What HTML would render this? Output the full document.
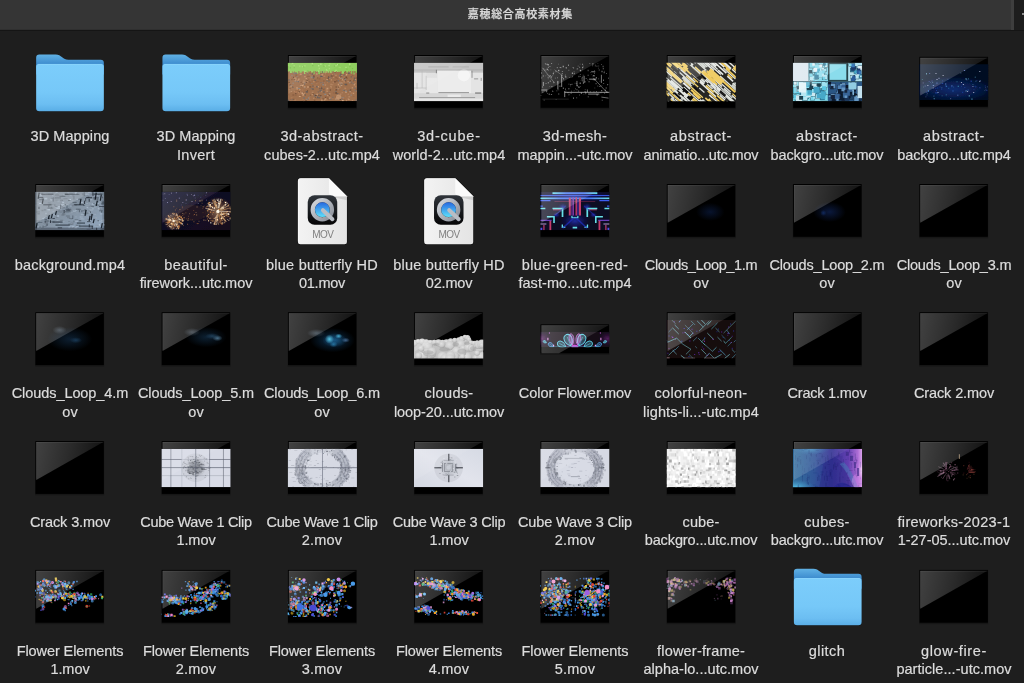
<!DOCTYPE html>
<html lang="ja"><head><meta charset="utf-8"><title>嘉穂総合高校素材集</title>
<style>
html,body{margin:0;padding:0;}
body{width:1024px;height:683px;overflow:hidden;background:#1e1e1e;position:relative;
 font-family:"Liberation Sans","Noto Sans CJK JP",sans-serif;color:#dfdfdf;}
#tb{position:absolute;left:0;top:0;width:1024px;height:31px;background:linear-gradient(to bottom,#353535 0,#353535 29px,#2f2f2f 29px,#2f2f2f 30px,#151515 30px,#151515 31px);}
#tbr{position:absolute;left:1011px;top:0;width:13px;height:30px;background:linear-gradient(to right,#3e3e3e 0,#3e3e3e 3px,#1d1d1d 3px);}
#title{will-change:transform;position:absolute;left:0;top:0;width:1040.7px;text-align:center;line-height:29.6px;font-size:11px;letter-spacing:0.68px;font-weight:500;color:#dadada;white-space:nowrap;-webkit-text-stroke:0.25px #dadada;}
#plus{position:absolute;left:1022px;top:13px;width:2px;height:2px;background:#8c8c8c;}
.ic{position:absolute;width:69px;height:58px;}
.lay{will-change:transform;}
.ic svg{position:absolute;left:0;top:0;overflow:visible;display:block;}
.lb{will-change:transform;position:absolute;width:140px;top:0;height:1px;text-align:center;font-size:14.5px;line-height:18px;white-space:nowrap;color:#dcdcdc;-webkit-text-stroke:0.2px #dcdcdc;}
.lb span{position:absolute;left:0;width:140px;display:block;}
</style></head>
<body>
<div id="tb"></div><div id="tbr"></div><div id="title">嘉穂総合高校素材集</div><div id="plus"></div>
<div class="ic" style="left:36px;top:54px"><svg width="69" height="58" viewBox="0 0 69 58" ><g transform="translate(0.15,0.57)"><defs><linearGradient id="fb0" x1="0" y1="0" x2="0" y2="1"><stop offset="0" stop-color="#60b1e4"/><stop offset="0.45" stop-color="#3f8ed0"/><stop offset="1" stop-color="#3f8ed0"/></linearGradient><linearGradient id="ff0" x1="0" y1="0" x2="0" y2="1"><stop offset="0" stop-color="#7ccdfb"/><stop offset="0.6" stop-color="#76c8f8"/><stop offset="0.85" stop-color="#6cbef2"/><stop offset="1" stop-color="#5aaee6"/></linearGradient></defs><g><path d="M0.3 54 Q0.3 57.3 3.4 57.3 L64.3 57.3 Q67.4 57.3 67.4 54 Z" fill="#000" fill-opacity="0.35"/><path d="M0 3.2 Q0 0 3.2 0 L19.5 0 C22.6 0 24 1.2 26 2.8 C28 4.4 29.2 5.1 32.2 5.1 L64.5 5.1 Q67.7 5.1 67.7 8.3 L67.7 20 L0 20 Z" fill="url(#fb0)"/><path d="M0 12.2 Q0 9.35 2.9 9.35 L64.8 9.35 Q67.7 9.35 67.7 12.2 L67.7 53.4 Q67.7 56.6 64.5 56.6 L3.2 56.6 Q0 56.6 0 53.4 Z" fill="url(#ff0)"/><rect x="1.5" y="9.35" width="64.7" height="0.7" fill="#92d8fd" fill-opacity="0.8"/></g></g></svg></div><div class="lb" style="left:-0.3px"><span style="top:127.1px;letter-spacing:0.06px">3D Mapping</span></div>
<div class="ic" style="left:162px;top:54px"><svg width="69" height="58" viewBox="0 0 69 58" ><g transform="translate(0.44,0.57)"><defs><linearGradient id="fb1" x1="0" y1="0" x2="0" y2="1"><stop offset="0" stop-color="#60b1e4"/><stop offset="0.45" stop-color="#3f8ed0"/><stop offset="1" stop-color="#3f8ed0"/></linearGradient><linearGradient id="ff1" x1="0" y1="0" x2="0" y2="1"><stop offset="0" stop-color="#7ccdfb"/><stop offset="0.6" stop-color="#76c8f8"/><stop offset="0.85" stop-color="#6cbef2"/><stop offset="1" stop-color="#5aaee6"/></linearGradient></defs><g><path d="M0.3 54 Q0.3 57.3 3.4 57.3 L64.3 57.3 Q67.4 57.3 67.4 54 Z" fill="#000" fill-opacity="0.35"/><path d="M0 3.2 Q0 0 3.2 0 L19.5 0 C22.6 0 24 1.2 26 2.8 C28 4.4 29.2 5.1 32.2 5.1 L64.5 5.1 Q67.7 5.1 67.7 8.3 L67.7 20 L0 20 Z" fill="url(#fb1)"/><path d="M0 12.2 Q0 9.35 2.9 9.35 L64.8 9.35 Q67.7 9.35 67.7 12.2 L67.7 53.4 Q67.7 56.6 64.5 56.6 L3.2 56.6 Q0 56.6 0 53.4 Z" fill="url(#ff1)"/><rect x="1.5" y="9.35" width="64.7" height="0.7" fill="#92d8fd" fill-opacity="0.8"/></g></g></svg></div><div class="lb" style="left:125.9px"><span style="top:127.1px;letter-spacing:0.06px">3D Mapping</span><span style="top:146.1px;letter-spacing:0.29px">Invert</span></div>
<div class="ic" style="left:288px;top:55px"><svg width="68.4" height="53" viewBox="0 0 68.4 53" ><g transform="translate(0.03,0.0)"><defs><linearGradient id="gl2" gradientUnits="userSpaceOnUse" x1="0" y1="0" x2="68" y2="14"><stop offset="0" stop-color="#fff" stop-opacity="0.26"/><stop offset="0.5" stop-color="#fff" stop-opacity="0.17"/><stop offset="1" stop-color="#fff" stop-opacity="0.07"/></linearGradient><clipPath id="cp2"><rect x="-0.35" y="7.65" width="69.3" height="38.51"/></clipPath><filter id="bl2" x="-5%" y="-5%" width="110%" height="110%"><feGaussianBlur stdDeviation="0.35"/></filter></defs><g transform="translate(0,0)"><rect x="-0.4" y="0.3" width="69.2" height="54.0" fill="#000" fill-opacity="0.25"/><rect x="0" y="0" width="68.4" height="52.8" fill="#000"/><g clip-path="url(#cp2)"><g filter="url(#bl2)" transform="translate(-0.35,0.555) scale(1.019,1.0135)"><rect x="0" y="7" width="68" height="38" fill="#9f7150"/><path fill="#8a8684" fill-opacity="0.7" d="M15.9 30.8h1.4v1.4h-1.4zM34 26.2h1.4v1.4h-1.4zM54.1 33.6h1.8v1.4h-1.8zM15.8 26.3h1.8v1h-1.8zM50.2 42.1h1v1.4h-1zM32.3 40.1h1.4v1.4h-1.4zM45.4 17.8h1v1h-1zM3.3 19.4h1.8v1h-1.8zM31.3 33h1v1h-1zM2 16.1h1.8v1h-1.8zM21.2 39.4h1v1h-1zM43 15.8h1.8v1h-1.8zM50.3 26.4h1.8v1.4h-1.8zM48.2 32.4h1.8v1h-1.8zM51.3 28.9h1.4v1.4h-1.4zM52 41.1h1v1h-1zM8.2 20h1.4v1.4h-1.4zM6.8 24.4h1.4v1.4h-1.4zM42.1 19.5h1.4v1h-1.4z"/><path fill="#d0a27c" fill-opacity="0.7" d="M40.6 41.4h1.4v1.4h-1.4zM62.9 31.1h1v1.4h-1zM11.6 33.1h1v1h-1zM41.8 16.5h1.4v1h-1.4zM28.1 37.7h1.8v1.4h-1.8zM25 25.4h1.4v1h-1.4zM63.9 36.6h1.4v1.4h-1.4zM42.4 23.5h1v1h-1zM33.2 42.7h1.8v1h-1.8zM43.5 18.8h1v1h-1zM64.8 28.1h1.4v1.4h-1.4zM42 29.9h1v1.4h-1zM19.5 25h1v1h-1zM53.3 22.6h1v1.4h-1zM15.3 43.9h1v1.4h-1z"/><path fill="#b07c58" fill-opacity="1" d="M12.8 35.8h1.8v1.4h-1.8zM37.5 33h1.8v1.4h-1.8zM3 41.2h1.8v1h-1.8zM32.8 19.6h1v1.4h-1zM65.2 27h1.8v1h-1.8zM7.5 35.2h1.8v1.4h-1.8zM12.9 36.9h1.8v1.4h-1.8zM10.3 37.1h1.8v1.4h-1.8zM18.7 35.6h1.4v1h-1.4zM10 35.5h1.8v1.4h-1.8zM32.2 27.2h1v1.4h-1zM26.1 29.5h1.4v1.4h-1.4zM20.3 40.9h1.4v1.4h-1.4zM11.2 17.9h1.8v1h-1.8zM14.6 42.7h1v1.4h-1zM53.7 24h1.8v1h-1.8zM12 29.5h1.4v1.4h-1.4zM62.2 36.2h1.8v1.4h-1.8zM5.8 35h1.4v1.4h-1.4zM20.5 18.6h1v1h-1zM2.8 22.7h1.4v1h-1.4zM50.8 23.1h1v1h-1zM46 33h1.4v1h-1.4z"/><path fill="#85593c" fill-opacity="1" d="M57.7 21.7h1v1.4h-1zM16 15.6h1.8v1.4h-1.8zM12 25.8h1.8v1.4h-1.8zM25.7 43.5h1.4v1h-1.4zM14 27.6h1v1h-1zM40 23.4h1v1.4h-1zM28.9 21.3h1v1.4h-1zM38.9 21.9h1.8v1h-1.8zM64.1 15.6h1.8v1.4h-1.8zM54.9 15.3h1.8v1.4h-1.8z"/><path fill="#93664a" fill-opacity="0.7" d="M52.1 19.6h1.8v1h-1.8zM25.1 37.4h1.4v1.4h-1.4zM11.4 20.2h1.4v1.4h-1.4zM50.4 33.3h1.4v1h-1.4zM29 25h1.8v1h-1.8zM0.6 26.4h1v1h-1zM50.7 23.6h1.8v1h-1.8zM63.9 39.6h1.8v1.4h-1.8zM19.3 18.4h1.4v1h-1.4zM44.4 36.3h1.8v1.4h-1.8zM33.2 28.1h1.4v1h-1.4zM54.8 42.7h1.4v1.4h-1.4zM32.8 29.8h1v1.4h-1zM39.1 35.8h1v1.4h-1zM50.4 20.9h1.8v1h-1.8z"/><path fill="#b07c58" fill-opacity="0.85" d="M55.2 22.8h1.8v1.4h-1.8zM45.3 15.2h1.4v1.4h-1.4zM53.8 41.6h1.8v1h-1.8zM2.4 20.4h1v1.4h-1zM13.6 33.4h1.8v1.4h-1.8zM43.6 41.8h1.4v1.4h-1.4zM49.9 29.6h1.8v1.4h-1.8zM38.7 25.9h1v1.4h-1zM15 16.4h1.4v1h-1.4zM35.2 22.5h1v1.4h-1z"/><path fill="#b98a66" fill-opacity="0.7" d="M48.8 31.7h1v1.4h-1zM60.1 15.6h1.4v1.4h-1.4zM33.9 44h1.4v1h-1.4zM59.6 40h1.8v1.4h-1.8zM44.2 25.9h1v1.4h-1zM43.4 28.3h1.4v1h-1.4zM6.3 34.8h1v1h-1zM6.9 23.7h1.4v1.4h-1.4zM9.3 23.9h1.8v1h-1.8zM15.1 24.4h1.8v1.4h-1.8zM42.1 31.3h1.4v1h-1.4zM5.8 17.3h1.8v1h-1.8zM2.9 43h1v1h-1zM66.9 34.6h1.8v1h-1.8zM41.5 41.5h1.4v1.4h-1.4zM51.3 37.5h1.4v1.4h-1.4zM50.9 26.4h1v1.4h-1zM35.1 19.7h1.8v1.4h-1.8zM54.9 21h1.4v1h-1.4zM7.6 21.8h1.4v1h-1.4zM52.9 23.8h1.8v1.4h-1.8zM49.4 31.9h1.4v1.4h-1.4zM50.6 25.9h1.4v1.4h-1.4z"/><path fill="#93664a" fill-opacity="0.85" d="M9.1 21.3h1.8v1.4h-1.8zM20.9 25.7h1.8v1.4h-1.8zM2.3 42.8h1.4v1h-1.4zM4.1 28.7h1v1h-1zM56 32.5h1v1.4h-1zM27.3 25.2h1.4v1.4h-1.4zM4.6 22.8h1.4v1.4h-1.4zM14.8 43.9h1.8v1h-1.8zM12.1 38.8h1.8v1.4h-1.8zM9.7 24.3h1.4v1h-1.4zM23.1 23.6h1.4v1.4h-1.4zM0.1 37.7h1.4v1.4h-1.4zM62.4 35.3h1.8v1h-1.8zM55.1 27.8h1v1.4h-1zM58.5 34.2h1.4v1.4h-1.4zM44.2 19.1h1v1.4h-1z"/><path fill="#8a8684" fill-opacity="1" d="M60.6 34.8h1v1.4h-1zM60.1 26h1.4v1.4h-1.4zM36 37.6h1.8v1.4h-1.8zM55.9 23.5h1.4v1.4h-1.4zM10.2 32.1h1.8v1h-1.8zM2.5 29.1h1v1.4h-1zM65.4 23.6h1v1h-1zM20 41.1h1v1.4h-1zM52.2 21.9h1.8v1h-1.8z"/><path fill="#74706e" fill-opacity="1" d="M46.6 35.3h1.4v1h-1.4zM63.7 27.1h1v1h-1zM50.4 19.3h1.8v1.4h-1.8zM7.4 17.3h1.8v1h-1.8zM65.8 34.2h1.8v1h-1.8zM15.4 41.1h1.4v1.4h-1.4zM65.6 23.8h1.4v1h-1.4zM41.2 21.6h1.8v1h-1.8zM66.5 43.2h1v1h-1zM65 31.7h1.8v1h-1.8z"/><path fill="#b98a66" fill-opacity="0.85" d="M55.7 31.6h1.4v1h-1.4zM57.2 43.7h1v1.4h-1zM58.9 42.2h1.4v1.4h-1.4zM12.3 17.6h1v1h-1zM2.6 29.3h1v1h-1zM57.5 17.9h1.4v1h-1.4zM58.4 25h1.8v1.4h-1.8zM62.9 43.9h1.4v1h-1.4zM66.1 30.3h1.4v1h-1.4zM6.5 43.4h1.8v1h-1.8zM21.1 42.3h1v1h-1zM11.3 25.6h1.4v1h-1.4zM2.9 35h1.4v1h-1.4zM54.6 25.3h1.8v1.4h-1.8zM65.1 17.1h1.4v1.4h-1.4zM6 22.2h1.4v1h-1.4z"/><path fill="#d0a27c" fill-opacity="0.85" d="M40.5 37.1h1.4v1.4h-1.4zM14.9 36.6h1.8v1.4h-1.8zM3.3 29h1v1h-1zM9.5 24.6h1.8v1.4h-1.8zM52.1 26.7h1.8v1.4h-1.8zM50.2 21h1v1.4h-1zM33.1 18.4h1.8v1.4h-1.8zM12.3 18h1.4v1h-1.4zM42.1 27.8h1v1h-1zM56.3 35.3h1.8v1.4h-1.8zM60.1 16.5h1.4v1h-1.4zM49.8 29.9h1.4v1.4h-1.4z"/><path fill="#93664a" fill-opacity="1" d="M40.2 15.9h1v1.4h-1zM48.3 21.9h1.4v1.4h-1.4zM39.5 42.7h1v1.4h-1zM7 38.6h1.8v1h-1.8zM49.8 39.3h1.8v1h-1.8zM34.5 26.5h1v1.4h-1zM24.9 19.3h1.4v1h-1.4zM11.9 28.1h1.8v1h-1.8zM62.9 19.3h1.8v1h-1.8zM30.4 22.3h1.8v1.4h-1.8zM36.5 39.9h1.8v1.4h-1.8zM14.8 36h1.4v1.4h-1.4z"/><path fill="#5f5c5c" fill-opacity="0.7" d="M17.6 35h1.4v1.4h-1.4zM30.6 32.2h1.4v1h-1.4zM48 36.9h1.8v1.4h-1.8zM31.8 19.8h1.8v1h-1.8zM30.1 41h1.8v1.4h-1.8zM15.8 27.7h1.4v1h-1.4zM16.6 38.3h1.4v1.4h-1.4zM61.7 20.3h1.4v1.4h-1.4zM51.3 17.7h1.8v1.4h-1.8zM50.5 38.8h1v1.4h-1zM37.8 24h1.8v1.4h-1.8zM4.3 31h1.4v1h-1.4zM59.4 16.8h1v1.4h-1z"/><path fill="#85593c" fill-opacity="0.85" d="M20.3 24.8h1.4v1.4h-1.4zM7.6 18.6h1.8v1.4h-1.8zM3.3 22.9h1.4v1.4h-1.4zM39.2 22.7h1v1.4h-1zM47.2 39.9h1.4v1h-1.4zM46.8 21.4h1.4v1h-1.4zM4.5 30h1v1.4h-1zM66.9 21.5h1.4v1.4h-1.4zM18.7 19.9h1v1.4h-1zM58.8 36.6h1.4v1h-1.4zM18.9 35.3h1v1h-1zM64 24.2h1v1.4h-1zM55.8 18.2h1.4v1h-1.4zM21.2 17h1.4v1h-1.4zM38.2 41.3h1.8v1.4h-1.8z"/><path fill="#6b4a34" fill-opacity="0.85" d="M41.3 33.3h1v1.4h-1zM5.2 20.8h1v1.4h-1zM46.9 30.6h1.4v1h-1.4zM39.8 38.4h1.4v1.4h-1.4zM12.7 29.8h1.4v1h-1.4zM24.6 20.5h1.8v1.4h-1.8zM0.8 25.8h1.4v1.4h-1.4zM10.6 35h1.8v1.4h-1.8zM56.8 20.7h1.4v1.4h-1.4zM61.4 26.2h1.4v1.4h-1.4zM39.7 20.4h1v1h-1zM24.3 16.4h1.8v1.4h-1.8z"/><path fill="#6b4a34" fill-opacity="0.7" d="M45.5 25.2h1.8v1.4h-1.8zM21.3 30.4h1.8v1h-1.8zM4.8 42.5h1.8v1h-1.8zM30 38.5h1v1.4h-1zM60.7 24h1.4v1.4h-1.4zM19 34.1h1v1h-1zM1.6 28.3h1.8v1.4h-1.8zM45.6 15.6h1.8v1h-1.8zM50.4 41.5h1.8v1.4h-1.8zM18.3 24.2h1.8v1h-1.8zM36.6 41h1v1.4h-1zM23.8 37.3h1.8v1h-1.8zM48.3 39.9h1.8v1h-1.8zM56.4 24.1h1v1.4h-1zM32.8 31.8h1.4v1.4h-1.4zM42.2 19.4h1.4v1.4h-1.4zM47.8 24.4h1v1.4h-1zM64.4 23.7h1.8v1h-1.8zM6.5 22.6h1.4v1.4h-1.4zM7.2 36.9h1.4v1.4h-1.4zM56.7 27.9h1.8v1.4h-1.8zM42.9 19.6h1.8v1h-1.8z"/><path fill="#c69872" fill-opacity="1" d="M14.9 38.3h1v1.4h-1zM38.1 31.8h1.8v1.4h-1.8zM16.2 20.5h1.4v1h-1.4zM19 30.4h1.8v1.4h-1.8zM14 38.5h1.4v1h-1.4zM15.7 30.4h1.8v1h-1.8zM35.9 43.1h1v1.4h-1zM36.6 42.2h1.4v1.4h-1.4zM15.1 38h1v1.4h-1zM51.6 21.9h1v1h-1z"/><path fill="#5f5c5c" fill-opacity="1" d="M29.2 35.2h1v1.4h-1zM55.8 27.7h1v1h-1zM28.2 30h1.4v1.4h-1.4zM56.4 27.9h1.4v1.4h-1.4zM0.1 43.5h1.4v1.4h-1.4zM31.3 34.3h1.8v1.4h-1.8zM39.6 21.3h1.4v1.4h-1.4zM32.4 20.2h1.8v1.4h-1.8zM24.3 29.5h1v1.4h-1zM23.4 17.6h1.4v1.4h-1.4zM10.3 25h1v1.4h-1zM54.9 33.9h1v1h-1zM62.2 15.9h1v1h-1z"/><path fill="#74706e" fill-opacity="0.7" d="M43.6 40.7h1.4v1.4h-1.4zM8.5 25.2h1.8v1h-1.8zM3.5 43h1.8v1h-1.8zM30.3 38.2h1.4v1h-1.4zM39.6 24.9h1.8v1.4h-1.8zM13.9 36.2h1v1.4h-1zM5.9 17h1.8v1.4h-1.8zM41.2 42.4h1.8v1.4h-1.8zM54.4 19.2h1.8v1h-1.8z"/><path fill="#b07c58" fill-opacity="0.7" d="M27.9 27.2h1.4v1h-1.4zM18.1 32.1h1.4v1h-1.4zM32.6 21.1h1.8v1.4h-1.8zM36.5 18.5h1.4v1h-1.4zM37.2 16h1.4v1.4h-1.4zM35.8 26.1h1v1.4h-1zM36.1 27.8h1.8v1.4h-1.8zM40.1 17.5h1v1.4h-1zM63.4 23.5h1v1.4h-1zM56.2 39.5h1v1h-1zM50.8 30.8h1.4v1.4h-1.4zM28.7 35.4h1v1.4h-1zM55.3 31.8h1.8v1.4h-1.8z"/><path fill="#d0a27c" fill-opacity="1" d="M13.4 28.8h1.8v1.4h-1.8zM3.3 29h1v1h-1zM29.4 30.3h1.4v1h-1.4zM8.6 32.6h1.4v1h-1.4zM56.9 18.3h1.4v1.4h-1.4zM52.2 28.9h1.4v1h-1.4zM7.5 23.3h1v1h-1zM59.8 15.8h1v1.4h-1zM53.2 43.8h1.8v1.4h-1.8zM39 38.9h1v1h-1zM3.7 29h1v1h-1zM11.4 33.6h1v1h-1zM27.9 17.8h1.4v1h-1.4zM49.2 27.8h1v1.4h-1zM11 39.8h1.8v1h-1.8zM37.9 23.4h1.8v1h-1.8zM10.5 22.6h1v1.4h-1zM17.7 22.2h1v1h-1zM13.7 36.5h1.4v1.4h-1.4z"/><path fill="#74706e" fill-opacity="0.85" d="M14.8 18.5h1v1h-1zM32.1 26.1h1v1.4h-1zM59.7 33.8h1.8v1h-1.8zM40.3 36.1h1v1h-1zM66.6 43.9h1v1h-1zM35.5 32.3h1v1h-1zM27 24.2h1v1h-1zM61.9 25.5h1.4v1.4h-1.4zM5.1 16h1.4v1.4h-1.4zM28.5 39.6h1.4v1h-1.4zM49.1 24.1h1.4v1.4h-1.4zM22.7 31.9h1.8v1.4h-1.8zM25.7 39.7h1.8v1h-1.8zM52.3 42.5h1.8v1h-1.8zM26 38.4h1.4v1.4h-1.4zM32.2 33.4h1.4v1.4h-1.4zM18.9 17.5h1.4v1h-1.4zM19.3 42.4h1v1.4h-1zM55.3 22.3h1.4v1.4h-1.4z"/><path fill="#8a8684" fill-opacity="0.85" d="M61.8 38.4h1v1.4h-1zM56.5 34.5h1.8v1.4h-1.8zM46.9 42.3h1.4v1.4h-1.4zM4.8 26.6h1v1.4h-1zM18.1 42.5h1.4v1.4h-1.4zM24.8 20.3h1.4v1h-1.4zM22.7 20.7h1.8v1.4h-1.8zM23.3 27h1v1h-1zM53.6 40.8h1.4v1h-1.4zM33.9 28.1h1.8v1.4h-1.8z"/><path fill="#85593c" fill-opacity="0.7" d="M21.6 38.8h1v1h-1zM1.5 32h1.8v1h-1.8zM7.4 19.9h1.4v1h-1.4zM31.4 32h1v1.4h-1zM19.8 22.9h1.4v1h-1.4zM66.6 32.7h1.4v1h-1.4zM34.7 24.5h1.4v1h-1.4zM4.6 38.3h1.8v1.4h-1.8zM1.5 33h1v1.4h-1zM31.8 16.7h1.8v1h-1.8zM22.3 38.2h1v1.4h-1zM51.3 19.9h1.8v1.4h-1.8zM34.8 32.8h1.4v1.4h-1.4z"/><path fill="#5f5c5c" fill-opacity="0.85" d="M26.1 23.8h1.4v1h-1.4zM59.4 16.5h1.8v1.4h-1.8zM18.2 35.2h1.8v1.4h-1.8zM33.4 15.5h1.4v1.4h-1.4zM30.5 16.1h1.4v1.4h-1.4zM32.7 31.3h1v1.4h-1zM0.5 23.7h1.8v1h-1.8zM24 32.4h1.8v1.4h-1.8zM24.6 21.5h1.4v1.4h-1.4zM2.9 29.2h1.8v1h-1.8zM52.4 27.6h1.4v1h-1.4zM34.9 35.3h1.4v1.4h-1.4zM64.9 21.7h1.4v1.4h-1.4zM28.3 40.7h1.8v1.4h-1.8z"/><path fill="#b98a66" fill-opacity="1" d="M8.3 31.1h1.8v1.4h-1.8zM46.3 42.2h1.8v1.4h-1.8zM53.5 16.1h1.8v1h-1.8zM24.8 41.7h1.4v1h-1.4zM2.5 29.5h1.8v1.4h-1.8zM46.5 18.9h1.8v1h-1.8zM10.3 35.6h1v1.4h-1zM56 32.2h1.4v1h-1.4zM36.3 28.5h1.4v1.4h-1.4zM40.9 22h1v1.4h-1zM58.9 37.2h1v1.4h-1zM44.6 20.8h1v1.4h-1zM11.9 35.3h1v1.4h-1z"/><path fill="#6b4a34" fill-opacity="1" d="M55.5 22h1v1h-1zM26.9 40.7h1v1h-1zM31.4 39.2h1.8v1h-1.8zM50.5 42.9h1.8v1h-1.8zM17.8 26.1h1v1h-1zM26.7 38.9h1.8v1h-1.8zM25 19.7h1.4v1.4h-1.4zM49.5 30.4h1.4v1.4h-1.4zM20.4 20h1v1h-1zM46.8 33.2h1.8v1.4h-1.8zM46.7 36.2h1.8v1.4h-1.8zM34.2 42.2h1v1.4h-1zM17.5 43.8h1v1h-1zM61.1 33.5h1.4v1h-1.4zM29.8 17.5h1.4v1h-1.4z"/><path fill="#c69872" fill-opacity="0.85" d="M32.4 35.3h1.4v1h-1.4zM66.2 23.1h1v1h-1zM60.8 34.9h1v1.4h-1zM32.8 43.6h1.4v1.4h-1.4zM37.9 34.8h1.8v1h-1.8zM37.3 15.6h1.4v1.4h-1.4zM12 28.7h1.4v1h-1.4zM23.4 37.8h1.4v1.4h-1.4zM59.4 42.8h1.4v1h-1.4z"/><path fill="#c69872" fill-opacity="0.7" d="M23.6 35.8h1.8v1h-1.8zM52.5 19.2h1.4v1h-1.4zM1 33.2h1v1h-1zM36.6 16.4h1v1.4h-1zM27.4 40.3h1v1h-1zM14.7 25.8h1.8v1h-1.8zM53 36.3h1v1h-1zM15.1 28.3h1v1.4h-1zM49.9 30.4h1.8v1h-1.8zM60.6 26.4h1.8v1h-1.8zM6.5 21.7h1.8v1.4h-1.8z"/><rect x="0" y="7" width="68" height="8.3" fill="#8fce5f"/><path fill="#96d466" d="M0 15h1.8v0.8h-1.8zM2.3 15h1.8v2.1h-1.8zM16.1 15h1.2v3.3h-1.2zM18.4 15h1.8v1.6h-1.8zM23 15h1.8v1.6h-1.8zM39.1 15h1.8v2h-1.8zM41.4 15h1.8v2h-1.8zM46 15h1.2v0.8h-1.2zM48.3 15h1.8v1.3h-1.8zM50.6 15h1.2v1.2h-1.2zM52.9 15h2.3v2.9h-2.3z"/><path fill="#8ccb5c" d="M4.6 15h1.8v1.8h-1.8zM6.9 15h2.3v1.5h-2.3zM9.2 15h1.2v2.7h-1.2zM11.5 15h2.3v1.9h-2.3zM13.8 15h1.2v0.7h-1.2zM20.7 15h1.2v0.7h-1.2zM27.6 15h1.8v1.1h-1.8zM32.2 15h1.2v2.3h-1.2zM34.5 15h1.8v2h-1.8zM36.8 15h1.2v1.7h-1.2zM43.7 15h1.2v0.8h-1.2zM55.2 15h1.2v0.9h-1.2zM57.5 15h1.8v1.6h-1.8z"/><path fill="#84c456" d="M25.3 15h1.2v3.3h-1.2zM29.9 15h1.8v3.4h-1.8zM59.8 15h1.2v0.8h-1.2zM62.1 15h1.2v2.9h-1.2zM64.4 15h1.2v3.6h-1.2zM66.7 15h1.8v2h-1.8z"/><path fill="#b0e480" d="M36 9.7h1.3v1.3h-1.3zM46.8 9.1h1.3v1.3h-1.3zM31.9 7.9h1.3v1.3h-1.3zM60.1 8.4h1.3v1.3h-1.3zM46.8 14h1.3v1.3h-1.3zM60.2 7.6h1.3v1.3h-1.3zM56.6 11.1h1.3v1.3h-1.3zM60.3 7.9h1.3v1.3h-1.3zM48.4 8.3h1.3v1.3h-1.3zM16.1 9.6h1.3v1.3h-1.3zM29.7 14.7h1.3v1.3h-1.3zM37.5 13.5h1.3v1.3h-1.3zM23.5 7.2h1.3v1.3h-1.3zM29.8 9.4h1.3v1.3h-1.3zM4.2 7.1h1.3v1.3h-1.3zM40 9.3h1.3v1.3h-1.3z"/><path fill="#a4dd72" d="M38 14.2h1.3v1.3h-1.3zM46.4 14.7h1.3v1.3h-1.3zM15.6 14.8h1.3v1.3h-1.3zM17.1 15h1.3v1.3h-1.3zM14 10.2h1.3v1.3h-1.3zM40.7 7.6h1.3v1.3h-1.3zM40.3 12.2h1.3v1.3h-1.3zM11.2 9.7h1.3v1.3h-1.3zM35.7 9.5h1.3v1.3h-1.3zM5.7 9.2h1.3v1.3h-1.3zM30.4 12.1h1.3v1.3h-1.3z"/><path fill="#7fc04f" d="M57.5 12.7h1.3v1.3h-1.3zM15.1 10.6h1.3v1.3h-1.3zM45.3 9.7h1.3v1.3h-1.3zM35 9.9h1.3v1.3h-1.3zM5.9 11.2h1.3v1.3h-1.3zM46.9 7.5h1.3v1.3h-1.3zM19 14.6h1.3v1.3h-1.3zM60.6 9.8h1.3v1.3h-1.3zM49.5 8.4h1.3v1.3h-1.3zM34.5 7.2h1.3v1.3h-1.3zM2 11.4h1.3v1.3h-1.3zM24 9.2h1.3v1.3h-1.3zM63 12.2h1.3v1.3h-1.3z"/><path fill="#9ad868" d="M3.4 7.5h1.3v1.3h-1.3zM0.2 8.9h1.3v1.3h-1.3zM45.4 14.9h1.3v1.3h-1.3zM29.4 13.9h1.3v1.3h-1.3zM0.7 13.7h1.3v1.3h-1.3zM16.1 9.6h1.3v1.3h-1.3zM49.9 11h1.3v1.3h-1.3zM51 11.2h1.3v1.3h-1.3zM58.8 10.8h1.3v1.3h-1.3zM46.8 10h1.3v1.3h-1.3z"/><path fill="#c99b76" fill-opacity="0.8" d="M47.4 41a2.6 2.6 0 1 0 5.2 0a2.6 2.6 0 1 0 -5.2 0z"/></g></g><clipPath id="cq2"><rect x="0" y="0" width="68.4" height="7.65"/></clipPath><polygon points="0.8,0.95 67.9,0.95 0.8,38.8" fill="url(#gl2)" clip-path="url(#cq2)"/><polygon points="0.8,0.95 67.9,0.95 0.8,38.8" fill="url(#gl2)" clip-path="url(#cp2)" opacity="0.3"/><rect x="0.8" y="0.95" width="67.1" height="0.8" fill="#fff" fill-opacity="0.07"/><rect x="0.8" y="0.95" width="0.7" height="36.8" fill="#fff" fill-opacity="0.05"/></g></g></svg></div><div class="lb" style="left:252.2px"><span style="top:127.1px;letter-spacing:0.48px">3d-abstract-</span><span style="top:146.1px;letter-spacing:0.03px">cubes-2...utc.mp4</span></div>
<div class="ic" style="left:414px;top:55px"><svg width="68.4" height="53" viewBox="0 0 68.4 53" ><g transform="translate(0.32,0.0)"><defs><linearGradient id="gl3" gradientUnits="userSpaceOnUse" x1="0" y1="0" x2="68" y2="14"><stop offset="0" stop-color="#fff" stop-opacity="0.26"/><stop offset="0.5" stop-color="#fff" stop-opacity="0.17"/><stop offset="1" stop-color="#fff" stop-opacity="0.07"/></linearGradient><clipPath id="cp3"><rect x="-0.35" y="7.65" width="69.3" height="38.51"/></clipPath><filter id="bl3" x="-5%" y="-5%" width="110%" height="110%"><feGaussianBlur stdDeviation="0.35"/></filter></defs><g transform="translate(0,0)"><rect x="-0.4" y="0.3" width="69.2" height="54.0" fill="#000" fill-opacity="0.25"/><rect x="0" y="0" width="68.4" height="52.8" fill="#000"/><g clip-path="url(#cp3)"><g filter="url(#bl3)" transform="translate(-0.35,0.555) scale(1.019,1.0135)"><rect x="0" y="7" width="68" height="38" fill="#dedede"/><rect x="0" y="7" width="68" height="7.5" fill="#c4c4c4"/><path fill="#bdbdbd" d="M0 14h22v3h-22z"/><path fill="#c2c2c2" d="M56 14h12v3h-12z"/><rect x="23" y="15.2" width="33" height="22" fill="#ececec"/><path fill="#f6f6f6" fill-opacity="0.9" d="M43 19.5a6 6 0 1 0 12 0a6 6 0 1 0 -12 0z"/><rect x="0" y="17" width="12" height="20" fill="#e2e2e2"/><rect x="12" y="22" width="11" height="15" fill="#e8e8e8"/><rect x="56" y="17" width="12" height="20" fill="#e4e4e4"/><path fill="none" stroke="#aaa" stroke-width="0.7" d="M0 14.2L68 14.2"/><path fill="none" stroke="#9a9a9a" stroke-width="0.6" d="M14 11.2L34 11.2"/><path fill="none" stroke="#a5a5a5" stroke-width="0.6" d="M38 11.2L54 11.2"/><path fill="none" stroke="#777" stroke-width="1" d="M22 14L22 17.5"/><path fill="none" stroke="#888" stroke-width="0.8" d="M57 15L57 22M59 23L63 23M66 22L66 25"/><path fill="none" stroke="#b5b5b5" stroke-width="0.6" d="M8 14L8 32"/><path fill="none" stroke="#bbb" stroke-width="0.6" d="M12 20L12 34"/><path fill="none" stroke="#aaa" stroke-width="0.6" d="M3 27L3 33"/><path fill="none" stroke="#b0b0b0" stroke-width="0.6" d="M0 32L12 32"/><rect x="0" y="37.2" width="68" height="7.8" fill="#d6d6d6"/><path fill="#eaeaea" d="M33 38.5h13v2.5h-13z"/><path fill="none" stroke="#888" stroke-width="1" d="M12 37L15 37"/><path fill="none" stroke="#8a8a8a" stroke-width="0.9" d="M24 36.6L54 36.6"/><path fill="none" stroke="#777" stroke-width="1.2" d="M60 37L66 37"/><path fill="none" stroke="#8c8c8c" stroke-width="0.8" d="M5 41.5L60 41.5"/><rect x="0" y="42.5" width="68" height="2.5" fill="#e6e6e6"/></g></g><clipPath id="cq3"><rect x="0" y="0" width="68.4" height="7.65"/></clipPath><polygon points="0.8,0.95 67.9,0.95 0.8,38.8" fill="url(#gl3)" clip-path="url(#cq3)"/><polygon points="0.8,0.95 67.9,0.95 0.8,38.8" fill="url(#gl3)" clip-path="url(#cp3)" opacity="0.4"/><rect x="0.8" y="0.95" width="67.1" height="0.8" fill="#fff" fill-opacity="0.07"/><rect x="0.8" y="0.95" width="0.7" height="36.8" fill="#fff" fill-opacity="0.05"/></g></g></svg></div><div class="lb" style="left:378.5px"><span style="top:127.1px;letter-spacing:0.78px">3d-cube-</span><span style="top:146.1px;letter-spacing:0.09px">world-2...utc.mp4</span></div>
<div class="ic" style="left:540px;top:55px"><svg width="68.4" height="53" viewBox="0 0 68.4 53" ><g transform="translate(0.61,0.0)"><defs><linearGradient id="gl4" gradientUnits="userSpaceOnUse" x1="0" y1="0" x2="68" y2="14"><stop offset="0" stop-color="#fff" stop-opacity="0.26"/><stop offset="0.5" stop-color="#fff" stop-opacity="0.17"/><stop offset="1" stop-color="#fff" stop-opacity="0.07"/></linearGradient><clipPath id="cp4"><rect x="-0.35" y="7.65" width="69.3" height="38.51"/></clipPath><filter id="bl4" x="-5%" y="-5%" width="110%" height="110%"><feGaussianBlur stdDeviation="0.3"/></filter></defs><g transform="translate(0,0)"><rect x="-0.4" y="0.3" width="69.2" height="54.0" fill="#000" fill-opacity="0.25"/><rect x="0" y="0" width="68.4" height="52.8" fill="#000"/><g clip-path="url(#cp4)"><g filter="url(#bl4)" transform="translate(-0.35,0.555) scale(1.019,1.0135)"><path fill="#fff" fill-opacity="0.3" d="M30.8 27.7h1v1h-1zM12.6 25.9h1.2v1.4h-1.2zM40.5 21.7h1v1.4h-1zM4.5 7.6h1.2v0.8h-1.2zM66.7 21.7h0.8v1.4h-0.8zM1 22.2h0.8v0.8h-0.8zM48.1 7.4h1v1h-1zM46.4 14h1.2v0.8h-1.2zM28.5 21.2h1v1h-1zM56.6 12h1v0.8h-1zM21.1 15.5h1.2v0.8h-1.2zM38 38.5h1v0.8h-1zM50.9 9.6h1v1h-1zM4.1 13.5h1v1.4h-1zM6.3 12.1h1v1h-1zM5.1 27.2h1.2v0.8h-1.2zM25 12.3h1.2v0.8h-1.2zM51.3 19.7h1v1h-1zM38.8 18.4h1.2v0.8h-1.2zM27.6 14h1v0.8h-1zM46.5 14.4h1v1h-1zM12.2 17.1h1v1.4h-1zM58.9 36.5h1.2v0.8h-1.2zM11.8 19.4h0.8v1h-0.8zM51.5 23.3h1.2v1h-1.2zM62.6 36.6h1v1h-1zM7.4 22.5h0.8v1h-0.8zM1.6 30.4h1.2v1.4h-1.2zM14.8 15h1.2v1.4h-1.2zM52.9 14.2h0.8v0.8h-0.8zM56.6 22.6h1.2v0.8h-1.2zM27.4 32.4h0.8v0.8h-0.8zM10 13.8h0.8v0.8h-0.8zM52.2 35.3h1v0.8h-1zM1.8 35.6h1.2v0.8h-1.2zM63.7 33.7h1v0.8h-1zM24.8 34.5h0.8v1h-0.8zM18.7 29.6h1.2v1.4h-1.2zM43.1 34.9h0.8v0.8h-0.8zM17.6 8h0.8v0.8h-0.8zM36.8 9.7h0.8v1.4h-0.8zM24.1 19.5h1v1.4h-1zM57 9.8h0.8v1h-0.8zM54.2 27h1.2v1.4h-1.2zM12 35.1h1v0.8h-1zM61.1 10.1h1.2v1.4h-1.2zM6.6 37.2h1v0.8h-1zM31.2 20h1v1.4h-1zM7.4 13.8h0.8v1.4h-0.8zM32.8 15.2h0.8v0.8h-0.8zM41.2 12.8h0.8v1h-0.8zM36.4 12.6h0.8v0.8h-0.8zM0.8 21h1.2v1h-1.2zM20 11.2h0.8v1.4h-0.8zM8.9 30.3h0.8v0.8h-0.8zM52.4 19.6h1v1.4h-1zM37.3 20h1.2v1.4h-1.2zM39 14.3h1.2v1.4h-1.2zM31.5 11.6h1.2v0.8h-1.2zM11.5 34.6h1v1.4h-1z"/><path fill="#fff" fill-opacity="0.2" d="M6.4 18.2h0.8v1.4h-0.8zM42.4 37.8h0.8v0.8h-0.8zM21.4 15.5h1v0.8h-1zM0 39h1.2v1h-1.2zM14.3 21.6h1.2v1.4h-1.2zM2.9 12.4h1v1h-1zM52.5 19.2h1v1h-1zM5.1 14.7h1.2v0.8h-1.2zM60 29.3h1v0.8h-1zM24.3 18.5h0.8v0.8h-0.8zM32.8 34h1v0.8h-1zM39 30.1h1v1h-1zM53 31.4h1v1h-1zM9.1 20h0.8v1.4h-0.8zM7.4 26.8h1.2v1h-1.2zM48.6 34.9h1.2v1.4h-1.2zM17.8 33.6h0.8v1h-0.8zM62.5 15.1h0.8v1h-0.8zM46.1 23.3h1v1.4h-1zM39 14.4h1.2v0.8h-1.2zM16.6 25.5h1v1.4h-1zM29.2 29.2h0.8v1.4h-0.8zM27.6 14.2h0.8v0.8h-0.8zM4.8 19.6h1v0.8h-1zM43.7 32.9h1v1.4h-1zM55 9.8h1.2v1.4h-1.2zM48.9 16.3h0.8v0.8h-0.8zM39.5 24.1h1v0.8h-1zM56 7.3h1v0.8h-1zM15 42.8h1.2v0.8h-1.2zM35.1 27.1h1.2v1h-1.2zM53.6 10.1h0.8v1h-0.8zM33.6 26.9h1.2v0.8h-1.2zM27.9 37.6h1.2v1h-1.2zM54.8 37.9h1v1.4h-1zM49.7 18.2h0.8v0.8h-0.8zM58 24.9h1v1h-1zM1.3 13.9h0.8v1.4h-0.8zM27.6 27.6h1v1.4h-1zM64.9 34.9h1.2v1.4h-1.2zM30.4 21.2h0.8v0.8h-0.8zM27.4 38h1.2v1.4h-1.2zM41.7 18.8h0.8v1.4h-0.8zM38.6 8h1.2v0.8h-1.2z"/><path fill="#fff" fill-opacity="0.4" d="M12.9 16h0.8v1h-0.8zM44.5 22.1h1.2v0.8h-1.2zM52.9 17h0.8v1h-0.8zM17.5 37.5h1.2v1h-1.2zM41.4 10h1.2v0.8h-1.2zM45.7 33.5h1.2v1h-1.2zM5.1 8.2h1.2v0.8h-1.2zM16.5 21.4h0.8v1h-0.8zM21.2 21.1h1.2v0.8h-1.2zM32.2 11.7h1v1h-1zM10.6 7.4h1v1h-1zM15.8 34.4h1v0.8h-1zM38.8 20.2h1v0.8h-1zM52 19.1h1v1h-1zM57.4 13.7h1v1h-1zM38.7 14.1h1.2v1h-1.2zM9.1 19.2h1.2v1.4h-1.2zM60.4 43.7h0.8v0.8h-0.8zM40.6 22.9h1v1h-1zM35.8 29.1h1v1.4h-1zM32.9 17h1v1.4h-1zM16.2 11.2h1v1.4h-1zM59.8 8.5h0.8v0.8h-0.8zM30.2 34.7h1v0.8h-1zM10.4 37.9h1.2v1h-1.2zM37.3 34.6h0.8v1h-0.8zM29.4 28h1.2v1h-1.2zM47.3 25.3h1.2v1h-1.2zM60 15.1h1.2v1.4h-1.2zM24.9 11.3h1.2v1h-1.2zM29.8 36.7h1v1h-1zM39.8 36.5h1.2v1.4h-1.2zM44.3 36.8h0.8v1.4h-0.8zM46.5 18.9h1v1h-1zM51.2 7.6h1v0.8h-1zM54.5 21.2h1.2v1.4h-1.2zM55.9 38.3h0.8v1h-0.8zM5.6 34.7h1.2v1.4h-1.2zM35.7 12.8h1v1h-1zM61.3 12.6h1.2v1h-1.2zM17.4 14.4h1.2v0.8h-1.2zM21.1 17.1h1v1.4h-1zM7.2 21h1.2v1h-1.2zM56.1 29.6h0.8v1h-0.8zM9.3 24.7h1v1.4h-1zM61.5 27.1h1.2v0.8h-1.2zM8.3 37.5h1v1.4h-1z"/><path fill="#fff" fill-opacity="0.5" d="M43.5 25.5h1.2v0.8h-1.2zM38.3 11h0.8v1h-0.8zM40.9 20.8h1v0.8h-1zM10.8 30.3h1.2v0.8h-1.2zM7.4 26h1v0.8h-1zM35.4 41.4h0.8v0.8h-0.8zM46.6 40.3h1v0.8h-1zM59.8 33.9h1v1.4h-1zM51 8.1h1.2v0.8h-1.2zM22.2 31.6h0.8v1.4h-0.8zM54.7 34.9h0.8v0.8h-0.8zM64.6 17.2h0.8v0.8h-0.8zM32.1 41.3h1v1.4h-1zM26.8 36.3h0.8v0.8h-0.8zM63.4 33.7h0.8v1h-0.8zM37.4 31.1h1.2v1h-1.2zM2.5 19.7h1v1h-1zM41.2 8h0.8v1.4h-0.8zM6.3 13.2h1.2v1h-1.2zM57.9 30.1h1.2v0.8h-1.2zM9 10.3h1v0.8h-1zM34.2 32.4h0.8v0.8h-0.8zM7.2 8.4h1.2v1.4h-1.2zM22 10.1h1.2v1.4h-1.2zM19 11.3h1.2v0.8h-1.2zM64.2 31.6h1v0.8h-1zM38.7 26.7h1v1.4h-1zM7.8 11h0.8v1h-0.8zM27.3 8.9h0.8v1.4h-0.8zM0.7 16.6h1v1h-1zM65.8 28h0.8v1.4h-0.8zM27.8 32.3h0.8v1h-0.8zM3.4 43.6h0.8v0.8h-0.8zM41 11.3h1.2v1h-1.2zM10.5 20.4h0.8v1.4h-0.8zM31 16.7h1.2v1.4h-1.2zM37.4 30.4h1v1h-1zM24.6 20.5h1v1.4h-1zM35.6 33.3h0.8v1h-0.8zM62.3 16.1h0.8v1.4h-0.8zM40.8 24.5h1.2v0.8h-1.2zM12.6 17.4h0.8v1h-0.8zM53.6 9.1h0.8v0.8h-0.8zM61.6 23.7h0.8v1.4h-0.8zM41.8 26.5h1v1.4h-1zM53.1 23.3h0.8v1.4h-0.8zM24.5 32.4h0.8v1.4h-0.8zM46 34.6h0.8v1.4h-0.8zM6.8 8.2h0.8v1h-0.8zM44 35.4h1.2v1h-1.2zM22.5 22.2h0.8v1.4h-0.8zM17.7 14h1v1.4h-1z"/><path fill="none" stroke="#fff" stroke-width="0.9" stroke-opacity="0.62" d="M24 36.3L68 36.3"/><path fill="none" stroke="#fff" stroke-width="0.9" stroke-opacity="0.6" d="M47 38L58 38M17.3 25L17.3 33.5M43 20L43 27M48 23.3L55 23.3"/><path fill="none" stroke="#fff" stroke-width="0.9" stroke-opacity="0.55" d="M21 19L21 31M50 16L54 16M1 34L7 34M24 35L24 41"/><path fill="none" stroke="#fff" stroke-width="0.9" stroke-opacity="0.5" d="M36 25L36 30M60 19L60 27"/><path fill="none" stroke="#fff" stroke-width="1" stroke-opacity="0.5" d="M3 26L3 30"/><path fill="none" stroke="#fff" stroke-width="0.8" stroke-opacity="0.45" d="M52 22L66 37"/><path fill="none" stroke="#fff" stroke-width="0.7" stroke-opacity="0.4" d="M2 12L14 27"/><path fill="none" stroke="#fff" stroke-width="0.7" stroke-opacity="0.35" d="M14 14L22 20"/><path fill="none" stroke="#fff" stroke-width="0.5" stroke-opacity="0.25" d="M28 43L2 43"/><path fill="none" stroke="#fff" stroke-width="0.8" stroke-opacity="0.5" d="M60 41L67 42"/></g></g><polygon points="0.8,0.95 67.9,0.95 0.8,38.8" fill="url(#gl4)"/><rect x="0.8" y="0.95" width="67.1" height="0.8" fill="#fff" fill-opacity="0.07"/><rect x="0.8" y="0.95" width="0.7" height="36.8" fill="#fff" fill-opacity="0.05"/></g></g></svg></div><div class="lb" style="left:504.8px"><span style="top:127.1px;letter-spacing:0.42px">3d-mesh-</span><span style="top:146.1px;letter-spacing:-0.0px">mappin...-utc.mov</span></div>
<div class="ic" style="left:666px;top:55px"><svg width="68.4" height="53" viewBox="0 0 68.4 53" ><g transform="translate(0.9,0.0)"><defs><linearGradient id="gl5" gradientUnits="userSpaceOnUse" x1="0" y1="0" x2="68" y2="14"><stop offset="0" stop-color="#fff" stop-opacity="0.26"/><stop offset="0.5" stop-color="#fff" stop-opacity="0.17"/><stop offset="1" stop-color="#fff" stop-opacity="0.07"/></linearGradient><clipPath id="cp5"><rect x="-0.35" y="7.65" width="69.3" height="38.51"/></clipPath><filter id="bl5" x="-5%" y="-5%" width="110%" height="110%"><feGaussianBlur stdDeviation="0.4"/></filter></defs><g transform="translate(0,0)"><rect x="-0.4" y="0.3" width="69.2" height="54.0" fill="#000" fill-opacity="0.25"/><rect x="0" y="0" width="68.4" height="52.8" fill="#000"/><g clip-path="url(#cp5)"><g filter="url(#bl5)" transform="translate(-0.35,0.555) scale(1.019,1.0135)"><rect x="0" y="7" width="68" height="38" fill="#262624"/><g transform="translate(0,7) rotate(42)"><path fill="#f0cd66" d="M8.8 -42h24.8v1.9h-24.8zM19.6 -38.8h15.5v1.6h-15.5zM2.9 -37.2h21.6v1.6h-21.6zM-12 -35.6h7.6v1.6h-7.6zM15.6 -35.6h14.4v1.9h-14.4zM89.3 -30.8h21.5v1.9h-21.5zM68.5 -21.2h11.3v1.3h-11.3zM21.7 -13.2h15.1v1.3h-15.1zM76.5 -13.2h21.5v1.3h-21.5zM-12 -8.4h25.4v1.6h-25.4zM-12 -2h17.7v1.6h-17.7zM51.6 -0.4h25.5v1.6h-25.5zM73.4 7.6h21.3v1.3h-21.3zM41.6 9.2h24.8v1.9h-24.8zM48.7 10.8h14.2v1.9h-14.2zM82.4 10.8h7.5v1.9h-7.5zM86.6 12.4h20.3v1.6h-20.3zM-12 14h10.8v1.6h-10.8zM84.4 14h17.3v1.3h-17.3zM11.7 15.6h8.9v1.6h-8.9zM77.6 17.2h12.1v1.6h-12.1zM8.6 22h15.2v1.6h-15.2zM49 23.6h20.2v1.6h-20.2zM-12 26.8h16.9v1.3h-16.9zM32.9 30h13.5v1.6h-13.5zM49 30h16.6v1.6h-16.6zM63 31.6h7.8v1.3h-7.8zM40.1 34.8h23.7v1.6h-23.7zM64.4 41.2h13.9v1.6h-13.9zM-12 44.4h16v1.9h-16zM41.1 46h9.5v1.6h-9.5zM68.9 46h19.3v1.6h-19.3z"/><path fill="#e9eae6" d="M36.2 -42h21.5v1.3h-21.5zM75.2 -42h6.3v1.6h-6.3zM84.2 -42h21.3v1.3h-21.3zM52.1 -38.8h17.6v1.3h-17.6zM82.7 -37.2h20.4v1.6h-20.4zM32.4 -35.6h12.7v1.9h-12.7zM69.2 -35.6h22.9v1.6h-22.9zM30.8 -32.4h19.8v1.6h-19.8zM13.5 -30.8h25.1v1.9h-25.1zM53.3 -30.8h7.6v1.6h-7.6zM16 -27.6h17.3v1.6h-17.3zM33.7 -27.6h13.7v1.3h-13.7zM74.4 -26h25.2v1.3h-25.2zM-2.9 -24.4h21.6v1.6h-21.6zM13 -19.6h8.7v1.6h-8.7zM69 -19.6h24.8v1.3h-24.8zM-12 -14.8h13.9v1.3h-13.9zM60.3 -11.6h7v1.3h-7zM24.1 -10h17.4v1.9h-17.4zM37 -8.4h21.4v1.6h-21.4zM72.8 1.2h25v1.6h-25zM12.7 2.8h11.6v1.6h-11.6zM25.6 2.8h9v1.9h-9zM81.5 9.2h22.3v1.6h-22.3zM65.1 10.8h15.9v1.6h-15.9zM31.1 12.4h15.6v1.3h-15.6zM49.7 20.4h8.1v1.9h-8.1zM59.3 25.2h11.1v1.9h-11.1zM26.5 26.8h11.6v1.6h-11.6zM-12 33.2h10.3v1.6h-10.3zM84.9 47.6h18.9v1.9h-18.9zM58.9 50.8h16.9v1.9h-16.9z"/><path fill="#dfe3de" d="M58.1 -42h15.4v1.9h-15.4zM71.6 -38.8h25.1v1.3h-25.1zM-12 -37.2h13.1v1.6h-13.1zM68.5 -37.2h12.2v1.3h-12.2zM4.5 -34h11.8v1.3h-11.8zM45.1 -34h16v1.3h-16zM-12 -30.8h22.6v1.3h-22.6zM18.1 -29.2h23.8v1.3h-23.8zM42.5 -29.2h6.7v1.6h-6.7zM61.8 -29.2h14.1v1.6h-14.1zM-12 -26h14.6v1.6h-14.6zM21.9 -26h17.9v1.6h-17.9zM47.9 -26h24.6v1.3h-24.6zM-12 -21.2h19.6v1.6h-19.6zM51.8 -21.2h14.5v1.3h-14.5zM80.9 -21.2h14.6v1.6h-14.6zM-12 -19.6h22.8v1.9h-22.8zM58.9 -19.6h8.7v1.6h-8.7zM-0.2 -18h17.1v1.6h-17.1zM31.1 -18h8.7v1.6h-8.7zM10.5 -16.4h10.5v1.9h-10.5zM34.6 -14.8h18.4v1.6h-18.4zM82.9 -14.8h21v1.3h-21zM1.8 -13.2h7.2v1.6h-7.2zM46.6 -13.2h20.1v1.3h-20.1zM20.8 -11.6h20.3v1.6h-20.3zM43.9 -11.6h7.1v1.3h-7.1zM52.2 -11.6h7.2v1.6h-7.2zM69.4 -11.6h18.8v1.3h-18.8zM-12 -10h21.8v1.3h-21.8zM79.4 -10h8.6v1.3h-8.6zM66.3 -6.8h9.3v1.3h-9.3zM76.4 -6.8h18.1v1.3h-18.1zM4 -5.2h10.6v1.3h-10.6zM14.7 -5.2h19.4v1.6h-19.4zM82.5 -3.6h22v1.3h-22zM50.6 2.8h7.2v1.9h-7.2zM58.7 2.8h23v1.3h-23zM84.3 2.8h6v1.3h-6zM48.8 4.4h15.2v1.9h-15.2zM64.7 4.4h24.8v1.3h-24.8zM-12 6h25.2v1.3h-25.2zM28.7 6h24.8v1.3h-24.8zM82.5 6h12.9v1.6h-12.9zM-12 9.2h15.2v1.9h-15.2zM15 9.2h15.4v1.6h-15.4zM11.9 10.8h13.3v1.9h-13.3zM31.4 14h12v1.9h-12zM70.2 14h14.2v1.3h-14.2zM83.6 15.6h6.2v1.9h-6.2zM-12 17.2h19v1.6h-19zM26.5 17.2h19.9v1.9h-19.9zM69 17.2h7.4v1.6h-7.4zM-12 18.8h12.5v1.6h-12.5zM30.1 20.4h18.6v1.3h-18.6zM85.5 20.4h11.2v1.6h-11.2zM-12 22h11.9v1.6h-11.9zM44.5 22h13.2v1.6h-13.2zM58.3 22h10.9v1.3h-10.9zM-12 25.2h9.3v1.6h-9.3zM46.4 25.2h10.7v1.9h-10.7zM53.5 26.8h21.1v1.3h-21.1zM38.1 28.4h15.9v1.6h-15.9zM56.5 28.4h6.9v1.6h-6.9zM-12 30h24.4v1.3h-24.4zM67 30h9.8v1.3h-9.8zM-12 31.6h21.4v1.9h-21.4zM85.9 33.2h25.4v1.9h-25.4zM6.1 36.4h22.5v1.6h-22.5zM31 36.4h7.4v1.3h-7.4zM-3 38h9v1.6h-9zM46.8 38h9.2v1.6h-9.2zM59 38h23.4v1.3h-23.4zM83.4 38h22.6v1.3h-22.6zM62.3 39.6h18.3v1.6h-18.3zM-12 41.2h13.3v1.9h-13.3zM1.8 41.2h14.9v1.3h-14.9zM78.8 41.2h15.5v1.9h-15.5zM-12 42.8h23.7v1.6h-23.7zM68.5 44.4h10.4v1.3h-10.4zM-12 47.6h6.1v1.9h-6.1zM-3.2 47.6h12.4v1.9h-12.4zM-12 49.2h24.4v1.9h-24.4zM13.1 49.2h14.8v1.6h-14.8zM49.4 49.2h19.5v1.9h-19.5zM37.5 50.8h20.8v1.3h-20.8z"/><path fill="#f2d470" d="M-12 -40.4h14.9v1.3h-14.9zM-12 -29.2h17.7v1.3h-17.7zM8 -29.2h9.6v1.6h-9.6zM-12 -24.4h6.3v1.6h-6.3zM23.5 -16.4h8.8v1.6h-8.8zM83.7 -16.4h13.2v1.9h-13.2zM43.7 -10h24.3v1.6h-24.3zM23.2 -3.6h15.9v1.3h-15.9zM54.6 -2h17.9v1.9h-17.9zM81.8 -2h24.6v1.9h-24.6zM24 1.2h25.7v1.3h-25.7zM-2.6 2.8h14.3v1.9h-14.3zM34.3 7.6h25.7v1.6h-25.7zM47.5 12.4h16.9v1.3h-16.9zM8.2 17.2h16.6v1.9h-16.6zM-12 20.4h11.4v1.9h-11.4zM-1.5 25.2h20.2v1.9h-20.2zM65.6 28.4h9.4v1.9h-9.4zM77 28.4h14v1.6h-14zM14.6 30h16.1v1.6h-16.1zM11.9 31.6h18.3v1.9h-18.3zM51.1 33.2h20.3v1.3h-20.3zM72.4 33.2h11v1.3h-11zM-12 38h7.7v1.6h-7.7zM39.5 44.4h16v1.9h-16zM81.2 44.4h8.2v1.3h-8.2zM44.1 47.6h19.7v1.3h-19.7zM66.5 47.6h17.3v1.3h-17.3z"/><path fill="#d8dcd6" d="M5.2 -40.4h25.2v1.3h-25.2zM80 -40.4h24.7v1.6h-24.7zM8.4 -32.4h20.1v1.6h-20.1zM62.7 -30.8h24.7v1.6h-24.7zM-12 -22.8h22.3v1.3h-22.3zM19.5 -21.2h14.7v1.6h-14.7zM-12 -18h9v1.9h-9zM10.7 -14.8h21.2v1.6h-21.2zM65 -14.8h15.4v1.3h-15.4zM40.6 -3.6h6.8v1.3h-6.8zM-2 10.8h13.4v1.3h-13.4zM21.8 12.4h8.2v1.6h-8.2zM22.5 15.6h13.8v1.3h-13.8zM71.1 22h19.3v1.3h-19.3zM39.7 26.8h11.9v1.3h-11.9zM-0.4 33.2h6.5v1.3h-6.5zM66.7 34.8h20.5v1.6h-20.5zM27.8 38h17.8v1.6h-17.8zM-12 39.6h24.6v1.6h-24.6zM18.5 41.2h20v1.3h-20zM28.1 46h12.7v1.6h-12.7zM30.4 47.6h12.3v1.9h-12.3z"/><path fill="#efc95a" d="M53.4 -40.4h25.3v1.3h-25.3zM-12 -38.8h17.7v1.9h-17.7zM5.9 -38.8h13.1v1.9h-13.1zM25.8 -37.2h25.6v1.9h-25.6zM47 -35.6h21.8v1.6h-21.8zM-12 -34h15.1v1.9h-15.1zM52.3 -32.4h6.2v1.6h-6.2zM77.8 -32.4h22v1.9h-22zM-12 -27.6h12v1.9h-12zM53 -24.4h21.2v1.9h-21.2zM76 -24.4h20.6v1.6h-20.6zM34.6 -21.2h15.6v1.6h-15.6zM42 -18h9.6v1.9h-9.6zM11.1 -11.6h6.9v1.9h-6.9zM12.4 -10h10.3v1.9h-10.3zM14.8 -8.4h11v1.6h-11zM-12 -6.8h22.2v1.3h-22.2zM10.4 -6.8h9.4v1.9h-9.4zM29.6 -6.8h6.5v1.3h-6.5zM48.7 -6.8h16.5v1.3h-16.5zM-12 -5.2h14.7v1.6h-14.7zM-12 -0.4h21.1v1.6h-21.1zM35.8 2.8h12.5v1.9h-12.5zM39.6 4.4h8.1v1.3h-8.1zM-12 12.4h22.2v1.3h-22.2zM0.4 14h14.8v1.3h-14.8zM64 15.6h17.9v1.9h-17.9zM21.7 18.8h18.2v1.3h-18.2zM1 20.4h19.2v1.6h-19.2zM57.9 20.4h25.4v1.9h-25.4zM27.2 23.6h19.1v1.3h-19.1zM72.8 25.2h15.6v1.6h-15.6zM4.4 28.4h12.8v1.9h-12.8zM17 34.8h20.9v1.6h-20.9zM40.4 36.4h17.9v1.9h-17.9zM36.4 42.8h20.9v1.6h-20.9zM6.7 44.4h21.6v1.6h-21.6zM76.7 50.8h22.5v1.9h-22.5z"/><path fill="#e4e7e2" d="M37.9 -38.8h13.2v1.9h-13.2zM2.9 -27.6h11.9v1.3h-11.9zM32.1 -19.6h10.3v1.9h-10.3zM44.6 -19.6h11.6v1.3h-11.6zM-12 -16.4h20.5v1.3h-20.5zM33.1 -16.4h24.6v1.6h-24.6zM58.2 -16.4h22.6v1.9h-22.6zM53.3 -14.8h9.1v1.6h-9.1zM37.3 -13.2h6.5v1.3h-6.5zM69.7 -10h8.8v1.6h-8.8zM77 -8.4h25.1v1.9h-25.1zM52.4 -5.2h17.5v1.6h-17.5zM73.3 -2h7.6v1.6h-7.6zM-12 1.2h10.1v1.6h-10.1zM32 9.2h7.1v1.9h-7.1zM67.1 9.2h14.4v1.6h-14.4zM27.4 10.8h21.2v1.9h-21.2zM65.8 12.4h20.1v1.3h-20.1zM16.9 14h11.5v1.9h-11.5zM45.4 14h7.1v1.9h-7.1zM42.9 18.8h18.8v1.9h-18.8zM72 31.6h12v1.6h-12zM4.5 34.8h9.6v1.9h-9.6zM37.4 39.6h22.9v1.6h-22.9zM40.4 41.2h11.7v1.3h-11.7zM58.2 42.8h9.5v1.9h-9.5zM79.9 42.8h11.7v1.3h-11.7z"/><path fill="#cfd4ce" d="M62.2 -27.6h8.2v1.9h-8.2zM20.9 -24.4h11.7v1.6h-11.7zM11.9 -22.8h19.7v1.9h-19.7zM51.9 -18h19.4v1.3h-19.4zM6.7 -2h6.5v1.6h-6.5zM14.7 -2h20.1v1.9h-20.1zM11.1 -0.4h22.8v1.9h-22.8zM-12 2.8h7.3v1.9h-7.3zM3.1 4.4h14.8v1.3h-14.8zM-12 7.6h11.9v1.3h-11.9zM12.4 7.6h20.4v1.3h-20.4zM11.3 12.4h10.3v1.9h-10.3zM46.5 17.2h20.3v1.9h-20.3zM62.2 18.8h8.8v1.9h-8.8zM21.2 20.4h8.2v1.6h-8.2zM0.1 22h7.4v1.3h-7.4zM26.7 22h16.8v1.9h-16.8zM71.8 23.6h18.8v1.9h-18.8zM5.9 26.8h17.8v1.6h-17.8zM79.5 30h24v1.6h-24zM54.5 31.6h7.3v1.3h-7.3zM34.2 33.2h14.3v1.9h-14.3zM-12 36.4h16.7v1.6h-16.7zM74.2 36.4h12.2v1.3h-12.2zM13.4 39.6h22.4v1.6h-22.4zM53.5 41.2h9.2v1.9h-9.2zM68.6 42.8h9.9v1.9h-9.9zM52.9 46h15.4v1.3h-15.4zM9.3 47.6h19.9v1.6h-19.9zM71.8 49.2h25.8v1.3h-25.8zM22.9 50.8h12.7v1.9h-12.7z"/><path fill="#1c1c1a" d="M12.3 -15.4h6.6v2h-6.6zM32.1 -1.2h8.1v1.2h-8.1zM67.3 18.2h8v1.2h-8zM33.7 -19h3.7v1.2h-3.7zM54.1 -9.6h4.3v1.2h-4.3zM57.8 -15.5h7v2.6h-7z"/><path fill="#111110" d="M33.7 -14.5h5.9v2h-5.9zM31.4 23.5h8.9v2.6h-8.9zM55.1 27.4h6.7v1.2h-6.7zM37.8 9.7h5v2.6h-5zM28.9 7h6.7v2.6h-6.7zM65.2 12.5h7.3v2.6h-7.3zM41.8 17.1h7v2h-7zM36.3 -0.6h6.8v1.2h-6.8zM26 12.8h8.7v1.2h-8.7zM14.5 -0.8h6.7v2.6h-6.7zM38.3 20.9h8.4v2h-8.4zM55 5.2h3.1v1.2h-3.1zM17.4 25.7h4.7v2h-4.7zM63.3 -1.4h5v2h-5zM28.6 -30h3.7v1.2h-3.7zM25.4 16.1h8.7v2h-8.7zM69.5 -23.7h6.4v2h-6.4zM39.5 7.8h3.3v2.6h-3.3z"/><path fill="#2a2a28" d="M55.5 9.1h6.2v1.2h-6.2zM56.3 -3.9h8.9v2.6h-8.9z"/><rect x="36" y="-25" width="18" height="6" fill="#f0cd66"/><path fill="#efc95a" d="M32 -19h16v3.5h-16z"/><path fill="#f0cd66" d="M6 3h18v3h-18zM52 -44h10v5h-10zM10 14h14v2.5h-14z"/><path fill="#f2d470" d="M2 -6h10v3h-10z"/><path fill="#242422" d="M20 -13h16v4.5h-16z"/><path fill="#1a1a18" d="M6 -2h10v3h-10z"/></g></g></g><polygon points="0.8,0.95 67.9,0.95 0.8,38.8" fill="url(#gl5)"/><rect x="0.8" y="0.95" width="67.1" height="0.8" fill="#fff" fill-opacity="0.07"/><rect x="0.8" y="0.95" width="0.7" height="36.8" fill="#fff" fill-opacity="0.05"/></g></g></svg></div><div class="lb" style="left:631.1px"><span style="top:127.1px;letter-spacing:0.6px">abstract-</span><span style="top:146.1px;letter-spacing:-0.15px">animatio...utc.mov</span></div>
<div class="ic" style="left:793px;top:55px"><svg width="68.4" height="53" viewBox="0 0 68.4 53" ><g transform="translate(0.19,0.0)"><defs><linearGradient id="gl6" gradientUnits="userSpaceOnUse" x1="0" y1="0" x2="68" y2="14"><stop offset="0" stop-color="#fff" stop-opacity="0.26"/><stop offset="0.5" stop-color="#fff" stop-opacity="0.17"/><stop offset="1" stop-color="#fff" stop-opacity="0.07"/></linearGradient><clipPath id="cp6"><rect x="-0.35" y="7.65" width="69.3" height="38.51"/></clipPath><filter id="bl6" x="-5%" y="-5%" width="110%" height="110%"><feGaussianBlur stdDeviation="0.4"/></filter></defs><g transform="translate(0,0)"><rect x="-0.4" y="0.3" width="69.2" height="54.0" fill="#000" fill-opacity="0.25"/><rect x="0" y="0" width="68.4" height="52.8" fill="#000"/><g clip-path="url(#cp6)"><g filter="url(#bl6)" transform="translate(-0.35,0.555) scale(1.019,1.0135)"><rect x="0" y="7" width="68" height="38" fill="#7ed4e6"/><rect x="0" y="7" width="15.5" height="18.5" fill="#d9e5ee"/><rect x="15.5" y="7" width="19" height="18.5" fill="#84d8ea"/><path fill="#1c3c4a" fill-opacity="0.8" d="M31.2 8.7h3v3h-3zM15.6 14.3h3.6v3.6h-3.6zM18.2 19.3h3.9v3.9h-3.9zM27.1 17.4h3.9v3.9h-3.9zM29.6 12.6h3.6v3.6h-3.6zM16.6 18.6h4.5v4.5h-4.5zM20.9 16.4h4.4v4.4h-4.4zM16.6 21.3h3v3h-3zM23.5 8.6h5.4v5.4h-5.4zM15.7 17.3h4.1v4.1h-4.1zM23.4 16.6h5.5v5.5h-5.5zM21 20.7h3.2v3.2h-3.2zM29.4 18.9h4.7v4.7h-4.7zM19.9 11.9h4.4v4.4h-4.4zM16.3 20.4h4v4h-4zM22.9 11.4h5.4v5.4h-5.4zM18.8 7.2h3.2v3.2h-3.2zM28.6 20.6h3.5v3.5h-3.5zM16.9 20.4h4.5v4.5h-4.5zM28 11.5h2.9v2.9h-2.9zM20.7 18.5h5v5h-5zM18.9 13h3.7v3.7h-3.7zM16.4 7.7h3.6v3.6h-3.6zM28.3 14.6h3.5v3.5h-3.5zM16 6.9h5.6v5.6h-5.6zM25.9 8.6h3.4v3.4h-3.4zM30.8 6.7h3.4v3.4h-3.4zM29.8 7.2h2.9v2.9h-2.9zM20.8 8.2h5v5h-5zM26.1 14.2h4.5v4.5h-4.5zM22.2 12.4h4.7v4.7h-4.7z"/><path fill="#cdeaf2" d="M31.6 9h2.3v2.3h-2.3zM23.3 11.8h4.7v4.7h-4.7zM17.3 20.7h3.8v3.8h-3.8zM28.4 11.9h2.2v2.2h-2.2z"/><path fill="#5cc8e2" d="M19.8 23.7h1.8v1.8h-1.8z"/><path fill="#1f4050" d="M16 14.6h2.9v2.9h-2.9zM17 19h3.8v3.8h-3.8z"/><path fill="#9fe2f0" d="M18.5 19.7h3.2v3.2h-3.2zM30 12.9h2.9v2.9h-2.9zM23.8 9h4.7v4.7h-4.7zM16.8 8.1h2.9v2.9h-2.9zM21.2 14.1h2.1v2.1h-2.1zM26.5 14.6h3.8v3.8h-3.8z"/><path fill="#b8e6f2" d="M27.5 17.7h3.2v3.2h-3.2zM16.9 21.6h2.3v2.3h-2.3zM29.8 19.3h4v4h-4zM16.6 20.7h3.3v3.3h-3.3zM27 19.9h1.6v1.6h-1.6z"/><path fill="#46a8c8" d="M21.3 16.8h3.7v3.7h-3.7zM25.7 15.7h2.1v2.1h-2.1zM22.6 12.7h4v4h-4z"/><path fill="#7ad6ea" d="M16.1 17.6h3.4v3.4h-3.4zM21.4 21h2.5v2.5h-2.5zM29 21h2.8v2.8h-2.8zM28.6 14.9h2.8v2.8h-2.8zM16.4 7.2h4.9v4.9h-4.9z"/><path fill="#8adcee" d="M23.7 17h4.8v4.8h-4.8zM19.2 13.3h3v3h-3zM31.2 7h2.7v2.7h-2.7zM25.9 15.3h1.8v1.8h-1.8zM21.1 8.5h4.3v4.3h-4.3z"/><path fill="#e4f2f8" d="M20.2 12.3h3.7v3.7h-3.7zM19.1 7.5h2.5v2.5h-2.5zM26.2 8.9h2.7v2.7h-2.7z"/><path fill="#2e7898" d="M21.1 18.9h4.3v4.3h-4.3zM30.2 7.5h2.2v2.2h-2.2z"/><rect x="34.5" y="7" width="20" height="18.5" fill="#28424a"/><rect x="36" y="8.5" width="16.5" height="15.5" fill="#8adcec"/><rect x="54.5" y="7" width="13.5" height="18.5" fill="#b4e2f0"/><path fill="#1c3c4a" fill-opacity="0.8" d="M54.7 7.4h3.3v3.3h-3.3zM60.5 18.9h4.5v4.5h-4.5zM59.8 14.1h4.2v4.2h-4.2zM62.1 16.8h3.5v3.5h-3.5zM57.5 8h2.9v2.9h-2.9zM63.7 9.9h4.5v4.5h-4.5zM62.4 14.2h4.6v4.6h-4.6zM57.7 20h4.3v4.3h-4.3zM56.1 12.2h4.3v4.3h-4.3zM57.2 11h4.3v4.3h-4.3zM64.3 15.1h3.2v3.2h-3.2zM62.5 15.8h4v4h-4zM56.2 19.3h3.9v3.9h-3.9zM56.8 7.7h4.3v4.3h-4.3zM63.9 18.2h4.4v4.4h-4.4zM56.9 11h4.3v4.3h-4.3zM56.8 21.5h4.3v4.3h-4.3zM58.1 22.1h3.2v3.2h-3.2zM59.1 10.3h3.5v3.5h-3.5zM62.9 12.4h3.7v3.7h-3.7z"/><path fill="#9fe2f0" d="M55.1 7.8h2.6v2.6h-2.6z"/><path fill="#2e7898" d="M63 18.8h1.8v1.8h-1.8zM56.4 12.5h3.6v3.6h-3.6zM57.6 11.3h3.6v3.6h-3.6zM64.2 18.6h3.7v3.7h-3.7z"/><path fill="#b8e6f2" d="M60.9 19.2h3.8v3.8h-3.8zM65.9 19.7h1.7v1.7h-1.7zM56.5 19.6h3.2v3.2h-3.2z"/><path fill="#46a8c8" d="M60.2 14.5h3.5v3.5h-3.5zM57.8 8.3h2.2v2.2h-2.2zM62.9 16.2h3.3v3.3h-3.3z"/><path fill="#cdeaf2" d="M62.4 17.2h2.8v2.8h-2.8z"/><path fill="#e4f2f8" d="M64 10.3h3.8v3.8h-3.8z"/><path fill="#1a3a6a" d="M59.5 19.5h1.7v1.7h-1.7zM57.2 11.4h3.6v3.6h-3.6zM58.5 22.4h2.5v2.5h-2.5zM59.4 10.7h2.8v2.8h-2.8zM63.2 12.7h3v3h-3z"/><path fill="#2a5a9a" d="M62.7 14.6h3.9v3.9h-3.9zM58 20.4h3.6v3.6h-3.6zM57.2 21.9h3.6v3.6h-3.6z"/><path fill="#3a78b8" d="M64.6 15.4h2.5v2.5h-2.5zM57.2 8h3.6v3.6h-3.6z"/><path fill="#7ad6ea" d="M55.8 8.4h1.8v1.8h-1.8z"/><rect x="0" y="25.8" width="34.5" height="19.2" fill="#86daea"/><path fill="#1c3c4a" fill-opacity="0.8" d="M28.9 38.5h5.7v5.7h-5.7zM26.5 39.6h4.3v4.3h-4.3zM0.9 40.4h3.6v3.6h-3.6zM10.7 37.7h5.1v5.1h-5.1zM17.5 30.1h5.5v5.5h-5.5zM28.3 26.4h5.5v5.5h-5.5zM17.3 31.3h6.3v6.3h-6.3zM12.1 32.6h3.3v3.3h-3.3zM5.9 40.8h3.7v3.7h-3.7zM22.1 38h4.7v4.7h-4.7zM8.5 29h5.1v5.1h-5.1zM17 40h4.4v4.4h-4.4zM3.5 29.9h6.4v6.4h-6.4zM4 32.9h3v3h-3zM18.3 31.7h4.8v4.8h-4.8zM26.9 39.4h4.8v4.8h-4.8zM13.6 30.3h6.6v6.6h-6.6zM8.2 41.4h3v3h-3zM7.7 34.3h6v6h-6zM28.3 29.9h4.6v4.6h-4.6zM11.5 27.5h4.8v4.8h-4.8zM3.4 31.3h5.1v5.1h-5.1zM14.4 29.5h6.1v6.1h-6.1zM18.2 27.5h5.3v5.3h-5.3zM24.5 33.5h5.7v5.7h-5.7zM2.7 38.8h6.5v6.5h-6.5zM20.1 30.3h6.6v6.6h-6.6zM14 34h5.1v5.1h-5.1zM12.4 36.1h5.6v5.6h-5.6zM27.2 35h5.5v5.5h-5.5zM17.3 30.3h3.8v3.8h-3.8zM22.7 36h5.7v5.7h-5.7zM13.2 29.8h5.3v5.3h-5.3zM12.7 34.2h6.1v6.1h-6.1zM12.4 27.3h6.2v6.2h-6.2zM18.5 32.8h3.8v3.8h-3.8zM5.8 33.4h4.8v4.8h-4.8zM4.4 39.4h3v3h-3zM20 30.2h4.7v4.7h-4.7zM7.3 38.5h5.1v5.1h-5.1zM0.1 31.4h6.5v6.5h-6.5zM0.5 25.5h3.6v3.6h-3.6zM16.7 34.7h5.5v5.5h-5.5zM28 25.5h4.1v4.1h-4.1zM5.9 39.5h4.5v4.5h-4.5zM11.9 27.5h6.3v6.3h-6.3zM23 37h5.2v5.2h-5.2zM12.2 26.1h6.4v6.4h-6.4zM5.6 25.9h5.3v5.3h-5.3zM9 27.7h5.7v5.7h-5.7zM21.3 29.6h4v4h-4zM0.3 38.5h3.4v3.4h-3.4zM25.6 36.5h3.1v3.1h-3.1zM26.3 29.5h2.9v2.9h-2.9zM27.4 38.4h4.2v4.2h-4.2zM26.9 38.2h5.3v5.3h-5.3zM18.3 32.4h5v5h-5zM10 40h4.5v4.5h-4.5zM6.7 37.5h3.3v3.3h-3.3zM9.4 27.2h6.3v6.3h-6.3zM11.5 25.8h5.4v5.4h-5.4zM23.6 27.3h4v4h-4z"/><path fill="#7ad6ea" d="M29.3 38.9h5v5h-5zM1.2 40.8h2.9v2.9h-2.9zM17.6 31.7h5.6v5.6h-5.6zM7.2 30.9h1.9v1.9h-1.9zM17.4 40.4h3.7v3.7h-3.7zM8.6 41.7h2.3v2.3h-2.3zM6 35.9h1.9v1.9h-1.9zM10.4 27.6h2v2h-2zM20.3 30.5h4v4h-4zM12.3 27.8h5.6v5.6h-5.6z"/><path fill="#9fe2f0" d="M6.3 30.5h1.6v1.6h-1.6zM19.8 40.7h1.9v1.9h-1.9zM28.7 26.7h4.8v4.8h-4.8zM12.4 32.9h2.6v2.6h-2.6zM12.7 27.7h5.5v5.5h-5.5zM4.7 39.7h2.3v2.3h-2.3zM7 31.3h1.7v1.7h-1.7zM28.4 25.8h3.4v3.4h-3.4zM5.9 26.2h4.6v4.6h-4.6zM26.6 29.9h2.2v2.2h-2.2z"/><path fill="#2e7898" d="M26.9 39.9h3.6v3.6h-3.6zM27.3 39.7h4.1v4.1h-4.1zM24.9 33.8h5v5h-5zM23.1 36.3h5v5h-5zM6.2 33.7h4.1v4.1h-4.1zM7 37.8h2.6v2.6h-2.6z"/><path fill="#5cc8e2" d="M11 38h4.4v4.4h-4.4zM28.7 30.2h3.9v3.9h-3.9zM7.6 38.9h4.4v4.4h-4.4zM0.4 31.7h5.8v5.8h-5.8zM0.7 38.9h2.7v2.7h-2.7zM18.6 32.8h4.3v4.3h-4.3zM10.6 35.7h1.8v1.8h-1.8z"/><path fill="#e4f2f8" d="M17.8 30.4h4.8v4.8h-4.8zM17.6 30.6h3.1v3.1h-3.1zM9.7 27.5h5.6v5.6h-5.6z"/><path fill="#cdeaf2" d="M6.3 41.1h3v3h-3zM3.7 31.6h4.4v4.4h-4.4zM18.6 27.9h4.6v4.6h-4.6zM3.1 39.1h5.8v5.8h-5.8zM12.7 36.4h4.9v4.9h-4.9zM0.9 25.9h2.9v2.9h-2.9zM17.1 35h4.8v4.8h-4.8zM9.3 28.1h5v5h-5z"/><path fill="#b8e6f2" d="M22.5 38.3h4v4h-4zM8.9 29.4h4.4v4.4h-4.4zM14 30.7h5.9v5.9h-5.9zM8.1 34.6h5.3v5.3h-5.3zM21.6 30h3.3v3.3h-3.3zM27.7 38.8h3.5v3.5h-3.5zM10.3 40.3h3.8v3.8h-3.8z"/><path fill="#1f4050" d="M3.8 30.2h5.7v5.7h-5.7zM18.6 32h4.1v4.1h-4.1zM14.7 29.9h5.4v5.4h-5.4zM13.6 30.1h4.6v4.6h-4.6zM6.2 39.9h3.8v3.8h-3.8zM12.6 26.5h5.7v5.7h-5.7zM24 27.7h3.3v3.3h-3.3z"/><path fill="#8adcee" d="M4.4 33.3h2.3v2.3h-2.3zM11.9 27.8h4.1v4.1h-4.1zM31.4 34.7h1.8v1.8h-1.8zM13 34.5h5.4v5.4h-5.4zM18.8 33.1h3.1v3.1h-3.1zM26 36.8h2.4v2.4h-2.4z"/><path fill="#46a8c8" d="M20.4 30.7h5.9v5.9h-5.9zM14.3 34.3h4.4v4.4h-4.4zM27.6 35.3h4.8v4.8h-4.8zM23.4 37.4h4.5v4.5h-4.5zM27.2 38.5h4.6v4.6h-4.6zM11.8 26.1h4.7v4.7h-4.7z"/><path fill="#dff2f8" d="M6 26.5h7v10h-7z"/><rect x="34.5" y="25.8" width="33.5" height="19.2" fill="#2c5684"/><path fill="#0a1220" fill-opacity="0.8" d="M61.2 38.3h4.9v4.9h-4.9zM48.6 33.8h4.6v4.6h-4.6zM55.8 39.8h3.5v3.5h-3.5zM37.5 40.7h4.6v4.6h-4.6zM62.7 36.7h4.6v4.6h-4.6zM62.8 39.9h4.7v4.7h-4.7zM50.9 29h5.5v5.5h-5.5zM56.1 26.2h6.1v6.1h-6.1zM61.8 33.3h4.8v4.8h-4.8zM50.3 33.9h6.1v6.1h-6.1zM55 33.4h5.9v5.9h-5.9zM47.3 28.2h4.7v4.7h-4.7zM59.8 39.9h5.2v5.2h-5.2zM54.4 34.9h4.3v4.3h-4.3zM55.4 28.5h4v4h-4zM37.3 27.6h2.9v2.9h-2.9zM43.5 29h5.1v5.1h-5.1zM57.4 25.9h4v4h-4zM50.4 33.5h3.4v3.4h-3.4zM47.3 31.1h4.5v4.5h-4.5zM37.1 37.7h5.8v5.8h-5.8zM37.1 38.5h4.5v4.5h-4.5zM46.1 40.1h3.6v3.6h-3.6zM46.2 27h5.8v5.8h-5.8zM54.5 32.1h4.1v4.1h-4.1zM54.9 28.9h5.3v5.3h-5.3zM51.5 36.5h3.3v3.3h-3.3zM50.4 39.2h3v3h-3zM44.4 36.4h6.1v6.1h-6.1zM59.6 32.3h3.5v3.5h-3.5zM40.4 37.4h5.8v5.8h-5.8zM48.7 38.7h4.8v4.8h-4.8zM47.6 30.1h3.7v3.7h-3.7zM62.2 32.5h3.7v3.7h-3.7zM43.2 39.9h5.1v5.1h-5.1zM62.9 33.4h4.1v4.1h-4.1zM37.1 27.5h5.1v5.1h-5.1zM44.3 32.7h5.6v5.6h-5.6zM36.7 41.3h3.6v3.6h-3.6zM42.6 35.3h4.2v4.2h-4.2zM48.7 36.2h5.7v5.7h-5.7zM43.3 38.6h5.6v5.6h-5.6zM52.8 38h4.3v4.3h-4.3zM43.1 33.9h4.4v4.4h-4.4zM47.7 41.1h3.6v3.6h-3.6zM63.8 30.4h3.6v3.6h-3.6zM47.7 35.4h3.7v3.7h-3.7zM59.7 34.7h5.2v5.2h-5.2zM36.8 29.7h3.5v3.5h-3.5zM43.9 32.6h5.7v5.7h-5.7zM34.6 25.5h3v3h-3zM50.2 39.1h5.3v5.3h-5.3zM43.1 36.9h4v4h-4zM59.9 33h4.5v4.5h-4.5zM49.3 31.5h5.6v5.6h-5.6z"/><path fill="#7eb0d4" d="M61.6 38.7h4.2v4.2h-4.2zM55.4 33.8h5.2v5.2h-5.2zM37.5 38.1h5.1v5.1h-5.1zM46.5 27.4h5.1v5.1h-5.1zM63.6 32.2h1.6v1.6h-1.6zM42.9 35.6h3.5v3.5h-3.5z"/><path fill="#4f82b4" d="M48.9 34.2h3.9v3.9h-3.9zM43.9 29.3h4.4v4.4h-4.4zM55.3 29.2h4.6v4.6h-4.6zM37 41.7h2.9v2.9h-2.9zM43.5 34.2h3.7v3.7h-3.7zM48.1 35.8h3v3h-3zM45.2 31.6h1.7v1.7h-1.7z"/><path fill="#0c1626" d="M35 38.2h1.6v1.6h-1.6zM51.2 29.3h4.8v4.8h-4.8zM56.5 26.6h5.4v5.4h-5.4zM55.7 28.8h3.3v3.3h-3.3zM46.4 40.4h2.9v2.9h-2.9zM44.7 36.8h5.4v5.4h-5.4zM49 39h4.1v4.1h-4.1zM54.5 36.7h1.7v1.7h-1.7zM44.7 33h4.9v4.9h-4.9zM60.1 35h4.5v4.5h-4.5zM53.1 38h1.6v1.6h-1.6zM34.9 25.8h2.3v2.3h-2.3zM43.5 37.3h3.3v3.3h-3.3z"/><path fill="#244468" d="M56.2 40.2h2.8v2.8h-2.8zM35.4 30.1h1.8v1.8h-1.8zM36.5 40.6h1.8v1.8h-1.8zM46.3 26h2v2h-2zM47.9 30.5h3v3h-3zM43.5 40.3h4.4v4.4h-4.4zM60.2 33.3h3.8v3.8h-3.8z"/><path fill="#101c30" d="M37.9 41h3.9v3.9h-3.9zM63 37.1h3.9v3.9h-3.9zM54.8 35.3h3.6v3.6h-3.6zM60 32.6h2.8v2.8h-2.8zM43.7 38.9h4.9v4.9h-4.9zM53.1 38.3h3.6v3.6h-3.6zM48.1 41.5h2.9v2.9h-2.9zM44.3 33h5v5h-5z"/><path fill="#1c3458" d="M45.4 38.2h1.7v1.7h-1.7zM63.1 40.2h4v4h-4zM42.3 40.3h1.8v1.8h-1.8zM62.6 32.8h3v3h-3zM50.6 39.5h4.6v4.6h-4.6zM49.7 31.9h4.9v4.9h-4.9z"/><path fill="#386496" d="M62.1 33.7h4.1v4.1h-4.1zM50.6 34.3h5.4v5.4h-5.4zM47.7 28.6h4v4h-4zM37.7 27.9h2.2v2.2h-2.2zM54.9 32.4h3.4v3.4h-3.4zM51.8 36.9h2.6v2.6h-2.6zM40.8 37.8h5.1v5.1h-5.1zM49.1 36.6h5v5h-5zM56.7 38.5h1.6v1.6h-1.6zM64.2 30.7h2.9v2.9h-2.9z"/><path fill="#6698c4" d="M60.2 40.3h4.5v4.5h-4.5zM57.7 26.3h3.3v3.3h-3.3zM47.7 31.5h3.8v3.8h-3.8zM50.8 39.5h2.3v2.3h-2.3zM42.7 42.5h1.6v1.6h-1.6zM37.4 27.8h4.4v4.4h-4.4zM35.2 39.2h1.6v1.6h-1.6zM42.9 42.5h2.1v2.1h-2.1z"/><path fill="#14243a" d="M50.7 33.9h2.7v2.7h-2.7zM37.5 38.8h3.8v3.8h-3.8zM63.2 33.7h3.4v3.4h-3.4zM56.3 38.3h2.1v2.1h-2.1zM37.1 30h2.8v2.8h-2.8z"/><path fill="#92cce2" d="M54.5 26.5h8v7h-8z"/><path fill="#c4e2f0" d="M63.5 30h4.5v12h-4.5z"/><path fill="none" stroke="#2a4a58" stroke-width="0.7" d="M0 25.6L68 25.6"/><path fill="none" stroke="#5a7a88" stroke-width="0.5" d="M15.5 7L15.5 25.6"/></g></g><polygon points="0.8,0.95 67.9,0.95 0.8,38.8" fill="url(#gl6)"/><rect x="0.8" y="0.95" width="67.1" height="0.8" fill="#fff" fill-opacity="0.07"/><rect x="0.8" y="0.95" width="0.7" height="36.8" fill="#fff" fill-opacity="0.05"/></g></g></svg></div><div class="lb" style="left:757.4px"><span style="top:127.1px;letter-spacing:0.6px">abstract-</span><span style="top:146.1px;letter-spacing:-0.08px">backgro...utc.mov</span></div>
<div class="ic" style="left:919px;top:55px"><svg width="68.4" height="53" viewBox="0 0 68.4 53" ><g transform="translate(0.48,0.0)"><defs><linearGradient id="gl7" gradientUnits="userSpaceOnUse" x1="0" y1="0" x2="68" y2="14"><stop offset="0" stop-color="#fff" stop-opacity="0.26"/><stop offset="0.5" stop-color="#fff" stop-opacity="0.17"/><stop offset="1" stop-color="#fff" stop-opacity="0.07"/></linearGradient><clipPath id="cp7"><rect x="-0.35" y="7.40" width="69.3" height="35.90"/></clipPath><filter id="bl7" x="-5%" y="-5%" width="110%" height="110%"><feGaussianBlur stdDeviation="0.4"/></filter><radialGradient id="bd7" cx="0.5" cy="0.72" r="0.6" gradientTransform="translate(0 0.25) scale(1 0.62)"><stop offset="0" stop-color="#0c2c70"/><stop offset="0.6" stop-color="#061a46"/><stop offset="1" stop-color="#020a20"/></radialGradient></defs><g transform="translate(0,1.8)"><rect x="-0.4" y="0.3" width="69.2" height="51.2" fill="#000" fill-opacity="0.25"/><rect x="0" y="0" width="68.4" height="50.0" fill="#000"/><g clip-path="url(#cp7)"><g filter="url(#bl7)" transform="translate(-0.35,-0.9) scale(1.019,1)"><rect x="0" y="8" width="68" height="36.5" fill="#020a20"/><rect x="0" y="8" width="68" height="36.5" fill="url(#bd7)"/><path fill="#6ab0c8" fill-opacity="0.55" d="M12.7 26.3h1v0.8h-1zM52.3 28h1v0.8h-1z"/><path fill="#4aa0c0" fill-opacity="0.75" d="M54.5 20.8h1.3v0.8h-1.3zM37.8 29.9h1.3v1h-1.3zM51.2 42.6h1.3v1.3h-1.3z"/><path fill="#3a6ad8" fill-opacity="0.4" d="M17.3 36.7h1.3v1h-1.3zM44.2 31.4h1.3v0.8h-1.3zM56.2 24.1h1v0.8h-1zM10.7 26.1h0.8v1h-0.8zM58.9 31.4h1.3v1h-1.3zM53.3 33.3h1v0.8h-1z"/><path fill="#2a50c0" fill-opacity="0.4" d="M53.6 30.1h0.8v0.8h-0.8zM64.2 29.7h1.3v1h-1.3zM15.6 31.8h1.3v1.3h-1.3zM12 27.6h0.8v0.8h-0.8z"/><path fill="#9aa8d0" fill-opacity="0.4" d="M30.4 42h1v1.3h-1zM66.5 30.5h1v0.8h-1zM21.8 31.3h1v1h-1z"/><path fill="#7a9ae0" fill-opacity="0.55" d="M31.5 29.4h1.3v1.3h-1.3zM37.5 38.7h1v1.3h-1z"/><path fill="#6ab0c8" fill-opacity="0.4" d="M33.5 30.7h0.8v0.8h-0.8zM3.8 30.7h0.8v1h-0.8zM26.1 38.2h1v1.3h-1zM14.1 39.7h0.8v1.3h-0.8z"/><path fill="#5a8ae8" fill-opacity="0.75" d="M10 17h0.8v1h-0.8zM46.4 23.3h0.8v1h-0.8zM17.1 26.6h0.8v1.3h-0.8z"/><path fill="#4aa0c0" fill-opacity="0.55" d="M28.6 31.9h1v1h-1zM40.4 16.6h1v1h-1zM2.7 23.1h0.8v1h-0.8zM47.9 22.4h1v1.3h-1zM45.5 34.4h1.3v1h-1.3zM14.2 42h1.3v1.3h-1.3z"/><path fill="#2a50c0" fill-opacity="0.75" d="M22.7 24.5h0.8v0.8h-0.8zM42.4 35.8h0.8v1.3h-0.8zM54.9 30.5h1.3v0.8h-1.3zM31.6 30.6h1v0.8h-1zM16.6 34.4h1v0.8h-1zM15.9 36.3h1.3v1.3h-1.3z"/><path fill="#2a50c0" fill-opacity="0.55" d="M9.3 25h1.3v0.8h-1.3zM50.5 24.7h1.3v1.3h-1.3zM41.3 29.9h0.8v1h-0.8zM42.1 27.8h0.8v1h-0.8zM19.9 30.7h1.3v1h-1.3zM21.7 32.5h1v1.3h-1zM65.9 34.2h1v0.8h-1zM17.5 31.5h1.3v1h-1.3zM12.2 24.5h1v1.3h-1z"/><path fill="#7a9ae0" fill-opacity="0.4" d="M6.3 40.3h0.8v1h-0.8zM59.3 24.1h1.3v1h-1.3zM3.6 26.4h0.8v1.3h-0.8zM64.6 31h0.8v0.8h-0.8zM65.2 32.8h0.8v1h-0.8zM64 34.1h1v0.8h-1z"/><path fill="#9aa8d0" fill-opacity="0.55" d="M45.4 34.8h1.3v0.8h-1.3zM7.6 36.9h1v0.8h-1zM13.3 31.6h1.3v1h-1.3z"/><path fill="#5a8ae8" fill-opacity="0.55" d="M5.4 29.7h1v0.8h-1zM26.2 29.8h1.3v1.3h-1.3zM32.6 34.7h1.3v1h-1.3z"/><path fill="#5a8ae8" fill-opacity="0.4" d="M6.5 35.8h1v1.3h-1zM47.5 33.5h1.3v1.3h-1.3zM27.9 22.9h0.8v1.3h-0.8z"/><path fill="#6ab0c8" fill-opacity="0.75" d="M36.7 25.6h1v0.8h-1zM48.6 39.4h1.3v1.3h-1.3zM45.4 22.3h1.3v1.3h-1.3zM8.4 34.8h1v1.3h-1zM6.7 17.2h1v1.3h-1z"/><path fill="#7a9ae0" fill-opacity="0.75" d="M43.9 14h1.3v1h-1.3zM13.4 29.2h1.3v0.8h-1.3zM25.4 27.5h1.3v1h-1.3z"/><path fill="#9aa8d0" fill-opacity="0.75" d="M52.3 30.2h1v0.8h-1zM19 21.8h1v1.3h-1z"/><path fill="#4aa0c0" fill-opacity="0.4" d="M55.1 24.8h1.3v1h-1.3zM7.3 38.3h0.8v1.3h-0.8zM25.9 29.2h0.8v1.3h-0.8zM22.1 39.3h1v1h-1z"/><path fill="#3a6ad8" fill-opacity="0.75" d="M9 34.2h0.8v1.3h-0.8zM22.3 27h1.3v0.8h-1.3z"/><path fill="#c0c8e0" fill-opacity="0.75" d="M16 17h1.1v1.1h-1.1zM23 19h1.1v1.1h-1.1zM17 23h1.1v1.1h-1.1zM8 29h1.1v1.1h-1.1zM18 36h1.1v1.1h-1.1zM43 28h1.1v1.1h-1.1zM41 26h1.1v1.1h-1.1zM59 15h1.1v1.1h-1.1zM59 25h1.1v1.1h-1.1zM47 35h1.1v1.1h-1.1zM53 36h1.1v1.1h-1.1z"/></g></g><polygon points="0.8,0.95 67.9,0.95 0.8,38.8" fill="url(#gl7)"/><rect x="0.8" y="0.95" width="67.1" height="0.8" fill="#fff" fill-opacity="0.07"/><rect x="0.8" y="0.95" width="0.7" height="36.8" fill="#fff" fill-opacity="0.05"/></g></g></svg></div><div class="lb" style="left:883.7px"><span style="top:127.1px;letter-spacing:0.6px">abstract-</span><span style="top:146.1px;letter-spacing:-0.1px">backgro...utc.mp4</span></div>
<div class="ic" style="left:35px;top:184px"><svg width="68.4" height="53" viewBox="0 0 68.4 53" ><g transform="translate(0.45,0.0)"><defs><linearGradient id="gl8" gradientUnits="userSpaceOnUse" x1="0" y1="0" x2="68" y2="14"><stop offset="0" stop-color="#fff" stop-opacity="0.26"/><stop offset="0.5" stop-color="#fff" stop-opacity="0.17"/><stop offset="1" stop-color="#fff" stop-opacity="0.07"/></linearGradient><clipPath id="cp8"><rect x="-0.35" y="7.65" width="69.3" height="38.51"/></clipPath><filter id="bl8" x="-5%" y="-5%" width="110%" height="110%"><feGaussianBlur stdDeviation="0.4"/></filter><linearGradient id="gc8" x1="0" y1="0" x2="1" y2="1"><stop offset="0" stop-color="#77838f"/><stop offset="0.5" stop-color="#8593a2"/><stop offset="1" stop-color="#92a8c0"/></linearGradient></defs><g transform="translate(0,0)"><rect x="-0.4" y="0.3" width="69.2" height="54.0" fill="#000" fill-opacity="0.25"/><rect x="0" y="0" width="68.4" height="52.8" fill="#000"/><g clip-path="url(#cp8)"><g filter="url(#bl8)" transform="translate(-0.35,0.555) scale(1.019,1.0135)"><rect x="0" y="7" width="68" height="38" fill="url(#gc8)"/><path fill="#b4c4d6" fill-opacity="0.6" d="M7.2 33h2v1.2h-2zM32.8 16.9h4v0.8h-4zM16.7 29.3h3v1.2h-3zM32.7 42.2h1.5v0.8h-1.5zM55.5 41.5h1.5v0.8h-1.5zM55.5 18.5h2v1.6h-2zM61 18.3h1.5v1.2h-1.5zM38.3 35.4h4v1.2h-4zM22.1 21.2h4v1.6h-4zM26 20.5h1.5v0.8h-1.5zM20.2 7.7h2v1.2h-2zM37.1 7.6h4v1.2h-4zM38.3 41.9h3v1.6h-3zM61.5 23h2v1.6h-2zM26.5 16.9h2v1.6h-2zM43.7 31.4h1.5v1.2h-1.5zM23.1 38.2h1.5v0.8h-1.5zM9 13.1h3v1.6h-3zM51.5 34.7h3v1.6h-3zM36.2 41.1h2v1.6h-2z"/><path fill="#5c6772" fill-opacity="0.75" d="M19.5 9.7h4v1.2h-4zM42.5 13.7h1.5v1.6h-1.5zM52.4 20.9h4v0.8h-4zM24.4 15.1h3v1.2h-3zM33.2 33.3h4v0.8h-4zM59 19.4h4v1.6h-4zM40 39.8h2v0.8h-2zM61.2 34.9h1.5v1.2h-1.5zM41.5 39.7h3v0.8h-3zM39.3 19.5h1.5v1.2h-1.5z"/><path fill="#97a6b6" fill-opacity="0.6" d="M58.5 21.6h1.5v1.2h-1.5zM34 9.5h2v1.6h-2zM8.2 37h4v1.2h-4zM55.4 21.6h3v1.6h-3zM61.9 12.2h1.5v1.6h-1.5zM17 26.2h1.5v0.8h-1.5zM9.6 9.1h3v1.2h-3zM8.3 31.9h1.5v1.2h-1.5zM27.6 9.6h2v1.6h-2zM26 35.6h3v1.6h-3zM33 27h4v1.2h-4zM36 15.5h1.5v0.8h-1.5zM51.7 26.6h4v1.6h-4z"/><path fill="#8896a6" fill-opacity="0.75" d="M24 16.6h2v0.8h-2zM60.1 10.5h1.5v1.6h-1.5zM1.9 34.4h1.5v1.6h-1.5zM18.9 28h3v0.8h-3zM47.2 27.2h2v0.8h-2zM25.2 16h1.5v1.2h-1.5zM58.9 39.6h4v0.8h-4zM46.7 31.2h3v0.8h-3zM59.3 23.8h3v0.8h-3zM15.9 33h3v0.8h-3zM45.1 19.4h2v0.8h-2zM37 42h2v1.2h-2zM49.2 33.7h3v1.2h-3zM36.4 9.3h2v1.2h-2zM46.1 42.9h1.5v0.8h-1.5zM60.4 40.3h3v0.8h-3zM36.1 31.1h1.5v1.2h-1.5z"/><path fill="#8896a6" fill-opacity="0.6" d="M44.5 13.1h1.5v0.8h-1.5zM1.9 17.1h4v1.2h-4zM63.2 22.7h3v1.6h-3zM2.3 18.6h1.5v1.6h-1.5zM24.6 21.2h4v1.6h-4zM57.2 27.6h3v1.2h-3zM44.6 43h3v0.8h-3zM54.7 7.1h4v1.6h-4zM28.9 31h3v1.2h-3zM61.4 19.2h2v1.2h-2zM20.7 25.6h3v1.6h-3zM47.2 41.1h1.5v1.2h-1.5zM54.6 9.8h4v1.2h-4zM54.3 37.2h1.5v1.6h-1.5zM23.1 19.1h2v1.6h-2zM47.4 38.9h2v1.2h-2zM8 11.2h3v0.8h-3zM52.2 8.2h4v0.8h-4zM17.4 36.8h1.5v0.8h-1.5zM4.7 11.2h1.5v1.2h-1.5z"/><path fill="#a9b9ca" fill-opacity="0.75" d="M45 17h2v1.2h-2zM8.4 40.2h1.5v0.8h-1.5zM56 23.4h1.5v1.2h-1.5zM8.9 38.7h3v1.2h-3zM54.1 14.4h2v1.2h-2zM15.3 14.3h3v0.8h-3zM25.4 19.3h3v0.8h-3zM60.2 41.6h1.5v0.8h-1.5zM14.9 14.5h2v1.2h-2zM65.5 11.1h2v0.8h-2zM10.6 24.1h4v1.6h-4zM65.1 35h3v1.6h-3zM37 25.7h3v1.2h-3zM4.6 9.5h2v1.6h-2z"/><path fill="#a9b9ca" fill-opacity="0.45" d="M17.1 11.5h1.5v1.2h-1.5zM51.9 7.1h3v1.6h-3zM29.8 19.8h3v0.8h-3zM65.3 35.1h2v0.8h-2zM56.9 28.9h3v0.8h-3zM7.4 8.5h3v0.8h-3zM19.9 41.4h1.5v1.2h-1.5zM32.9 40.9h2v1.2h-2zM53.8 25h3v0.8h-3zM35.5 37.6h2v1.2h-2zM28.1 26.2h1.5v1.6h-1.5zM44.7 41.2h4v1.2h-4zM12.8 36.7h3v0.8h-3zM34.1 20.7h2v1.2h-2zM54.5 21.5h2v1.6h-2z"/><path fill="#5c6772" fill-opacity="0.6" d="M6.2 24.8h2v1.6h-2zM3.7 41.4h2v1.2h-2zM47.1 28.4h4v1.2h-4zM3 43.4h2v0.8h-2zM66.3 41.3h1.5v0.8h-1.5zM20.6 31.9h1.5v0.8h-1.5zM64.4 17.1h3v1.6h-3zM58.1 14.4h4v1.2h-4zM46.8 28.3h2v0.8h-2zM37.3 7.4h1.5v0.8h-1.5zM12.9 32.9h1.5v1.2h-1.5zM49.4 27.5h3v1.2h-3zM32.7 38.4h4v1.6h-4z"/><path fill="#6a7683" fill-opacity="0.6" d="M20.7 24h4v1.6h-4zM52.5 25.3h1.5v1.2h-1.5zM16.1 19.3h2v0.8h-2zM63.4 23.7h2v1.6h-2zM36.3 38h1.5v1.6h-1.5zM57.6 33.5h2v0.8h-2zM9.9 37h3v1.6h-3zM40.5 9.6h1.5v0.8h-1.5zM29.5 11.1h4v0.8h-4z"/><path fill="#8896a6" fill-opacity="0.45" d="M31.8 15.7h4v0.8h-4zM29.6 21.3h1.5v1.2h-1.5zM13.8 26.9h4v0.8h-4zM0 20.2h2v0.8h-2zM8.4 8h4v1.2h-4zM11.4 25.3h2v1.6h-2zM2.1 14.6h1.5v0.8h-1.5zM56.1 20.2h3v1.6h-3zM66.5 39.3h3v1.6h-3zM31.6 27.8h1.5v1.6h-1.5zM26.6 11.3h3v1.6h-3zM22.5 36.7h4v0.8h-4zM14.2 17.1h1.5v1.2h-1.5zM12.7 7.7h4v0.8h-4zM44.8 13.1h2v1.6h-2z"/><path fill="#97a6b6" fill-opacity="0.45" d="M62.9 16.8h3v1.6h-3zM31.4 19.6h3v0.8h-3zM24.7 22.7h2v1.2h-2zM50.6 22.6h2v1.2h-2zM47.8 14.1h1.5v1.6h-1.5zM27.4 21h4v1.2h-4zM58.9 17.6h1.5v1.6h-1.5zM39.1 31h2v1.6h-2zM52.7 18.2h2v1.6h-2zM40.4 27.4h1.5v1.2h-1.5zM49.8 20h4v1.6h-4zM20.8 23.2h3v1.2h-3zM21.8 15.8h4v1.6h-4zM19.4 22.1h4v1.2h-4z"/><path fill="#5c6772" fill-opacity="0.45" d="M42.1 24.4h3v0.8h-3zM25.8 29.3h3v1.6h-3zM54.4 29.3h3v1.2h-3zM37.3 35.5h2v1.6h-2zM12.4 17.5h3v1.2h-3zM25.5 21.1h2v1.2h-2zM64.4 16.1h4v0.8h-4zM26 21.8h3v1.6h-3zM13.5 18.9h3v1.6h-3zM50.6 43.5h4v1.6h-4zM20.5 8.7h2v0.8h-2zM26 10.6h3v1.6h-3zM19.8 15h3v0.8h-3zM30.1 30.2h4v1.6h-4zM35.9 20.5h2v0.8h-2zM24.6 34.7h3v1.2h-3zM50.8 10.4h1.5v0.8h-1.5zM31.4 31.7h3v1.6h-3zM32.4 36.2h2v0.8h-2z"/><path fill="#6a7683" fill-opacity="0.45" d="M34.9 36.8h3v0.8h-3zM36.3 10.6h1.5v1.2h-1.5zM24.5 17.9h2v0.8h-2zM63.8 39.3h2v0.8h-2zM52.4 41.3h3v1.2h-3zM4 12.3h4v1.2h-4zM8.2 37.2h4v1.6h-4zM39.8 39.1h2v1.2h-2zM1.1 27h1.5v0.8h-1.5zM33.4 17.1h4v0.8h-4zM21 10.7h4v1.2h-4zM26.9 28.9h3v1.2h-3zM24.2 15.9h2v1.6h-2zM54.9 9.6h3v0.8h-3zM20.1 25.6h4v1.6h-4zM24.8 25h3v1.6h-3zM51.5 33.7h3v1.6h-3zM45.9 8.5h1.5v1.2h-1.5zM34.7 33h2v1.6h-2zM51.9 11.3h1.5v1.6h-1.5z"/><path fill="#b4c4d6" fill-opacity="0.45" d="M2.1 41.1h2v1.6h-2zM9.8 33.8h2v0.8h-2zM60.3 9.5h1.5v1.6h-1.5zM31.6 7.8h2v1.2h-2zM34 14.6h1.5v0.8h-1.5zM65.1 37h3v0.8h-3zM4.3 42.7h1.5v0.8h-1.5zM39.5 24.9h1.5v1.2h-1.5zM40.3 40.9h2v1.2h-2zM58 9.5h3v1.2h-3zM66.2 34.1h2v1.2h-2zM63.4 9h2v1.6h-2zM49.6 9.1h3v1.2h-3zM63.6 28.4h4v1.2h-4z"/><path fill="#b4c4d6" fill-opacity="0.75" d="M65.8 38.8h3v1.6h-3zM62.5 39h1.5v1.6h-1.5zM21.6 30.2h2v1.6h-2zM50.5 22.4h1.5v0.8h-1.5zM3.9 18.1h3v1.2h-3zM33.7 14.2h1.5v1.6h-1.5z"/><path fill="#97a6b6" fill-opacity="0.75" d="M16.6 32.2h1.5v1.6h-1.5zM16.5 10.3h1.5v0.8h-1.5zM50.4 9.5h3v1.2h-3zM58.9 32.1h2v1.6h-2zM53.1 24h4v1.6h-4zM9.7 27.7h2v1.6h-2zM44.2 30.7h3v1.6h-3z"/><path fill="#6a7683" fill-opacity="0.75" d="M48.1 24.1h2v1.2h-2zM8.8 38.9h4v0.8h-4zM31.7 24.4h4v1.6h-4zM56.8 13.1h4v1.6h-4zM23.8 26.8h3v0.8h-3zM8.3 40.4h3v1.6h-3zM27.8 13.3h4v1.2h-4zM63.3 7.8h2v1.6h-2zM26.6 27.9h1.5v1.6h-1.5zM3.9 8.2h4v0.8h-4zM0.8 26.2h4v1.6h-4zM11.2 29.8h1.5v1.2h-1.5zM63.4 14.7h2v0.8h-2zM0.1 18.3h1.5v1.2h-1.5zM56.9 18.3h1.5v0.8h-1.5zM46.6 25.2h4v1.2h-4zM15.8 12.7h4v1.2h-4zM46.1 8.9h1.5v1.6h-1.5zM0.2 43h2v1.2h-2z"/><path fill="#a9b9ca" fill-opacity="0.6" d="M3.2 9.1h1.5v1.6h-1.5zM1.9 43h3v1.2h-3zM4.3 13h2v1.2h-2zM50.1 18.5h2v0.8h-2zM20.9 22.9h4v1.2h-4zM21 34.9h2v0.8h-2zM56.6 33.7h2v0.8h-2zM62.9 35.7h1.5v1.6h-1.5zM16.4 31.3h2v1.2h-2zM40.6 14h1.5v1.2h-1.5zM44.3 33.4h4v1.2h-4zM34.7 40.6h4v0.8h-4zM24.3 24.5h2v0.8h-2zM44.8 32.5h2v0.8h-2zM44.7 28.8h4v1.2h-4z"/><path fill="#39424c" fill-opacity="0.45" d="M0 7h2v38h-2z"/><path fill="#39424c" fill-opacity="0.3" d="M66 7h2v38h-2z"/><path fill="none" stroke="#3c4652" stroke-width="0.9" stroke-opacity="0.8" d="M40.3 9.5L42.4 9.5M24 11.6L29.7 11.6M50.8 12.6L53.2 12.6M57.2 13.1L62.8 13.1M12.2 23.2L17.9 23.2M42.9 35.7L45.3 35.7M4 14.9L7.8 14.9M29.4 9.6L32.6 9.6M64.8 19.2L67.3 19.2M9.5 36L13.5 36"/><path fill="none" stroke="#4a5560" stroke-width="0.9" stroke-opacity="0.8" d="M36.8 17.6L40.8 17.6M32.3 15.8L34.8 15.8M2.2 28.9L4.6 28.9M40 24.3L44.6 24.3M39.1 9.8L43.5 9.8"/><path fill="none" stroke="#4f5a66" stroke-width="1" stroke-opacity="0.8" d="M43.5 25.2L43.5 27.4M61.5 13.5L61.5 17.1M48.2 7.5L48.2 11.3M29.8 19.2L29.8 20.7M54.4 26.4L54.4 28.1M65.3 25.8L65.3 27.8M66.1 11.8L66.1 13.6M31.3 20.3L31.3 23.3"/><path fill="none" stroke="#3c4652" stroke-width="0.7" stroke-opacity="0.8" d="M17.8 13.9L17.8 16.9M15.9 21.9L15.9 23.6M37 30.5L37 34M7.8 40.5L7.8 42.6M66.9 16.3L66.9 19.6M45.9 25.3L45.9 27.3"/><path fill="none" stroke="#2a323c" stroke-width="0.9" stroke-opacity="0.8" d="M51 36.6L54.3 36.6M30.2 25.2L34.4 25.2M22.3 42.7L26.5 42.7M64.2 43.9L67.9 43.9M17.2 33.5L19.4 33.5M62.7 21.7L68.6 21.7"/><path fill="none" stroke="#2a323c" stroke-width="0.6" stroke-opacity="0.8" d="M19.5 13.2L25.4 13.2M29.2 26.9L34.9 26.9M55.1 21.8L57.8 21.8M62.9 25.9L66.3 25.9M9.3 34.4L11.7 34.4"/><path fill="none" stroke="#1f2630" stroke-width="0.7" stroke-opacity="0.8" d="M13.5 20.5L13.5 22.4M9.9 35.9L9.9 37.8M49.6 13.2L49.6 16.6"/><path fill="none" stroke="#4f5a66" stroke-width="0.7" stroke-opacity="0.8" d="M16.7 13.5L16.7 15M17.9 11.9L17.9 15.6M19.4 19.3L19.4 21.3M32.5 23.3L32.5 25.2M38.1 11L38.1 14.7"/><path fill="none" stroke="#4a5560" stroke-width="0.6" stroke-opacity="0.8" d="M0.6 35.8L4.7 35.8M19.7 21.6L22 21.6M38.8 34.7L42.4 34.7"/><path fill="none" stroke="#3c4652" stroke-width="0.6" stroke-opacity="0.8" d="M46.9 20.6L49 20.6M13.3 33.4L18.9 33.4M65.3 18.1L70.1 18.1M8.5 25L12 25M14.3 36.8L19.1 36.8M29.8 24.3L35.4 24.3M2.3 37.4L7.1 37.4"/><path fill="none" stroke="#1f2630" stroke-width="1" stroke-opacity="0.8" d="M3.8 21.8L3.8 24.2M28.5 25.2L28.5 28.4M56.1 40.8L56.1 43.9M53.1 14.1L53.1 17M15.1 35.3L15.1 38M56.7 7.5L56.7 11.1M60.4 42.6L60.4 45.6M53.2 39.1L53.2 42.2M48.5 16.1L48.5 19.1"/><path fill="none" stroke="#3c4652" stroke-width="1" stroke-opacity="0.8" d="M57.6 8.5L57.6 10.7M11.7 38.7L11.7 41M25.1 20L25.1 24"/><path fill="none" stroke="#10161e" stroke-width="1.2" stroke-opacity="0.9" d="M4 8L3 14M8 14L7 19M45 14L44 20M60 8L59 15M61 16L60 21M65 10L64 16M21 26L20 30M14 30L13 34M50 25L49 31M56 29L55 35M58 34L57 38M2 38L1 43M66 38L65 43M17 29L16 33M54 31L53 36"/><path fill="none" stroke="#161d26" stroke-width="0.9" stroke-opacity="0.85" d="M6 9.5L18 9.5M29 9.5L39 9.5M58 9.5L66 9.5M38 20L48 20M17 37L27 37M20 40L34 40M41 38L49 38M43 41L57 41M8 20L16 20M3 13L8 13M50 13L56 13"/><rect x="0" y="42.5" width="68" height="2.5" fill="#2c343e" fill-opacity="0.45"/></g></g><polygon points="0.8,0.95 67.9,0.95 0.8,38.8" fill="url(#gl8)"/><rect x="0.8" y="0.95" width="67.1" height="0.8" fill="#fff" fill-opacity="0.07"/><rect x="0.8" y="0.95" width="0.7" height="36.8" fill="#fff" fill-opacity="0.05"/></g></g></svg></div><div class="lb" style="left:-0.3px"><span style="top:256.1px;letter-spacing:0.17px">background.mp4</span></div>
<div class="ic" style="left:161px;top:184px"><svg width="68.4" height="53" viewBox="0 0 68.4 53" ><g transform="translate(0.74,0.0)"><defs><linearGradient id="gl9" gradientUnits="userSpaceOnUse" x1="0" y1="0" x2="68" y2="14"><stop offset="0" stop-color="#fff" stop-opacity="0.26"/><stop offset="0.5" stop-color="#fff" stop-opacity="0.17"/><stop offset="1" stop-color="#fff" stop-opacity="0.07"/></linearGradient><clipPath id="cp9"><rect x="-0.35" y="7.65" width="69.3" height="38.51"/></clipPath><filter id="bl9" x="-5%" y="-5%" width="110%" height="110%"><feGaussianBlur stdDeviation="0.4"/></filter><linearGradient id="fw9" x1="0" y1="0" x2="1" y2="1"><stop offset="0" stop-color="#191a34"/><stop offset="0.5" stop-color="#100e22"/><stop offset="1" stop-color="#150c1e"/></linearGradient><radialGradient id="fg9"><stop offset="0" stop-color="#e8b880" stop-opacity="0.6"/><stop offset="0.6" stop-color="#b87848" stop-opacity="0.3"/><stop offset="1" stop-color="#704020" stop-opacity="0"/></radialGradient></defs><g transform="translate(0,0)"><rect x="-0.4" y="0.3" width="69.2" height="54.0" fill="#000" fill-opacity="0.25"/><rect x="0" y="0" width="68.4" height="52.8" fill="#000"/><g clip-path="url(#cp9)"><g filter="url(#bl9)" transform="translate(-0.35,0.555) scale(1.019,1.0135)"><rect x="0" y="7" width="68" height="38" fill="url(#fw9)"/><circle cx="55.5" cy="26.5" r="14.5" fill="url(#fg9)"/><circle cx="12" cy="36" r="10" fill="url(#fg9)"/><ellipse cx="30" cy="28" rx="14" ry="8" fill="#5a3020" fill-opacity="0.22"/><path fill="#e0a868" fill-opacity="0.6" d="M55.9 30.6h1v1h-1zM55.6 38.6h0.8v1h-0.8zM67.4 32.2h1.4v1.4h-1.4zM67.2 22.8h1v0.8h-1zM67 21.2h0.8v0.8h-0.8zM59.4 28.7h1.4v0.8h-1.4zM64.9 29h1.4v1.4h-1.4zM54.5 15.3h1v0.8h-1zM57.2 23.4h1.4v1.4h-1.4zM15.4 38.2h1v1.4h-1zM14.8 36.6h1.4v1.4h-1.4zM5.9 37h1.4v1.4h-1.4zM14.6 43h1.4v0.8h-1.4zM5.1 39.2h1.4v0.8h-1.4zM11.9 28.6h1v0.8h-1z"/><path fill="#e0a868" fill-opacity="1" d="M63.3 29.8h1v0.8h-1zM44.7 25.3h1.4v1h-1.4zM53.7 34.5h0.8v1h-0.8zM59.2 14.8h1v1h-1zM52.1 16h1.4v1h-1.4zM47.7 20.8h1v0.8h-1zM7.1 35.3h0.8v1.4h-0.8zM16.4 42.7h1v1.4h-1z"/><path fill="#ffe8c8" fill-opacity="0.6" d="M48.6 25h0.8v0.8h-0.8zM57.5 25.8h1.4v1h-1.4zM53.7 36.1h0.8v0.8h-0.8zM55.8 37.6h0.8v0.8h-0.8zM53.5 27.5h1.4v0.8h-1.4zM45.4 20.4h1v1.4h-1zM6.7 34.5h1v1.4h-1zM15.3 31.5h1.4v1.4h-1.4zM8.9 30.2h0.8v1h-0.8z"/><path fill="#f0d0a0" fill-opacity="1" d="M59.2 32.4h1.4v1h-1.4zM45.6 23.7h1v0.8h-1zM47 17.1h1v1h-1zM52.1 32.7h0.8v1.4h-0.8zM47.2 19.1h1.4v1h-1.4zM67 33.1h0.8v1.4h-0.8zM62.5 19.3h0.8v1.4h-0.8zM58.5 27.4h0.8v1.4h-0.8zM20.4 35h1.4v1.4h-1.4zM9.3 38h1.4v1.4h-1.4zM14.5 38.5h0.8v1.4h-0.8z"/><path fill="#e0a868" fill-opacity="0.8" d="M51.1 33.3h0.8v0.8h-0.8zM53.9 31.9h1v1h-1zM62.1 28h1.4v0.8h-1.4zM61.8 36.9h0.8v1.4h-0.8zM57.9 16.7h1v1h-1zM56.6 18.8h1.4v1h-1.4zM51.3 38.2h1v1.4h-1zM46.7 23.6h1.4v1.4h-1.4zM55.6 24h0.8v1h-0.8zM48.1 32.8h0.8v0.8h-0.8zM67 23h1v0.8h-1zM11.3 34.1h0.8v0.8h-0.8zM10.7 28.2h1v1h-1zM7.4 36.4h1v1.4h-1zM17.1 36h1v1.4h-1zM6 37.3h0.8v1.4h-0.8z"/><path fill="#f0d0a0" fill-opacity="0.8" d="M53 38.7h1.4v1h-1.4zM54.9 28.5h1v1.4h-1zM45.8 35h1v1.4h-1zM55.9 23.9h0.8v1.4h-0.8zM62.6 16.9h1.4v0.8h-1.4zM61 31.1h1.4v0.8h-1.4zM47 20.7h1.4v1.4h-1.4zM7.3 31.6h0.8v0.8h-0.8zM8.2 40.9h1.4v1.4h-1.4zM17 33.5h1.4v1.4h-1.4z"/><path fill="#d09050" fill-opacity="0.8" d="M44.1 21.2h1.4v0.8h-1.4zM55.9 34.7h0.8v0.8h-0.8zM58.1 37.7h1v1h-1zM52 18.4h1v1.4h-1zM61.9 16.6h0.8v1.4h-0.8zM59.2 38.7h1v0.8h-1zM47.6 21h1.4v0.8h-1.4zM46.1 17.3h1v1.4h-1zM66.8 26.3h1.4v1.4h-1.4zM57.3 33.1h0.8v0.8h-0.8zM60.7 27.5h1.4v0.8h-1.4zM9.3 38.8h1.4v0.8h-1.4zM14.2 28.3h1v1.4h-1zM18.6 37.4h1.4v1.4h-1.4zM12.4 32.5h1v1.4h-1zM20.4 35.5h0.8v1h-0.8z"/><path fill="#ffe8c8" fill-opacity="0.8" d="M48.3 21.6h0.8v0.8h-0.8zM54.2 14h0.8v1h-0.8zM59.9 28.9h1.4v0.8h-1.4zM52.8 31.8h1v1h-1zM58.8 32h0.8v0.8h-0.8zM16.1 32.7h1.4v0.8h-1.4zM12.6 35.3h1.4v1h-1.4zM17.4 31.3h0.8v0.8h-0.8zM19.4 38h1v0.8h-1zM7.7 40.5h0.8v1.4h-0.8zM7.1 33.5h1.4v1h-1.4z"/><path fill="#c07840" fill-opacity="0.8" d="M56.6 24h0.8v1h-0.8zM58.4 34.3h0.8v1.4h-0.8zM44.8 33.6h0.8v1h-0.8zM56.6 29.8h1.4v0.8h-1.4zM48.8 24h0.8v1.4h-0.8zM58.6 38.5h1.4v0.8h-1.4zM52.4 20.6h1.4v1h-1.4zM56.3 36.2h0.8v1.4h-0.8zM11.3 38.8h1v1h-1zM12.4 28.4h1v1h-1zM6.5 30.9h0.8v1.4h-0.8zM11.8 38.7h1.4v1h-1.4z"/><path fill="#ffe8c8" fill-opacity="1" d="M54.2 34h1.4v1.4h-1.4zM59.9 22.5h1.4v1.4h-1.4zM65.7 28.6h1v1.4h-1zM49.7 21.9h1v1.4h-1zM53.3 19.7h0.8v1.4h-0.8zM65 28.1h1v1.4h-1zM55.8 18.3h1.4v1h-1.4zM58.4 32.8h1v1.4h-1zM68.1 23.3h1v1.4h-1zM15.1 38.7h0.8v0.8h-0.8zM8 34.2h1.4v1.4h-1.4zM7.6 35.3h0.8v1h-0.8zM14.6 29.5h1.4v1.4h-1.4z"/><path fill="#c07840" fill-opacity="0.6" d="M43.5 22.1h0.8v0.8h-0.8zM67.1 24.1h1v1.4h-1zM45.7 32h1v0.8h-1zM47.6 26.8h1.4v0.8h-1.4zM48.2 35.3h1.4v0.8h-1.4zM65.4 18.9h0.8v1.4h-0.8zM49.6 21.4h0.8v1h-0.8zM12.9 40.9h1.4v1h-1.4zM15.4 30.8h1v0.8h-1zM19 38.5h0.8v0.8h-0.8z"/><path fill="#fff4e0" fill-opacity="0.6" d="M60.8 28h1v1h-1zM60.7 28.3h1.4v0.8h-1.4zM59 23h0.8v1h-0.8zM63.6 28.5h1v0.8h-1zM64.6 34.2h1v0.8h-1zM56.5 16.2h0.8v1h-0.8zM61.4 35.4h0.8v0.8h-0.8zM4.2 38.9h1v0.8h-1zM19.9 38.3h1.4v1.4h-1.4zM6.4 30.2h1v1h-1zM11.8 42.4h0.8v1.4h-0.8zM10.1 43.6h0.8v0.8h-0.8z"/><path fill="#f0d0a0" fill-opacity="0.6" d="M49.8 28.7h0.8v0.8h-0.8zM47.1 32.7h1v1.4h-1zM56.9 17.8h1.4v1h-1.4zM59.4 37.3h1.4v1.4h-1.4zM47.3 21.9h1.4v0.8h-1.4zM65.4 35h1.4v0.8h-1.4zM47.9 19.4h0.8v1.4h-0.8zM58.8 22h1.4v1.4h-1.4zM59.4 35.1h0.8v0.8h-0.8zM44.4 30.9h0.8v1.4h-0.8zM14.4 43.4h0.8v0.8h-0.8zM17.9 34.4h1.4v1h-1.4zM15.1 40.5h1.4v0.8h-1.4z"/><path fill="#d09050" fill-opacity="0.6" d="M51.9 38.8h1.4v0.8h-1.4zM50.3 15.7h1v0.8h-1zM64.8 20.4h1.4v1.4h-1.4zM47.8 26.7h1v1.4h-1zM52.2 36.7h1v1.4h-1zM44.5 30.1h1.4v1.4h-1.4zM5.8 35.1h0.8v1.4h-0.8zM12.7 39.9h1.4v1h-1.4zM11 37.4h0.8v0.8h-0.8z"/><path fill="#c07840" fill-opacity="1" d="M64.1 26h1.4v1.4h-1.4zM53.6 17.1h1.4v0.8h-1.4zM50.4 27.2h1v0.8h-1zM4.2 33.2h1v1.4h-1zM16.4 40.1h1.4v1.4h-1.4zM17 41.2h1v1.4h-1zM18.9 38.2h1v0.8h-1zM17.4 30.7h1.4v1h-1.4zM19.7 32.9h1.4v1h-1.4zM11.2 37.2h0.8v0.8h-0.8z"/><path fill="#d09050" fill-opacity="1" d="M49.8 35.4h1.4v1h-1.4zM63 26.8h1.4v0.8h-1.4zM45.7 29h1v1h-1zM60.3 33.3h0.8v1h-0.8zM60.5 28.7h1v1.4h-1zM46.1 18.2h1v1.4h-1zM19.7 35.1h1.4v1h-1.4zM15.6 40.9h1.4v1.4h-1.4zM7.1 36h1v1.4h-1zM18.7 31.5h1.4v1.4h-1.4z"/><path fill="#fff4e0" fill-opacity="0.8" d="M55.7 27.2h0.8v0.8h-0.8zM59.3 28.9h1.4v1h-1.4zM48 37h1v1.4h-1zM64 28.2h0.8v1.4h-0.8zM46.9 19.8h1.4v0.8h-1.4zM19.8 34.3h1.4v1h-1.4zM12.3 39.5h1v0.8h-1zM11.7 28.7h0.8v0.8h-0.8z"/><path fill="#fff4e0" fill-opacity="1" d="M49.1 17.9h1.4v0.8h-1.4zM51.5 38.4h0.8v1h-0.8zM57.9 28.7h1.4v1h-1.4zM54.6 14.9h0.8v1h-0.8zM62.4 17.1h1v1h-1zM51.8 22.5h1v1.4h-1zM10.4 33.5h1.4v0.8h-1.4z"/><path fill="#805030" fill-opacity="0.5" d="M25.4 24.1h1v1h-1zM22.2 32.3h1v1h-1zM38.4 20.5h1v1h-1zM14.5 14.6h1v1h-1zM40.3 27.4h1v1h-1zM34.3 37.6h1v1h-1zM31.2 29.6h1v1h-1zM11 27.3h1v1h-1zM15.1 33.4h1v1h-1zM41.1 22.2h1v1h-1zM37.9 15.7h1v1h-1z"/><path fill="#c89868" fill-opacity="0.7" d="M15.9 30.8h1v1h-1zM13.6 30.2h1v1h-1zM37.3 15.6h1v1h-1zM39.4 15h1v1h-1zM34.1 29.6h1v1h-1zM34.5 21.7h1v1h-1zM25.6 34.7h1v1h-1zM14.5 15.8h1v1h-1zM21.7 32.3h1v1h-1z"/><path fill="#c89868" fill-opacity="0.35" d="M29.8 34.2h1v1h-1zM23.1 14.7h1v1h-1zM40.7 21.2h1v1h-1zM41.9 34.6h1v1h-1zM26.2 30.8h1v1h-1zM20.1 22.5h1v1h-1z"/><path fill="#c89868" fill-opacity="0.5" d="M36.4 35.8h1v1h-1zM20.3 28.1h1v1h-1zM21.6 28.5h1v1h-1zM33.5 27h1v1h-1zM40.9 34.6h1v1h-1zM43.1 34.7h1v1h-1zM10.3 28h1v1h-1zM27.2 28.4h1v1h-1z"/><path fill="#a87040" fill-opacity="0.35" d="M20.7 33.8h1v1h-1zM21.8 34.6h1v1h-1zM23.5 27h1v1h-1zM40.2 23h1v1h-1zM41.7 20.6h1v1h-1zM10.4 39h1v1h-1zM39.5 18.3h1v1h-1zM24.3 33.2h1v1h-1zM39.3 16.4h1v1h-1z"/><path fill="#805030" fill-opacity="0.35" d="M13.2 24.6h1v1h-1zM28.2 33.7h1v1h-1zM14.2 23h1v1h-1zM23.5 28.2h1v1h-1z"/><path fill="#805030" fill-opacity="0.7" d="M35.3 38.1h1v1h-1zM13.2 24.6h1v1h-1zM31.2 25.1h1v1h-1zM45 25.4h1v1h-1zM20.4 30.1h1v1h-1zM40.3 21.5h1v1h-1zM13.9 31.2h1v1h-1zM20 21.5h1v1h-1z"/><path fill="#a87040" fill-opacity="0.5" d="M18.6 33.4h1v1h-1zM11.9 28.9h1v1h-1zM41.3 31.6h1v1h-1zM14.5 32.5h1v1h-1zM21.1 39.9h1v1h-1z"/><path fill="#a87040" fill-opacity="0.7" d="M25.2 38.7h1v1h-1zM17.7 24.1h1v1h-1zM32 29h1v1h-1zM35.4 37.9h1v1h-1zM11.7 21.5h1v1h-1zM31.4 36.3h1v1h-1zM18 37h1v1h-1zM26 33.3h1v1h-1zM32.9 15.5h1v1h-1zM45.7 31.3h1v1h-1z"/><path fill="#a0a0d0" fill-opacity="0.7" d="M14.2 7.6h0.9v0.9h-0.9zM32.2 10.4h0.9v0.9h-0.9zM25.1 10h0.9v0.9h-0.9zM24.2 14.8h0.9v0.9h-0.9zM5.5 17.3h0.9v0.9h-0.9z"/><path fill="#c8b8d8" fill-opacity="0.5" d="M29 9.2h0.9v0.9h-0.9zM2.9 8.6h0.9v0.9h-0.9zM17 12.9h0.9v0.9h-0.9zM30.9 10.6h0.9v0.9h-0.9zM43.9 7.7h0.9v0.9h-0.9zM9.2 16.3h0.9v0.9h-0.9z"/><path fill="#7878b8" fill-opacity="0.7" d="M43.8 14.9h0.9v0.9h-0.9zM17.3 12.9h0.9v0.9h-0.9z"/><path fill="#7878b8" fill-opacity="0.35" d="M1.4 8.9h0.9v0.9h-0.9zM43.1 10.5h0.9v0.9h-0.9zM19.1 19.8h0.9v0.9h-0.9zM35.6 10h0.9v0.9h-0.9zM43.5 7.8h0.9v0.9h-0.9z"/><path fill="#a0a0d0" fill-opacity="0.35" d="M23.7 18.1h0.9v0.9h-0.9zM32.7 12.8h0.9v0.9h-0.9zM24.7 9.1h0.9v0.9h-0.9zM38.2 12.1h0.9v0.9h-0.9zM1.2 15.1h0.9v0.9h-0.9z"/><path fill="#c8b8d8" fill-opacity="0.7" d="M29.6 16.3h0.9v0.9h-0.9zM9.4 8h0.9v0.9h-0.9zM20.6 17.1h0.9v0.9h-0.9z"/><path fill="#a0a0d0" fill-opacity="0.5" d="M3.4 13.2h0.9v0.9h-0.9zM35.7 18.3h0.9v0.9h-0.9z"/><path fill="#7878b8" fill-opacity="0.5" d="M32.2 9.5h0.9v0.9h-0.9zM7.2 9.2h0.9v0.9h-0.9z"/><path fill="#fff8e8" d="M53.9 26.5a1.6 1.6 0 1 0 3.2 0a1.6 1.6 0 1 0 -3.2 0z"/><path fill="#fff0d8" d="M10.9 34.9h2.1v2.1h-2.1z"/><path fill="none" stroke="#c07840" stroke-width="0.7" stroke-opacity="0.7" d="M57.6 29.1L63.5 36.5M54.8 29.8L52.8 39M11.8 38.1L11.1 44M13.6 34.6L18.1 30.7M9.9 36.4L4.1 37.6"/><path fill="none" stroke="#f0d0a0" stroke-width="0.7" stroke-opacity="0.7" d="M57.7 29.1L63.7 36.4M57.9 24.1L64.5 17.4M54.6 23.2L52.2 14.1M55.2 29.9L54.4 39.3M54.3 23.4L50.9 14.5M58.4 24.9L66.7 20.2M56.3 23.2L58.6 14.1M14.1 35.5L19.9 34.2M11.3 38L9.4 43.6"/><path fill="none" stroke="#ffe8c8" stroke-width="0.7" stroke-opacity="0.7" d="M52.2 25.7L43.1 23.4M54.6 29.7L51.9 38.8M58.1 24.3L65.3 18.2M52.8 24.5L45.3 18.7"/><path fill="none" stroke="#fff4e0" stroke-width="0.7" stroke-opacity="0.7" d="M56.2 23.2L58.3 14M55.7 23.1L56.3 13.7M58.9 26.6L68.3 26.7M10 35.4L4.3 33.7M13.2 37.8L16.4 42.8"/><path fill="none" stroke="#e0a868" stroke-width="0.7" stroke-opacity="0.7" d="M57.5 29.2L63.1 36.8M58.7 25.6L67.8 22.9M10.4 37.4L6 41.4M14.1 36.4L19.9 37.7M9.9 35.6L4.1 34.4"/><path fill="none" stroke="#d09050" stroke-width="0.7" stroke-opacity="0.7" d="M56.4 29.8L58.8 38.9M58.5 28L67 32.1M54 23.5L49.8 15M10.5 34.5L6.4 30.2"/></g></g><clipPath id="cq9"><rect x="0" y="0" width="68.4" height="7.65"/></clipPath><polygon points="0.8,0.95 67.9,0.95 0.8,38.8" fill="url(#gl9)" clip-path="url(#cq9)"/><polygon points="0.8,0.95 67.9,0.95 0.8,38.8" fill="url(#gl9)" clip-path="url(#cp9)" opacity="0.55"/><rect x="0.8" y="0.95" width="67.1" height="0.8" fill="#fff" fill-opacity="0.07"/><rect x="0.8" y="0.95" width="0.7" height="36.8" fill="#fff" fill-opacity="0.05"/></g></g></svg></div><div class="lb" style="left:125.9px"><span style="top:256.1px;letter-spacing:0.39px">beautiful-</span><span style="top:274.1px;letter-spacing:-0.05px">firework...utc.mov</span></div>
<div class="ic lay" style="left:288px;top:184px"><svg width="68" height="52" viewBox="0 0 68 52" ><g transform="translate(0.03,0.0)"><defs><linearGradient id="dg10" x1="0" y1="0" x2="1" y2="0"><stop offset="0" stop-color="#f3f3f3"/><stop offset="1" stop-color="#e4e4e4"/></linearGradient><linearGradient id="qb10" x1="0" y1="0" x2="0" y2="1"><stop offset="0" stop-color="#30353b"/><stop offset="1" stop-color="#050506"/></linearGradient><linearGradient id="qd10" x1="0" y1="0" x2="0" y2="1"><stop offset="0" stop-color="#2568e0"/><stop offset="1" stop-color="#5fe0fa"/></linearGradient><linearGradient id="qr10" x1="0" y1="0" x2="1" y2="1"><stop offset="0" stop-color="#d4d8de"/><stop offset="1" stop-color="#8a8f98"/></linearGradient></defs><g transform="translate(9.9,-5.8)"><path d="M3 -0.7 L31.3 -0.7 L49.7 17.7 L49.7 63 Q49.7 66.9 46 66.9 L3 66.9 Q-0.7 66.9 -0.7 63 L-0.7 3 Q-0.7 -0.7 3 -0.7 Z" fill="#000" fill-opacity="0.3"/><path d="M2.5 0 L31 0 L49 18 L49 63.5 Q49 66 46.5 66 L2.5 66 Q0 66 0 63.5 L0 2.5 Q0 0 2.5 0 Z" fill="url(#dg10)"/><path d="M0.4 63 L0.4 2.8 Q0.4 0.4 2.8 0.4 L31 0.4" fill="none" stroke="#fff" stroke-opacity="0.6" stroke-width="0.8"/><path d="M31 0 L49 18 L35 18 Q31 18 31 14 Z" fill="#fafafa"/><path d="M32 18.2 L49 18.2 L49 22 Z" fill="#000" fill-opacity="0.10"/><rect x="9.8" y="17" width="29.5" height="29.5" rx="6.8" fill="url(#qb10)"/><circle cx="24.4" cy="31.5" r="9.6" fill="none" stroke="url(#qr10)" stroke-width="4.3"/><circle cx="24.4" cy="31.5" r="7.4" fill="url(#qd10)"/><path d="M25 32 L34.5 41" stroke="#b9bdc4" stroke-width="4" stroke-linecap="round"/><text x="24.8" y="60" text-anchor="middle" font-family="Liberation Sans, sans-serif" font-size="10" letter-spacing="-0.55" fill="#808080">MOV</text></g></g></svg></div><div class="lb" style="left:252.2px"><span style="top:256.1px;letter-spacing:0.23px">blue butterfly HD</span><span style="top:274.1px;letter-spacing:-0.27px">01.mov</span></div>
<div class="ic lay" style="left:414px;top:184px"><svg width="68" height="52" viewBox="0 0 68 52" ><g transform="translate(0.32,0.0)"><defs><linearGradient id="dg11" x1="0" y1="0" x2="1" y2="0"><stop offset="0" stop-color="#f3f3f3"/><stop offset="1" stop-color="#e4e4e4"/></linearGradient><linearGradient id="qb11" x1="0" y1="0" x2="0" y2="1"><stop offset="0" stop-color="#30353b"/><stop offset="1" stop-color="#050506"/></linearGradient><linearGradient id="qd11" x1="0" y1="0" x2="0" y2="1"><stop offset="0" stop-color="#2568e0"/><stop offset="1" stop-color="#5fe0fa"/></linearGradient><linearGradient id="qr11" x1="0" y1="0" x2="1" y2="1"><stop offset="0" stop-color="#d4d8de"/><stop offset="1" stop-color="#8a8f98"/></linearGradient></defs><g transform="translate(9.9,-5.8)"><path d="M3 -0.7 L31.3 -0.7 L49.7 17.7 L49.7 63 Q49.7 66.9 46 66.9 L3 66.9 Q-0.7 66.9 -0.7 63 L-0.7 3 Q-0.7 -0.7 3 -0.7 Z" fill="#000" fill-opacity="0.3"/><path d="M2.5 0 L31 0 L49 18 L49 63.5 Q49 66 46.5 66 L2.5 66 Q0 66 0 63.5 L0 2.5 Q0 0 2.5 0 Z" fill="url(#dg11)"/><path d="M0.4 63 L0.4 2.8 Q0.4 0.4 2.8 0.4 L31 0.4" fill="none" stroke="#fff" stroke-opacity="0.6" stroke-width="0.8"/><path d="M31 0 L49 18 L35 18 Q31 18 31 14 Z" fill="#fafafa"/><path d="M32 18.2 L49 18.2 L49 22 Z" fill="#000" fill-opacity="0.10"/><rect x="9.8" y="17" width="29.5" height="29.5" rx="6.8" fill="url(#qb11)"/><circle cx="24.4" cy="31.5" r="9.6" fill="none" stroke="url(#qr11)" stroke-width="4.3"/><circle cx="24.4" cy="31.5" r="7.4" fill="url(#qd11)"/><path d="M25 32 L34.5 41" stroke="#b9bdc4" stroke-width="4" stroke-linecap="round"/><text x="24.8" y="60" text-anchor="middle" font-family="Liberation Sans, sans-serif" font-size="10" letter-spacing="-0.55" fill="#808080">MOV</text></g></g></svg></div><div class="lb" style="left:378.5px"><span style="top:256.1px;letter-spacing:0.2px">blue butterfly HD</span><span style="top:274.1px;letter-spacing:-0.17px">02.mov</span></div>
<div class="ic" style="left:540px;top:184px"><svg width="68.4" height="53" viewBox="0 0 68.4 53" ><g transform="translate(0.61,0.0)"><defs><linearGradient id="gl12" gradientUnits="userSpaceOnUse" x1="0" y1="0" x2="68" y2="14"><stop offset="0" stop-color="#fff" stop-opacity="0.26"/><stop offset="0.5" stop-color="#fff" stop-opacity="0.17"/><stop offset="1" stop-color="#fff" stop-opacity="0.07"/></linearGradient><clipPath id="cp12"><rect x="-0.35" y="7.65" width="69.3" height="38.51"/></clipPath><filter id="bl12" x="-5%" y="-5%" width="110%" height="110%"><feGaussianBlur stdDeviation="0.45"/></filter><linearGradient id="nh12" x1="0" y1="0" x2="1" y2="0"><stop offset="0" stop-color="#66e0e6"/><stop offset="0.3" stop-color="#4a7af0"/><stop offset="0.7" stop-color="#4a7af0"/><stop offset="1" stop-color="#66e0e6"/></linearGradient><radialGradient id="ng12"><stop offset="0" stop-color="#2a3cd0" stop-opacity="0.7"/><stop offset="1" stop-color="#1a1a80" stop-opacity="0"/></radialGradient></defs><g transform="translate(0,0)"><rect x="-0.4" y="0.3" width="69.2" height="54.0" fill="#000" fill-opacity="0.25"/><rect x="0" y="0" width="68.4" height="52.8" fill="#000"/><g clip-path="url(#cp12)"><g filter="url(#bl12)" transform="translate(-0.35,0.555) scale(1.019,1.0135)"><rect x="0" y="7" width="68" height="38" fill="#0a0a24"/><ellipse cx="34" cy="12" rx="40" ry="6" fill="url(#ng12)"/><ellipse cx="34" cy="36" rx="14" ry="9" fill="url(#ng12)"/><ellipse cx="22" cy="22" rx="5" ry="4" fill="url(#ng12)"/><ellipse cx="46" cy="22" rx="5" ry="4" fill="url(#ng12)"/><ellipse cx="16" cy="30" rx="4" ry="3" fill="url(#ng12)"/><ellipse cx="52" cy="30" rx="4" ry="3" fill="url(#ng12)"/><rect x="12" y="7.6" width="44" height="1.8" fill="url(#nh12)"/><path fill="#3c5cf0" fill-opacity="0.9" d="M0 10.2h68v1.1h-68z"/><rect x="0" y="12.8" width="68" height="1.6" fill="url(#nh12)"/><path fill="#3c5cf0" d="M0 15.2h10v1.2h-10zM58 15.2h10v1.2h-10zM0 20.6h2.5v1.4h-2.5zM65.5 20.6h2.5v1.4h-2.5z"/><path fill="#8a2848" fill-opacity="0.7" d="M14 16.2h40v0.8h-40z"/><path fill="#c23c6c" d="M28 13h2v17.5h-2zM34.6 12.5h1.4v18h-1.4zM38 13h2v17.5h-2zM12.5 24.4h8v0.9h-8zM47.5 24.4h8v0.9h-8zM9 35h1.8v10h-1.8zM3 40h1.2v5h-1.2zM57.2 35h1.8v10h-1.8zM63.8 40h1.2v5h-1.2z"/><path fill="#8a3cae" d="M31.6 12.5h1.4v18h-1.4z"/><path fill="#5a2a8a" fill-opacity="0.7" d="M30 15h1.6v15h-1.6z"/><path fill="#4a2a9a" fill-opacity="0.7" d="M36 15h2v15h-2z"/><path fill="#66e0e6" d="M12 22.8h10.5v1.6h-10.5zM21 22.8h1.7v9.2h-1.7zM45.5 22.8h10.5v1.6h-10.5zM45.3 22.8h1.7v9.2h-1.7zM0 22.8h5v1.6h-5zM63 22.8h5v1.6h-5zM6.5 31h7.8v1.6h-7.8zM12.7 31h1.6v7h-1.6zM53.7 31h7.8v1.6h-7.8zM53.7 31h1.6v7h-1.6zM21 39.5h1.3v3h-1.3zM21 41.5h3.6v1.3h-3.6zM31.8 41.7h4.4v1.6h-4.4zM45.7 39.5h1.3v3h-1.3zM43.4 41.5h3.6v1.3h-3.6zM30.5 30.8h1.2v2.2h-1.2zM36.3 30.8h1.2v2.2h-1.2zM30.5 32.2h7v1.1h-7z"/><path fill="#6a3cb8" d="M0 34.8h11v1.2h-11zM57 34.8h11v1.2h-11z"/><path fill="#b8a0c8" d="M0 38.5h6v1h-6zM62 38.5h6v1h-6z"/><path fill="#5050e0" d="M0 42.5h2v2.5h-2zM66 42.5h2v2.5h-2z"/><path fill="none" stroke="#2030c0" stroke-width="1.4" stroke-opacity="0.7" d="M33 33L22 43M35 33L46 43"/><path fill="none" stroke="#2838d0" stroke-width="1.2" stroke-opacity="0.5" d="M25 21L14 31M43 21L54 31"/></g></g><polygon points="0.8,0.95 67.9,0.95 0.8,38.8" fill="url(#gl12)"/><rect x="0.8" y="0.95" width="67.1" height="0.8" fill="#fff" fill-opacity="0.07"/><rect x="0.8" y="0.95" width="0.7" height="36.8" fill="#fff" fill-opacity="0.05"/></g></g></svg></div><div class="lb" style="left:504.8px"><span style="top:256.1px;letter-spacing:0.45px">blue-green-red-</span><span style="top:274.1px;letter-spacing:0.07px">fast-mo...utc.mp4</span></div>
<div class="ic" style="left:666px;top:184px"><svg width="68.4" height="53" viewBox="0 0 68.4 53" ><g transform="translate(0.9,0.0)"><defs><linearGradient id="gl13" gradientUnits="userSpaceOnUse" x1="0" y1="0" x2="68" y2="14"><stop offset="0" stop-color="#fff" stop-opacity="0.26"/><stop offset="0.5" stop-color="#fff" stop-opacity="0.17"/><stop offset="1" stop-color="#fff" stop-opacity="0.07"/></linearGradient><clipPath id="cp13"><rect x="-0.35" y="0.00" width="69.3" height="52.80"/></clipPath><radialGradient id="cg13_0"><stop offset="0" stop-color="#0a1838" stop-opacity="0.8"/><stop offset="1" stop-color="#0a1838" stop-opacity="0"/></radialGradient></defs><g transform="translate(0,0)"><rect x="-0.4" y="0.3" width="69.2" height="54.0" fill="#000" fill-opacity="0.25"/><rect x="0" y="0" width="68.4" height="52.8" fill="#000"/><g clip-path="url(#cp13)"><g transform="translate(-0.35,0.555) scale(1.019,1.0135)"><ellipse cx="43" cy="27" rx="14" ry="9" fill="url(#cg13_0)"/></g></g><polygon points="0.8,0.95 67.9,0.95 0.8,38.8" fill="url(#gl13)"/><rect x="0.8" y="0.95" width="67.1" height="0.8" fill="#fff" fill-opacity="0.07"/><rect x="0.8" y="0.95" width="0.7" height="36.8" fill="#fff" fill-opacity="0.05"/></g></g></svg></div><div class="lb" style="left:631.1px"><span style="top:256.1px;letter-spacing:-0.36px">Clouds_Loop_1.m</span><span style="top:274.1px">ov</span></div>
<div class="ic" style="left:793px;top:184px"><svg width="68.4" height="53" viewBox="0 0 68.4 53" ><g transform="translate(0.19,0.0)"><defs><linearGradient id="gl14" gradientUnits="userSpaceOnUse" x1="0" y1="0" x2="68" y2="14"><stop offset="0" stop-color="#fff" stop-opacity="0.26"/><stop offset="0.5" stop-color="#fff" stop-opacity="0.17"/><stop offset="1" stop-color="#fff" stop-opacity="0.07"/></linearGradient><clipPath id="cp14"><rect x="-0.35" y="0.00" width="69.3" height="52.80"/></clipPath><radialGradient id="cg14_0"><stop offset="0" stop-color="#0c1c44" stop-opacity="0.9"/><stop offset="1" stop-color="#0c1c44" stop-opacity="0"/></radialGradient><radialGradient id="cg14_1"><stop offset="0" stop-color="#14306c" stop-opacity="0.8"/><stop offset="1" stop-color="#14306c" stop-opacity="0"/></radialGradient></defs><g transform="translate(0,0)"><rect x="-0.4" y="0.3" width="69.2" height="54.0" fill="#000" fill-opacity="0.25"/><rect x="0" y="0" width="68.4" height="52.8" fill="#000"/><g clip-path="url(#cp14)"><g transform="translate(-0.35,0.555) scale(1.019,1.0135)"><ellipse cx="36" cy="27" rx="16" ry="10" fill="url(#cg14_0)"/><ellipse cx="30" cy="28" rx="3" ry="3" fill="url(#cg14_1)"/></g></g><polygon points="0.8,0.95 67.9,0.95 0.8,38.8" fill="url(#gl14)"/><rect x="0.8" y="0.95" width="67.1" height="0.8" fill="#fff" fill-opacity="0.07"/><rect x="0.8" y="0.95" width="0.7" height="36.8" fill="#fff" fill-opacity="0.05"/></g></g></svg></div><div class="lb" style="left:757.4px"><span style="top:256.1px;letter-spacing:-0.18px">Clouds_Loop_2.m</span><span style="top:274.1px">ov</span></div>
<div class="ic" style="left:919px;top:184px"><svg width="68.4" height="53" viewBox="0 0 68.4 53" ><g transform="translate(0.48,0.0)"><defs><linearGradient id="gl15" gradientUnits="userSpaceOnUse" x1="0" y1="0" x2="68" y2="14"><stop offset="0" stop-color="#fff" stop-opacity="0.26"/><stop offset="0.5" stop-color="#fff" stop-opacity="0.17"/><stop offset="1" stop-color="#fff" stop-opacity="0.07"/></linearGradient><clipPath id="cp15"><rect x="-0.35" y="0.00" width="69.3" height="52.80"/></clipPath></defs><g transform="translate(0,0)"><rect x="-0.4" y="0.3" width="69.2" height="54.0" fill="#000" fill-opacity="0.25"/><rect x="0" y="0" width="68.4" height="52.8" fill="#000"/><g clip-path="url(#cp15)"><g transform="translate(-0.35,0.555) scale(1.019,1.0135)"></g></g><polygon points="0.8,0.95 67.9,0.95 0.8,38.8" fill="url(#gl15)"/><rect x="0.8" y="0.95" width="67.1" height="0.8" fill="#fff" fill-opacity="0.07"/><rect x="0.8" y="0.95" width="0.7" height="36.8" fill="#fff" fill-opacity="0.05"/></g></g></svg></div><div class="lb" style="left:883.7px"><span style="top:256.1px;letter-spacing:-0.21px">Clouds_Loop_3.m</span><span style="top:274.1px">ov</span></div>
<div class="ic" style="left:35px;top:312px"><svg width="68.4" height="53" viewBox="0 0 68.4 53" ><g transform="translate(0.45,0.25)"><defs><linearGradient id="gl16" gradientUnits="userSpaceOnUse" x1="0" y1="0" x2="68" y2="14"><stop offset="0" stop-color="#fff" stop-opacity="0.26"/><stop offset="0.5" stop-color="#fff" stop-opacity="0.17"/><stop offset="1" stop-color="#fff" stop-opacity="0.07"/></linearGradient><clipPath id="cp16"><rect x="-0.35" y="0.00" width="69.3" height="52.80"/></clipPath><radialGradient id="cg16_0"><stop offset="0" stop-color="#0e2236" stop-opacity="0.9"/><stop offset="1" stop-color="#0e2236" stop-opacity="0"/></radialGradient><radialGradient id="cg16_1"><stop offset="0" stop-color="#6a7e90" stop-opacity="0.45"/><stop offset="1" stop-color="#6a7e90" stop-opacity="0"/></radialGradient><radialGradient id="cg16_2"><stop offset="0" stop-color="#1e4668" stop-opacity="0.7"/><stop offset="1" stop-color="#1e4668" stop-opacity="0"/></radialGradient></defs><g transform="translate(0,0)"><rect x="-0.4" y="0.3" width="69.2" height="54.0" fill="#000" fill-opacity="0.25"/><rect x="0" y="0" width="68.4" height="52.8" fill="#000"/><g clip-path="url(#cp16)"><g transform="translate(-0.35,0.555) scale(1.019,1.0135)"><ellipse cx="34" cy="26" rx="22" ry="12" fill="url(#cg16_0)"/><ellipse cx="24" cy="17" rx="7" ry="4" fill="url(#cg16_1)"/><ellipse cx="40" cy="27" rx="6" ry="3" fill="url(#cg16_2)"/></g></g><polygon points="0.8,0.95 67.9,0.95 0.8,38.8" fill="url(#gl16)"/><rect x="0.8" y="0.95" width="67.1" height="0.8" fill="#fff" fill-opacity="0.07"/><rect x="0.8" y="0.95" width="0.7" height="36.8" fill="#fff" fill-opacity="0.05"/></g></g></svg></div><div class="lb" style="left:-0.3px"><span style="top:384.1px;letter-spacing:-0.07px">Clouds_Loop_4.m</span><span style="top:403.1px">ov</span></div>
<div class="ic" style="left:161px;top:312px"><svg width="68.4" height="53" viewBox="0 0 68.4 53" ><g transform="translate(0.74,0.25)"><defs><linearGradient id="gl17" gradientUnits="userSpaceOnUse" x1="0" y1="0" x2="68" y2="14"><stop offset="0" stop-color="#fff" stop-opacity="0.26"/><stop offset="0.5" stop-color="#fff" stop-opacity="0.17"/><stop offset="1" stop-color="#fff" stop-opacity="0.07"/></linearGradient><clipPath id="cp17"><rect x="-0.35" y="0.00" width="69.3" height="52.80"/></clipPath><radialGradient id="cg17_0"><stop offset="0" stop-color="#0e2438" stop-opacity="0.9"/><stop offset="1" stop-color="#0e2438" stop-opacity="0"/></radialGradient><radialGradient id="cg17_1"><stop offset="0" stop-color="#6a7a8a" stop-opacity="0.45"/><stop offset="1" stop-color="#6a7a8a" stop-opacity="0"/></radialGradient><radialGradient id="cg17_2"><stop offset="0" stop-color="#5a86a4" stop-opacity="0.8"/><stop offset="1" stop-color="#5a86a4" stop-opacity="0"/></radialGradient><radialGradient id="cg17_3"><stop offset="0" stop-color="#284e6c" stop-opacity="0.7"/><stop offset="1" stop-color="#284e6c" stop-opacity="0"/></radialGradient></defs><g transform="translate(0,0)"><rect x="-0.4" y="0.3" width="69.2" height="54.0" fill="#000" fill-opacity="0.25"/><rect x="0" y="0" width="68.4" height="52.8" fill="#000"/><g clip-path="url(#cp17)"><g transform="translate(-0.35,0.555) scale(1.019,1.0135)"><ellipse cx="44" cy="24" rx="20" ry="10" fill="url(#cg17_0)"/><ellipse cx="30" cy="19" rx="8" ry="4" fill="url(#cg17_1)"/><ellipse cx="55" cy="25" rx="5" ry="3" fill="url(#cg17_2)"/><ellipse cx="50" cy="23" rx="7" ry="3" fill="url(#cg17_3)"/></g></g><polygon points="0.8,0.95 67.9,0.95 0.8,38.8" fill="url(#gl17)"/><rect x="0.8" y="0.95" width="67.1" height="0.8" fill="#fff" fill-opacity="0.07"/><rect x="0.8" y="0.95" width="0.7" height="36.8" fill="#fff" fill-opacity="0.05"/></g></g></svg></div><div class="lb" style="left:125.9px"><span style="top:384.1px;letter-spacing:-0.11px">Clouds_Loop_5.m</span><span style="top:403.1px">ov</span></div>
<div class="ic" style="left:288px;top:312px"><svg width="68.4" height="53" viewBox="0 0 68.4 53" ><g transform="translate(0.03,0.25)"><defs><linearGradient id="gl18" gradientUnits="userSpaceOnUse" x1="0" y1="0" x2="68" y2="14"><stop offset="0" stop-color="#fff" stop-opacity="0.26"/><stop offset="0.5" stop-color="#fff" stop-opacity="0.17"/><stop offset="1" stop-color="#fff" stop-opacity="0.07"/></linearGradient><clipPath id="cp18"><rect x="-0.35" y="0.00" width="69.3" height="52.80"/></clipPath><radialGradient id="cg18_0"><stop offset="0" stop-color="#0c3050" stop-opacity="0.95"/><stop offset="1" stop-color="#0c3050" stop-opacity="0"/></radialGradient><radialGradient id="cg18_1"><stop offset="0" stop-color="#62788c" stop-opacity="0.5"/><stop offset="1" stop-color="#62788c" stop-opacity="0"/></radialGradient><radialGradient id="cg18_2"><stop offset="0" stop-color="#1a5a88" stop-opacity="0.9"/><stop offset="1" stop-color="#1a5a88" stop-opacity="0"/></radialGradient><radialGradient id="cg18_3"><stop offset="0" stop-color="#58c8e8" stop-opacity="0.95"/><stop offset="1" stop-color="#58c8e8" stop-opacity="0"/></radialGradient><radialGradient id="cg18_4"><stop offset="0" stop-color="#4ab8e0" stop-opacity="0.9"/><stop offset="1" stop-color="#4ab8e0" stop-opacity="0"/></radialGradient><radialGradient id="cg18_5"><stop offset="0" stop-color="#5a86b8" stop-opacity="0.7"/><stop offset="1" stop-color="#5a86b8" stop-opacity="0"/></radialGradient><radialGradient id="cg18_6"><stop offset="0" stop-color="#2a80b0" stop-opacity="0.8"/><stop offset="1" stop-color="#2a80b0" stop-opacity="0"/></radialGradient></defs><g transform="translate(0,0)"><rect x="-0.4" y="0.3" width="69.2" height="54.0" fill="#000" fill-opacity="0.25"/><rect x="0" y="0" width="68.4" height="52.8" fill="#000"/><g clip-path="url(#cp18)"><g transform="translate(-0.35,0.555) scale(1.019,1.0135)"><ellipse cx="44" cy="27" rx="22" ry="12" fill="url(#cg18_0)"/><ellipse cx="28" cy="20" rx="9" ry="4" fill="url(#cg18_1)"/><ellipse cx="46" cy="27" rx="12" ry="7" fill="url(#cg18_2)"/><ellipse cx="41" cy="26" rx="4.5" ry="4.5" fill="url(#cg18_3)"/><ellipse cx="50" cy="23" rx="3.5" ry="2.5" fill="url(#cg18_4)"/><ellipse cx="57" cy="27" rx="4" ry="2.5" fill="url(#cg18_5)"/><ellipse cx="45" cy="31" rx="4" ry="3" fill="url(#cg18_6)"/></g></g><polygon points="0.8,0.95 67.9,0.95 0.8,38.8" fill="url(#gl18)"/><rect x="0.8" y="0.95" width="67.1" height="0.8" fill="#fff" fill-opacity="0.07"/><rect x="0.8" y="0.95" width="0.7" height="36.8" fill="#fff" fill-opacity="0.05"/></g></g></svg></div><div class="lb" style="left:252.2px"><span style="top:384.1px;letter-spacing:-0.11px">Clouds_Loop_6.m</span><span style="top:403.1px">ov</span></div>
<div class="ic" style="left:414px;top:312px"><svg width="68.4" height="53" viewBox="0 0 68.4 53" ><g transform="translate(0.32,0.25)"><defs><linearGradient id="gl19" gradientUnits="userSpaceOnUse" x1="0" y1="0" x2="68" y2="14"><stop offset="0" stop-color="#fff" stop-opacity="0.26"/><stop offset="0.5" stop-color="#fff" stop-opacity="0.17"/><stop offset="1" stop-color="#fff" stop-opacity="0.07"/></linearGradient><clipPath id="cp19"><rect x="-0.35" y="7.65" width="69.3" height="38.51"/></clipPath><radialGradient id="wc19" cx="0.42" cy="0.35" r="0.7"><stop offset="0" stop-color="#e2e2e2"/><stop offset="0.6" stop-color="#cbcbcb"/><stop offset="1" stop-color="#a2a2a2"/></radialGradient><filter id="wb19" x="-10%" y="-10%" width="120%" height="120%"><feGaussianBlur stdDeviation="0.7"/></filter></defs><g transform="translate(0,0)"><rect x="-0.4" y="0.3" width="69.2" height="54.0" fill="#000" fill-opacity="0.25"/><rect x="0" y="0" width="68.4" height="52.8" fill="#000"/><g clip-path="url(#cp19)"><g transform="translate(-0.35,0.555) scale(1.019,1.0135)"><g filter="url(#wb19)"><rect x="0" y="28.5" width="68" height="17" fill="#c2c2c2"/><path d="M0 29 L0 27.5 L30 27.5 L44 25.5 L50 23 L53.5 23.5 L56 28 L68 29 Z" fill="#cdcdcd"/><circle cx="0" cy="29.9" r="3.4" fill="url(#wc19)"/><circle cx="4" cy="28.1" r="2.3" fill="url(#wc19)"/><circle cx="8" cy="28.4" r="3.1" fill="url(#wc19)"/><circle cx="12" cy="29" r="2.8" fill="url(#wc19)"/><circle cx="16" cy="30.1" r="3.3" fill="url(#wc19)"/><circle cx="20" cy="29.2" r="2.7" fill="url(#wc19)"/><circle cx="24" cy="29.5" r="3.3" fill="url(#wc19)"/><circle cx="28" cy="29" r="2.4" fill="url(#wc19)"/><circle cx="32" cy="29.4" r="3.4" fill="url(#wc19)"/><circle cx="36" cy="27.9" r="2.7" fill="url(#wc19)"/><circle cx="40" cy="27" r="2.4" fill="url(#wc19)"/><circle cx="44" cy="26.6" r="2.6" fill="url(#wc19)"/><circle cx="47" cy="25.8" r="3" fill="url(#wc19)"/><circle cx="50" cy="23.8" r="2.2" fill="url(#wc19)"/><circle cx="52.5" cy="24.5" r="2.7" fill="url(#wc19)"/><circle cx="54" cy="26.2" r="2.2" fill="url(#wc19)"/><circle cx="56" cy="29.3" r="2.3" fill="url(#wc19)"/><circle cx="59" cy="29.9" r="2.4" fill="url(#wc19)"/><circle cx="62" cy="29.5" r="2.5" fill="url(#wc19)"/><circle cx="65" cy="30.1" r="2.5" fill="url(#wc19)"/><circle cx="68" cy="31.1" r="3.1" fill="url(#wc19)"/><circle cx="28.1" cy="43.7" r="5.2" fill="url(#wc19)"/><circle cx="61.7" cy="45.2" r="4.2" fill="url(#wc19)"/><circle cx="46" cy="44.1" r="4.1" fill="url(#wc19)"/><circle cx="9" cy="38.3" r="4.1" fill="url(#wc19)"/><circle cx="11.6" cy="31.5" r="3.1" fill="url(#wc19)"/><circle cx="47.8" cy="43" r="4.5" fill="url(#wc19)"/><circle cx="28.9" cy="30.5" r="2.5" fill="url(#wc19)"/><circle cx="44.8" cy="38.5" r="3.9" fill="url(#wc19)"/><circle cx="11" cy="32" r="3" fill="url(#wc19)"/><circle cx="8" cy="39.6" r="3.4" fill="url(#wc19)"/><circle cx="37.8" cy="36.9" r="4.1" fill="url(#wc19)"/><circle cx="51.1" cy="42.5" r="2.9" fill="url(#wc19)"/><circle cx="66.2" cy="43.6" r="5" fill="url(#wc19)"/><circle cx="30.7" cy="45.2" r="4.9" fill="url(#wc19)"/><circle cx="15.7" cy="41" r="5" fill="url(#wc19)"/><circle cx="51.7" cy="44.4" r="4.1" fill="url(#wc19)"/><circle cx="46" cy="31.2" r="4.5" fill="url(#wc19)"/><circle cx="9.2" cy="41.6" r="5.2" fill="url(#wc19)"/><circle cx="25" cy="31.1" r="2.6" fill="url(#wc19)"/><circle cx="35.2" cy="32.5" r="4.7" fill="url(#wc19)"/><circle cx="41.7" cy="38" r="4.5" fill="url(#wc19)"/><circle cx="9.6" cy="37.3" r="2.6" fill="url(#wc19)"/><circle cx="37.3" cy="42.7" r="3" fill="url(#wc19)"/><circle cx="47.2" cy="45.9" r="3.5" fill="url(#wc19)"/><circle cx="13.6" cy="34" r="5" fill="url(#wc19)"/><circle cx="4.6" cy="42.4" r="3.3" fill="url(#wc19)"/><circle cx="51.9" cy="44.2" r="5" fill="url(#wc19)"/><circle cx="12.4" cy="38.8" r="3.5" fill="url(#wc19)"/><circle cx="60.3" cy="34.7" r="3" fill="url(#wc19)"/><circle cx="27.4" cy="31.4" r="3.2" fill="url(#wc19)"/><circle cx="48.2" cy="35.2" r="3.1" fill="url(#wc19)"/><circle cx="64.5" cy="34.2" r="4.9" fill="url(#wc19)"/><circle cx="46.9" cy="38.9" r="4.4" fill="url(#wc19)"/><circle cx="39.7" cy="43.5" r="4.6" fill="url(#wc19)"/><circle cx="17.8" cy="40.5" r="4" fill="url(#wc19)"/><circle cx="63.6" cy="31.9" r="3.9" fill="url(#wc19)"/><circle cx="66.7" cy="31.1" r="4.7" fill="url(#wc19)"/><circle cx="62" cy="39.7" r="2.7" fill="url(#wc19)"/><circle cx="53.3" cy="34.2" r="4.1" fill="url(#wc19)"/><circle cx="56.2" cy="35" r="3.2" fill="url(#wc19)"/><circle cx="7.2" cy="35.5" r="2.8" fill="url(#wc19)"/><circle cx="47.6" cy="43.3" r="2.7" fill="url(#wc19)"/><circle cx="35.9" cy="42.7" r="4.8" fill="url(#wc19)"/><circle cx="17.6" cy="38.5" r="4.5" fill="url(#wc19)"/><circle cx="35.4" cy="46" r="5.2" fill="url(#wc19)"/><circle cx="66.6" cy="32" r="2.6" fill="url(#wc19)"/><ellipse cx="30" cy="36" rx="5" ry="2" fill="#8c8c8c" fill-opacity="0.35"/><ellipse cx="41" cy="31" rx="3" ry="2" fill="#8c8c8c" fill-opacity="0.35"/><ellipse cx="47" cy="38" rx="4" ry="2.5" fill="#8c8c8c" fill-opacity="0.35"/><ellipse cx="14" cy="39" rx="5" ry="2" fill="#8c8c8c" fill-opacity="0.35"/><ellipse cx="58" cy="35" rx="3" ry="2" fill="#8c8c8c" fill-opacity="0.35"/><ellipse cx="22" cy="31" rx="3" ry="1.5" fill="#8c8c8c" fill-opacity="0.35"/><ellipse cx="52" cy="30" rx="2.5" ry="2" fill="#8c8c8c" fill-opacity="0.35"/></g></g></g><polygon points="0.8,0.95 67.9,0.95 0.8,38.8" fill="url(#gl19)"/><rect x="0.8" y="0.95" width="67.1" height="0.8" fill="#fff" fill-opacity="0.07"/><rect x="0.8" y="0.95" width="0.7" height="36.8" fill="#fff" fill-opacity="0.05"/></g></g></svg></div><div class="lb" style="left:378.5px"><span style="top:384.1px;letter-spacing:0.33px">clouds-</span><span style="top:403.1px;letter-spacing:-0.06px">loop-20...utc.mov</span></div>
<div class="ic" style="left:540px;top:312px"><svg width="68.4" height="53" viewBox="0 0 68.4 53" ><g transform="translate(0.61,0.25)"><defs><linearGradient id="gl20" gradientUnits="userSpaceOnUse" x1="0" y1="0" x2="68" y2="14"><stop offset="0" stop-color="#fff" stop-opacity="0.26"/><stop offset="0.5" stop-color="#fff" stop-opacity="0.17"/><stop offset="1" stop-color="#fff" stop-opacity="0.07"/></linearGradient><clipPath id="cp20"><rect x="-0.35" y="7.30" width="69.3" height="15.50"/></clipPath><filter id="bl20" x="-5%" y="-5%" width="110%" height="110%"><feGaussianBlur stdDeviation="0.35"/></filter><radialGradient id="cf20"><stop offset="0" stop-color="#b040c0" stop-opacity="0.8"/><stop offset="1" stop-color="#401050" stop-opacity="0"/></radialGradient></defs><g transform="translate(0,12.15)"><rect x="-0.4" y="0.3" width="69.2" height="30.099999999999998" fill="#000" fill-opacity="0.25"/><rect x="0" y="0" width="68.4" height="28.9" fill="#000"/><g clip-path="url(#cp20)"><g filter="url(#bl20)" transform="translate(-0.35,0.3) scale(1.019,1)"><rect x="0" y="7" width="68" height="15.3" fill="#120818"/><ellipse cx="34" cy="21" rx="16" ry="9" fill="url(#cf20)" fill-opacity="0.6"/><ellipse cx="2" cy="14" rx="9" ry="8" fill="url(#cf20)" fill-opacity="0.5"/><ellipse cx="66" cy="14" rx="9" ry="8" fill="url(#cf20)" fill-opacity="0.5"/><ellipse cx="34" cy="22" rx="3.5" ry="2" fill="#e060e8" fill-opacity="0.9"/><g transform="translate(30,21) rotate(-22)"><path d="M0 0 C -5.5 -4.199999999999999, -4.95 -11.399999999999999, 0 -12 C 4.95 -11.399999999999999, 5.5 -4.199999999999999, 0 0 Z" fill="#5ccfe0" fill-opacity="0.3" stroke="#5ccfe0" stroke-width="1.0"/><path d="M0 0 L0 -9.600000000000001" stroke="#5ccfe0" stroke-width="0.5"/></g><g transform="translate(38,21) rotate(22)"><path d="M0 0 C -5.5 -4.199999999999999, -4.95 -11.399999999999999, 0 -12 C 4.95 -11.399999999999999, 5.5 -4.199999999999999, 0 0 Z" fill="#5ccfe0" fill-opacity="0.3" stroke="#5ccfe0" stroke-width="1.0"/><path d="M0 0 L0 -9.600000000000001" stroke="#5ccfe0" stroke-width="0.5"/></g><g transform="translate(31.5,20) rotate(-8)"><path d="M0 0 C -3.2 -3.8499999999999996, -2.8800000000000003 -10.45, 0 -11 C 2.8800000000000003 -10.45, 3.2 -3.8499999999999996, 0 0 Z" fill="#d07ce0" fill-opacity="0.3" stroke="#d07ce0" stroke-width="0.7"/><path d="M0 0 L0 -8.8" stroke="#d07ce0" stroke-width="0.5"/></g><g transform="translate(36.5,20) rotate(8)"><path d="M0 0 C -3.2 -3.8499999999999996, -2.8800000000000003 -10.45, 0 -11 C 2.8800000000000003 -10.45, 3.2 -3.8499999999999996, 0 0 Z" fill="#d07ce0" fill-opacity="0.3" stroke="#d07ce0" stroke-width="0.7"/><path d="M0 0 L0 -8.8" stroke="#d07ce0" stroke-width="0.5"/></g><g transform="translate(25,22) rotate(-62)"><path d="M0 0 C -4 -3.15, -3.6 -8.549999999999999, 0 -9 C 3.6 -8.549999999999999, 4 -3.15, 0 0 Z" fill="#5ccfe0" fill-opacity="0.3" stroke="#5ccfe0" stroke-width="0.9"/><path d="M0 0 L0 -7.2" stroke="#5ccfe0" stroke-width="0.5"/></g><g transform="translate(43,22) rotate(62)"><path d="M0 0 C -4 -3.15, -3.6 -8.549999999999999, 0 -9 C 3.6 -8.549999999999999, 4 -3.15, 0 0 Z" fill="#5ccfe0" fill-opacity="0.3" stroke="#5ccfe0" stroke-width="0.9"/><path d="M0 0 L0 -7.2" stroke="#5ccfe0" stroke-width="0.5"/></g><g transform="translate(13,22) rotate(-55)"><path d="M0 0 C -2.6 -2.0999999999999996, -2.3400000000000003 -5.699999999999999, 0 -6 C 2.3400000000000003 -5.699999999999999, 2.6 -2.0999999999999996, 0 0 Z" fill="#4aa0e0" fill-opacity="0.3" stroke="#4aa0e0" stroke-width="0.8"/><path d="M0 0 L0 -4.800000000000001" stroke="#4aa0e0" stroke-width="0.5"/></g><g transform="translate(55,22) rotate(55)"><path d="M0 0 C -2.6 -2.0999999999999996, -2.3400000000000003 -5.699999999999999, 0 -6 C 2.3400000000000003 -5.699999999999999, 2.6 -2.0999999999999996, 0 0 Z" fill="#4aa0e0" fill-opacity="0.3" stroke="#4aa0e0" stroke-width="0.8"/><path d="M0 0 L0 -4.800000000000001" stroke="#4aa0e0" stroke-width="0.5"/></g><g transform="translate(6,18) rotate(-60)"><path d="M0 0 C -1.6 -1.2249999999999999, -1.4400000000000002 -3.3249999999999997, 0 -3.5 C 1.4400000000000002 -3.3249999999999997, 1.6 -1.2249999999999999, 0 0 Z" fill="#5ccfe0" fill-opacity="0.3" stroke="#5ccfe0" stroke-width="0.7"/><path d="M0 0 L0 -2.8000000000000003" stroke="#5ccfe0" stroke-width="0.5"/></g><g transform="translate(62,18) rotate(60)"><path d="M0 0 C -1.6 -1.2249999999999999, -1.4400000000000002 -3.3249999999999997, 0 -3.5 C 1.4400000000000002 -3.3249999999999997, 1.6 -1.2249999999999999, 0 0 Z" fill="#5ccfe0" fill-opacity="0.3" stroke="#5ccfe0" stroke-width="0.7"/><path d="M0 0 L0 -2.8000000000000003" stroke="#5ccfe0" stroke-width="0.5"/></g><path fill="#f0a0f0" d="M7 13h1v2.5h-1zM59 13h1v2.5h-1zM12.5 20h1.2v1.8h-1.2zM53.5 20h1.2v1.8h-1.2z"/><path fill="#c060d0" d="M8.5 7.5h0.8v1.5h-0.8zM58.5 7.5h0.8v1.5h-0.8z"/><path fill="none" stroke="#4ab0d0" stroke-width="0.6" stroke-opacity="0.7" d="M10 22L58 22"/></g></g><polygon points="0.8,0.95 67.9,0.95 18.4,28.9 0.8,28.9" fill="url(#gl20)"/><rect x="0.8" y="0.95" width="67.1" height="0.8" fill="#fff" fill-opacity="0.07"/><rect x="0.8" y="0.95" width="0.7" height="26.9" fill="#fff" fill-opacity="0.05"/></g></g></svg></div><div class="lb" style="left:504.8px"><span style="top:384.1px;letter-spacing:-0.01px">Color Flower.mov</span></div>
<div class="ic" style="left:666px;top:312px"><svg width="68.4" height="53" viewBox="0 0 68.4 53" ><g transform="translate(0.9,0.25)"><defs><linearGradient id="gl21" gradientUnits="userSpaceOnUse" x1="0" y1="0" x2="68" y2="14"><stop offset="0" stop-color="#fff" stop-opacity="0.26"/><stop offset="0.5" stop-color="#fff" stop-opacity="0.17"/><stop offset="1" stop-color="#fff" stop-opacity="0.07"/></linearGradient><clipPath id="cp21"><rect x="-0.35" y="7.65" width="69.3" height="38.51"/></clipPath><filter id="bl21" x="-5%" y="-5%" width="110%" height="110%"><feGaussianBlur stdDeviation="0.4"/></filter></defs><g transform="translate(0,0)"><rect x="-0.4" y="0.3" width="69.2" height="54.0" fill="#000" fill-opacity="0.25"/><rect x="0" y="0" width="68.4" height="52.8" fill="#000"/><g clip-path="url(#cp21)"><g filter="url(#bl21)" transform="translate(-0.35,0.555) scale(1.019,1.0135)"><rect x="0" y="7" width="68" height="38" fill="#170d10"/><path fill="#2848c8" fill-opacity="0.9" d="M21.3 14.8h1v1h-1zM14.5 27.6h1v1h-1z"/><path fill="#a040e0" fill-opacity="0.5" d="M1.9 34.8h1v1h-1zM8.2 25.7h1v1h-1z"/><path fill="#7030d0" fill-opacity="0.9" d="M59.9 19.8h1v1h-1zM31.1 38.8h1v1h-1zM36 35.3h1v1h-1z"/><path fill="#7030d0" fill-opacity="0.5" d="M15.5 19.3h1v1h-1zM31.6 40.6h1v1h-1zM40.5 40.4h1v1h-1zM64.1 22.7h1v1h-1zM59.6 21.6h1v1h-1z"/><path fill="#3a30c0" fill-opacity="0.9" d="M20.3 20.8h1v1h-1zM50.8 37.9h1v1h-1zM16.8 14.9h1v1h-1z"/><path fill="#7030d0" fill-opacity="0.7" d="M7.1 8.4h1v1h-1zM22.4 27.4h1v1h-1zM4.9 23.1h1v1h-1zM24.5 15.7h1v1h-1zM60.4 13.4h1v1h-1zM53.6 18.4h1v1h-1zM25.7 19.7h1v1h-1zM27.1 40.7h1v1h-1zM17.4 18.9h1v1h-1z"/><path fill="#2848c8" fill-opacity="0.7" d="M36.8 24.3h1v1h-1zM65.3 17.4h1v1h-1zM62.4 10.6h1v1h-1zM21.5 42.7h1v1h-1z"/><path fill="#a040e0" fill-opacity="0.7" d="M12.3 8.3h1v1h-1zM63 28.9h1v1h-1zM39.3 41.7h1v1h-1z"/><path fill="#2848c8" fill-opacity="0.5" d="M50.4 15.6h1v1h-1zM61.2 26.9h1v1h-1zM49 18.3h1v1h-1zM55.1 23.9h1v1h-1zM7 37.4h1v1h-1z"/><path fill="#3a30c0" fill-opacity="0.5" d="M34.7 33.2h1v1h-1zM64.1 34.6h1v1h-1z"/><path fill="#3a30c0" fill-opacity="0.7" d="M52.1 37.5h1v1h-1zM2 22.4h1v1h-1zM29.2 17.7h1v1h-1zM0.8 39.3h1v1h-1z"/><path fill="#a040e0" fill-opacity="0.9" d="M5.6 23.8h1v1h-1zM36.7 27.5h1v1h-1zM45.2 25.7h1v1h-1z"/><path fill="#c8a0a8" d="M0 44.2h3v0.8h-3z"/><path fill="#c8a0a8" fill-opacity="0.7" d="M16 44.4h12v0.6h-12zM37 44.4h12v0.6h-12z"/><path fill="none" stroke="#4690a8" stroke-width="0.8" stroke-opacity="0.7" d="M2 19L6 15"/><path fill="none" stroke="#7ad0d4" stroke-width="0.7" stroke-opacity="0.85" d="M6 15L12 21M14 42L18 45M40 20L46 26"/><path fill="none" stroke="#7ad0d4" stroke-width="0.7" stroke-opacity="0.55" d="M9 11L5 7"/><path fill="none" stroke="#58b0bc" stroke-width="0.8" stroke-opacity="0.85" d="M8 12L12 16M30 8L36 14M45 38L49 34"/><path fill="none" stroke="#4690a8" stroke-width="0.8" stroke-opacity="0.85" d="M12 9L14 7.5"/><path fill="none" stroke="#7ad0d4" stroke-width="0.9" stroke-opacity="0.85" d="M18 19L24 25"/><path fill="none" stroke="#4690a8" stroke-width="0.7" stroke-opacity="0.85" d="M20 17L26 11M66 29L68 27M64 45L68 41M28 12L24 8"/><path fill="none" stroke="#6cc4cc" stroke-width="0.7" stroke-opacity="0.55" d="M18 12L26 20M22 41L26 45"/><path fill="none" stroke="#58b0bc" stroke-width="0.9" stroke-opacity="0.85" d="M26 20L22 24"/><path fill="none" stroke="#6cc4cc" stroke-width="0.9" stroke-opacity="0.85" d="M34 7L38 11M58 30L56 28M40 12L44 8"/><path fill="none" stroke="#6cc4cc" stroke-width="0.8" stroke-opacity="0.7" d="M32 18L42 8"/><path fill="none" stroke="#6cc4cc" stroke-width="0.9" stroke-opacity="0.7" d="M1 29L10 25M47 45L54 41"/><path fill="none" stroke="#58b0bc" stroke-width="0.9" stroke-opacity="0.7" d="M10 25L16 31"/><path fill="none" stroke="#7ad0d4" stroke-width="0.7" stroke-opacity="0.7" d="M16 31L24 36M2 42L8 36M38 25L34 29"/><path fill="none" stroke="#7ad0d4" stroke-width="0.9" stroke-opacity="0.55" d="M24 36L19 41M6 37L10 41M50 24L54 28"/><path fill="none" stroke="#4690a8" stroke-width="0.7" stroke-opacity="0.55" d="M0 27L2 29M67 39L68 38"/><path fill="none" stroke="#58b0bc" stroke-width="0.7" stroke-opacity="0.85" d="M31 25L38 32M44 16L50 10"/><path fill="none" stroke="#6cc4cc" stroke-width="0.8" stroke-opacity="0.55" d="M36 30L45 38M56 20L68 8"/><path fill="none" stroke="#7ad0d4" stroke-width="0.8" stroke-opacity="0.7" d="M34 36L39 41M37 45L42 40"/><path fill="none" stroke="#58b0bc" stroke-width="0.8" stroke-opacity="0.55" d="M28 33L30 35"/><path fill="none" stroke="#7ad0d4" stroke-width="0.8" stroke-opacity="0.55" d="M48 15L52 19"/><path fill="none" stroke="#4690a8" stroke-width="0.9" stroke-opacity="0.7" d="M59 17L62 21M12 33L8 37"/><path fill="none" stroke="#4690a8" stroke-width="0.9" stroke-opacity="0.55" d="M54 22L58 26"/><path fill="none" stroke="#58b0bc" stroke-width="0.8" stroke-opacity="0.7" d="M64 24L58 30M64 36L67 39"/><path fill="none" stroke="#6cc4cc" stroke-width="0.7" stroke-opacity="0.7" d="M42 40L47 45"/><path fill="none" stroke="#7ad0d4" stroke-width="0.9" stroke-opacity="0.7" d="M57 45L62 41"/><path fill="none" stroke="#4690a8" stroke-width="0.9" stroke-opacity="0.85" d="M52 36L58 42"/><path fill="none" stroke="#4690a8" stroke-width="0.7" stroke-opacity="0.7" d="M60 33L64 29"/><path fill="none" stroke="#58b0bc" stroke-width="0.7" stroke-opacity="0.7" d="M26 28L30 24"/></g></g><polygon points="0.8,0.95 67.9,0.95 0.8,38.8" fill="url(#gl21)"/><rect x="0.8" y="0.95" width="67.1" height="0.8" fill="#fff" fill-opacity="0.07"/><rect x="0.8" y="0.95" width="0.7" height="36.8" fill="#fff" fill-opacity="0.05"/></g></g></svg></div><div class="lb" style="left:631.1px"><span style="top:384.1px;letter-spacing:0.31px">colorful-neon-</span><span style="top:403.1px;letter-spacing:0.11px">lights-li...-utc.mp4</span></div>
<div class="ic" style="left:793px;top:312px"><svg width="68.4" height="53" viewBox="0 0 68.4 53" ><g transform="translate(0.19,0.25)"><defs><linearGradient id="gl22" gradientUnits="userSpaceOnUse" x1="0" y1="0" x2="68" y2="14"><stop offset="0" stop-color="#fff" stop-opacity="0.26"/><stop offset="0.5" stop-color="#fff" stop-opacity="0.17"/><stop offset="1" stop-color="#fff" stop-opacity="0.07"/></linearGradient><clipPath id="cp22"><rect x="-0.35" y="0.00" width="69.3" height="52.80"/></clipPath></defs><g transform="translate(0,0)"><rect x="-0.4" y="0.3" width="69.2" height="54.0" fill="#000" fill-opacity="0.25"/><rect x="0" y="0" width="68.4" height="52.8" fill="#000"/><g clip-path="url(#cp22)"><g transform="translate(-0.35,0.555) scale(1.019,1.0135)"></g></g><polygon points="0.8,0.95 67.9,0.95 0.8,38.8" fill="url(#gl22)"/><rect x="0.8" y="0.95" width="67.1" height="0.8" fill="#fff" fill-opacity="0.07"/><rect x="0.8" y="0.95" width="0.7" height="36.8" fill="#fff" fill-opacity="0.05"/></g></g></svg></div><div class="lb" style="left:757.4px"><span style="top:384.1px;letter-spacing:-0.22px">Crack 1.mov</span></div>
<div class="ic" style="left:919px;top:312px"><svg width="68.4" height="53" viewBox="0 0 68.4 53" ><g transform="translate(0.48,0.25)"><defs><linearGradient id="gl23" gradientUnits="userSpaceOnUse" x1="0" y1="0" x2="68" y2="14"><stop offset="0" stop-color="#fff" stop-opacity="0.26"/><stop offset="0.5" stop-color="#fff" stop-opacity="0.17"/><stop offset="1" stop-color="#fff" stop-opacity="0.07"/></linearGradient><clipPath id="cp23"><rect x="-0.35" y="0.00" width="69.3" height="52.80"/></clipPath></defs><g transform="translate(0,0)"><rect x="-0.4" y="0.3" width="69.2" height="54.0" fill="#000" fill-opacity="0.25"/><rect x="0" y="0" width="68.4" height="52.8" fill="#000"/><g clip-path="url(#cp23)"><g transform="translate(-0.35,0.555) scale(1.019,1.0135)"></g></g><polygon points="0.8,0.95 67.9,0.95 0.8,38.8" fill="url(#gl23)"/><rect x="0.8" y="0.95" width="67.1" height="0.8" fill="#fff" fill-opacity="0.07"/><rect x="0.8" y="0.95" width="0.7" height="36.8" fill="#fff" fill-opacity="0.05"/></g></g></svg></div><div class="lb" style="left:883.7px"><span style="top:384.1px;letter-spacing:-0.12px">Crack 2.mov</span></div>
<div class="ic" style="left:35px;top:441px"><svg width="68.4" height="53" viewBox="0 0 68.4 53" ><g transform="translate(0.45,0.1)"><defs><linearGradient id="gl24" gradientUnits="userSpaceOnUse" x1="0" y1="0" x2="68" y2="14"><stop offset="0" stop-color="#fff" stop-opacity="0.26"/><stop offset="0.5" stop-color="#fff" stop-opacity="0.17"/><stop offset="1" stop-color="#fff" stop-opacity="0.07"/></linearGradient><clipPath id="cp24"><rect x="-0.35" y="0.00" width="69.3" height="52.80"/></clipPath></defs><g transform="translate(0,0)"><rect x="-0.4" y="0.3" width="69.2" height="54.0" fill="#000" fill-opacity="0.25"/><rect x="0" y="0" width="68.4" height="52.8" fill="#000"/><g clip-path="url(#cp24)"><g transform="translate(-0.35,0.555) scale(1.019,1.0135)"></g></g><polygon points="0.8,0.95 67.9,0.95 0.8,38.8" fill="url(#gl24)"/><rect x="0.8" y="0.95" width="67.1" height="0.8" fill="#fff" fill-opacity="0.07"/><rect x="0.8" y="0.95" width="0.7" height="36.8" fill="#fff" fill-opacity="0.05"/></g></g></svg></div><div class="lb" style="left:-0.3px"><span style="top:513.1px;letter-spacing:-0.12px">Crack 3.mov</span></div>
<div class="ic" style="left:161px;top:441px"><svg width="68.4" height="53" viewBox="0 0 68.4 53" ><g transform="translate(0.74,0.1)"><defs><linearGradient id="gl25" gradientUnits="userSpaceOnUse" x1="0" y1="0" x2="68" y2="14"><stop offset="0" stop-color="#fff" stop-opacity="0.26"/><stop offset="0.5" stop-color="#fff" stop-opacity="0.17"/><stop offset="1" stop-color="#fff" stop-opacity="0.07"/></linearGradient><clipPath id="cp25"><rect x="-0.35" y="7.65" width="69.3" height="38.51"/></clipPath><filter id="bl25" x="-5%" y="-5%" width="110%" height="110%"><feGaussianBlur stdDeviation="0.35"/></filter><radialGradient id="cw25"><stop offset="0" stop-color="#6a6e76" stop-opacity="0.8"/><stop offset="0.6" stop-color="#888c94" stop-opacity="0.6"/><stop offset="1" stop-color="#b0b4bc" stop-opacity="0"/></radialGradient></defs><g transform="translate(0,0)"><rect x="-0.4" y="0.3" width="69.2" height="54.0" fill="#000" fill-opacity="0.25"/><rect x="0" y="0" width="68.4" height="52.8" fill="#000"/><g clip-path="url(#cp25)"><g filter="url(#bl25)" transform="translate(-0.35,0.555) scale(1.019,1.0135)"><rect x="0" y="7" width="68" height="38" fill="#d8dbe6"/><path fill="#c2c5ce" fill-opacity="0.5" d="M19.7 25.8a14 14 0 1 0 28 0a14 14 0 1 0 -28 0z"/><circle cx="33.7" cy="25.5" r="10.5" fill="url(#cw25)"/><path fill="#4a4e56" fill-opacity="0.8" d="M36 25.3h1.5v0.6h-1.5zM32.1 19.4h2v0.6h-2zM27.2 29.5h1.5v0.6h-1.5zM34.2 20.3h1v1h-1zM33.7 26.5h2v1h-2zM30.7 20.9h1.5v0.6h-1.5zM25.3 27.4h1.5v1h-1.5zM34.1 28.6h1v1h-1zM40 22.5h2v0.6h-2zM28.7 24h1.5v0.6h-1.5zM34.2 30.3h2v1h-2zM39.1 26.4h1.5v1h-1.5zM33.2 28.5h2v1h-2zM39.5 27.1h2v0.6h-2zM36.3 20.4h1.5v1h-1.5zM34.3 33.4h2v0.6h-2zM25.4 29.4h2v1h-2zM38 21.9h2v1h-2zM28.1 18.2h1v0.6h-1zM28.5 31.1h1.5v0.6h-1.5zM30.1 31.5h2v1h-2zM32.1 28.7h1v0.6h-1zM36.1 20.8h1v0.6h-1zM29.4 24.8h1v1h-1zM34.8 30.6h2v0.6h-2zM41.5 27h2v0.6h-2zM39.4 27h1v1h-1zM31 17.5h1.5v0.6h-1.5zM27.1 30.8h1.5v1h-1.5z"/><path fill="#60646c" fill-opacity="0.8" d="M34.9 27.4h1v0.6h-1zM34.6 24.9h1v0.6h-1zM34.1 25.8h1.5v1h-1.5zM34.5 30.5h2v0.6h-2zM40.6 26.6h1.5v0.6h-1.5zM35.2 17.7h1v1h-1zM30.1 23.9h1v0.6h-1zM26.1 25.5h1v1h-1zM25.1 25.6h1.5v1h-1.5zM38.5 25.5h1.5v1h-1.5zM25.8 27.2h2v1h-2zM30.5 30h2v1h-2zM34.9 22.6h1.5v0.6h-1.5zM38.9 26.3h2v0.6h-2zM36.4 22.2h1.5v1h-1.5zM33.4 17.8h1v1h-1zM26.5 30.4h2v1h-2zM29.8 26.1h2v1h-2zM26.1 27.8h1.5v0.6h-1.5zM26.1 24.7h1v1h-1zM30.7 26.8h1v1h-1zM29.6 19.8h1.5v1h-1.5zM25.5 22.7h1v0.6h-1zM33.1 29h1.5v0.6h-1.5zM36.4 23.6h1.5v1h-1.5zM28.7 21.7h1v0.6h-1zM35.4 20.2h2v0.6h-2z"/><path fill="#d0d3da" fill-opacity="0.8" d="M27.1 23.8h1.5v0.6h-1.5zM28.4 25.6h1.5v1h-1.5zM25 25.2h1.5v1h-1.5zM36.3 25h2v0.6h-2zM39.1 19.9h1.5v0.6h-1.5zM24.9 26.5h1.5v1h-1.5zM29.4 18.5h1v1h-1zM34.3 27.5h1.5v0.6h-1.5zM37.3 21.2h1.5v0.6h-1.5zM28.3 32.4h1.5v1h-1.5zM38.5 30.3h2v0.6h-2zM25.3 22.9h2v1h-2zM29.3 26.2h1.5v0.6h-1.5zM28.6 22.2h1v0.6h-1zM31.3 18.2h1v0.6h-1zM31.9 31.1h1v1h-1z"/><path fill="#9a9ea6" fill-opacity="0.8" d="M35.8 20.5h1v0.6h-1zM25.5 24h1.5v1h-1.5zM35.4 32.9h1.5v0.6h-1.5zM33.3 22.8h1v1h-1zM26.1 27.3h2v0.6h-2zM34.5 19.6h1v0.6h-1zM33.6 23h1v1h-1zM34.2 26.6h1.5v0.6h-1.5zM41 26.3h1.5v1h-1.5zM31.7 20.3h2v1h-2zM35.1 31.2h1.5v1h-1.5zM30.8 22.2h2v0.6h-2zM40.4 23.2h2v0.6h-2zM38.5 25.6h1v0.6h-1zM35.3 22.3h2v0.6h-2zM28.4 17.6h1.5v1h-1.5zM27.9 26.3h2v1h-2zM39.1 28.4h2v1h-2zM31 25.1h1.5v1h-1.5zM37.6 21.8h1.5v0.6h-1.5zM33 27.5h2v0.6h-2zM36.9 25.9h1.5v0.6h-1.5z"/><path fill="#787c84" fill-opacity="0.8" d="M35.1 18.4h1.5v0.6h-1.5zM33.2 33.6h1v1h-1zM37.7 24.5h1.5v1h-1.5zM28 25.3h1.5v1h-1.5zM36.9 29h1v1h-1zM32.8 30.2h1.5v0.6h-1.5zM29.5 29.5h1v1h-1zM29 29.3h2v0.6h-2zM27.5 23.6h1.5v0.6h-1.5zM33.3 33.4h2v1h-2zM27.2 24.3h2v0.6h-2zM40.6 25.9h2v0.6h-2zM31.2 32.4h1v1h-1zM26.7 20.6h2v1h-2zM37.8 29.4h2v1h-2zM30.5 24.1h1v0.6h-1z"/><path fill="#80848c" fill-opacity="0.6" d="M43.3 16.7h0.9v0.9h-0.9zM44.1 16.6h0.9v0.9h-0.9zM21.1 25.8h0.9v0.9h-0.9zM36.8 13h0.9v0.9h-0.9zM22.1 20.8h0.9v0.9h-0.9zM43.8 26.9h0.9v0.9h-0.9zM23.2 21.2h0.9v0.9h-0.9zM44.5 20.3h0.9v0.9h-0.9zM26.2 18.4h0.9v0.9h-0.9zM23.5 28.3h0.9v0.9h-0.9zM21.4 20.2h0.9v0.9h-0.9zM42.9 33h0.9v0.9h-0.9zM25.6 17.8h0.9v0.9h-0.9zM34 14.2h0.9v0.9h-0.9zM22.7 23.6h0.9v0.9h-0.9zM20.6 21.7h0.9v0.9h-0.9zM23.3 25.1h0.9v0.9h-0.9zM23.9 21.8h0.9v0.9h-0.9zM44.3 25.6h0.9v0.9h-0.9zM33.8 15.6h0.9v0.9h-0.9zM42.4 34.8h0.9v0.9h-0.9zM27.9 14.1h0.9v0.9h-0.9zM37.8 14h0.9v0.9h-0.9zM26.4 36.1h0.9v0.9h-0.9zM33 36h0.9v0.9h-0.9zM24.1 34.1h0.9v0.9h-0.9zM22.3 24h0.9v0.9h-0.9zM41.9 18.8h0.9v0.9h-0.9zM29.5 14.1h0.9v0.9h-0.9zM21.8 19.5h0.9v0.9h-0.9zM26.1 16.5h0.9v0.9h-0.9zM45.4 21h0.9v0.9h-0.9zM35.5 15.2h0.9v0.9h-0.9zM23.7 27.7h0.9v0.9h-0.9zM30.4 14.4h0.9v0.9h-0.9zM41.6 15.9h0.9v0.9h-0.9zM21.4 24.4h0.9v0.9h-0.9zM33.6 36.3h0.9v0.9h-0.9zM21.4 25.1h0.9v0.9h-0.9zM46.1 26.1h0.9v0.9h-0.9zM39 13.3h0.9v0.9h-0.9zM47.4 25.2h0.9v0.9h-0.9zM28.8 36h0.9v0.9h-0.9zM25.8 15h0.9v0.9h-0.9zM28.3 35.3h0.9v0.9h-0.9zM47.1 26.2h0.9v0.9h-0.9zM46 27.9h0.9v0.9h-0.9zM46 24.4h0.9v0.9h-0.9zM33.5 15.2h0.9v0.9h-0.9zM21.5 31.4h0.9v0.9h-0.9z"/><path fill="none" stroke="#4c5160" stroke-width="0.7" stroke-opacity="0.8" d="M0 17.6L20 17.6M47 17.6L68 17.6"/><path fill="none" stroke="#7c8190" stroke-width="0.5" stroke-opacity="0.5" d="M20 17.6L47 17.6"/><path fill="none" stroke="#4c5160" stroke-width="0.7" stroke-opacity="0.85" d="M0 25.6L68 25.6"/><path fill="none" stroke="#8a8e9c" stroke-width="0.6" stroke-opacity="0.6" d="M0 33.5L68 33.5"/><path fill="none" stroke="#5a5f6e" stroke-width="0.7" stroke-opacity="0.75" d="M9.3 7L9.3 45M60.9 7L60.9 45M47.3 7L47.3 45"/><path fill="none" stroke="#5a5f6e" stroke-width="0.7" stroke-opacity="0.8" d="M33.7 7L33.7 45"/><path fill="none" stroke="#9a9eac" stroke-width="0.6" stroke-opacity="0.6" d="M20.1 7L20.1 45"/></g></g><clipPath id="cq25"><rect x="0" y="0" width="68.4" height="7.65"/></clipPath><polygon points="0.8,0.95 67.9,0.95 0.8,38.8" fill="url(#gl25)" clip-path="url(#cq25)"/><polygon points="0.8,0.95 67.9,0.95 0.8,38.8" fill="url(#gl25)" clip-path="url(#cp25)" opacity="0.4"/><rect x="0.8" y="0.95" width="67.1" height="0.8" fill="#fff" fill-opacity="0.07"/><rect x="0.8" y="0.95" width="0.7" height="36.8" fill="#fff" fill-opacity="0.05"/></g></g></svg></div><div class="lb" style="left:125.9px"><span style="top:513.1px;letter-spacing:-0.31px">Cube Wave 1 Clip</span><span style="top:531.1px;letter-spacing:-0.07px">1.mov</span></div>
<div class="ic" style="left:288px;top:441px"><svg width="68.4" height="53" viewBox="0 0 68.4 53" ><g transform="translate(0.03,0.1)"><defs><linearGradient id="gl26" gradientUnits="userSpaceOnUse" x1="0" y1="0" x2="68" y2="14"><stop offset="0" stop-color="#fff" stop-opacity="0.26"/><stop offset="0.5" stop-color="#fff" stop-opacity="0.17"/><stop offset="1" stop-color="#fff" stop-opacity="0.07"/></linearGradient><clipPath id="cp26"><rect x="-0.35" y="7.65" width="69.3" height="38.51"/></clipPath><filter id="bl26" x="-5%" y="-5%" width="110%" height="110%"><feGaussianBlur stdDeviation="0.4"/></filter></defs><g transform="translate(0,0)"><rect x="-0.4" y="0.3" width="69.2" height="54.0" fill="#000" fill-opacity="0.25"/><rect x="0" y="0" width="68.4" height="52.8" fill="#000"/><g clip-path="url(#cp26)"><g filter="url(#bl26)" transform="translate(-0.35,0.555) scale(1.019,1.0135)"><rect x="0" y="7" width="68" height="38" fill="#d6d9e3"/><ellipse cx="34" cy="26" rx="22.5" ry="19.5" fill="none" stroke="#9296a4" stroke-width="9" stroke-opacity="0.16"/><path d="M45.9 9A22.5 20 0 0 1 45.9 43" fill="none" stroke="#8e92a0" stroke-width="9" stroke-opacity="0.3"/><path d="M22.1 9A22.5 20 0 0 0 22.1 43" fill="none" stroke="#8e92a0" stroke-width="9" stroke-opacity="0.3"/><path d="M46.5 12.9A19.5 17.16 0 0 1 46.5 39.1" fill="none" stroke="#70748a" stroke-width="0.9" stroke-opacity="0.45"/><path d="M21.5 12.9A19.5 17.16 0 0 0 21.5 39.1" fill="none" stroke="#70748a" stroke-width="0.9" stroke-opacity="0.45"/><path d="M48.5 10.8A22.5 19.8 0 0 1 48.5 41.2" fill="none" stroke="#70748a" stroke-width="0.9" stroke-opacity="0.45"/><path d="M19.5 10.8A22.5 19.8 0 0 0 19.5 41.2" fill="none" stroke="#70748a" stroke-width="0.9" stroke-opacity="0.45"/><path d="M50.4 8.8A25.5 22.44 0 0 1 50.4 43.2" fill="none" stroke="#70748a" stroke-width="0.9" stroke-opacity="0.45"/><path d="M17.6 8.8A25.5 22.44 0 0 0 17.6 43.2" fill="none" stroke="#70748a" stroke-width="0.9" stroke-opacity="0.45"/><path fill="#9a9eaa" fill-opacity="0.7" d="M10.9 34.1h0.8v1.2h-0.8zM9 25.9h0.8v1.2h-0.8zM13 18.2h0.8v0.8h-0.8zM53.5 30h1.2v2h-1.2zM12.4 27.8h1.2v0.8h-1.2zM53.9 28h1.2v1.2h-1.2zM14.4 21.6h1.6v2h-1.6zM13.8 26h1.2v0.8h-1.2zM50 34.2h1.2v0.8h-1.2zM21.6 36.2h1.6v0.8h-1.6zM53.7 34.3h0.8v1.2h-0.8zM59 22h0.8v2h-0.8zM51.1 32.9h0.8v2h-0.8zM11.9 36.5h1.6v0.8h-1.6zM51.3 8.5h0.8v1.2h-0.8zM44 8.7h0.8v2h-0.8zM10.6 31h1.2v2h-1.2zM10.6 29.7h1.6v1.2h-1.6zM58.5 29.5h1.2v2h-1.2zM12.7 31.4h1.2v2h-1.2zM48.8 35.6h1.6v0.8h-1.6zM50.8 35.2h0.8v1.2h-0.8zM8.6 31.7h0.8v0.8h-0.8z"/><path fill="#8e929e" fill-opacity="0.9" d="M45.7 46.8h1.2v2h-1.2zM51.8 21.8h0.8v2h-0.8zM26.1 41.1h1.6v2h-1.6zM15.3 9.6h1.6v0.8h-1.6zM52.9 27.3h1.2v1.2h-1.2zM26.4 7.8h0.8v1.2h-0.8zM10.5 36.2h1.2v1.2h-1.2zM45.8 12.1h1.2v2h-1.2zM43.6 46h1.2v0.8h-1.2zM33.3 48.9h0.8v0.8h-0.8zM52.9 31.4h0.8v2h-0.8zM28.9 8.6h0.8v2h-0.8zM59.3 27.9h1.2v1.2h-1.2zM59.2 21.1h0.8v2h-0.8zM57.1 32h1.2v2h-1.2zM54.2 26.4h0.8v0.8h-0.8zM51.6 22.2h1.2v1.2h-1.2zM54.3 36.2h0.8v0.8h-0.8zM57.5 26.6h1.6v1.2h-1.6zM16.6 42.8h1.6v0.8h-1.6zM37 44.9h1.2v1.2h-1.2zM17.3 10.1h1.2v0.8h-1.2zM11.1 18.5h1.2v0.8h-1.2zM12 40.9h1.6v0.8h-1.6zM52.4 25.7h1.6v2h-1.6zM45.8 4.4h1.6v2h-1.6zM13.5 33.2h0.8v2h-0.8zM13.6 13.9h1.2v1.2h-1.2zM37.6 5.6h0.8v2h-0.8zM43.4 39.6h0.8v0.8h-0.8zM12.9 30.2h1.6v2h-1.6z"/><path fill="#8e929e" fill-opacity="0.7" d="M50.5 43.6h0.8v1.2h-0.8zM47.2 36.9h0.8v1.2h-0.8zM6.7 30.7h1.2v2h-1.2zM57 38.4h1.2v1.2h-1.2zM51.4 23.3h1.6v0.8h-1.6zM59.3 24.1h1.6v0.8h-1.6zM56 24.9h1.2v2h-1.2zM11.9 12.9h1.2v0.8h-1.2zM51.7 22.2h1.2v0.8h-1.2zM57.8 29.1h1.2v0.8h-1.2zM10.4 33.2h1.2v0.8h-1.2zM42.9 8.4h1.2v0.8h-1.2zM16.3 32.7h0.8v1.2h-0.8zM36.3 4.4h1.6v1.2h-1.6zM15.7 19h1.2v2h-1.2zM28.9 8.4h1.6v0.8h-1.6zM43.1 46.8h1.2v2h-1.2zM17.5 33.9h0.8v0.8h-0.8zM19.2 33.6h1.2v0.8h-1.2zM14.2 24.1h1.2v1.2h-1.2zM17.5 14.4h0.8v1.2h-0.8zM27.9 11.4h1.6v1.2h-1.6zM61.7 25.7h1.2v0.8h-1.2zM29 41.4h1.6v2h-1.6zM9.7 27.3h0.8v2h-0.8zM13.3 39.6h1.6v2h-1.6zM51.7 19h0.8v2h-0.8zM59.4 23.7h1.6v1.2h-1.6zM55.3 30.1h1.2v1.2h-1.2zM59.3 26.5h1.6v2h-1.6z"/><path fill="#b8bcc8" fill-opacity="0.5" d="M15.2 25.1h1.2v2h-1.2zM54.8 37.8h0.8v0.8h-0.8zM60.1 18.9h1.6v1.2h-1.6zM33.6 2h1.6v1.2h-1.6zM19.2 37.6h1.6v0.8h-1.6zM7.3 32.8h1.2v0.8h-1.2zM20.9 15h0.8v2h-0.8zM11.6 12.9h1.2v0.8h-1.2zM27.8 45.1h1.2v0.8h-1.2zM12.4 35.2h1.2v0.8h-1.2zM27.9 42.1h1.6v1.2h-1.6zM18.6 19.2h1.6v0.8h-1.6zM55.2 34.2h0.8v2h-0.8zM51 23.8h1.6v1.2h-1.6zM13.8 20.7h1.6v0.8h-1.6zM20.7 39.9h0.8v0.8h-0.8zM38.8 3.7h1.2v0.8h-1.2zM56.8 26.4h1.2v2h-1.2zM22.7 6h0.8v0.8h-0.8zM15.2 14.8h1.2v1.2h-1.2zM52.8 31.3h0.8v1.2h-0.8zM49.9 39.5h0.8v1.2h-0.8zM57.4 21.3h1.6v0.8h-1.6zM53.1 11.9h0.8v2h-0.8zM37.9 45.4h1.2v0.8h-1.2zM8.8 34.6h1.2v2h-1.2z"/><path fill="#8e929e" fill-opacity="0.5" d="M14.2 22.2h1.6v2h-1.6zM58.1 21.5h1.2v0.8h-1.2zM21.3 7.6h1.2v1.2h-1.2zM17 37.2h1.6v2h-1.6zM46.4 14.9h1.6v0.8h-1.6zM12.8 35.2h1.2v2h-1.2zM10.4 23.1h0.8v2h-0.8zM33.3 5h0.8v1.2h-0.8zM21.1 12.9h0.8v1.2h-0.8zM14.4 29h1.2v0.8h-1.2zM11.5 38.1h0.8v0.8h-0.8zM7.3 28.2h0.8v2h-0.8zM56.8 22.2h1.6v2h-1.6z"/><path fill="#6c707c" fill-opacity="0.7" d="M7.9 17.5h0.8v0.8h-0.8zM13.5 24.2h1.2v1.2h-1.2zM23.4 3.6h1.6v0.8h-1.6zM31.9 41h1.6v1.2h-1.6zM9.8 22.7h1.6v2h-1.6zM47.9 45.8h0.8v2h-0.8zM51.1 32.1h0.8v2h-0.8zM9.5 36.3h1.6v0.8h-1.6zM14.6 23.7h1.6v1.2h-1.6zM58.9 34.8h1.6v0.8h-1.6zM59.8 25.3h0.8v2h-0.8zM49.5 45.7h1.6v2h-1.6zM52.5 22.9h0.8v2h-0.8zM13.8 40h1.2v0.8h-1.2zM21.8 13.3h1.6v1.2h-1.6zM53 9.6h1.2v1.2h-1.2zM43.3 11.6h1.2v2h-1.2zM16.7 25.2h1.6v2h-1.6zM52.7 28.9h1.2v2h-1.2zM13 24.7h1.6v0.8h-1.6zM37.8 3.5h0.8v0.8h-0.8zM12.7 22.6h0.8v0.8h-0.8z"/><path fill="#787c88" fill-opacity="0.7" d="M17.5 29.9h1.6v2h-1.6zM51.2 27.1h0.8v0.8h-0.8zM11 29.7h1.6v2h-1.6zM49.3 16.9h0.8v1.2h-0.8zM7.4 31.5h0.8v0.8h-0.8zM16.3 32.1h0.8v0.8h-0.8zM9.8 31.4h1.6v1.2h-1.6zM7.9 28.4h0.8v2h-0.8zM27.5 41.6h1.6v0.8h-1.6zM47.7 14.6h1.6v1.2h-1.6zM17.5 8.5h0.8v2h-0.8zM48.4 17.4h1.6v2h-1.6zM51.2 40.8h1.6v0.8h-1.6zM9.2 26.4h0.8v1.2h-0.8zM11 39.3h1.2v2h-1.2zM54.6 31h0.8v2h-0.8zM13.7 25h1.2v1.2h-1.2zM53.2 42.3h0.8v1.2h-0.8zM40.5 39.9h1.6v0.8h-1.6zM20 10.6h1.2v2h-1.2zM54.3 15.6h1.2v0.8h-1.2zM51.1 12.4h0.8v1.2h-0.8zM44.1 41.6h1.6v2h-1.6z"/><path fill="#9a9eaa" fill-opacity="0.9" d="M7.5 27.2h1.6v1.2h-1.6zM19.3 34.8h0.8v2h-0.8zM54.2 17.9h1.2v2h-1.2zM22.7 40.6h1.6v0.8h-1.6zM15.4 28.5h1.2v2h-1.2zM10.1 38.1h1.6v2h-1.6zM13.7 15.9h1.2v2h-1.2zM51.6 31.9h0.8v1.2h-0.8zM51.7 25.4h1.6v2h-1.6zM12.1 21.6h0.8v2h-0.8zM55.1 38.7h0.8v0.8h-0.8zM8.9 19.8h1.2v2h-1.2zM12.7 34.6h0.8v2h-0.8zM17.1 17.1h1.6v0.8h-1.6zM51.7 35.8h1.2v2h-1.2zM52.8 40.3h0.8v1.2h-0.8zM32.6 44h0.8v0.8h-0.8zM12.5 27.7h1.6v2h-1.6zM14.2 28.9h0.8v2h-0.8zM16.5 30.6h1.6v0.8h-1.6z"/><path fill="#a4a8b4" fill-opacity="0.9" d="M9.8 20.9h0.8v2h-0.8zM25.3 45.7h0.8v0.8h-0.8zM51.4 28.4h0.8v1.2h-0.8zM7.3 24.9h1.6v2h-1.6zM53.3 30.8h0.8v1.2h-0.8zM16.6 10.2h0.8v2h-0.8zM12.6 31.9h0.8v2h-0.8zM16.9 16.6h1.2v2h-1.2zM50.8 29.1h1.2v1.2h-1.2zM19.2 12.3h1.2v2h-1.2zM38.6 9.2h1.2v0.8h-1.2zM53.7 22h0.8v1.2h-0.8zM18.9 45.3h0.8v2h-0.8zM6.6 30.1h1.2v0.8h-1.2zM31.7 47.9h1.6v2h-1.6z"/><path fill="#9a9eaa" fill-opacity="0.5" d="M53.4 16.2h0.8v0.8h-0.8zM10.6 31.6h1.2v2h-1.2zM26.1 3.9h1.6v0.8h-1.6zM17.5 20h1.6v2h-1.6zM58.8 17.3h1.2v0.8h-1.2zM14.5 31.4h1.2v1.2h-1.2zM59.2 36.2h0.8v2h-0.8zM56 13.2h1.6v2h-1.6zM49.5 10.4h1.6v0.8h-1.6zM33.5 42.8h1.6v1.2h-1.6zM18.2 20.5h1.2v0.8h-1.2zM51.6 27.5h1.6v2h-1.6zM56.6 24.1h1.2v2h-1.2zM43.6 11.6h1.2v2h-1.2zM17.9 35.3h1.6v2h-1.6zM12.3 31.3h0.8v1.2h-0.8zM46.2 41.4h1.6v0.8h-1.6zM44.6 8.3h1.6v1.2h-1.6zM48.8 12h0.8v0.8h-0.8zM13 11.4h1.6v1.2h-1.6zM43.1 5.9h1.2v2h-1.2zM28.6 42.4h0.8v0.8h-0.8z"/><path fill="#a4a8b4" fill-opacity="0.5" d="M15.4 33.1h1.6v2h-1.6zM24.4 47h0.8v2h-0.8zM11.4 23.4h1.2v1.2h-1.2zM51.9 27h1.6v0.8h-1.6zM11.2 31.8h0.8v1.2h-0.8zM33.6 45.1h0.8v1.2h-0.8zM17.5 10.1h1.2v0.8h-1.2zM24.8 43h0.8v2h-0.8zM27.3 6.5h0.8v0.8h-0.8zM58.8 19.3h1.2v2h-1.2zM53.7 23.9h0.8v0.8h-0.8zM9 30.3h0.8v1.2h-0.8zM25.8 10.3h1.6v2h-1.6zM51.2 37h1.6v2h-1.6zM61.1 23.2h1.2v2h-1.2zM35.8 9.3h0.8v2h-0.8zM50.3 17.1h0.8v2h-0.8zM13 32.3h1.2v1.2h-1.2zM53 26.1h1.2v0.8h-1.2zM49.2 33.2h1.6v2h-1.6zM50.6 19.7h1.6v0.8h-1.6zM8.9 28.1h1.2v0.8h-1.2z"/><path fill="#787c88" fill-opacity="0.9" d="M37.6 43.7h1.6v0.8h-1.6zM12.9 18h0.8v0.8h-0.8zM49.8 16.9h1.6v0.8h-1.6zM9.6 25h1.6v0.8h-1.6zM13.8 31h1.6v2h-1.6zM47.7 37h1.6v1.2h-1.6zM51.6 29.6h0.8v0.8h-0.8zM34.7 11.3h0.8v0.8h-0.8zM37.7 42h1.6v1.2h-1.6zM53.4 38.6h1.2v0.8h-1.2zM30.3 5.1h1.6v0.8h-1.6zM56.8 36h1.6v0.8h-1.6zM39.5 42.5h1.2v0.8h-1.2zM51.2 16.3h0.8v1.2h-0.8zM17.2 34.4h1.6v1.2h-1.6zM52.3 29.7h0.8v0.8h-0.8zM13.3 28.5h1.6v2h-1.6zM43.9 45.7h0.8v1.2h-0.8zM12.3 21.4h1.6v0.8h-1.6zM15.5 35h1.6v0.8h-1.6zM51.6 26h0.8v2h-0.8z"/><path fill="#787c88" fill-opacity="0.5" d="M7 31.8h1.6v2h-1.6zM14.8 42.9h1.6v0.8h-1.6zM20.1 41h1.2v0.8h-1.2zM9.1 23.2h0.8v1.2h-0.8zM10.1 16.9h1.6v1.2h-1.6zM51.8 21.7h1.6v2h-1.6zM59.9 33.4h1.2v0.8h-1.2zM26 3.6h1.6v0.8h-1.6zM7.9 20.8h1.2v2h-1.2zM11.6 27.1h1.2v2h-1.2zM41.1 41.6h1.2v2h-1.2zM40.7 9.2h1.2v1.2h-1.2zM50.7 29.9h0.8v1.2h-0.8zM57.1 36h1.2v1.2h-1.2zM33.1 5.8h1.2v2h-1.2zM11 32.3h0.8v2h-0.8zM7.8 17.8h1.2v2h-1.2zM54.4 25.9h1.2v1.2h-1.2zM57.8 23.6h1.2v0.8h-1.2z"/><path fill="#6c707c" fill-opacity="0.5" d="M59.3 33.6h1.2v1.2h-1.2zM11.5 12.9h1.2v2h-1.2zM57.6 36h1.2v1.2h-1.2zM15.9 39.6h0.8v2h-0.8zM51.6 34.8h1.6v1.2h-1.6zM13.3 15.5h1.2v0.8h-1.2zM58.3 32.2h1.6v0.8h-1.6zM13.4 26.5h1.6v2h-1.6zM16.1 17.3h1.2v0.8h-1.2zM13.6 28.6h1.2v1.2h-1.2zM49 44.7h0.8v0.8h-0.8zM38.6 11.6h0.8v2h-0.8zM33.4 42.3h1.2v0.8h-1.2zM60.3 29.8h1.6v1.2h-1.6zM59.2 32h1.2v0.8h-1.2zM8.5 16.2h0.8v0.8h-0.8zM52.4 19.9h1.2v2h-1.2zM43.3 5.6h1.6v1.2h-1.6z"/><path fill="#b8bcc8" fill-opacity="0.9" d="M57.8 18.6h0.8v1.2h-0.8zM19 13.1h1.2v1.2h-1.2zM33.6 8h0.8v2h-0.8zM17.4 8.4h1.2v2h-1.2zM51 26.9h1.2v2h-1.2zM20.7 13.7h1.6v0.8h-1.6zM40.7 4.3h0.8v2h-0.8zM14.4 19.6h1.2v1.2h-1.2zM24.7 43.3h1.2v0.8h-1.2zM54.4 22.8h0.8v2h-0.8zM13.9 29.1h0.8v0.8h-0.8zM17.6 33.4h0.8v1.2h-0.8zM20.1 13.6h1.6v0.8h-1.6zM36.5 7.4h0.8v2h-0.8zM14.4 32.7h0.8v1.2h-0.8zM21.6 11.6h1.6v2h-1.6zM16.2 15.2h1.2v2h-1.2zM28.4 11.6h1.6v1.2h-1.6zM22.8 39.1h1.6v1.2h-1.6zM43.1 12.4h1.6v2h-1.6zM13.1 32.1h0.8v2h-0.8z"/><path fill="#6c707c" fill-opacity="0.9" d="M18.9 17.6h0.8v2h-0.8zM56.3 28.2h1.2v1.2h-1.2zM55.9 26.8h1.6v2h-1.6zM15.4 38h1.2v1.2h-1.2zM48.4 36.1h0.8v2h-0.8zM16.6 27.3h0.8v1.2h-0.8zM43.9 13.1h0.8v1.2h-0.8zM12.7 35.9h0.8v1.2h-0.8zM25.7 41.1h1.2v0.8h-1.2zM39.7 49.4h0.8v0.8h-0.8zM16.5 23.4h1.6v2h-1.6zM43.2 43.3h1.2v0.8h-1.2zM37.8 8.9h1.6v1.2h-1.6zM57.5 35.6h1.2v2h-1.2zM45.5 14.4h0.8v2h-0.8zM60.7 28.1h1.6v1.2h-1.6zM42.7 8.3h0.8v1.2h-0.8zM55.5 33.2h1.2v2h-1.2zM49.1 16.9h1.6v0.8h-1.6zM28.9 47.2h1.6v0.8h-1.6zM59.1 26.3h0.8v0.8h-0.8zM47 16.4h0.8v2h-0.8zM37.7 40.6h0.8v1.2h-0.8zM55.1 13.7h1.6v2h-1.6zM19.7 17.8h1.6v1.2h-1.6z"/><path fill="#a4a8b4" fill-opacity="0.7" d="M54 24.4h0.8v1.2h-0.8zM52.4 38.1h1.6v1.2h-1.6zM14.9 9.4h1.6v2h-1.6zM14.6 19.3h0.8v0.8h-0.8zM55.3 35.8h0.8v1.2h-0.8zM52.6 30.3h0.8v0.8h-0.8zM29.5 3.5h1.6v1.2h-1.6zM12.2 31.6h0.8v1.2h-0.8zM55.5 24.4h1.2v0.8h-1.2zM59.8 24.8h0.8v1.2h-0.8zM52.1 30.5h1.6v1.2h-1.6zM13.4 39.1h0.8v1.2h-0.8zM11.4 18.5h1.6v2h-1.6zM51.4 24.3h0.8v1.2h-0.8zM19.9 34.5h0.8v0.8h-0.8z"/><path fill="#b8bcc8" fill-opacity="0.7" d="M9.4 30.7h1.2v0.8h-1.2zM50.2 41.1h0.8v2h-0.8zM13.2 23.3h0.8v1.2h-0.8zM51.2 21.3h0.8v0.8h-0.8zM53.2 33.8h1.2v2h-1.2zM46.4 37.6h1.6v0.8h-1.6zM24.4 39.9h1.2v0.8h-1.2zM40.8 5.4h1.6v0.8h-1.6zM21.9 15.5h0.8v2h-0.8zM61.4 25.4h0.8v2h-0.8zM59.5 18.1h0.8v2h-0.8zM16.1 14.1h1.2v0.8h-1.2zM12.2 34.9h1.6v2h-1.6zM46.4 42.9h1.6v2h-1.6z"/><path fill="#8a8e9a" fill-opacity="0.5" d="M12.8 33.1h2v0.6h-2zM13.1 36.4h3v0.6h-3zM12.3 28.4h1v0.6h-1zM53.7 20.2h3v0.6h-3zM22.4 19.3h1v0.6h-1zM30.9 35h1v0.6h-1zM8.2 36.7h1v0.6h-1zM5.1 38.8h3v0.6h-3zM1.1 18.2h2v0.6h-2zM19.8 24h1v0.6h-1zM6.3 28.4h2v0.6h-2zM49.8 16.6h1v0.6h-1zM49.7 8h1v0.6h-1zM64.4 43.9h1v0.6h-1zM57 7.8h1v0.6h-1zM27.5 18.2h1v0.6h-1zM48.6 37.4h2v0.6h-2zM45.5 32.9h2v0.6h-2zM50 31.6h2v0.6h-2zM22.3 35.7h2v0.6h-2zM58.7 28.5h2v0.6h-2zM63.4 24.7h2v0.6h-2zM34.5 27.2h3v0.6h-3zM42.1 12.8h3v0.6h-3zM9 36h3v0.6h-3zM13.2 8.5h1v0.6h-1zM43.2 41.4h1v0.6h-1zM11.4 27.1h1v0.6h-1zM25.7 23.1h2v0.6h-2zM62.2 7.1h2v0.6h-2zM35.3 36.4h1v0.6h-1zM16.7 29.6h3v0.6h-3zM49.9 19h1v0.6h-1zM27.4 35.3h2v0.6h-2zM62.4 35.5h3v0.6h-3zM3.8 35.1h3v0.6h-3zM20.1 17.5h2v0.6h-2zM1.5 29.9h3v0.6h-3zM22.8 8.9h1v0.6h-1zM37.6 24.3h1v0.6h-1zM20.6 22.8h3v0.6h-3zM4.8 43.8h1v0.6h-1zM1.1 7.4h2v0.6h-2zM33.6 19.3h2v0.6h-2zM9.3 33.2h1v0.6h-1zM51.3 39.4h3v0.6h-3zM66.7 30h1v0.6h-1zM57.2 18.1h3v0.6h-3zM59.9 40.5h1v0.6h-1zM37.2 38.4h3v0.6h-3zM3.4 23.1h3v0.6h-3zM35.2 24h3v0.6h-3zM14.5 27.8h2v0.6h-2zM6.3 31.9h2v0.6h-2zM28.7 21.1h2v0.6h-2zM17.7 21.9h2v0.6h-2zM32.4 7.1h2v0.6h-2zM49 17.9h3v0.6h-3zM6.5 8.4h3v0.6h-3zM57.9 18.2h2v0.6h-2zM12.4 10.9h1v0.6h-1zM31.6 33.3h2v0.6h-2zM48.8 26.5h2v0.6h-2zM15.5 43.3h2v0.6h-2zM51.4 8.1h3v0.6h-3zM44.4 25.2h1v0.6h-1zM18.1 35.1h2v0.6h-2zM32.9 37.3h1v0.6h-1zM30.5 27h2v0.6h-2zM31.3 8.4h1v0.6h-1z"/><path fill="none" stroke="#4c5160" stroke-width="0.7" stroke-opacity="0.85" d="M0 25.7L68 25.7"/><path fill="none" stroke="#5a5f6e" stroke-width="0.7" stroke-opacity="0.8" d="M34.2 7L34.2 45"/></g></g><clipPath id="cq26"><rect x="0" y="0" width="68.4" height="7.65"/></clipPath><polygon points="0.8,0.95 67.9,0.95 0.8,38.8" fill="url(#gl26)" clip-path="url(#cq26)"/><polygon points="0.8,0.95 67.9,0.95 0.8,38.8" fill="url(#gl26)" clip-path="url(#cp26)" opacity="0.4"/><rect x="0.8" y="0.95" width="67.1" height="0.8" fill="#fff" fill-opacity="0.07"/><rect x="0.8" y="0.95" width="0.7" height="36.8" fill="#fff" fill-opacity="0.05"/></g></g></svg></div><div class="lb" style="left:252.2px"><span style="top:513.1px;letter-spacing:-0.34px">Cube Wave 1 Clip</span><span style="top:531.1px;letter-spacing:0.18px">2.mov</span></div>
<div class="ic" style="left:414px;top:441px"><svg width="68.4" height="53" viewBox="0 0 68.4 53" ><g transform="translate(0.32,0.1)"><defs><linearGradient id="gl27" gradientUnits="userSpaceOnUse" x1="0" y1="0" x2="68" y2="14"><stop offset="0" stop-color="#fff" stop-opacity="0.26"/><stop offset="0.5" stop-color="#fff" stop-opacity="0.17"/><stop offset="1" stop-color="#fff" stop-opacity="0.07"/></linearGradient><clipPath id="cp27"><rect x="-0.35" y="7.65" width="69.3" height="38.51"/></clipPath><filter id="bl27" x="-5%" y="-5%" width="110%" height="110%"><feGaussianBlur stdDeviation="0.35"/></filter><radialGradient id="cw27"><stop offset="0" stop-color="#9a9ea6" stop-opacity="0.8"/><stop offset="0.6" stop-color="#b4b8c0" stop-opacity="0.5"/><stop offset="1" stop-color="#c8ccd4" stop-opacity="0"/></radialGradient><linearGradient id="cwl27" x1="0" y1="1" x2="1" y2="0"><stop offset="0" stop-color="#d4d8e2"/><stop offset="0.5" stop-color="#e2e4ec"/><stop offset="1" stop-color="#d6dae4"/></linearGradient></defs><g transform="translate(0,0)"><rect x="-0.4" y="0.3" width="69.2" height="54.0" fill="#000" fill-opacity="0.25"/><rect x="0" y="0" width="68.4" height="52.8" fill="#000"/><g clip-path="url(#cp27)"><g filter="url(#bl27)" transform="translate(-0.35,0.555) scale(1.019,1.0135)"><rect x="0" y="7" width="68" height="38" fill="url(#cwl27)"/><path fill="#c0c3cc" fill-opacity="0.45" d="M20 26a14 14 0 1 0 28 0a14 14 0 1 0 -28 0z"/><circle cx="34" cy="25.5" r="10" fill="url(#cw27)"/><rect x="30" y="21.5" width="8" height="8" fill="none" stroke="#8a8e96" stroke-width="0.8"/><path fill="#c8ccd4" d="M31.7 25.5a2.3 2.3 0 1 0 4.6 0a2.3 2.3 0 1 0 -4.6 0z"/><path fill="#e0e3ea" fill-opacity="0.7" d="M26.1 21.8h1.5v1h-1.5zM39.9 20h1v1h-1zM29.6 34.9h1v0.6h-1zM35.4 28.9h1v1h-1zM31.3 20.8h1.5v1h-1.5zM40.9 17.6h1.5v0.6h-1.5zM27.1 29.2h1.5v1h-1.5zM36.1 19.6h1v0.6h-1zM24.9 29.5h1.5v0.6h-1.5zM37.2 21.8h1v0.6h-1zM35.6 17.2h1v0.6h-1zM39.6 18.9h1.5v0.6h-1.5zM38.2 26.1h1v1h-1zM34.8 23.4h1v0.6h-1zM32.7 15.1h1.5v0.6h-1.5zM28.7 16.2h1.5v1h-1.5z"/><path fill="#a0a4ac" fill-opacity="0.7" d="M26.8 24.2h1v1h-1zM31.2 32.7h1v1h-1zM28.1 32.1h1v1h-1zM42 25.8h1.5v1h-1.5zM42.2 31h1v0.6h-1zM33.2 30.4h1v1h-1zM26 19.9h1.5v1h-1.5zM41.3 30h1.5v1h-1.5zM41.4 23.7h1v1h-1zM29.4 35.2h1v1h-1zM34.3 15.4h1v0.6h-1zM30.8 31.1h1.5v1h-1.5zM34.9 28.5h1v0.6h-1zM39.7 29.7h1v0.6h-1zM33.9 31.6h1v1h-1zM35.9 15.4h1.5v1h-1.5z"/><path fill="#80848c" fill-opacity="0.7" d="M41.4 21.9h1v0.6h-1zM33.9 17.3h1v0.6h-1zM40.9 28.8h1.5v1h-1.5zM27.4 18.9h1v1h-1zM36.9 15.8h1v0.6h-1zM35.1 17.2h1.5v0.6h-1.5zM25 31h1v1h-1zM39.1 29.8h1.5v1h-1.5zM26.8 23.4h1v0.6h-1zM27.2 20.6h1.5v0.6h-1.5zM32.5 32.2h1v1h-1zM42 32.8h1.5v1h-1.5zM39.6 34.4h1v1h-1z"/><path fill="none" stroke="#22252c" stroke-width="0.9" d="M34.2 12L34.2 19M34.2 33L34.2 40M20 25.8L27 25.8M41 25.8L48 25.8"/><path fill="none" stroke="#5a5e68" stroke-width="0.7" stroke-opacity="0.7" d="M28 21L28 30"/><path fill="none" stroke="#4a4e58" stroke-width="0.8" stroke-opacity="0.8" d="M41 22L41 29"/><path fill="none" stroke="#7a7e88" stroke-width="0.6" stroke-opacity="0.7" d="M29 18.5L39 18.5M29 33L39 33"/></g></g><clipPath id="cq27"><rect x="0" y="0" width="68.4" height="7.65"/></clipPath><polygon points="0.8,0.95 67.9,0.95 0.8,38.8" fill="url(#gl27)" clip-path="url(#cq27)"/><polygon points="0.8,0.95 67.9,0.95 0.8,38.8" fill="url(#gl27)" clip-path="url(#cp27)" opacity="0.4"/><rect x="0.8" y="0.95" width="67.1" height="0.8" fill="#fff" fill-opacity="0.07"/><rect x="0.8" y="0.95" width="0.7" height="36.8" fill="#fff" fill-opacity="0.05"/></g></g></svg></div><div class="lb" style="left:378.5px"><span style="top:513.1px;letter-spacing:-0.24px">Cube Wave 3 Clip</span><span style="top:531.1px;letter-spacing:-0.07px">1.mov</span></div>
<div class="ic" style="left:540px;top:441px"><svg width="68.4" height="53" viewBox="0 0 68.4 53" ><g transform="translate(0.61,0.1)"><defs><linearGradient id="gl28" gradientUnits="userSpaceOnUse" x1="0" y1="0" x2="68" y2="14"><stop offset="0" stop-color="#fff" stop-opacity="0.26"/><stop offset="0.5" stop-color="#fff" stop-opacity="0.17"/><stop offset="1" stop-color="#fff" stop-opacity="0.07"/></linearGradient><clipPath id="cp28"><rect x="-0.35" y="7.65" width="69.3" height="38.51"/></clipPath><filter id="bl28" x="-5%" y="-5%" width="110%" height="110%"><feGaussianBlur stdDeviation="0.4"/></filter></defs><g transform="translate(0,0)"><rect x="-0.4" y="0.3" width="69.2" height="54.0" fill="#000" fill-opacity="0.25"/><rect x="0" y="0" width="68.4" height="52.8" fill="#000"/><g clip-path="url(#cp28)"><g filter="url(#bl28)" transform="translate(-0.35,0.555) scale(1.019,1.0135)"><rect x="0" y="7" width="68" height="38" fill="#d6d9e3"/><ellipse cx="34" cy="26" rx="23.5" ry="20.5" fill="none" stroke="#9296a4" stroke-width="9" stroke-opacity="0.2"/><path d="M45.8 7.8A23.5 21 0 0 1 45.8 44.2" fill="none" stroke="#8e92a0" stroke-width="9" stroke-opacity="0.3"/><path d="M22.2 7.8A23.5 21 0 0 0 22.2 44.2" fill="none" stroke="#8e92a0" stroke-width="9" stroke-opacity="0.3"/><path d="M46.6 11.8A20.5 18.04 0 0 1 46.6 40.2" fill="none" stroke="#70748a" stroke-width="0.9" stroke-opacity="0.45"/><path d="M21.4 11.8A20.5 18.04 0 0 0 21.4 40.2" fill="none" stroke="#70748a" stroke-width="0.9" stroke-opacity="0.45"/><path d="M48.5 9.7A23.5 20.68 0 0 1 48.5 42.3" fill="none" stroke="#70748a" stroke-width="0.9" stroke-opacity="0.45"/><path d="M19.5 9.7A23.5 20.68 0 0 0 19.5 42.3" fill="none" stroke="#70748a" stroke-width="0.9" stroke-opacity="0.45"/><path d="M50.3 7.6A26.5 23.32 0 0 1 50.3 44.4" fill="none" stroke="#70748a" stroke-width="0.9" stroke-opacity="0.45"/><path d="M17.7 7.6A26.5 23.32 0 0 0 17.7 44.4" fill="none" stroke="#70748a" stroke-width="0.9" stroke-opacity="0.45"/><path fill="#80848f" fill-opacity="0.5" d="M7.2 21.7h0.8v1.2h-0.8zM60.8 21h1.6v1.2h-1.6zM48.5 16.6h1.2v1.2h-1.2zM7.5 18.6h1.6v1.2h-1.6zM33.7 2.3h1.2v1.2h-1.2zM6.1 20.2h0.8v2h-0.8zM8 36.7h1.6v2h-1.6zM57.7 37.6h1.2v0.8h-1.2zM54.7 21.9h0.8v2h-0.8zM29.5 3.2h0.8v2h-0.8zM56.6 23.4h1.6v1.2h-1.6zM11.7 38.7h1.6v1.2h-1.6zM53.4 33.6h1.6v1.2h-1.6zM16.2 44.4h1.6v0.8h-1.6zM13 13.6h0.8v1.2h-0.8zM13.8 18.9h0.8v2h-0.8zM10 27h1.2v2h-1.2zM54.5 11.5h0.8v2h-0.8zM58.1 28.5h1.2v1.2h-1.2zM57.8 19h0.8v0.8h-0.8zM54.1 29.4h1.6v0.8h-1.6zM15.9 12.6h1.2v0.8h-1.2z"/><path fill="#a4a8b4" fill-opacity="0.9" d="M16 16.5h1.6v0.8h-1.6zM11.5 18.4h0.8v1.2h-0.8zM33.7 51.3h0.8v1.2h-0.8zM52.6 25.3h1.2v0.8h-1.2zM50.3 38.1h1.6v1.2h-1.6zM24.5 44.6h1.6v2h-1.6zM42.3 48.2h1.2v2h-1.2zM19.1 14.8h1.2v2h-1.2zM54.2 43.3h0.8v1.2h-0.8zM15 28.5h0.8v2h-0.8zM61.6 22.2h0.8v1.2h-0.8zM48.3 35.5h1.2v1.2h-1.2zM20.4 4h0.8v2h-0.8zM10.3 28h1.6v0.8h-1.6zM18.8 16h0.8v0.8h-0.8zM54.7 43.4h0.8v2h-0.8zM48.4 16.3h1.6v1.2h-1.6z"/><path fill="#70747f" fill-opacity="0.7" d="M14.8 30.8h0.8v2h-0.8zM53.1 9.9h0.8v1.2h-0.8zM18.7 16.9h1.6v1.2h-1.6zM14.9 16.1h1.2v2h-1.2zM53.1 34.6h1.6v2h-1.6zM9.4 17.1h0.8v0.8h-0.8zM48 15.3h0.8v0.8h-0.8zM56.3 25.9h1.2v2h-1.2zM60.4 21.4h1.6v2h-1.6zM13.8 26.6h1.2v2h-1.2zM35.3 4.3h1.6v0.8h-1.6zM7.8 23.9h0.8v2h-0.8zM23.4 9h1.6v0.8h-1.6zM15.9 30.7h1.6v1.2h-1.6zM14.5 34.2h0.8v2h-0.8zM59.8 15.7h1.6v2h-1.6zM12.8 17.4h1.6v2h-1.6zM55.2 19.7h1.6v0.8h-1.6zM58.1 34.1h0.8v1.2h-0.8zM16.3 30.6h0.8v2h-0.8zM57.2 28.7h1.2v1.2h-1.2zM25 6.1h1.6v2h-1.6zM8.6 14.1h1.6v2h-1.6zM38.2 2.9h1.6v2h-1.6zM45.2 12.9h0.8v2h-0.8zM52.7 28.6h1.6v0.8h-1.6z"/><path fill="#8e929e" fill-opacity="0.7" d="M52.6 30.3h1.6v2h-1.6zM12.3 12.1h1.6v0.8h-1.6zM58.4 19.3h1.6v0.8h-1.6zM53.8 25.5h1.6v2h-1.6zM16 15.2h0.8v1.2h-0.8zM53.5 25.2h1.2v2h-1.2zM50.3 37.7h1.2v1.2h-1.2zM51.7 22.8h1.2v2h-1.2zM11.7 33.8h1.6v0.8h-1.6zM13.3 21.3h1.2v0.8h-1.2zM43.4 3.5h1.2v1.2h-1.2zM7.3 32.2h0.8v1.2h-0.8zM52 37.1h1.2v2h-1.2zM30.5 45.1h0.8v2h-0.8zM52.1 21.8h1.2v2h-1.2zM55.7 27.3h1.2v2h-1.2zM43.2 9h1.6v1.2h-1.6zM47.8 37.7h1.2v1.2h-1.2zM9.6 21.9h1.6v0.8h-1.6zM12.6 36h1.2v0.8h-1.2zM60.7 31.3h1.6v1.2h-1.6zM12.2 23.7h1.6v0.8h-1.6zM61.5 27.1h0.8v0.8h-0.8z"/><path fill="#8e929e" fill-opacity="0.9" d="M55.8 21.2h1.2v1.2h-1.2zM26.7 10.9h1.2v2h-1.2zM55.2 21.3h1.2v0.8h-1.2zM7.7 22.9h0.8v2h-0.8zM33.4 48.7h0.8v0.8h-0.8zM59.7 25.8h1.2v1.2h-1.2zM8.4 18.8h0.8v2h-0.8zM10.6 40h1.2v2h-1.2zM13.7 20.1h1.6v0.8h-1.6zM17.1 41.7h0.8v2h-0.8zM53.7 25.1h1.2v1.2h-1.2zM32.5 42.6h0.8v1.2h-0.8zM51.7 29.7h1.6v2h-1.6zM7.5 24.9h1.2v1.2h-1.2zM6.4 23.6h1.6v0.8h-1.6zM20.4 11.7h0.8v0.8h-0.8zM24.2 10.6h1.6v2h-1.6zM10.2 14h0.8v2h-0.8zM5.8 20.1h1.2v1.2h-1.2zM15.5 8.2h0.8v2h-0.8z"/><path fill="#a4a8b4" fill-opacity="0.7" d="M32.7 6.3h1.2v1.2h-1.2zM24.6 48.2h1.2v1.2h-1.2zM47.2 43.9h1.6v2h-1.6zM13.3 15.1h1.6v1.2h-1.6zM14 7.7h1.2v0.8h-1.2zM52.7 13h1.6v1.2h-1.6zM62.8 27.3h1.6v2h-1.6zM61.6 22.6h1.6v0.8h-1.6zM18.8 34.7h1.2v0.8h-1.2zM54.3 34.7h1.6v1.2h-1.6zM17.6 37.6h1.6v0.8h-1.6zM18.2 35.8h1.6v0.8h-1.6zM40.8 8.9h1.6v1.2h-1.6zM52.6 23.9h1.2v1.2h-1.2zM52.6 34.4h1.6v2h-1.6zM8.9 29.1h0.8v2h-0.8zM56.3 31.3h1.2v0.8h-1.2zM42.4 46.2h1.6v2h-1.6zM49.7 41.4h1.2v1.2h-1.2zM56.2 23.1h0.8v0.8h-0.8zM11.5 38.9h1.6v1.2h-1.6z"/><path fill="#70747f" fill-opacity="0.9" d="M10.6 22.2h1.6v1.2h-1.6zM34.9 2.6h0.8v0.8h-0.8zM21.7 4.3h1.6v2h-1.6zM34.7 49h1.6v0.8h-1.6zM49.7 18h1.2v1.2h-1.2zM59.4 24.6h1.6v2h-1.6zM54.7 17.4h1.2v1.2h-1.2zM52.2 45h0.8v0.8h-0.8zM13.2 26.2h1.2v2h-1.2zM61.4 25.1h1.2v1.2h-1.2zM22.3 41.1h1.2v0.8h-1.2zM45.8 39.4h0.8v2h-0.8zM8.9 31.4h1.2v0.8h-1.2zM56.6 31.4h0.8v0.8h-0.8zM30.9 6.4h1.2v0.8h-1.2zM55.4 25.5h0.8v1.2h-0.8zM53.7 32.5h1.2v0.8h-1.2zM16 23.9h1.2v0.8h-1.2zM29.9 7.4h1.6v1.2h-1.6zM37 41.8h1.6v2h-1.6zM13.9 19.3h1.2v2h-1.2z"/><path fill="#a4a8b4" fill-opacity="0.5" d="M29.1 10.4h1.2v1.2h-1.2zM8.2 36.3h1.6v0.8h-1.6zM11.1 16.3h1.6v1.2h-1.6zM8.8 38.3h0.8v2h-0.8zM42 43.9h1.6v2h-1.6zM59 30.4h1.6v1.2h-1.6zM53.1 32.8h0.8v0.8h-0.8zM32.5 43.7h1.6v0.8h-1.6zM58.8 37.1h1.2v2h-1.2zM51.9 32.1h1.2v0.8h-1.2zM49.9 12.8h1.6v1.2h-1.6zM9.4 25.1h1.6v2h-1.6zM53.5 39.9h0.8v2h-0.8zM14.1 37.5h0.8v2h-0.8zM15 40.4h1.6v1.2h-1.6zM54.9 39.3h1.2v2h-1.2zM14.8 34.9h1.2v0.8h-1.2zM60.8 32.9h1.6v0.8h-1.6zM21.1 41.6h1.2v2h-1.2zM60.5 29.3h1.2v2h-1.2zM38.3 41.4h0.8v2h-0.8zM60.2 34.8h1.2v2h-1.2zM54.6 14.5h1.2v0.8h-1.2zM6.2 32.1h1.2v1.2h-1.2zM44.8 10.3h1.6v0.8h-1.6z"/><path fill="#9a9eaa" fill-opacity="0.5" d="M57.7 19.8h1.2v2h-1.2zM11 22.6h1.2v0.8h-1.2zM27.4 10.5h1.2v1.2h-1.2zM56.9 32.3h0.8v1.2h-0.8zM52 33.1h0.8v1.2h-0.8zM57 29.9h1.2v2h-1.2zM50.9 32.7h1.2v1.2h-1.2zM53.1 26.9h1.6v2h-1.6zM55.7 22.7h1.2v2h-1.2zM48.9 14.4h1.6v0.8h-1.6zM22.2 40.4h0.8v1.2h-0.8zM7.9 23.7h1.2v2h-1.2zM57.1 22.5h0.8v0.8h-0.8zM35.5 4.8h1.6v0.8h-1.6zM60.3 34.4h1.2v1.2h-1.2zM12.3 11.2h1.6v2h-1.6zM13.8 28.2h1.2v1.2h-1.2zM42.1 2.4h1.2v0.8h-1.2zM51.9 38.9h1.6v2h-1.6zM58.1 26.1h1.6v1.2h-1.6zM46.6 42.9h0.8v1.2h-0.8zM16.7 32h1.2v2h-1.2z"/><path fill="#b8bcc8" fill-opacity="0.5" d="M16.1 20.5h1.6v2h-1.6zM45.2 8.6h0.8v2h-0.8zM38.9 41.4h0.8v2h-0.8zM27.1 9.1h1.6v0.8h-1.6zM46.8 38.6h1.6v1.2h-1.6zM39.4 42.7h1.6v1.2h-1.6zM54.6 13.3h0.8v1.2h-0.8zM45.1 39.5h1.6v0.8h-1.6zM57 39.1h1.2v1.2h-1.2zM54.3 12.4h0.8v1.2h-0.8zM54.5 30.9h0.8v1.2h-0.8zM52.1 35.6h1.2v2h-1.2zM10.4 17.4h0.8v0.8h-0.8zM7.9 22.9h1.2v0.8h-1.2zM10 18.7h1.2v1.2h-1.2zM15.2 7.7h0.8v2h-0.8zM12.6 28.6h1.6v1.2h-1.6zM57.8 18.7h1.6v1.2h-1.6zM53.3 19.3h1.6v0.8h-1.6zM51.9 31.4h1.6v1.2h-1.6z"/><path fill="#b8bcc8" fill-opacity="0.7" d="M14.5 44.6h0.8v0.8h-0.8zM45.5 7.4h1.2v0.8h-1.2zM19.3 42.4h1.2v0.8h-1.2zM48.8 15h1.2v0.8h-1.2zM34.9 49h1.6v2h-1.6zM21.7 43.4h1.6v2h-1.6zM16.4 41.7h1.2v0.8h-1.2zM42.7 45.2h1.2v0.8h-1.2zM58.6 25.6h1.2v0.8h-1.2zM20.2 38.8h0.8v0.8h-0.8zM17.8 10.4h1.6v1.2h-1.6zM9.4 31.2h1.6v1.2h-1.6zM20.8 47.7h1.2v1.2h-1.2zM20.9 9.9h0.8v0.8h-0.8zM11.7 24.4h1.2v1.2h-1.2zM19 8h1.6v2h-1.6z"/><path fill="#9a9eaa" fill-opacity="0.9" d="M16.6 15.9h1.2v2h-1.2zM49.5 13.1h1.6v1.2h-1.6zM38.6 41.9h1.2v1.2h-1.2zM56.2 36.8h1.2v2h-1.2zM14.5 27h0.8v0.8h-0.8zM54.4 21.1h1.2v2h-1.2zM53.8 9.5h1.2v0.8h-1.2zM52.4 20.7h1.6v2h-1.6zM43.7 40.4h0.8v0.8h-0.8zM18.6 34.9h1.2v1.2h-1.2zM10.7 26.3h0.8v1.2h-0.8zM11.3 19.4h0.8v0.8h-0.8zM10.6 14.6h0.8v2h-0.8zM52.9 33.2h1.2v2h-1.2zM51.1 35.9h1.2v1.2h-1.2zM23.5 45.2h1.6v2h-1.6zM52.2 21.4h1.6v1.2h-1.6zM53.9 30.2h1.2v2h-1.2zM53.4 21.8h1.2v0.8h-1.2zM7.3 32h1.2v0.8h-1.2zM11.6 23.8h1.2v2h-1.2zM46.1 6.7h1.6v0.8h-1.6zM54.6 22.3h1.6v2h-1.6zM49.1 38.7h1.6v2h-1.6zM61.7 21.9h1.2v2h-1.2zM24.8 49.3h1.2v1.2h-1.2zM21.5 13.8h0.8v1.2h-0.8zM53.8 40.3h0.8v1.2h-0.8zM59.4 34.9h0.8v2h-0.8zM42 42.5h1.6v2h-1.6zM18.4 14.7h0.8v0.8h-0.8zM13 35.7h0.8v1.2h-0.8zM49.7 8.4h1.6v1.2h-1.6z"/><path fill="#b8bcc8" fill-opacity="0.9" d="M19.8 13.9h0.8v1.2h-0.8zM7.1 27.3h0.8v1.2h-0.8zM13.8 10h0.8v0.8h-0.8zM48.6 8.2h0.8v1.2h-0.8zM60.3 25.1h0.8v1.2h-0.8zM32.2 43.6h1.2v2h-1.2zM55.1 33.3h0.8v2h-0.8zM11 21.9h1.2v1.2h-1.2zM51.5 41.9h1.6v2h-1.6zM15.3 34.6h1.2v2h-1.2zM10.6 40.9h1.6v2h-1.6zM59.4 20.4h0.8v1.2h-0.8zM57.7 26.9h1.2v1.2h-1.2zM19.7 47.6h0.8v1.2h-0.8zM46.9 5h1.2v2h-1.2zM9.2 28.6h1.6v1.2h-1.6zM39.3 43.8h1.6v1.2h-1.6zM50.7 43.7h1.6v0.8h-1.6zM55.9 17.8h1.6v0.8h-1.6zM50.3 12h1.2v1.2h-1.2z"/><path fill="#80848f" fill-opacity="0.9" d="M34.2 8.9h1.6v2h-1.6zM55.3 22.2h1.6v1.2h-1.6zM15.6 30.2h1.2v2h-1.2zM53.8 31.9h1.2v0.8h-1.2zM24.5 48.5h0.8v2h-0.8zM19.9 15.4h1.2v2h-1.2zM53.9 27.5h1.6v2h-1.6zM56.5 24.9h1.6v0.8h-1.6zM52.9 15.7h0.8v1.2h-0.8zM23.8 39.8h1.6v2h-1.6zM23.8 41.1h1.6v2h-1.6zM50.8 20.2h1.2v0.8h-1.2zM15.2 16.6h1.2v2h-1.2zM33.6 7.8h1.2v2h-1.2zM55 39.7h1.2v2h-1.2zM58.1 21.9h1.2v0.8h-1.2zM8.9 31h0.8v1.2h-0.8zM52.4 20.6h1.2v1.2h-1.2zM55.7 12.6h1.2v0.8h-1.2zM52.2 10h0.8v1.2h-0.8zM12.5 19.7h1.6v1.2h-1.6zM50.7 35h1.6v1.2h-1.6zM39.1 5.5h1.6v1.2h-1.6zM23.7 49.6h1.2v0.8h-1.2zM42.5 42.8h0.8v1.2h-0.8zM11.4 32.1h0.8v1.2h-0.8zM15.5 17.4h1.6v0.8h-1.6z"/><path fill="#9a9eaa" fill-opacity="0.7" d="M12.3 17.1h0.8v2h-0.8zM31.7 4.6h1.2v0.8h-1.2zM7.4 32.7h1.6v2h-1.6zM42.5 42.2h1.6v1.2h-1.6zM10.5 20.1h1.2v1.2h-1.2zM54.5 27.8h1.6v2h-1.6zM55.5 9.3h1.2v2h-1.2zM9.9 21.1h0.8v2h-0.8zM54.9 42.5h1.2v0.8h-1.2zM12.7 23.4h1.6v0.8h-1.6zM50.6 17.5h1.2v1.2h-1.2zM13.7 29.7h1.6v0.8h-1.6zM58.6 13.5h1.6v2h-1.6zM17.8 8.6h0.8v2h-0.8zM43.3 3.9h1.2v2h-1.2zM14.1 15.3h0.8v2h-0.8z"/><path fill="#8e929e" fill-opacity="0.5" d="M54.4 33.7h1.2v0.8h-1.2zM58.6 28.8h1.2v2h-1.2zM14.9 35.8h1.6v0.8h-1.6zM57.5 21h0.8v0.8h-0.8zM53.9 34.9h0.8v0.8h-0.8zM53.8 17.8h0.8v1.2h-0.8zM52.3 40.3h1.6v2h-1.6zM42.5 43.6h1.6v1.2h-1.6zM15.4 15.8h1.2v2h-1.2zM12.1 23.6h0.8v1.2h-0.8zM55.9 36.9h1.2v0.8h-1.2zM52.3 19.8h0.8v2h-0.8zM10.6 28h1.2v0.8h-1.2zM9.7 23.5h0.8v0.8h-0.8zM34.6 48.4h1.6v2h-1.6zM48.3 15.9h1.2v0.8h-1.2zM58.6 22.6h1.6v1.2h-1.6zM52.1 21.9h1.2v1.2h-1.2zM8.8 22.5h0.8v2h-0.8zM19.6 10.9h1.6v0.8h-1.6zM24.9 11.4h0.8v1.2h-0.8zM57.8 31.3h1.6v1.2h-1.6zM51.6 9.7h1.2v0.8h-1.2zM38.2 45h1.2v0.8h-1.2zM29.2 46h1.2v0.8h-1.2zM60.8 19.5h1.2v1.2h-1.2zM26.5 7.2h0.8v0.8h-0.8zM47.1 10.9h1.6v1.2h-1.6z"/><path fill="#70747f" fill-opacity="0.5" d="M15 31.9h1.6v2h-1.6zM33.7 1.8h0.8v0.8h-0.8zM57.5 23.7h1.2v2h-1.2zM51.6 14.8h1.6v0.8h-1.6zM17.3 14.5h1.6v1.2h-1.6zM9.2 35.8h1.2v0.8h-1.2zM16.1 36.8h0.8v0.8h-0.8zM23.6 6.5h1.6v2h-1.6zM53.2 29.1h0.8v1.2h-0.8zM58.8 21.3h0.8v0.8h-0.8zM16 26.6h0.8v2h-0.8zM26.3 47h1.6v1.2h-1.6zM61 24.5h1.6v0.8h-1.6zM7.3 22.1h1.6v2h-1.6zM52.4 13.7h1.2v2h-1.2zM18.7 14.7h1.6v1.2h-1.6zM56.4 16.9h0.8v2h-0.8zM34 8.5h1.6v0.8h-1.6zM16.8 34.6h0.8v1.2h-0.8z"/><path fill="#80848f" fill-opacity="0.7" d="M6.3 23.8h0.8v1.2h-0.8zM51.7 18.7h1.6v1.2h-1.6zM57.4 37h0.8v1.2h-0.8zM14.1 30.2h1.6v1.2h-1.6zM22.7 38.8h1.6v1.2h-1.6zM40.5 3.7h1.6v1.2h-1.6zM19 36.5h0.8v2h-0.8zM58.4 33h1.2v1.2h-1.2zM22.1 5.7h0.8v1.2h-0.8zM6.5 22.9h0.8v2h-0.8zM55.8 33.5h1.6v1.2h-1.6zM51.9 44h1.2v2h-1.2zM29.3 45.4h1.2v0.8h-1.2zM53.8 16.3h1.6v1.2h-1.6zM21.8 5.2h0.8v0.8h-0.8zM57.4 35.7h1.2v2h-1.2zM14.7 18h1.2v1.2h-1.2zM51.7 30.6h0.8v1.2h-0.8zM13 28.8h1.6v2h-1.6zM15.9 30.3h1.6v2h-1.6zM7.1 28.2h1.6v0.8h-1.6zM28.1 41.8h1.6v1.2h-1.6zM53.7 31.4h1.2v0.8h-1.2zM58 38.4h1.6v2h-1.6z"/><ellipse cx="34" cy="26" rx="15.5" ry="13.5" fill="#d9dce6" fill-opacity="0.7"/><path fill="#a0a4b0" fill-opacity="0.6" d="M45.3 17.6h1v0.6h-1zM27.7 33.5h2v0.6h-2zM48.3 12.8h1v0.6h-1zM32.9 21.4h3v0.6h-3zM30.1 25.3h2v0.6h-2zM30.4 24.9h2v0.6h-2zM23.4 38.8h3v0.6h-3zM18.5 21.2h3v0.6h-3zM23.7 41.5h1v0.6h-1zM46.9 34.6h1v0.6h-1zM38.9 38.4h1v0.6h-1zM25.2 22.9h1v0.6h-1zM46.4 20h3v0.6h-3zM21.6 12.5h3v0.6h-3zM43.9 33.1h2v0.6h-2zM19.1 41.9h3v0.6h-3zM27.6 24.7h2v0.6h-2zM38.4 15.5h3v0.6h-3zM40.9 17.3h3v0.6h-3zM25.9 28.3h3v0.6h-3zM38.2 28.8h3v0.6h-3zM44.4 28.1h1v0.6h-1zM43 16.8h3v0.6h-3zM36.6 33.4h2v0.6h-2zM22.3 37.7h2v0.6h-2zM27.6 33h1v0.6h-1zM26.4 31.6h3v0.6h-3zM30.4 21.7h3v0.6h-3zM47.7 17.5h1v0.6h-1zM33.5 13.2h2v0.6h-2zM20.2 32.9h1v0.6h-1zM20 13.1h2v0.6h-2zM21.1 29.5h1v0.6h-1zM28.1 42h3v0.6h-3zM48.5 40.3h3v0.6h-3zM37.2 36.2h3v0.6h-3zM24.1 16.9h3v0.6h-3zM49.5 22h3v0.6h-3zM33.8 25.2h1v0.6h-1zM36.8 19.3h2v0.6h-2z"/><path fill="none" stroke="#8a8e9a" stroke-width="0.7" stroke-opacity="0.7" d="M24 16.5L43 16.5"/><path fill="none" stroke="#8a8e9a" stroke-width="0.9" stroke-opacity="0.7" d="M30 34.5L39 34.5"/><path fill="none" stroke="#3a3e48" stroke-width="0.9" stroke-opacity="0.9" d="M5 25.8L10 25.8"/><path fill="none" stroke="#5a5e68" stroke-width="0.8" stroke-opacity="0.8" d="M58 25.8L63 25.8"/></g></g><clipPath id="cq28"><rect x="0" y="0" width="68.4" height="7.65"/></clipPath><polygon points="0.8,0.95 67.9,0.95 0.8,38.8" fill="url(#gl28)" clip-path="url(#cq28)"/><polygon points="0.8,0.95 67.9,0.95 0.8,38.8" fill="url(#gl28)" clip-path="url(#cp28)" opacity="0.4"/><rect x="0.8" y="0.95" width="67.1" height="0.8" fill="#fff" fill-opacity="0.07"/><rect x="0.8" y="0.95" width="0.7" height="36.8" fill="#fff" fill-opacity="0.05"/></g></g></svg></div><div class="lb" style="left:504.8px"><span style="top:513.1px;letter-spacing:-0.14px">Cube Wave 3 Clip</span><span style="top:531.1px;letter-spacing:0.18px">2.mov</span></div>
<div class="ic" style="left:666px;top:441px"><svg width="68.4" height="53" viewBox="0 0 68.4 53" ><g transform="translate(0.9,0.1)"><defs><linearGradient id="gl29" gradientUnits="userSpaceOnUse" x1="0" y1="0" x2="68" y2="14"><stop offset="0" stop-color="#fff" stop-opacity="0.26"/><stop offset="0.5" stop-color="#fff" stop-opacity="0.17"/><stop offset="1" stop-color="#fff" stop-opacity="0.07"/></linearGradient><clipPath id="cp29"><rect x="-0.35" y="7.65" width="69.3" height="38.51"/></clipPath><filter id="bl29" x="-5%" y="-5%" width="110%" height="110%"><feGaussianBlur stdDeviation="0.45"/></filter></defs><g transform="translate(0,0)"><rect x="-0.4" y="0.3" width="69.2" height="54.0" fill="#000" fill-opacity="0.25"/><rect x="0" y="0" width="68.4" height="52.8" fill="#000"/><g clip-path="url(#cp29)"><g filter="url(#bl29)" transform="translate(-0.35,0.555) scale(1.019,1.0135)"><rect x="0" y="7" width="68" height="38" fill="#f1f1f1"/><path fill="#c8c8c8" d="M3 7h2.1v2.6h-2.1zM25.5 7h1.6v2.6h-1.6zM33.5 7h1.6v2.6h-1.6zM8 11.5h1.6v3.1h-1.6zM24.5 11.5h2.6v3.1h-2.6zM29 14.5h1.1v3.1h-1.1zM34.5 17.5h3.1v3.1h-3.1zM60.5 17.5h3.1v3.1h-3.1zM63.5 17.5h2.1v3.1h-2.1zM7 20.5h2.6v2.6h-2.6zM11 20.5h1.6v2.6h-1.6zM25 23h2.6v2.6h-2.6zM6 25.5h2.6v2.1h-2.6zM46 25.5h1.6v2.1h-1.6zM38.5 27.5h2.6v1.6h-2.6zM64.5 27.5h3.1v1.6h-3.1zM2.5 31.5h1.1v2.1h-1.1zM46.5 38h3.1v2.6h-3.1zM38.5 40.5h1.6v1.6h-1.6zM40 40.5h1.6v1.6h-1.6zM62 40.5h2.1v1.6h-2.1zM42.5 42h2.6v2.1h-2.6zM41 44h2.6v3.1h-2.6z"/><path fill="#e6e6e6" d="M10 7h3.1v2.6h-3.1zM23 7h1.6v2.6h-1.6zM27 7h2.6v2.6h-2.6zM35 7h2.6v2.6h-2.6zM47.5 7h1.1v2.6h-1.1zM22.5 9.5h2.6v2.1h-2.6zM57.5 9.5h3.1v2.1h-3.1zM60.5 9.5h1.6v2.1h-1.6zM2.5 11.5h1.6v3.1h-1.6zM9.5 11.5h1.1v3.1h-1.1zM20.5 11.5h2.1v3.1h-2.1zM27 11.5h2.6v3.1h-2.6zM29.5 11.5h1.1v3.1h-1.1zM54.5 11.5h2.1v3.1h-2.1zM16 14.5h2.6v3.1h-2.6zM18.5 14.5h2.1v3.1h-2.1zM30 14.5h1.1v3.1h-1.1zM44 14.5h2.6v3.1h-2.6zM48.5 14.5h3.1v3.1h-3.1zM51.5 14.5h1.6v3.1h-1.6zM53 14.5h1.6v3.1h-1.6zM56 14.5h3.1v3.1h-3.1zM65 14.5h3.1v3.1h-3.1zM19.5 17.5h3.1v3.1h-3.1zM1.5 20.5h1.6v2.6h-1.6zM16.5 20.5h2.1v2.6h-2.1zM24 20.5h3.1v2.6h-3.1zM30 20.5h2.6v2.6h-2.6zM52 20.5h1.6v2.6h-1.6zM53.5 20.5h2.1v2.6h-2.1zM67 20.5h2.1v2.6h-2.1zM7 23h3.1v2.6h-3.1zM22 23h3.1v2.6h-3.1zM33 23h1.1v2.6h-1.1zM52 23h3.1v2.6h-3.1zM58 23h2.6v2.6h-2.6zM67.5 23h3.1v2.6h-3.1zM26.5 25.5h1.1v2.1h-1.1zM30.5 25.5h2.1v2.1h-2.1zM63.5 25.5h1.6v2.1h-1.6zM4 27.5h2.1v1.6h-2.1zM23 27.5h1.1v1.6h-1.1zM24 27.5h1.6v1.6h-1.6zM43.5 27.5h1.6v1.6h-1.6zM45 27.5h1.1v1.6h-1.1zM46 27.5h2.1v1.6h-2.1zM48 27.5h2.1v1.6h-2.1zM0 29h1.1v2.6h-1.1zM2 29h2.6v2.6h-2.6zM33 29h2.6v2.6h-2.6zM47 29h2.1v2.6h-2.1zM63.5 29h1.1v2.6h-1.1zM3.5 31.5h2.6v2.1h-2.6zM8.5 31.5h3.1v2.1h-3.1zM29 31.5h3.1v2.1h-3.1zM41.5 31.5h1.6v2.1h-1.6zM45.5 31.5h1.6v2.1h-1.6zM49.5 31.5h3.1v2.1h-3.1zM63.5 31.5h2.6v2.1h-2.6zM8 33.5h3.1v2.1h-3.1zM34 33.5h2.6v2.1h-2.6zM36.5 33.5h2.6v2.1h-2.6zM42.5 33.5h2.6v2.1h-2.6zM61 33.5h1.6v2.1h-1.6zM11 35.5h1.1v2.6h-1.1zM14 35.5h2.1v2.6h-2.1zM31.5 35.5h2.1v2.6h-2.1zM4 38h2.6v2.6h-2.6zM39 38h1.1v2.6h-1.1zM51 38h3.1v2.6h-3.1zM58 38h2.6v2.6h-2.6zM33 40.5h2.1v1.6h-2.1zM41.5 40.5h1.6v1.6h-1.6zM43 40.5h2.6v1.6h-2.6zM57.5 40.5h1.1v1.6h-1.1zM67.5 40.5h1.1v1.6h-1.1zM3 42h2.1v2.1h-2.1zM5 42h1.6v2.1h-1.6zM45 42h3.1v2.1h-3.1zM49 42h1.6v2.1h-1.6zM8.5 44h1.6v3.1h-1.6zM17 44h2.1v3.1h-2.1zM19 44h2.6v3.1h-2.6zM46 44h1.6v3.1h-1.6zM58.5 44h1.6v3.1h-1.6zM65 44h1.6v3.1h-1.6z"/><path fill="#ffffff" d="M14 7h3.1v2.6h-3.1zM20.5 7h2.6v2.6h-2.6zM24.5 7h1.1v2.6h-1.1zM30.5 7h3.1v2.6h-3.1zM60.5 7h1.6v2.6h-1.6zM62 7h1.1v2.6h-1.1zM63 7h1.6v2.6h-1.6zM16.5 9.5h3.1v2.1h-3.1zM25 9.5h2.6v2.1h-2.6zM33.5 9.5h3.1v2.1h-3.1zM36.5 9.5h2.6v2.1h-2.6zM39 9.5h2.1v2.1h-2.1zM51.5 9.5h3.1v2.1h-3.1zM17 11.5h2.1v3.1h-2.1zM19 11.5h1.6v3.1h-1.6zM22.5 11.5h2.1v3.1h-2.1zM38 11.5h2.6v3.1h-2.6zM42.5 11.5h1.1v3.1h-1.1zM43.5 11.5h3.1v3.1h-3.1zM51.5 11.5h3.1v3.1h-3.1zM58.5 11.5h2.6v3.1h-2.6zM11.5 14.5h2.1v3.1h-2.1zM20.5 14.5h3.1v3.1h-3.1zM26 14.5h1.1v3.1h-1.1zM60 14.5h1.6v3.1h-1.6zM5 17.5h3.1v3.1h-3.1zM8 17.5h2.6v3.1h-2.6zM12.5 17.5h1.1v3.1h-1.1zM22.5 17.5h1.1v3.1h-1.1zM27 17.5h3.1v3.1h-3.1zM30 17.5h1.6v3.1h-1.6zM37.5 17.5h1.6v3.1h-1.6zM40 17.5h2.1v3.1h-2.1zM58 17.5h2.6v3.1h-2.6zM6 20.5h1.1v2.6h-1.1zM39 20.5h3.1v2.6h-3.1zM47.5 20.5h1.6v2.6h-1.6zM61 20.5h2.6v2.6h-2.6zM63.5 20.5h1.1v2.6h-1.1zM0 23h1.1v2.6h-1.1zM3.5 23h1.1v2.6h-1.1zM13 23h1.6v2.6h-1.6zM18.5 23h1.1v2.6h-1.1zM28.5 23h1.1v2.6h-1.1zM38 23h3.1v2.6h-3.1zM41 23h2.6v2.6h-2.6zM43.5 23h3.1v2.6h-3.1zM55 23h3.1v2.6h-3.1zM61.5 23h3.1v2.6h-3.1zM5 25.5h1.1v2.1h-1.1zM11 25.5h3.1v2.1h-3.1zM16.5 25.5h1.1v2.1h-1.1zM20 25.5h1.1v2.1h-1.1zM23.5 25.5h3.1v2.1h-3.1zM34.5 25.5h1.1v2.1h-1.1zM47.5 25.5h2.1v2.1h-2.1zM58 25.5h2.6v2.1h-2.6zM0 27.5h2.1v1.6h-2.1zM2 27.5h2.1v1.6h-2.1zM6 27.5h1.6v1.6h-1.6zM15 27.5h2.1v1.6h-2.1zM19 27.5h2.1v1.6h-2.1zM50 27.5h1.6v1.6h-1.6zM55.5 27.5h1.1v1.6h-1.1zM9.5 29h2.6v2.6h-2.6zM18.5 29h1.1v2.6h-1.1zM26 29h2.1v2.6h-2.1zM44.5 29h2.6v2.6h-2.6zM55.5 29h1.6v2.6h-1.6zM62.5 29h1.1v2.6h-1.1zM64.5 29h2.6v2.6h-2.6zM11.5 31.5h1.6v2.1h-1.6zM15 31.5h2.1v2.1h-2.1zM17 31.5h3.1v2.1h-3.1zM32 31.5h2.6v2.1h-2.6zM39.5 31.5h1.1v2.1h-1.1zM47 31.5h2.6v2.1h-2.6zM54 31.5h1.6v2.1h-1.6zM58 31.5h1.1v2.1h-1.1zM66 31.5h2.6v2.1h-2.6zM3 33.5h2.1v2.1h-2.1zM6 33.5h2.1v2.1h-2.1zM14 33.5h1.1v2.1h-1.1zM21.5 33.5h3.1v2.1h-3.1zM39 33.5h2.6v2.1h-2.6zM55.5 33.5h1.6v2.1h-1.6zM60 33.5h1.1v2.1h-1.1zM62.5 33.5h2.6v2.1h-2.6zM65 33.5h2.1v2.1h-2.1zM3.5 35.5h1.1v2.6h-1.1zM5.5 35.5h1.6v2.6h-1.6zM7 35.5h2.6v2.6h-2.6zM12 35.5h1.1v2.6h-1.1zM16 35.5h2.1v2.6h-2.1zM18 35.5h2.1v2.6h-2.1zM29 35.5h2.6v2.6h-2.6zM40 35.5h2.1v2.6h-2.1zM50.5 35.5h2.6v2.6h-2.6zM53 35.5h1.1v2.6h-1.1zM64 35.5h1.1v2.6h-1.1zM0 38h1.1v2.6h-1.1zM1 38h3.1v2.6h-3.1zM11.5 38h2.6v2.6h-2.6zM29 38h2.6v2.6h-2.6zM31.5 38h2.6v2.6h-2.6zM54 38h1.6v2.6h-1.6zM0 40.5h2.1v1.6h-2.1zM9 40.5h2.1v1.6h-2.1zM12.5 40.5h3.1v1.6h-3.1zM15.5 40.5h3.1v1.6h-3.1zM18.5 40.5h2.6v1.6h-2.6zM21 40.5h1.6v1.6h-1.6zM26 40.5h3.1v1.6h-3.1zM52 40.5h2.6v1.6h-2.6zM54.5 40.5h3.1v1.6h-3.1zM66 40.5h1.6v1.6h-1.6zM9 42h1.6v2.1h-1.6zM10.5 42h3.1v2.1h-3.1zM13.5 42h3.1v2.1h-3.1zM25 42h1.6v2.1h-1.6zM28 42h3.1v2.1h-3.1zM48 42h1.1v2.1h-1.1zM67.5 42h2.1v2.1h-2.1zM0 44h1.6v3.1h-1.6zM21.5 44h3.1v3.1h-3.1zM33 44h1.1v3.1h-1.1zM38 44h2.1v3.1h-2.1zM40 44h1.1v3.1h-1.1zM54.5 44h2.6v3.1h-2.6z"/><path fill="#dcdcdc" d="M45 7h2.6v2.6h-2.6zM49.5 7h3.1v2.6h-3.1zM53.5 7h1.6v2.6h-1.6zM9.5 9.5h2.1v2.1h-2.1zM50.5 9.5h1.1v2.1h-1.1zM4 11.5h1.1v3.1h-1.1zM5 11.5h3.1v3.1h-3.1zM40.5 11.5h2.1v3.1h-2.1zM46.5 11.5h2.1v3.1h-2.1zM61 11.5h1.1v3.1h-1.1zM10 14.5h1.6v3.1h-1.6zM27 14.5h2.1v3.1h-2.1zM31 14.5h2.1v3.1h-2.1zM35 14.5h2.1v3.1h-2.1zM61.5 14.5h2.1v3.1h-2.1zM23.5 17.5h1.6v3.1h-1.6zM42 17.5h1.1v3.1h-1.1zM43 17.5h3.1v3.1h-3.1zM56 17.5h2.1v3.1h-2.1zM19.5 20.5h3.1v2.6h-3.1zM2 23h1.6v2.6h-1.6zM4.5 23h2.6v2.6h-2.6zM15.5 23h3.1v2.6h-3.1zM50.5 23h1.6v2.6h-1.6zM22.5 25.5h1.1v2.1h-1.1zM43.5 25.5h1.1v2.1h-1.1zM49.5 25.5h3.1v2.1h-3.1zM54 25.5h2.6v2.1h-2.6zM9.5 27.5h2.6v1.6h-2.6zM17 27.5h2.1v1.6h-2.1zM22 27.5h1.1v1.6h-1.1zM25.5 27.5h2.6v1.6h-2.6zM28 27.5h3.1v1.6h-3.1zM33 27.5h2.6v1.6h-2.6zM42 27.5h1.6v1.6h-1.6zM67.5 27.5h1.1v1.6h-1.1zM15.5 29h3.1v2.6h-3.1zM35.5 29h2.6v2.6h-2.6zM50 29h1.6v2.6h-1.6zM51.5 29h2.1v2.6h-2.1zM20 31.5h1.6v2.1h-1.6zM24.5 31.5h3.1v2.1h-3.1zM40.5 31.5h1.1v2.1h-1.1zM11 33.5h1.6v2.1h-1.6zM16 33.5h1.6v2.1h-1.6zM18.5 33.5h3.1v2.1h-3.1zM30.5 33.5h1.6v2.1h-1.6zM0 35.5h2.1v2.6h-2.1zM2 35.5h1.6v2.6h-1.6zM24.5 35.5h2.1v2.6h-2.1zM54 35.5h1.1v2.6h-1.1zM60.5 35.5h1.6v2.6h-1.6zM14 38h3.1v2.6h-3.1zM19.5 38h1.1v2.6h-1.1zM40 38h3.1v2.6h-3.1zM62.5 38h2.6v2.6h-2.6zM45.5 40.5h2.6v1.6h-2.6zM22.5 42h2.6v2.1h-2.6zM36 42h2.6v2.1h-2.6zM57.5 42h3.1v2.1h-3.1zM63.5 42h2.6v2.1h-2.6zM48.5 44h3.1v3.1h-3.1z"/><path fill="#b4b4b4" d="M64.5 7h2.6v2.6h-2.6zM49 9.5h1.6v2.1h-1.6zM50.5 17.5h1.1v3.1h-1.1zM65.5 17.5h3.1v3.1h-3.1zM0 20.5h1.6v2.6h-1.6zM49 20.5h3.1v2.6h-3.1zM14 25.5h2.6v2.1h-2.6zM41 25.5h2.6v2.1h-2.6zM41 27.5h1.1v1.6h-1.1zM56.5 27.5h1.1v1.6h-1.1zM60 29h2.6v2.6h-2.6zM58.5 35.5h2.1v2.6h-2.1zM8.5 38h3.1v2.6h-3.1zM17 38h2.6v2.6h-2.6zM20.5 38h1.1v2.6h-1.1zM38 38h1.1v2.6h-1.1zM67.5 38h1.6v2.6h-1.6zM11 40.5h1.6v1.6h-1.6zM35 40.5h2.1v1.6h-2.1zM60 40.5h2.1v1.6h-2.1zM21.5 42h1.1v2.1h-1.1zM14.5 44h2.6v3.1h-2.6zM30 44h3.1v3.1h-3.1z"/><path fill="#a0a0a0" d="M41 9.5h2.6v2.1h-2.6zM0 14.5h2.1v3.1h-2.1zM2.5 17.5h2.6v3.1h-2.6zM58.5 20.5h2.6v2.6h-2.6zM21 25.5h1.6v2.1h-1.6zM57.5 27.5h2.1v1.6h-2.1zM13 31.5h2.1v2.1h-2.1zM27.5 31.5h1.6v2.1h-1.6zM49 40.5h3.1v1.6h-3.1zM53.5 44h1.1v3.1h-1.1z"/><path fill="#909090" fill-opacity="0.75" d="M6 24h1.3v2.3h-1.3zM21 34h1.3v2.3h-1.3zM29 29h1.3v2.3h-1.3zM33 30h1.3v2.3h-1.3zM43 34h1.3v2.3h-1.3zM38 39h1.3v2.3h-1.3zM13 39h1.3v2.3h-1.3zM58 16h1.3v2.3h-1.3zM30 17h1.3v2.3h-1.3zM42 21h1.3v2.3h-1.3zM12 20h1.3v2.3h-1.3zM50 12h1.3v2.3h-1.3z"/></g></g><clipPath id="cq29"><rect x="0" y="0" width="68.4" height="7.65"/></clipPath><polygon points="0.8,0.95 67.9,0.95 0.8,38.8" fill="url(#gl29)" clip-path="url(#cq29)"/><polygon points="0.8,0.95 67.9,0.95 0.8,38.8" fill="url(#gl29)" clip-path="url(#cp29)" opacity="0.4"/><rect x="0.8" y="0.95" width="67.1" height="0.8" fill="#fff" fill-opacity="0.07"/><rect x="0.8" y="0.95" width="0.7" height="36.8" fill="#fff" fill-opacity="0.05"/></g></g></svg></div><div class="lb" style="left:631.1px"><span style="top:513.1px;letter-spacing:0.1px">cube-</span><span style="top:531.1px;letter-spacing:-0.11px">backgro...utc.mov</span></div>
<div class="ic" style="left:793px;top:441px"><svg width="68.4" height="53" viewBox="0 0 68.4 53" ><g transform="translate(0.19,0.1)"><defs><linearGradient id="gl30" gradientUnits="userSpaceOnUse" x1="0" y1="0" x2="68" y2="14"><stop offset="0" stop-color="#fff" stop-opacity="0.26"/><stop offset="0.5" stop-color="#fff" stop-opacity="0.17"/><stop offset="1" stop-color="#fff" stop-opacity="0.07"/></linearGradient><clipPath id="cp30"><rect x="-0.35" y="7.65" width="69.3" height="38.51"/></clipPath><filter id="bl30" x="-5%" y="-5%" width="110%" height="110%"><feGaussianBlur stdDeviation="0.5"/></filter><linearGradient id="cb30" x1="0" y1="0" x2="1" y2="0"><stop offset="0" stop-color="#346f9c"/><stop offset="0.3" stop-color="#305698"/><stop offset="0.55" stop-color="#303092"/><stop offset="0.8" stop-color="#6440b2"/><stop offset="0.94" stop-color="#ae6ed6"/><stop offset="1" stop-color="#dca4ec"/></linearGradient><radialGradient id="cbg30"><stop offset="0" stop-color="#fbe8fc" stop-opacity="1"/><stop offset="1" stop-color="#e0a0f0" stop-opacity="0"/></radialGradient><radialGradient id="cbc30"><stop offset="0" stop-color="#58c0e8" stop-opacity="0.95"/><stop offset="1" stop-color="#3c90c0" stop-opacity="0"/></radialGradient></defs><g transform="translate(0,0)"><rect x="-0.4" y="0.3" width="69.2" height="54.0" fill="#000" fill-opacity="0.25"/><rect x="0" y="0" width="68.4" height="52.8" fill="#000"/><g clip-path="url(#cp30)"><g filter="url(#bl30)" transform="translate(-0.35,0.555) scale(1.019,1.0135)"><rect x="0" y="7" width="68" height="38" fill="url(#cb30)"/><ellipse cx="3" cy="45" rx="18" ry="8" fill="url(#cbc30)"/><ellipse cx="18" cy="8" rx="18" ry="5" fill="url(#cbc30)" fill-opacity="0.45"/><path d="M26 45 L30 22 L40 14 L48 20 L54 34 L60 45 Z" fill="#2a2a86" fill-opacity="0.5"/><path d="M40 45 Q48 36 58 45 Z" fill="#28288e" fill-opacity="0.8"/><path d="M46 22 Q54 30 60 45 L64 45 Q58 28 50 20 Z" fill="#4676b4" fill-opacity="0.55"/><ellipse cx="68.5" cy="28" rx="5" ry="11" fill="url(#cbg30)"/><ellipse cx="63" cy="39" rx="5" ry="7" fill="#d088e8" fill-opacity="0.5"/><path fill="#141458" fill-opacity="0.12" d="M22 43.4h1v5.5h-1zM11.2 26h0.7v4.1h-0.7zM53.8 39.1h1v4.4h-1zM5.7 15.7h0.7v4.3h-0.7zM14.1 32.5h1v5.8h-1zM59.5 17.9h1v4.8h-1zM20 25.4h0.7v3.5h-0.7zM20.1 20.9h1v3.3h-1zM9.2 23.7h0.7v4.5h-0.7zM16.4 16h0.7v3.7h-0.7zM64.1 42.7h1v5.9h-1zM60.6 25.9h1v5.4h-1zM57.5 21h0.7v4.9h-0.7zM48.7 34.1h1v2.1h-1zM44.1 20.7h0.7v3.5h-0.7zM24.5 31.2h0.7v3.8h-0.7zM48.2 13.9h0.7v2.5h-0.7zM33.8 43.7h1v4.7h-1zM17.9 10.9h0.7v4.3h-0.7zM0.7 7.8h1v2.8h-1zM9 31.2h1v4h-1zM66.1 35.2h0.7v2h-0.7zM15.4 25.5h0.7v4.1h-0.7zM46.9 24.7h1v5.1h-1zM57 20.8h1v2.8h-1zM5 41.8h1v4.1h-1zM43 43.7h0.7v2.3h-0.7zM62.6 15.4h0.7v5.6h-0.7zM61.3 28.5h1v5.2h-1zM19.7 42.3h2.7v0.7h-2.7zM8.5 8.4h2.6v0.7h-2.6zM46.4 9h3.8v0.7h-3.8zM9.1 31.9h3.9v0.7h-3.9zM1.6 22.2h1.5v0.7h-1.5zM46.3 23.5h3.4v0.7h-3.4zM53.2 35.4h3.3v0.7h-3.3zM47.1 19.9h1.7v0.7h-1.7zM5.9 7.5h4v0.7h-4zM19.9 30.5h4v0.7h-4zM49.7 41.8h2.9v0.7h-2.9zM34.2 33.6h3v0.7h-3zM37 17h2.3v0.7h-2.3zM27.6 14.5h3.7v0.7h-3.7zM26.6 32.3h3v0.7h-3zM12.7 21.7h1.9v0.7h-1.9zM43.1 41.5h1.6v0.7h-1.6zM64.4 41.4h3.9v0.7h-3.9zM37.9 7.2h3.2v0.7h-3.2zM27.1 29.5h3.3v0.7h-3.3z"/><path fill="#141458" fill-opacity="0.2" d="M33.7 13.5h1v4.9h-1zM24.4 16.9h0.7v4.3h-0.7zM65.8 19.8h1v5.6h-1zM32.9 29h0.7v2h-0.7zM60.3 25.3h0.7v3.7h-0.7zM37.8 33.9h0.7v2.4h-0.7zM61 13.7h0.7v3.9h-0.7zM60.8 11.7h1v3.2h-1zM2.1 13.3h0.7v4.6h-0.7zM24.1 18.4h1v4.5h-1zM43.1 12.4h0.7v3.8h-0.7zM36 28.3h0.7v4h-0.7zM15.7 33.7h0.7v3.5h-0.7zM28.4 29.1h0.7v4.7h-0.7zM9 33.7h0.7v5.7h-0.7zM61 15.1h1v3.2h-1zM26.3 16.8h0.7v3.2h-0.7zM45.8 30.4h1v2.7h-1zM44.5 42h1v3.4h-1zM7.2 17.4h1v5.1h-1zM13.6 36.2h1v5.9h-1zM44.4 11.1h1v2.3h-1zM32.3 31.3h1v3.1h-1zM34.8 15.8h0.7v4.8h-0.7zM49 17.2h1v4.7h-1zM53.9 14.7h0.7v3.5h-0.7zM45.9 43.2h0.7v4.8h-0.7zM55.8 10h0.7v2.9h-0.7zM45.6 34.5h1v5.5h-1zM37.1 27h0.7v5.6h-0.7zM25.1 33.1h1v5.3h-1zM17.8 22.7h0.7v3.3h-0.7zM13.1 13.4h0.7v3.9h-0.7zM56.8 10.5h2v0.7h-2zM52.1 12.9h1.7v0.7h-1.7zM24.2 11.6h3.1v0.7h-3.1zM21.7 44h3.2v0.7h-3.2zM37.4 28.6h1.6v0.7h-1.6zM65.7 28.6h2.4v0.7h-2.4zM27.2 22.1h2v0.7h-2zM22.9 8.5h2.5v0.7h-2.5zM25.8 11.1h2.2v0.7h-2.2zM60.4 18h3.4v0.7h-3.4zM22.3 8.6h1.7v0.7h-1.7zM55.2 27.9h3.4v0.7h-3.4zM5.8 14.1h1.8v0.7h-1.8zM14 35.1h2.2v0.7h-2.2zM52.4 37.9h3.8v0.7h-3.8zM56.8 14.7h3v0.7h-3zM23.2 18.4h2.6v0.7h-2.6zM11 7.3h3.3v0.7h-3.3zM51.4 17.2h1.6v0.7h-1.6zM34.1 22.1h2.4v0.7h-2.4z"/><path fill="#141458" fill-opacity="0.28" d="M42 24.1h1v3.8h-1zM4.3 15.9h1v3.7h-1zM36.5 30.1h1v4h-1zM43.1 21.8h0.7v2.6h-0.7zM44.7 9.8h1v5.7h-1zM4.3 22h0.7v3.6h-0.7zM33.2 34h1v4.8h-1zM61.9 17.4h0.7v4.5h-0.7zM28.5 12.6h0.7v3.8h-0.7zM30.7 33.6h0.7v4.8h-0.7zM22.7 12.4h0.7v2.6h-0.7zM39.5 22.3h1v5.1h-1zM17.3 11h1v3h-1zM62.5 32.7h0.7v2.3h-0.7zM31.4 24.5h1v2.5h-1zM55.1 7.8h1v3h-1zM31.9 15.4h0.7v5.2h-0.7zM24.7 20h0.7v2.1h-0.7zM46.9 14.1h0.7v5.7h-0.7zM4.7 43.2h1v5.1h-1zM24 34.8h0.7v4.1h-0.7zM15.4 8.1h1v4.1h-1zM40.8 20.5h1v5.1h-1zM37.8 10.7h0.7v5.8h-0.7zM14.8 40.1h1v2.4h-1zM32 40.5h1v4.8h-1zM52.9 29.9h0.7v2.2h-0.7zM58.8 40.6h0.7v4.3h-0.7z"/><path fill="#34267e" fill-opacity="0.6" d="M56 14h3v5h-3zM60 20h2v6h-2zM63 26h2v8h-2zM52 10h3v4h-3z"/></g></g><clipPath id="cq30"><rect x="0" y="0" width="68.4" height="7.65"/></clipPath><polygon points="0.8,0.95 67.9,0.95 0.8,38.8" fill="url(#gl30)" clip-path="url(#cq30)"/><polygon points="0.8,0.95 67.9,0.95 0.8,38.8" fill="url(#gl30)" clip-path="url(#cp30)" opacity="0.6"/><rect x="0.8" y="0.95" width="67.1" height="0.8" fill="#fff" fill-opacity="0.07"/><rect x="0.8" y="0.95" width="0.7" height="36.8" fill="#fff" fill-opacity="0.05"/></g></g></svg></div><div class="lb" style="left:757.4px"><span style="top:513.1px;letter-spacing:0.33px">cubes-</span><span style="top:531.1px;letter-spacing:-0.11px">backgro...utc.mov</span></div>
<div class="ic" style="left:919px;top:441px"><svg width="68.4" height="53" viewBox="0 0 68.4 53" ><g transform="translate(0.48,0.1)"><defs><linearGradient id="gl31" gradientUnits="userSpaceOnUse" x1="0" y1="0" x2="68" y2="14"><stop offset="0" stop-color="#fff" stop-opacity="0.26"/><stop offset="0.5" stop-color="#fff" stop-opacity="0.17"/><stop offset="1" stop-color="#fff" stop-opacity="0.07"/></linearGradient><clipPath id="cp31"><rect x="-0.35" y="0.00" width="69.3" height="52.80"/></clipPath><filter id="bl31" x="-5%" y="-5%" width="110%" height="110%"><feGaussianBlur stdDeviation="0.4"/></filter></defs><g transform="translate(0,0)"><rect x="-0.4" y="0.3" width="69.2" height="54.0" fill="#000" fill-opacity="0.25"/><rect x="0" y="0" width="68.4" height="52.8" fill="#000"/><g clip-path="url(#cp31)"><g filter="url(#bl31)" transform="translate(-0.35,0.555) scale(1.019,1.0135)"><path fill="#804868" fill-opacity="0.3" d="M34.8 22h1v1.4h-1zM17.3 29.2h1v1h-1zM23.2 21.2h1v1.4h-1z"/><path fill="#c890b0" fill-opacity="0.45" d="M35.4 25.3h1v1h-1zM33.4 24.5h1v1h-1zM26.1 30.6h1v1h-1zM32.1 32h1v1h-1z"/><path fill="#c890b0" fill-opacity="0.6" d="M26.8 27.5h1v1h-1zM34.8 22.4h1v1h-1zM20.7 28.3h1v1h-1z"/><path fill="#804868" fill-opacity="0.6" d="M26.8 20h1v1h-1zM31.4 20.4h1v1h-1zM30.5 23.8h1v1.4h-1zM25.6 26.2h1v1.4h-1zM28.4 28.9h1v1h-1zM24.8 27h1v1.4h-1z"/><path fill="#a06888" fill-opacity="0.3" d="M31.9 27.7h1v1.4h-1zM29.1 24.9h1v1h-1zM20.6 29.2h1v1h-1zM26.5 20.8h1v1h-1z"/><path fill="#a06888" fill-opacity="0.6" d="M33.8 36.6h1v1h-1zM23.6 29.5h1v1h-1zM37.4 30.4h1v1h-1zM35.8 25.8h1v1.4h-1zM23.6 28.3h1v1h-1z"/><path fill="#c890b0" fill-opacity="0.3" d="M29.9 24.4h1v1h-1zM36.8 25.1h1v1.4h-1zM21.4 34.6h1v1h-1z"/><path fill="#a06888" fill-opacity="0.45" d="M34.4 27.7h1v1h-1zM27.7 38h1v1h-1zM21.1 29.3h1v1h-1zM34.3 35.8h1v1h-1z"/><path fill="#804868" fill-opacity="0.45" d="M28.8 33.6h1v1h-1zM26.4 37.4h1v1h-1zM25 29.4h1v1h-1z"/><path fill="#e0b8d0" fill-opacity="0.6" d="M29.8 22h1v1h-1z"/><path fill="#e0b8d0" fill-opacity="0.45" d="M33.3 37h1v1.4h-1zM31.3 33.4h1v1h-1z"/><path fill="#e0b8d0" fill-opacity="0.3" d="M23.9 23.8h1v1h-1zM31.7 23.8h1v1.4h-1z"/><path fill="#602028" fill-opacity="0.45" d="M51.3 29.1h1v1.2h-1zM43.4 30.4h1v1.2h-1z"/><path fill="#b07048" fill-opacity="0.6" d="M48.3 23.2h1v1.2h-1zM51.1 27.1h1v1.2h-1z"/><path fill="#602028" fill-opacity="0.3" d="M48.5 19.9h1v1.2h-1z"/><path fill="#803030" fill-opacity="0.45" d="M51.1 27.2h1v1.2h-1zM49.6 32.9h1v1.2h-1z"/><path fill="#a04838" fill-opacity="0.3" d="M48.3 34.1h1v1.2h-1z"/><path fill="#a04838" fill-opacity="0.45" d="M43.3 23h1v1.2h-1z"/><path fill="#b07048" fill-opacity="0.3" d="M42.7 32.1h1v1.2h-1zM46.1 32h1v1.2h-1zM46.5 35.5h1v1.2h-1zM53.3 31.7h1v1.2h-1z"/><path fill="#b07048" fill-opacity="0.45" d="M49.7 34.9h1v1.2h-1z"/><path fill="#602028" fill-opacity="0.6" d="M47.2 31h1v1.2h-1z"/><path fill="#803030" fill-opacity="0.6" d="M52.1 26.9h1v1.2h-1z"/><path fill="#d8b890" fill-opacity="0.7" d="M39 12.5h0.9v4.5h-0.9z"/><path fill="none" stroke="#d0a0c0" stroke-width="0.7" stroke-opacity="0.6" d="M27.1 27.1L23.8 20.7M24.9 30.7L18 34.4M24.6 30.4L20 32.3M29 32.6L30.2 37"/><path fill="none" stroke="#d0a0c0" stroke-width="0.7" stroke-opacity="0.3" d="M24.1 28.7L19.2 28.2M27.3 26.7L25.7 21.5M29.7 28.1L35.2 25.2M29.9 28.1L37.9 24.2"/><path fill="none" stroke="#8a5878" stroke-width="0.7" stroke-opacity="0.6" d="M31.4 28.7L38.9 27.9M27.2 25.4L26.1 20.6M26.3 27L23.1 23.1M27.1 25L26.1 20"/><path fill="none" stroke="#b07898" stroke-width="0.7" stroke-opacity="0.3" d="M25.8 30L18.3 33.6M30.7 29.7L35.7 30.9M30.1 31L33.1 33.9M28.4 31.2L29.5 37.2"/><path fill="none" stroke="#d0a0c0" stroke-width="0.7" stroke-opacity="0.45" d="M32.3 28.3L37.9 27.3M24.6 27.4L18.9 24.7M24.6 30.2L19.2 32.2"/><path fill="none" stroke="#8a5878" stroke-width="0.7" stroke-opacity="0.3" d="M29.9 29.7L36.8 32.3M24.3 29.5L18.4 30.4M25.9 28.8L18.1 28.1"/><path fill="none" stroke="#b07898" stroke-width="0.7" stroke-opacity="0.6" d="M28.9 27.3L31 23.3M27.6 32.5L27.1 37.2M30.5 30.4L34.8 32.9M25.9 32.3L23 36.9"/><path fill="none" stroke="#702830" stroke-width="0.7" stroke-opacity="0.35" d="M47 27.5L49.2 22.4M49.4 28.6L52.2 27.5"/><path fill="none" stroke="#8a3838" stroke-width="0.7" stroke-opacity="0.35" d="M48.6 30L54.4 30.1M47.4 27.8L49.9 24M48 28.8L53.1 25.6M49.5 29.1L55.2 27.5"/><path fill="none" stroke="#8a3838" stroke-width="0.7" stroke-opacity="0.5" d="M48.1 30.2L53.7 30.7M48 29.3L53.9 27.1M48.8 27.3L51.7 24.5M49.6 29.8L55.7 29.6"/><path fill="none" stroke="#a05040" stroke-width="0.7" stroke-opacity="0.5" d="M49 30.2L55 30.5"/><path fill="none" stroke="#702830" stroke-width="0.7" stroke-opacity="0.5" d="M47.2 27.3L49.6 21.9M48.5 28.1L52 25.4"/><path fill="none" stroke="#a05040" stroke-width="0.7" stroke-opacity="0.35" d="M48.4 26.8L50.8 23.6"/></g></g><polygon points="0.8,0.95 67.9,0.95 0.8,38.8" fill="url(#gl31)"/><rect x="0.8" y="0.95" width="67.1" height="0.8" fill="#fff" fill-opacity="0.07"/><rect x="0.8" y="0.95" width="0.7" height="36.8" fill="#fff" fill-opacity="0.05"/></g></g></svg></div><div class="lb" style="left:883.7px"><span style="top:513.1px;letter-spacing:0.31px">fireworks-2023-1</span><span style="top:531.1px;letter-spacing:-0.01px">1-27-05...utc.mov</span></div>
<div class="ic" style="left:35px;top:569px"><svg width="68.4" height="53" viewBox="0 0 68.4 53" ><g transform="translate(0.45,0.9)"><defs><linearGradient id="gl32" gradientUnits="userSpaceOnUse" x1="0" y1="0" x2="68" y2="14"><stop offset="0" stop-color="#fff" stop-opacity="0.26"/><stop offset="0.5" stop-color="#fff" stop-opacity="0.17"/><stop offset="1" stop-color="#fff" stop-opacity="0.07"/></linearGradient><clipPath id="cp32"><rect x="-0.35" y="7.14" width="69.3" height="39.53"/></clipPath><filter id="bl32" x="-5%" y="-5%" width="110%" height="110%"><feGaussianBlur stdDeviation="0.35"/></filter></defs><g transform="translate(0,0)"><rect x="-0.4" y="0.3" width="69.2" height="54.0" fill="#000" fill-opacity="0.25"/><rect x="0" y="0" width="68.4" height="52.8" fill="#000"/><g clip-path="url(#cp32)"><g filter="url(#bl32)" transform="translate(-0.35,0.555) scale(1.019,1.0135)"><path fill="#2f6fd0" fill-opacity="0.9" d="M13.6 14.9h1.2v1.2h-1.2zM22.7 13.5h2.1v2.1h-2.1zM37 10.4h2.1v2.1h-2.1zM58.3 25.5h1.1v1.1h-1.1z"/><path fill="#5050d8" fill-opacity="0.75" d="M9.4 12.6h0.9v0.9h-0.9zM33.6 16.1h2.1v2.1h-2.1zM4 15.6h1.6v1.6h-1.6zM13.1 27.4h1.8v1.8h-1.8zM14.4 25.8h1.6v1.6h-1.6zM13.2 24.8h1.8v1.8h-1.8zM42.2 23.3h1.8v1.8h-1.8zM41.1 22.4h1.1v1.1h-1.1zM5.1 38.5h1.4v1.4h-1.4z"/><path fill="#3f8fe0" fill-opacity="0.75" d="M7.4 9.1a1.5 1.5 0 1 0 3 0a1.5 1.5 0 1 0 -3 0zM27.5 19.5h1.1v1.1h-1.1zM28.3 12.3h1.4v1.4h-1.4zM20.5 17h0.9v0.9h-0.9zM8.5 13.7h1.1v1.1h-1.1zM36.7 24h1.8v1.8h-1.8zM16.9 23.1h1.1v1.1h-1.1zM16.6 22.8h1.6v1.6h-1.6zM48.2 22.4h1.4v1.4h-1.4zM53.2 24.2h0.9v0.9h-0.9zM50.9 24.4h1.8v1.8h-1.8zM41.5 25.4h1.8v1.8h-1.8zM7.1 29.5h1.8v1.8h-1.8zM8 27.4h2.1v2.1h-2.1zM14.6 29h1.8v1.8h-1.8zM6.3 34.9a1.5 1.5 0 1 0 3 0a1.5 1.5 0 1 0 -3 0z"/><path fill="#e04434" fill-opacity="0.6" d="M28.8 12.9h1.6v1.6h-1.6zM36 12.5h2.1v2.1h-2.1zM13.3 13h2.1v2.1h-2.1zM28.4 25.1h1.4v1.4h-1.4zM37 26.8h0.9v0.9h-0.9zM28.2 24.4h2.1v2.1h-2.1zM40.6 25h0.9v0.9h-0.9zM50.4 26.8h1.8v1.8h-1.8zM46 28.3h1.6v1.6h-1.6zM14.9 26.6a1.5 1.5 0 1 0 3 0a1.5 1.5 0 1 0 -3 0zM27.8 35.9h2.1v2.1h-2.1zM52.6 34.4h1.4v1.4h-1.4z"/><path fill="#4a9ae8" fill-opacity="0.75" d="M29.6 15.6h2.1v2.1h-2.1zM-3.5 12.5a1.5 1.5 0 1 0 3 0a1.5 1.5 0 1 0 -3 0zM40.3 10.1h1.6v1.6h-1.6zM3.3 11.3h1.4v1.4h-1.4zM27.8 12.7h1.6v1.6h-1.6zM29.5 11h0.9v0.9h-0.9zM19.6 8.4h1.4v1.4h-1.4zM1.5 10.6h2.1v2.1h-2.1zM1.3 21.5h1.6v1.6h-1.6zM14.2 23.4h1.4v1.4h-1.4zM28.2 21.2h2.1v2.1h-2.1zM31.6 28.3h0.9v0.9h-0.9zM31.2 23.9h1.6v1.6h-1.6zM44.7 29.2h1.1v1.1h-1.1zM46.3 27.3h1.1v1.1h-1.1zM55 26.3h2.1v2.1h-2.1zM32.6 34.1h0.9v0.9h-0.9zM28.9 38.8h1.4v1.4h-1.4z"/><path fill="#3f8fe0" fill-opacity="0.6" d="M27.8 15.3a1.5 1.5 0 1 0 3 0a1.5 1.5 0 1 0 -3 0zM19.1 16.3h2.1v2.1h-2.1zM22.8 18.9h2.1v2.1h-2.1zM22.5 15.1h1.1v1.1h-1.1zM30.5 13.4h2.1v2.1h-2.1zM29.8 17.7h1.2v1.2h-1.2zM5.8 13.7h2.1v2.1h-2.1zM29 22.7h1.4v1.4h-1.4zM30.9 25.6h1.4v1.4h-1.4zM27.3 23.8h1.6v1.6h-1.6zM31 25.1h1.4v1.4h-1.4zM26.6 25h1.6v1.6h-1.6zM29.8 24a1.5 1.5 0 1 0 3 0a1.5 1.5 0 1 0 -3 0zM48.2 27.3h0.9v0.9h-0.9zM41.3 28.1h2.1v2.1h-2.1zM43.5 28h0.9v0.9h-0.9zM62.8 24a1.5 1.5 0 1 0 3 0a1.5 1.5 0 1 0 -3 0zM35.2 34h1.4v1.4h-1.4z"/><path fill="#3f8fe0" fill-opacity="0.9" d="M36.7 18.1h1.2v1.2h-1.2zM18.7 16.2h1.4v1.4h-1.4zM17.7 15.3a1.5 1.5 0 1 0 3 0a1.5 1.5 0 1 0 -3 0zM30.6 18.3h1.1v1.1h-1.1zM21.4 15.1a1.5 1.5 0 1 0 3 0a1.5 1.5 0 1 0 -3 0zM27.9 10h1.2v1.2h-1.2zM4.4 17.7h1.1v1.1h-1.1zM8.3 14h1.8v1.8h-1.8zM2.7 16.2h0.9v0.9h-0.9zM32.5 28.1h1.2v1.2h-1.2zM30.2 21.7h0.9v0.9h-0.9zM39.7 28.1h1.1v1.1h-1.1zM43.8 25.7h2.1v2.1h-2.1zM32.8 23h1.6v1.6h-1.6zM45.6 26h1.6v1.6h-1.6zM51.6 23h1.2v1.2h-1.2zM46.1 27.6h1.8v1.8h-1.8zM54 27.3h1.4v1.4h-1.4zM44.9 26.3h1.4v1.4h-1.4zM34.5 32.5h1.1v1.1h-1.1z"/><path fill="#2f6fd0" fill-opacity="0.6" d="M13.1 17.2h1.2v1.2h-1.2zM17.5 15.1h1.1v1.1h-1.1zM3.5 13h1.2v1.2h-1.2zM14.8 16h1.2v1.2h-1.2zM12.8 11.1a1.5 1.5 0 1 0 3 0a1.5 1.5 0 1 0 -3 0zM-0.4 25.4h1.2v1.2h-1.2zM8.5 23.8h1.1v1.1h-1.1zM22.1 26.8h2.1v2.1h-2.1z"/><path fill="#52a8f0" fill-opacity="0.6" d="M12.3 9.9h2.1v2.1h-2.1zM14 18.8h1.8v1.8h-1.8zM31.6 12.2a1.5 1.5 0 1 0 3 0a1.5 1.5 0 1 0 -3 0zM33.8 25.8h1.4v1.4h-1.4zM26.8 28.3h0.9v0.9h-0.9zM16.1 25.3h1.6v1.6h-1.6zM52.8 24.4h1.8v1.8h-1.8zM50.4 26.7h1.6v1.6h-1.6zM49.3 26.4h1.8v1.8h-1.8zM54.6 30.1a1.5 1.5 0 1 0 3 0a1.5 1.5 0 1 0 -3 0zM10.8 29.6a1.5 1.5 0 1 0 3 0a1.5 1.5 0 1 0 -3 0zM10.7 25h2.1v2.1h-2.1zM29.6 36.6h1.4v1.4h-1.4zM50.1 35h0.9v0.9h-0.9z"/><path fill="#38b060" fill-opacity="0.6" d="M22.2 14.4h0.9v0.9h-0.9zM20.7 11.6a1.5 1.5 0 1 0 3 0a1.5 1.5 0 1 0 -3 0zM34.7 21.9h1.2v1.2h-1.2zM37.1 22.5a1.5 1.5 0 1 0 3 0a1.5 1.5 0 1 0 -3 0zM58.1 28.6h0.9v0.9h-0.9zM15.9 31.1h1.2v1.2h-1.2z"/><path fill="#52a8f0" fill-opacity="0.75" d="M10.6 11.5h1.1v1.1h-1.1zM21.1 15.4h0.9v0.9h-0.9zM23.3 10.2h1.1v1.1h-1.1zM6.9 12h2.1v2.1h-2.1zM2.5 17.9h1.8v1.8h-1.8zM7 18.4h1.1v1.1h-1.1zM3.3 18.5h1.1v1.1h-1.1zM6.1 21.6h1.4v1.4h-1.4zM40.7 24.3h1.1v1.1h-1.1zM47 24.6h0.9v0.9h-0.9zM59 26.7h1.1v1.1h-1.1zM44.8 24.8h1.8v1.8h-1.8zM55.3 29.6h0.9v0.9h-0.9zM38 31.7a1.5 1.5 0 1 0 3 0a1.5 1.5 0 1 0 -3 0z"/><path fill="#f4a020" fill-opacity="1" d="M2.4 14.8h2.1v2.1h-2.1zM15.1 19.1h1.8v1.8h-1.8zM10.7 10.7h2.1v2.1h-2.1zM19.6 8.7h2.1v2.1h-2.1z"/><path fill="#e04434" fill-opacity="0.75" d="M33.5 15.5h1.4v1.4h-1.4zM26.9 17.6h1.2v1.2h-1.2zM12.3 13.7h1.4v1.4h-1.4zM4.7 13.5h1.8v1.8h-1.8zM34.7 24.2h1.4v1.4h-1.4zM15.3 30.9h1.1v1.1h-1.1zM4.4 28.6h1.4v1.4h-1.4zM12.7 23.8h1.4v1.4h-1.4zM6.5 30.3h2.1v2.1h-2.1zM8.3 35.4h1.6v1.6h-1.6z"/><path fill="#f080c0" fill-opacity="0.75" d="M11.3 13.7h1.4v1.4h-1.4zM16.3 10.4h0.9v0.9h-0.9z"/><path fill="#f080c0" fill-opacity="1" d="M24.6 10.4h1.4v1.4h-1.4zM57.8 25.3h1.6v1.6h-1.6zM32.1 31.8h1.6v1.6h-1.6z"/><path fill="#4a9ae8" fill-opacity="0.6" d="M11.1 15h1.6v1.6h-1.6zM19.2 15.9a1.5 1.5 0 1 0 3 0a1.5 1.5 0 1 0 -3 0zM9.6 19h1.8v1.8h-1.8zM19.1 19.1h1.6v1.6h-1.6zM1.7 18.9h1.2v1.2h-1.2zM36.5 26.7a1.5 1.5 0 1 0 3 0a1.5 1.5 0 1 0 -3 0zM44.5 24.3h1.1v1.1h-1.1zM25 23.1h1.4v1.4h-1.4zM49 27.1h1.2v1.2h-1.2zM56.1 25.5h0.9v0.9h-0.9zM52.6 25.1h1.4v1.4h-1.4z"/><path fill="#52a8f0" fill-opacity="1" d="M34.8 14.3h1.8v1.8h-1.8zM31.1 13.7h1.4v1.4h-1.4zM28.6 12.2h2.1v2.1h-2.1zM21.3 28.1h1.4v1.4h-1.4zM14.6 25.9h2.1v2.1h-2.1zM12.6 25.5h2.1v2.1h-2.1zM42.3 27.3h1.2v1.2h-1.2zM41.8 26.4h0.9v0.9h-0.9zM35.7 25.6h1.4v1.4h-1.4zM15.9 23.8h1.1v1.1h-1.1zM47.1 25.5a1.5 1.5 0 1 0 3 0a1.5 1.5 0 1 0 -3 0zM42.7 26h1.6v1.6h-1.6zM34.4 32.3h1.6v1.6h-1.6z"/><path fill="#a070e0" fill-opacity="1" d="M15.6 11.9a1.5 1.5 0 1 0 3 0a1.5 1.5 0 1 0 -3 0zM1.6 12.3h1.8v1.8h-1.8zM54.5 27.8a1.5 1.5 0 1 0 3 0a1.5 1.5 0 1 0 -3 0zM11.8 24.9h1.4v1.4h-1.4z"/><path fill="#52a8f0" fill-opacity="0.9" d="M12 10.5h0.9v0.9h-0.9zM22.6 9.3h1.1v1.1h-1.1zM18.9 16.1a1.5 1.5 0 1 0 3 0a1.5 1.5 0 1 0 -3 0zM-2.9 7.8h1.8v1.8h-1.8zM-0.9 19h1.8v1.8h-1.8zM28.3 20.7h1.1v1.1h-1.1zM25.6 26.3a1.5 1.5 0 1 0 3 0a1.5 1.5 0 1 0 -3 0zM38.6 23h1.6v1.6h-1.6zM46 28.5h0.9v0.9h-0.9zM7.5 35h0.9v0.9h-0.9z"/><path fill="#2f6fd0" fill-opacity="0.75" d="M9.2 10.6h1.4v1.4h-1.4zM4.9 17.8a1.5 1.5 0 1 0 3 0a1.5 1.5 0 1 0 -3 0zM20.2 25.7h1.2v1.2h-1.2zM25.2 23.5h1.2v1.2h-1.2zM10.5 23.4h2.1v2.1h-2.1zM33.6 32.6h0.9v0.9h-0.9z"/><path fill="#f4d040" fill-opacity="0.6" d="M28.8 14.1h1.2v1.2h-1.2zM-2.4 10.2h0.9v0.9h-0.9zM33.6 25.3h0.9v0.9h-0.9zM19.3 23.4h0.9v0.9h-0.9z"/><path fill="#f080c0" fill-opacity="0.9" d="M28.1 15.3h1.1v1.1h-1.1zM20.7 16.2h1.1v1.1h-1.1zM52.9 27.7h0.9v0.9h-0.9zM57.6 27.5h1.1v1.1h-1.1zM9.2 27.5h1.1v1.1h-1.1z"/><path fill="#f0c228" fill-opacity="0.75" d="M10.2 8.7h1.8v1.8h-1.8zM9.1 14h1.1v1.1h-1.1zM6.2 23.1h1.2v1.2h-1.2zM32 24.9h1.8v1.8h-1.8zM49.4 25.4h2.1v2.1h-2.1zM48.4 23.6h0.9v0.9h-0.9zM3.4 27.9h1.2v1.2h-1.2z"/><path fill="#3f8fe0" fill-opacity="1" d="M28.2 14.6h1.8v1.8h-1.8zM27.1 14.2h1.6v1.6h-1.6zM26 11.3h2.1v2.1h-2.1zM5.2 18h1.6v1.6h-1.6zM3.8 14.7h1.4v1.4h-1.4zM4.3 21.7h1.6v1.6h-1.6zM43.9 24.3h2.1v2.1h-2.1zM30.2 24.1h1.6v1.6h-1.6zM34.6 24.3h1.1v1.1h-1.1zM15 24.8h1.8v1.8h-1.8zM59 24.5h1.8v1.8h-1.8zM43.7 25.2h1.4v1.4h-1.4zM51 23.2h2.1v2.1h-2.1zM54.6 25h2.1v2.1h-2.1zM53 26.8h1.4v1.4h-1.4zM45.1 21.7h1.8v1.8h-1.8zM51.2 29.6h1.1v1.1h-1.1zM14.7 28.8h1.4v1.4h-1.4zM40.1 27.7h1.1v1.1h-1.1zM26.9 38.1a1.5 1.5 0 1 0 3 0a1.5 1.5 0 1 0 -3 0zM6.5 35.3h1.4v1.4h-1.4z"/><path fill="#f4d040" fill-opacity="0.9" d="M19.3 6.9h2.1v2.1h-2.1zM30.2 14.7h2.1v2.1h-2.1zM8.3 14.7h1.2v1.2h-1.2zM24.7 23.8h2.1v2.1h-2.1zM36.7 26.9h1.2v1.2h-1.2zM64.9 25h2.1v2.1h-2.1zM39.2 27.3h1.1v1.1h-1.1z"/><path fill="#e8a0e0" fill-opacity="0.75" d="M11.8 9.6h1.6v1.6h-1.6zM14 15.1h1.1v1.1h-1.1zM5.8 18.7h1.2v1.2h-1.2zM56.5 27.5h0.9v0.9h-0.9zM55.5 27.9h0.9v0.9h-0.9z"/><path fill="#5050d8" fill-opacity="0.9" d="M26.4 12.3h0.9v0.9h-0.9zM48 22h0.9v0.9h-0.9zM51.9 26.4h1.6v1.6h-1.6zM7.3 26.3h1.4v1.4h-1.4z"/><path fill="#4a9ae8" fill-opacity="0.9" d="M12 12.8h1.8v1.8h-1.8zM19.7 24.5h1.2v1.2h-1.2zM52.9 27.8h1.1v1.1h-1.1zM44.7 22.2h2.1v2.1h-2.1zM46.3 27h1.2v1.2h-1.2zM19.4 27.6h1.2v1.2h-1.2zM8.1 25.6h1.2v1.2h-1.2z"/><path fill="#a070e0" fill-opacity="0.9" d="M26.4 13.7h1.6v1.6h-1.6zM-3.1 15.1h2.1v2.1h-2.1z"/><path fill="#f0c228" fill-opacity="1" d="M32.2 14h1.1v1.1h-1.1zM33.4 15.6h1.6v1.6h-1.6zM25.6 26.1h2.1v2.1h-2.1zM49.2 29.4h1.2v1.2h-1.2z"/><path fill="#e04434" fill-opacity="1" d="M29.1 10.2h1.1v1.1h-1.1zM6.8 9.3h2.1v2.1h-2.1zM21.4 22h1.6v1.6h-1.6zM16.1 20.6h1.8v1.8h-1.8zM31.9 21.9h2.1v2.1h-2.1zM36.9 23.4a1.5 1.5 0 1 0 3 0a1.5 1.5 0 1 0 -3 0zM7.7 25.4h1.1v1.1h-1.1z"/><path fill="#5050d8" fill-opacity="0.6" d="M15.1 13.8h1.1v1.1h-1.1zM7 22.7a1.5 1.5 0 1 0 3 0a1.5 1.5 0 1 0 -3 0zM3.3 18.5h1.6v1.6h-1.6zM7.3 12h1.8v1.8h-1.8zM22.5 25.3h1.4v1.4h-1.4zM26.3 24.8h1.6v1.6h-1.6zM13.7 28.6h1.8v1.8h-1.8z"/><path fill="#a070e0" fill-opacity="0.6" d="M1.6 17.5h1.2v1.2h-1.2zM3.6 14.5h0.9v0.9h-0.9zM35.8 23h2.1v2.1h-2.1zM4.1 23.7h1.8v1.8h-1.8zM39.9 22.3a1.5 1.5 0 1 0 3 0a1.5 1.5 0 1 0 -3 0zM6.2 38a1.5 1.5 0 1 0 3 0a1.5 1.5 0 1 0 -3 0z"/><path fill="#e04434" fill-opacity="0.9" d="M15.9 11.1h1.2v1.2h-1.2zM13.4 24.9h1.4v1.4h-1.4zM24.9 25.5h1.2v1.2h-1.2zM58.7 27.1h1.4v1.4h-1.4zM11.4 25.6h2.1v2.1h-2.1zM30.2 36.8h1.2v1.2h-1.2zM49.3 35.4a1.5 1.5 0 1 0 3 0a1.5 1.5 0 1 0 -3 0z"/><path fill="#e8a0e0" fill-opacity="0.6" d="M25.3 12.9h1.8v1.8h-1.8zM38 27.1a1.5 1.5 0 1 0 3 0a1.5 1.5 0 1 0 -3 0zM41.7 22.9h2.1v2.1h-2.1zM11.1 27.5h2.1v2.1h-2.1zM38.2 29.3a1.5 1.5 0 1 0 3 0a1.5 1.5 0 1 0 -3 0z"/><path fill="#f080c0" fill-opacity="0.6" d="M20.4 12.3h1.1v1.1h-1.1zM14.6 12.3h1.2v1.2h-1.2zM41.5 22h0.9v0.9h-0.9zM35.7 30.5h1.4v1.4h-1.4zM28.2 35.7a1.5 1.5 0 1 0 3 0a1.5 1.5 0 1 0 -3 0z"/><path fill="#5ab8f0" fill-opacity="1" d="M36.7 11.8h1.2v1.2h-1.2zM4.9 10.5h1.1v1.1h-1.1zM11.6 21.3h0.9v0.9h-0.9zM35.6 29.1h1.8v1.8h-1.8z"/><path fill="#38b060" fill-opacity="1" d="M-3.5 13.4a1.5 1.5 0 1 0 3 0a1.5 1.5 0 1 0 -3 0zM6.1 26.3h1.4v1.4h-1.4zM50.1 35h1.1v1.1h-1.1z"/><path fill="#f4a020" fill-opacity="0.6" d="M21.2 13.9h1.8v1.8h-1.8zM35.5 25a1.5 1.5 0 1 0 3 0a1.5 1.5 0 1 0 -3 0zM27.6 24.7h1.2v1.2h-1.2zM5.6 28.7h1.4v1.4h-1.4z"/><path fill="#f4a020" fill-opacity="0.9" d="M26.4 15.1h1.6v1.6h-1.6zM20 20.3h1.1v1.1h-1.1zM51.4 21.9h1.1v1.1h-1.1z"/><path fill="#f0c228" fill-opacity="0.6" d="M7 18.1h1.6v1.6h-1.6zM31.4 22.3h1.2v1.2h-1.2zM18.6 20.7a1.5 1.5 0 1 0 3 0a1.5 1.5 0 1 0 -3 0zM19.1 27.4h0.9v0.9h-0.9zM27.4 28.8a1.5 1.5 0 1 0 3 0a1.5 1.5 0 1 0 -3 0zM19.2 25.1h1.6v1.6h-1.6zM9.5 22.9h1.6v1.6h-1.6zM57.2 25.3h1.4v1.4h-1.4zM46.7 27.3h1.2v1.2h-1.2zM13.1 28.6h2.1v2.1h-2.1z"/><path fill="#2f6fd0" fill-opacity="1" d="M5.5 17.7h0.9v0.9h-0.9zM8.8 14.2h1.4v1.4h-1.4zM34.1 23.3h0.9v0.9h-0.9zM3.6 21.9a1.5 1.5 0 1 0 3 0a1.5 1.5 0 1 0 -3 0zM23.9 24.4h1.6v1.6h-1.6zM36.7 24.2h1.8v1.8h-1.8zM53.1 25.3h1.8v1.8h-1.8z"/><path fill="#f4d040" fill-opacity="0.75" d="M6.5 19.4h1.8v1.8h-1.8zM33.2 26.1h1.4v1.4h-1.4zM47.1 25.9h1.6v1.6h-1.6zM29.2 36.5h0.9v0.9h-0.9z"/><path fill="#5ab8f0" fill-opacity="0.6" d="M3.8 16.7h1.2v1.2h-1.2zM20.2 27.3h0.9v0.9h-0.9zM24.4 25h1.2v1.2h-1.2zM37.7 24.7h1.6v1.6h-1.6z"/><path fill="#e8a0e0" fill-opacity="0.9" d="M9.9 9.7h1.4v1.4h-1.4zM61.9 27.5h0.9v0.9h-0.9zM48.3 26.1h0.9v0.9h-0.9zM46.1 22h1.2v1.2h-1.2z"/><path fill="#e8a0e0" fill-opacity="1" d="M6.8 17.6h0.9v0.9h-0.9zM27.5 22.8h1.4v1.4h-1.4zM18.8 29h1.4v1.4h-1.4z"/><path fill="#4a9ae8" fill-opacity="1" d="M22 22.6h1.8v1.8h-1.8zM23.2 22.7a1.5 1.5 0 1 0 3 0a1.5 1.5 0 1 0 -3 0zM26.1 24h0.9v0.9h-0.9zM31.1 22.4h0.9v0.9h-0.9zM35.6 22.2h0.9v0.9h-0.9zM12 25h1.6v1.6h-1.6zM12.5 25.7h1.8v1.8h-1.8zM10.7 29.1h1.6v1.6h-1.6zM17.2 26.3h0.9v0.9h-0.9zM34.3 30.6h1.2v1.2h-1.2z"/><path fill="#38b060" fill-opacity="0.75" d="M39.8 24.5h0.9v0.9h-0.9zM33.1 20.8h2.1v2.1h-2.1zM54 22.4h2.1v2.1h-2.1zM64.6 26.8h1.4v1.4h-1.4z"/><path fill="#a070e0" fill-opacity="0.75" d="M18.5 25.7a1.5 1.5 0 1 0 3 0a1.5 1.5 0 1 0 -3 0zM39 24.8h1.4v1.4h-1.4zM21.8 25.5h2.1v2.1h-2.1zM17.4 24.1h0.9v0.9h-0.9zM25.6 25.9h1.1v1.1h-1.1zM11.5 27.4h2.1v2.1h-2.1z"/><path fill="#f4d040" fill-opacity="1" d="M25.9 26.3h2.1v2.1h-2.1zM17 25.5h1.4v1.4h-1.4zM55.1 26.6h0.9v0.9h-0.9zM14.9 28.7h1.4v1.4h-1.4z"/><path fill="#5ab8f0" fill-opacity="0.9" d="M28.6 26.3h1.8v1.8h-1.8zM42.5 27.2h1.8v1.8h-1.8zM49.2 25.9h1.2v1.2h-1.2z"/><path fill="#5050d8" fill-opacity="1" d="M18.6 23.8h1.2v1.2h-1.2zM22.7 24.5h1.8v1.8h-1.8zM45.5 29h1.4v1.4h-1.4zM28.7 35.2h1.1v1.1h-1.1z"/><path fill="#38b060" fill-opacity="0.9" d="M19.5 25.7h1.4v1.4h-1.4zM65.1 26.8h1.6v1.6h-1.6zM46.3 28.4h1.2v1.2h-1.2z"/><path fill="#f0c228" fill-opacity="0.9" d="M29.2 21.9h2.1v2.1h-2.1zM34.3 25.5a1.5 1.5 0 1 0 3 0a1.5 1.5 0 1 0 -3 0zM37.8 24.1h1.6v1.6h-1.6zM48.1 24.6h2.1v2.1h-2.1z"/><path fill="#f4a020" fill-opacity="0.75" d="M33.5 24.1h1.2v1.2h-1.2z"/><path fill="#5ab8f0" fill-opacity="0.75" d="M9.5 26.3a1.5 1.5 0 1 0 3 0a1.5 1.5 0 1 0 -3 0z"/></g></g><polygon points="0.8,0.95 67.9,0.95 0.8,38.8" fill="url(#gl32)"/><rect x="0.8" y="0.95" width="67.1" height="0.8" fill="#fff" fill-opacity="0.07"/><rect x="0.8" y="0.95" width="0.7" height="36.8" fill="#fff" fill-opacity="0.05"/></g></g></svg></div><div class="lb" style="left:-0.3px"><span style="top:642.1px;letter-spacing:-0.09px">Flower Elements</span><span style="top:660.1px;letter-spacing:-0.07px">1.mov</span></div>
<div class="ic" style="left:161px;top:569px"><svg width="68.4" height="53" viewBox="0 0 68.4 53" ><g transform="translate(0.74,0.9)"><defs><linearGradient id="gl33" gradientUnits="userSpaceOnUse" x1="0" y1="0" x2="68" y2="14"><stop offset="0" stop-color="#fff" stop-opacity="0.26"/><stop offset="0.5" stop-color="#fff" stop-opacity="0.17"/><stop offset="1" stop-color="#fff" stop-opacity="0.07"/></linearGradient><clipPath id="cp33"><rect x="-0.35" y="7.14" width="69.3" height="40.03"/></clipPath><filter id="bl33" x="-5%" y="-5%" width="110%" height="110%"><feGaussianBlur stdDeviation="0.35"/></filter></defs><g transform="translate(0,0)"><rect x="-0.4" y="0.3" width="69.2" height="54.0" fill="#000" fill-opacity="0.25"/><rect x="0" y="0" width="68.4" height="52.8" fill="#000"/><g clip-path="url(#cp33)"><g filter="url(#bl33)" transform="translate(-0.35,0.555) scale(1.019,1.0135)"><path fill="#52a8f0" fill-opacity="0.75" d="M12.2 27.7h1.6v1.6h-1.6zM17.2 27.8h2.1v2.1h-2.1zM12 24.4h1.1v1.1h-1.1zM7.5 26h1.8v1.8h-1.8zM18.5 24.5h1.4v1.4h-1.4zM40.9 29.9h1.2v1.2h-1.2zM42.1 21.8a1.5 1.5 0 1 0 3 0a1.5 1.5 0 1 0 -3 0zM34 22.2h1.4v1.4h-1.4zM43.8 36.1h2.1v2.1h-2.1zM37 35.2h1.8v1.8h-1.8zM44.4 38.6a1.5 1.5 0 1 0 3 0a1.5 1.5 0 1 0 -3 0zM-0.6 42.7h0.9v0.9h-0.9zM4.5 44.2a1.5 1.5 0 1 0 3 0a1.5 1.5 0 1 0 -3 0zM3.8 44.4a1.5 1.5 0 1 0 3 0a1.5 1.5 0 1 0 -3 0zM52 33.1h0.9v0.9h-0.9zM49.9 34.5a1.5 1.5 0 1 0 3 0a1.5 1.5 0 1 0 -3 0zM49.6 38.7h0.9v0.9h-0.9z"/><path fill="#e8a0e0" fill-opacity="1" d="M15.7 29.5h1.1v1.1h-1.1zM44.6 19.9h1.6v1.6h-1.6zM53.6 13.7h1.8v1.8h-1.8z"/><path fill="#f0c228" fill-opacity="0.6" d="M16.5 28.8h1.4v1.4h-1.4zM-1.4 28.3h1.1v1.1h-1.1zM54.8 21.4h1.6v1.6h-1.6zM38.8 17.4h1.6v1.6h-1.6zM58.4 10.4h1.2v1.2h-1.2zM53.8 14.9a1.5 1.5 0 1 0 3 0a1.5 1.5 0 1 0 -3 0zM28 39.7h1.4v1.4h-1.4zM33.4 37h2.1v2.1h-2.1zM49.4 39h0.9v0.9h-0.9zM45.8 29.1h1.1v1.1h-1.1z"/><path fill="#52a8f0" fill-opacity="1" d="M2 25.6h2.1v2.1h-2.1zM10.8 28.4h1.8v1.8h-1.8zM13.1 28h2.1v2.1h-2.1zM43.4 22.3a1.5 1.5 0 1 0 3 0a1.5 1.5 0 1 0 -3 0zM42.1 23.8h1.6v1.6h-1.6zM37.6 25.4h2.1v2.1h-2.1zM47.6 20.9h2.1v2.1h-2.1zM39.3 20.8h1.6v1.6h-1.6zM29.7 26.8h1.2v1.2h-1.2zM47.7 20.3h1.8v1.8h-1.8zM49.9 25.5h1.1v1.1h-1.1zM25.1 39.8h1.2v1.2h-1.2z"/><path fill="#5050d8" fill-opacity="0.75" d="M2.3 25.4h0.9v0.9h-0.9zM14.2 27.6h1.8v1.8h-1.8zM23.1 42a1.5 1.5 0 1 0 3 0a1.5 1.5 0 1 0 -3 0z"/><path fill="#52a8f0" fill-opacity="0.9" d="M11.4 26.3h1.2v1.2h-1.2zM16 29.3h1.2v1.2h-1.2zM44.5 22.4h1.1v1.1h-1.1zM58.8 27.7a1.5 1.5 0 1 0 3 0a1.5 1.5 0 1 0 -3 0zM28.2 17.9a1.5 1.5 0 1 0 3 0a1.5 1.5 0 1 0 -3 0zM33.2 40h1.6v1.6h-1.6zM24.6 38.2h1.4v1.4h-1.4z"/><path fill="#4a9ae8" fill-opacity="0.9" d="M18.8 29.9h1.8v1.8h-1.8zM-0.3 28.4h1.2v1.2h-1.2zM14.5 31.3h2.1v2.1h-2.1zM9 26.9h0.9v0.9h-0.9zM11.9 31a1.5 1.5 0 1 0 3 0a1.5 1.5 0 1 0 -3 0zM45.2 20.7h1.4v1.4h-1.4zM46.3 19.6a1.5 1.5 0 1 0 3 0a1.5 1.5 0 1 0 -3 0zM50.8 21.4a1.5 1.5 0 1 0 3 0a1.5 1.5 0 1 0 -3 0zM48.9 25.1h1.1v1.1h-1.1zM48.5 21.8h1.6v1.6h-1.6zM39.2 27.8h1.2v1.2h-1.2zM51.2 10.4h1.2v1.2h-1.2zM53.4 16.3h1.2v1.2h-1.2zM64 26.6h0.9v0.9h-0.9zM64.4 22.9a1.5 1.5 0 1 0 3 0a1.5 1.5 0 1 0 -3 0zM25.3 14.9h1.1v1.1h-1.1zM28.3 16.7h1.4v1.4h-1.4zM25.3 40.6h1.2v1.2h-1.2zM24.2 41.5h1.4v1.4h-1.4zM26.6 40h1.6v1.6h-1.6zM31 40.3h1.6v1.6h-1.6zM45.7 33.6h1.8v1.8h-1.8zM50.6 31.5h1.4v1.4h-1.4zM47.7 36.3h1.6v1.6h-1.6z"/><path fill="#2f6fd0" fill-opacity="0.6" d="M18 25.5h1.1v1.1h-1.1zM17.4 30.9h1.4v1.4h-1.4zM7.5 26.4h1.8v1.8h-1.8zM23 25.2h0.9v0.9h-0.9zM52.6 16.9h1.4v1.4h-1.4zM50.4 21.8h2.1v2.1h-2.1zM46.2 26.3h1.8v1.8h-1.8zM63 13.4h0.9v0.9h-0.9zM58.8 8.6h1.1v1.1h-1.1zM35.2 37.4h1.1v1.1h-1.1zM17.2 41.9h2.1v2.1h-2.1z"/><path fill="#e8a0e0" fill-opacity="0.75" d="M-0.1 25.6h1.8v1.8h-1.8zM13.9 31.1h1.1v1.1h-1.1zM38.8 26.7h2.1v2.1h-2.1zM34.1 14.7h1.1v1.1h-1.1zM27.7 14.7h1.2v1.2h-1.2z"/><path fill="#5050d8" fill-opacity="0.9" d="M12.7 27.6h1.4v1.4h-1.4zM11.7 27.1h1.6v1.6h-1.6zM54.9 14.9h1.2v1.2h-1.2zM47 33.2h1.8v1.8h-1.8z"/><path fill="#2f6fd0" fill-opacity="0.9" d="M28.2 29.4h1.1v1.1h-1.1zM7.1 28.2a1.5 1.5 0 1 0 3 0a1.5 1.5 0 1 0 -3 0zM37.3 22.2a1.5 1.5 0 1 0 3 0a1.5 1.5 0 1 0 -3 0zM56.4 16h1.1v1.1h-1.1zM57.4 25.3a1.5 1.5 0 1 0 3 0a1.5 1.5 0 1 0 -3 0zM27.2 41.8h1.2v1.2h-1.2zM5.9 44.5h1.4v1.4h-1.4z"/><path fill="#a070e0" fill-opacity="0.75" d="M14.8 30.3h1.1v1.1h-1.1zM18.4 28.5h0.9v0.9h-0.9zM34.4 27.2h1.8v1.8h-1.8zM34 37.3h1.2v1.2h-1.2zM20.1 37.9h1.8v1.8h-1.8z"/><path fill="#e04434" fill-opacity="0.9" d="M24 29h1.4v1.4h-1.4zM26 28.9h1.1v1.1h-1.1zM4.1 25.3h1.4v1.4h-1.4zM41.3 20.5h1.8v1.8h-1.8zM49.8 15.9a1.5 1.5 0 1 0 3 0a1.5 1.5 0 1 0 -3 0zM56.4 12.6h0.9v0.9h-0.9zM32.3 39.2h0.9v0.9h-0.9zM21.5 40.6h1.6v1.6h-1.6zM23.2 39.3h1.6v1.6h-1.6zM3.3 42.6h1.2v1.2h-1.2zM49.1 31.9h2.1v2.1h-2.1zM49.1 34.9h2.1v2.1h-2.1z"/><path fill="#3f8fe0" fill-opacity="0.9" d="M20.7 25.7h1.4v1.4h-1.4zM-0.9 30.9a1.5 1.5 0 1 0 3 0a1.5 1.5 0 1 0 -3 0zM18.5 31.1a1.5 1.5 0 1 0 3 0a1.5 1.5 0 1 0 -3 0zM18.3 26.5h1.4v1.4h-1.4zM15.7 30.4h2.1v2.1h-2.1zM9 25.6h1.1v1.1h-1.1zM53.1 22.4h1.4v1.4h-1.4zM40.1 27.4h1.8v1.8h-1.8zM34.9 21.9h1.1v1.1h-1.1zM36.7 26.6h1.2v1.2h-1.2zM41 27.2h1.1v1.1h-1.1zM49.6 19h1.2v1.2h-1.2zM34.7 28.8h0.9v0.9h-0.9zM49.8 21.8h1.2v1.2h-1.2zM41.2 27.5h1.4v1.4h-1.4zM41.2 23h0.9v0.9h-0.9zM38.9 25.6h1.8v1.8h-1.8zM36.8 22.2h0.9v0.9h-0.9zM30.5 28.7h1.1v1.1h-1.1zM46.8 16a1.5 1.5 0 1 0 3 0a1.5 1.5 0 1 0 -3 0zM52.2 12.2h1.8v1.8h-1.8zM62.8 15.6h1.2v1.2h-1.2zM61.3 26.7h2.1v2.1h-2.1zM66.2 24.3a1.5 1.5 0 1 0 3 0a1.5 1.5 0 1 0 -3 0zM31.8 13.8a1.5 1.5 0 1 0 3 0a1.5 1.5 0 1 0 -3 0zM30.6 10.9h1.1v1.1h-1.1zM31.4 13.6h1.6v1.6h-1.6zM29.1 36.2h2.1v2.1h-2.1zM31.1 40.7h1.1v1.1h-1.1zM32.9 39.4a1.5 1.5 0 1 0 3 0a1.5 1.5 0 1 0 -3 0zM6.3 42.7h1.8v1.8h-1.8zM51.7 37.2h1.4v1.4h-1.4zM50.9 29.5h2.1v2.1h-2.1z"/><path fill="#38b060" fill-opacity="1" d="M20.8 31.7h1.6v1.6h-1.6zM11.6 30.8h1.2v1.2h-1.2zM39 24.6h1.4v1.4h-1.4zM48.6 21.8h1.2v1.2h-1.2zM54.3 15.1a1.5 1.5 0 1 0 3 0a1.5 1.5 0 1 0 -3 0zM64.1 25.8h1.2v1.2h-1.2zM50.3 31.2h1.2v1.2h-1.2z"/><path fill="#3f8fe0" fill-opacity="1" d="M19.5 27.5h1.4v1.4h-1.4zM13.7 30.2h1.1v1.1h-1.1zM22.1 24.6h1.2v1.2h-1.2zM15.2 28.1h1.1v1.1h-1.1zM7.9 28h0.9v0.9h-0.9zM5.7 29.5h1.6v1.6h-1.6zM14.4 31.8h1.4v1.4h-1.4zM6.5 28.6a1.5 1.5 0 1 0 3 0a1.5 1.5 0 1 0 -3 0zM49.4 21.8a1.5 1.5 0 1 0 3 0a1.5 1.5 0 1 0 -3 0zM33.5 24.2h1.8v1.8h-1.8zM49.5 21.4a1.5 1.5 0 1 0 3 0a1.5 1.5 0 1 0 -3 0zM37.9 25.9h1.8v1.8h-1.8zM41.3 23.8h1.8v1.8h-1.8zM36.2 28.9h1.2v1.2h-1.2zM28.3 23.3h1.6v1.6h-1.6zM54.3 17.7h1.8v1.8h-1.8zM29 25.4h1.8v1.8h-1.8zM61.6 22.1h1.6v1.6h-1.6zM26.5 18.1h2.1v2.1h-2.1zM27.5 20.6h0.9v0.9h-0.9zM20.7 40.6h0.9v0.9h-0.9zM39.1 38.7a1.5 1.5 0 1 0 3 0a1.5 1.5 0 1 0 -3 0zM29.7 42h1.8v1.8h-1.8zM33.3 37.1h1.4v1.4h-1.4zM34.1 40.2a1.5 1.5 0 1 0 3 0a1.5 1.5 0 1 0 -3 0zM8.2 44.6h1.1v1.1h-1.1zM2.8 44.9a1.5 1.5 0 1 0 3 0a1.5 1.5 0 1 0 -3 0zM43.1 35.5a1.5 1.5 0 1 0 3 0a1.5 1.5 0 1 0 -3 0zM52.1 35h1.8v1.8h-1.8zM47.3 31.7h1.6v1.6h-1.6z"/><path fill="#3f8fe0" fill-opacity="0.75" d="M15.4 29h1.1v1.1h-1.1zM16.9 29.5h1.8v1.8h-1.8zM28.3 32.6h0.9v0.9h-0.9zM9.7 32.2a1.5 1.5 0 1 0 3 0a1.5 1.5 0 1 0 -3 0zM23.9 29.6h1.1v1.1h-1.1zM9.1 27.7h1.8v1.8h-1.8zM25.6 28.8h1.4v1.4h-1.4zM9.9 26.3h1.8v1.8h-1.8zM13.6 27.5a1.5 1.5 0 1 0 3 0a1.5 1.5 0 1 0 -3 0zM14 30.6h1.1v1.1h-1.1zM5 28.8h2.1v2.1h-2.1zM41.9 20.7h1.6v1.6h-1.6zM42.5 26.8h1.6v1.6h-1.6zM52.6 22.7h0.9v0.9h-0.9zM45.6 28.7a1.5 1.5 0 1 0 3 0a1.5 1.5 0 1 0 -3 0zM42.7 23.6h2.1v2.1h-2.1zM55.5 18.9a1.5 1.5 0 1 0 3 0a1.5 1.5 0 1 0 -3 0zM44.9 26.7h1.2v1.2h-1.2zM31.4 23.8h1.8v1.8h-1.8zM42.1 31.6a1.5 1.5 0 1 0 3 0a1.5 1.5 0 1 0 -3 0zM44.1 25h1.4v1.4h-1.4zM43.8 18.1h1.6v1.6h-1.6zM51.5 19h1.8v1.8h-1.8zM56.1 18.4h2.1v2.1h-2.1zM39.4 18.6h1.1v1.1h-1.1zM50.3 22.2h0.9v0.9h-0.9zM55.8 14.3h1.4v1.4h-1.4zM57 12.9h1.2v1.2h-1.2zM58.2 10h2.1v2.1h-2.1zM61.2 20.5h2.1v2.1h-2.1zM23.5 18.8h1.2v1.2h-1.2zM32.9 12.9a1.5 1.5 0 1 0 3 0a1.5 1.5 0 1 0 -3 0zM23 10.3h1.4v1.4h-1.4zM25.7 13h1.8v1.8h-1.8zM29.9 14.3h0.9v0.9h-0.9zM27.2 39h2.1v2.1h-2.1zM41 37.1h1.2v1.2h-1.2zM37.3 39.5a1.5 1.5 0 1 0 3 0a1.5 1.5 0 1 0 -3 0zM25 40.2h1.1v1.1h-1.1zM45.9 34.2h0.9v0.9h-0.9zM43.8 33h1.4v1.4h-1.4zM54 30.3h1.1v1.1h-1.1z"/><path fill="#2f6fd0" fill-opacity="1" d="M15.7 26.4h1.1v1.1h-1.1zM19.3 29.8h2.1v2.1h-2.1zM50 19.6h1.1v1.1h-1.1zM32.8 27.1h1.6v1.6h-1.6zM52.7 23.3h1.4v1.4h-1.4zM46.9 19.9a1.5 1.5 0 1 0 3 0a1.5 1.5 0 1 0 -3 0zM61.6 24.3h1.4v1.4h-1.4zM58.3 23.9h0.9v0.9h-0.9zM32.7 39.9a1.5 1.5 0 1 0 3 0a1.5 1.5 0 1 0 -3 0zM40.2 38.2h1.2v1.2h-1.2zM34.7 38.5h0.9v0.9h-0.9z"/><path fill="#f080c0" fill-opacity="0.6" d="M6.4 26.2h1.6v1.6h-1.6zM10.1 27.7h1.2v1.2h-1.2zM38 31.6h1.6v1.6h-1.6zM32.1 15.2h2.1v2.1h-2.1zM37.7 39h1.1v1.1h-1.1zM53.6 33.7h1.6v1.6h-1.6z"/><path fill="#a070e0" fill-opacity="0.9" d="M14.6 25.9h0.9v0.9h-0.9zM23 30.4h1.8v1.8h-1.8zM48.1 14.6h1.4v1.4h-1.4zM41 23.1h1.6v1.6h-1.6zM51.2 13.4h0.9v0.9h-0.9z"/><path fill="#f4a020" fill-opacity="0.9" d="M9.5 27.9h1.8v1.8h-1.8zM42.6 16h1.8v1.8h-1.8zM63.3 21.8h1.1v1.1h-1.1zM26.7 10.4h1.2v1.2h-1.2zM33.3 39.3h1.8v1.8h-1.8z"/><path fill="#f0c228" fill-opacity="1" d="M11.6 25.7h1.8v1.8h-1.8zM16 32.2h1.8v1.8h-1.8zM28.3 31.7h1.1v1.1h-1.1zM37.8 28.6h1.6v1.6h-1.6zM33.1 17a1.5 1.5 0 1 0 3 0a1.5 1.5 0 1 0 -3 0zM32 37.2h1.1v1.1h-1.1zM27.5 39.2h1.8v1.8h-1.8z"/><path fill="#52a8f0" fill-opacity="0.6" d="M12.8 28.4h0.9v0.9h-0.9zM13.1 30.5h2.1v2.1h-2.1zM13.6 25.8h2.1v2.1h-2.1zM47.1 14.7h1.1v1.1h-1.1zM45.2 28.3a1.5 1.5 0 1 0 3 0a1.5 1.5 0 1 0 -3 0zM62.8 26.9h1.8v1.8h-1.8zM64.5 23h1.8v1.8h-1.8zM53.5 24.6a1.5 1.5 0 1 0 3 0a1.5 1.5 0 1 0 -3 0zM24.2 14.7h1.6v1.6h-1.6zM45.5 38.3h1.1v1.1h-1.1zM32.7 39.6h1.8v1.8h-1.8zM46.7 38.7a1.5 1.5 0 1 0 3 0a1.5 1.5 0 1 0 -3 0z"/><path fill="#f0c228" fill-opacity="0.75" d="M26 27.1h1.1v1.1h-1.1zM60.5 26.7h1.6v1.6h-1.6zM11.9 44.1h2.1v2.1h-2.1zM46 37.9a1.5 1.5 0 1 0 3 0a1.5 1.5 0 1 0 -3 0zM49.7 32.2h2.1v2.1h-2.1z"/><path fill="#38b060" fill-opacity="0.9" d="M7.5 32.6h0.9v0.9h-0.9zM35.3 27.6h2.1v2.1h-2.1zM44.5 21.7h1.1v1.1h-1.1zM24.7 38.6h0.9v0.9h-0.9z"/><path fill="#3f8fe0" fill-opacity="0.6" d="M22.6 30.3h1.2v1.2h-1.2zM7.3 23.7h1.8v1.8h-1.8zM17.5 27.3h1.6v1.6h-1.6zM10.9 26.7h1.4v1.4h-1.4zM19.2 30.8a1.5 1.5 0 1 0 3 0a1.5 1.5 0 1 0 -3 0zM7.5 28h1.8v1.8h-1.8zM43.2 21h1.6v1.6h-1.6zM43.5 24.7h1.4v1.4h-1.4zM33.6 25.2h1.6v1.6h-1.6zM48.3 20.1a1.5 1.5 0 1 0 3 0a1.5 1.5 0 1 0 -3 0zM53.8 18.8h2.1v2.1h-2.1zM40.3 26.3a1.5 1.5 0 1 0 3 0a1.5 1.5 0 1 0 -3 0zM55 12.1h1.2v1.2h-1.2zM60.6 10.7h2.1v2.1h-2.1zM54.2 15.2h1.8v1.8h-1.8zM61.4 21.3h0.9v0.9h-0.9zM64.1 22.4h2.1v2.1h-2.1zM61.3 19.8h1.8v1.8h-1.8zM36 40.8h1.6v1.6h-1.6zM48.8 32.4h2.1v2.1h-2.1zM49.9 36.4a1.5 1.5 0 1 0 3 0a1.5 1.5 0 1 0 -3 0z"/><path fill="#e04434" fill-opacity="0.75" d="M15.2 28h1.1v1.1h-1.1zM16.6 31.3h2.1v2.1h-2.1zM33.7 22.9h1.4v1.4h-1.4zM48.3 18.9h1.6v1.6h-1.6zM44.8 25h1.6v1.6h-1.6zM32.1 41.4h1.4v1.4h-1.4zM21.9 38.2h1.1v1.1h-1.1z"/><path fill="#e8a0e0" fill-opacity="0.6" d="M-1.6 30.1h1.4v1.4h-1.4zM53 19.6h1.6v1.6h-1.6zM50 15.2h1.6v1.6h-1.6zM50.6 13.4a1.5 1.5 0 1 0 3 0a1.5 1.5 0 1 0 -3 0zM32.4 18.2h1.8v1.8h-1.8zM21.4 42.4h1.4v1.4h-1.4z"/><path fill="#2f6fd0" fill-opacity="0.75" d="M10.2 26.2h1.6v1.6h-1.6zM18.6 26.3h1.2v1.2h-1.2zM50 18.2h2.1v2.1h-2.1zM48.2 21.3h1.2v1.2h-1.2zM53.9 20.6h2.1v2.1h-2.1zM43.7 19.9h1.8v1.8h-1.8zM62.7 20.2h1.1v1.1h-1.1zM31.3 39.7h1.1v1.1h-1.1zM5.6 42.4h2.1v2.1h-2.1zM53 34.7h1.2v1.2h-1.2zM64 14h2.1v2.1h-2.1z"/><path fill="#5050d8" fill-opacity="0.6" d="M10.3 26.2h1.8v1.8h-1.8zM13.7 31.9h0.9v0.9h-0.9zM6.2 24.8h0.9v0.9h-0.9zM37.1 27.3h2.1v2.1h-2.1zM60.9 21.8h1.8v1.8h-1.8zM5.3 43.2h0.9v0.9h-0.9zM50.6 33.2h0.9v0.9h-0.9z"/><path fill="#a070e0" fill-opacity="0.6" d="M10.1 28.9h1.6v1.6h-1.6zM40.1 24.3h1.4v1.4h-1.4zM66.8 24.4a1.5 1.5 0 1 0 3 0a1.5 1.5 0 1 0 -3 0zM19.4 16.9h1.2v1.2h-1.2zM23.7 37.8h2.1v2.1h-2.1zM38.7 39h1.6v1.6h-1.6zM8.8 44.3a1.5 1.5 0 1 0 3 0a1.5 1.5 0 1 0 -3 0z"/><path fill="#f080c0" fill-opacity="1" d="M8.8 27.3a1.5 1.5 0 1 0 3 0a1.5 1.5 0 1 0 -3 0zM4.1 24.8h2.1v2.1h-2.1zM8.8 42.8h2.1v2.1h-2.1z"/><path fill="#4a9ae8" fill-opacity="0.75" d="M20.4 29.8h0.9v0.9h-0.9zM17.9 33h1.8v1.8h-1.8zM1.3 28.2h0.9v0.9h-0.9zM31.7 28.9h1.6v1.6h-1.6zM34.2 25.5a1.5 1.5 0 1 0 3 0a1.5 1.5 0 1 0 -3 0zM31.9 23.9h1.4v1.4h-1.4zM52.5 13.5h1.8v1.8h-1.8zM25.3 11.8h1.6v1.6h-1.6zM23 39.2h2.1v2.1h-2.1zM52 35.1h2.1v2.1h-2.1z"/><path fill="#5050d8" fill-opacity="1" d="M8.8 24.7h1.8v1.8h-1.8zM2.5 22.7h1.8v1.8h-1.8zM13.7 23.9h1.6v1.6h-1.6zM17.5 27h0.9v0.9h-0.9zM-1.8 27.7h1.6v1.6h-1.6zM36.5 24.4h1.4v1.4h-1.4zM55 10.5h1.2v1.2h-1.2zM52.7 17.9h1.8v1.8h-1.8zM59.8 25.2h1.2v1.2h-1.2z"/><path fill="#f4a020" fill-opacity="1" d="M14.4 27.9h1.8v1.8h-1.8zM16.8 28.1h1.2v1.2h-1.2zM47.9 23.6h1.4v1.4h-1.4zM48.4 18.3h1.2v1.2h-1.2zM66.1 14h1.6v1.6h-1.6z"/><path fill="#f4d040" fill-opacity="0.75" d="M14.5 27.6h0.9v0.9h-0.9zM56.2 22.2h1.4v1.4h-1.4zM52 31.3h1.4v1.4h-1.4z"/><path fill="#4a9ae8" fill-opacity="1" d="M26.4 24.9h1.6v1.6h-1.6zM28.2 29.7h1.4v1.4h-1.4zM34.3 29.1h1.8v1.8h-1.8zM48.7 14.9h2.1v2.1h-2.1zM31.9 22.1h0.9v0.9h-0.9zM48.9 16.2h1.4v1.4h-1.4zM58 22h1.2v1.2h-1.2zM37 16.9h1.8v1.8h-1.8zM18.5 40.9h2.1v2.1h-2.1zM22.2 41.2a1.5 1.5 0 1 0 3 0a1.5 1.5 0 1 0 -3 0zM31.6 37.5a1.5 1.5 0 1 0 3 0a1.5 1.5 0 1 0 -3 0zM30.2 40.9h1.1v1.1h-1.1zM28.6 41.4h1.8v1.8h-1.8zM21.1 41.7h2.1v2.1h-2.1zM66.5 14.9h1.1v1.1h-1.1z"/><path fill="#f0c228" fill-opacity="0.9" d="M11.3 27h1.6v1.6h-1.6zM22.5 27.6a1.5 1.5 0 1 0 3 0a1.5 1.5 0 1 0 -3 0zM31.4 27a1.5 1.5 0 1 0 3 0a1.5 1.5 0 1 0 -3 0zM42.2 29.6a1.5 1.5 0 1 0 3 0a1.5 1.5 0 1 0 -3 0zM57.5 14.5h1.4v1.4h-1.4zM64.5 23.3h1.4v1.4h-1.4zM58.1 22a1.5 1.5 0 1 0 3 0a1.5 1.5 0 1 0 -3 0zM61.9 22.4h1.4v1.4h-1.4zM64 21.5h2.1v2.1h-2.1zM25.4 40h1.2v1.2h-1.2zM30.6 39.1h1.1v1.1h-1.1zM32.2 40.1h1.2v1.2h-1.2zM5.6 42.4h1.2v1.2h-1.2zM48.3 35.4h1.1v1.1h-1.1zM64.3 15.6h1.1v1.1h-1.1z"/><path fill="#f080c0" fill-opacity="0.75" d="M10 26.2h1.6v1.6h-1.6zM24.5 24.5h2.1v2.1h-2.1zM46.6 22.1h1.4v1.4h-1.4zM60.8 19.8h1.4v1.4h-1.4z"/><path fill="#f4a020" fill-opacity="0.75" d="M7.6 29.1a1.5 1.5 0 1 0 3 0a1.5 1.5 0 1 0 -3 0zM60.6 24h1.8v1.8h-1.8zM65.3 22.4h1.2v1.2h-1.2zM26.8 15.2h1.4v1.4h-1.4z"/><path fill="#f4d040" fill-opacity="1" d="M20.5 26.6h2.1v2.1h-2.1zM29.3 39.2h1.6v1.6h-1.6z"/><path fill="#5ab8f0" fill-opacity="0.9" d="M9.4 26.8h1.1v1.1h-1.1zM35.5 22.3a1.5 1.5 0 1 0 3 0a1.5 1.5 0 1 0 -3 0zM29.3 39.7h1.2v1.2h-1.2zM23.5 40a1.5 1.5 0 1 0 3 0a1.5 1.5 0 1 0 -3 0z"/><path fill="#38b060" fill-opacity="0.75" d="M6.8 30.3h2.1v2.1h-2.1zM43.7 26.2h1.1v1.1h-1.1zM56.8 23.6h0.9v0.9h-0.9zM40.1 17.3h1.1v1.1h-1.1zM51.4 13.5h1.6v1.6h-1.6zM45.6 33.1h1.4v1.4h-1.4z"/><path fill="#f4a020" fill-opacity="0.6" d="M47.4 18h1.1v1.1h-1.1zM48.3 20.6h1.8v1.8h-1.8z"/><path fill="#5ab8f0" fill-opacity="0.75" d="M51.1 19.6a1.5 1.5 0 1 0 3 0a1.5 1.5 0 1 0 -3 0zM42.9 30.8h1.6v1.6h-1.6zM51.9 19.3h1.4v1.4h-1.4zM62.6 24.9a1.5 1.5 0 1 0 3 0a1.5 1.5 0 1 0 -3 0zM24.2 40.4h2.1v2.1h-2.1z"/><path fill="#a070e0" fill-opacity="1" d="M34.1 28.9h1.6v1.6h-1.6zM39.9 25.5h1.8v1.8h-1.8zM43.8 28.3h0.9v0.9h-0.9zM48.6 18.2a1.5 1.5 0 1 0 3 0a1.5 1.5 0 1 0 -3 0zM28.2 15.7h1.8v1.8h-1.8zM40.7 38.1h0.9v0.9h-0.9zM21.1 40h1.6v1.6h-1.6z"/><path fill="#e04434" fill-opacity="1" d="M31.6 28.4a1.5 1.5 0 1 0 3 0a1.5 1.5 0 1 0 -3 0zM50 16h0.9v0.9h-0.9zM57.6 22h1.6v1.6h-1.6zM40.8 24.5h1.4v1.4h-1.4zM30.6 15.2h1.2v1.2h-1.2zM28.6 37.7h1.8v1.8h-1.8zM4.7 44.2h1.2v1.2h-1.2zM4.1 43h1.8v1.8h-1.8z"/><path fill="#f4d040" fill-opacity="0.9" d="M40.1 21.2h1.8v1.8h-1.8zM49.1 35.1h1.4v1.4h-1.4z"/><path fill="#4a9ae8" fill-opacity="0.6" d="M36.5 26.5h2.1v2.1h-2.1zM47.3 25.4a1.5 1.5 0 1 0 3 0a1.5 1.5 0 1 0 -3 0zM49.1 13h2.1v2.1h-2.1zM56.1 10.4h1.1v1.1h-1.1zM38.9 36.1h2.1v2.1h-2.1zM22.2 43.3h1.6v1.6h-1.6z"/><path fill="#e04434" fill-opacity="0.6" d="M41.9 23.3h1.4v1.4h-1.4zM43 20h2.1v2.1h-2.1zM31.6 26.2h1.1v1.1h-1.1zM44.9 18.1h1.8v1.8h-1.8zM62.7 12.9h1.1v1.1h-1.1zM58.2 11.3h1.8v1.8h-1.8zM29.9 39.3h1.8v1.8h-1.8zM51.4 34.5h1.1v1.1h-1.1z"/><path fill="#e8a0e0" fill-opacity="0.9" d="M44.3 21h2.1v2.1h-2.1zM48.3 24.1h1.4v1.4h-1.4zM5.9 44.3h1.8v1.8h-1.8z"/><path fill="#38b060" fill-opacity="0.6" d="M32.9 30.6h2.1v2.1h-2.1zM60.6 24h1.4v1.4h-1.4zM30.6 41.6h1.4v1.4h-1.4zM20.6 42.8a1.5 1.5 0 1 0 3 0a1.5 1.5 0 1 0 -3 0zM21.4 39.8h1.6v1.6h-1.6z"/><path fill="#5ab8f0" fill-opacity="0.6" d="M64.3 21.2h1.1v1.1h-1.1zM37.1 40.3h1.6v1.6h-1.6z"/><path fill="#f080c0" fill-opacity="0.9" d="M29.6 18h1.8v1.8h-1.8z"/></g></g><polygon points="0.8,0.95 67.9,0.95 0.8,38.8" fill="url(#gl33)"/><rect x="0.8" y="0.95" width="67.1" height="0.8" fill="#fff" fill-opacity="0.07"/><rect x="0.8" y="0.95" width="0.7" height="36.8" fill="#fff" fill-opacity="0.05"/></g></g></svg></div><div class="lb" style="left:125.9px"><span style="top:642.1px;letter-spacing:-0.13px">Flower Elements</span><span style="top:660.1px;letter-spacing:0.18px">2.mov</span></div>
<div class="ic" style="left:288px;top:569px"><svg width="68.4" height="53" viewBox="0 0 68.4 53" ><g transform="translate(0.03,0.9)"><defs><linearGradient id="gl34" gradientUnits="userSpaceOnUse" x1="0" y1="0" x2="68" y2="14"><stop offset="0" stop-color="#fff" stop-opacity="0.26"/><stop offset="0.5" stop-color="#fff" stop-opacity="0.17"/><stop offset="1" stop-color="#fff" stop-opacity="0.07"/></linearGradient><clipPath id="cp34"><rect x="-0.35" y="7.14" width="69.3" height="40.03"/></clipPath><filter id="bl34" x="-5%" y="-5%" width="110%" height="110%"><feGaussianBlur stdDeviation="0.35"/></filter></defs><g transform="translate(0,0)"><rect x="-0.4" y="0.3" width="69.2" height="54.0" fill="#000" fill-opacity="0.25"/><rect x="0" y="0" width="68.4" height="52.8" fill="#000"/><g clip-path="url(#cp34)"><g filter="url(#bl34)" transform="translate(-0.35,0.555) scale(1.019,1.0135)"><path fill="#f0c228" fill-opacity="0.9" d="M21.1 37.3h1.2v1.2h-1.2zM19.4 42.2h1.6v1.6h-1.6zM5.4 39.6h1.2v1.2h-1.2zM14.9 42.2h1.4v1.4h-1.4zM7.9 34.7h0.9v0.9h-0.9zM10.9 7.5h1.8v1.8h-1.8zM29 30.1h1.6v1.6h-1.6zM32.7 37.9h1.8v1.8h-1.8zM50.6 9.5h1.4v1.4h-1.4z"/><path fill="#a070e0" fill-opacity="1" d="M5 28.2a1.5 1.5 0 1 0 3 0a1.5 1.5 0 1 0 -3 0zM5.1 31.3h1.8v1.8h-1.8zM42.6 35.6h1.1v1.1h-1.1zM35.8 39.1h1.1v1.1h-1.1z"/><path fill="#3f8fe0" fill-opacity="1" d="M9.7 36.6h1.1v1.1h-1.1zM12.7 38.4a1.5 1.5 0 1 0 3 0a1.5 1.5 0 1 0 -3 0zM24.1 34.4h1.8v1.8h-1.8zM11.7 35.8h1.4v1.4h-1.4zM13.7 40.6h0.9v0.9h-0.9zM13.1 30.7h1.8v1.8h-1.8zM17.9 38.6h2.1v2.1h-2.1zM13.3 39.4h1.8v1.8h-1.8zM20.9 38.3h1.2v1.2h-1.2zM7.6 36.6h2.1v2.1h-2.1zM6.6 27.3h0.9v0.9h-0.9zM8.6 41.2h1.4v1.4h-1.4zM16.5 33.7h1.1v1.1h-1.1zM12.8 9.4h1.8v1.8h-1.8zM3.7 15.5h1.8v1.8h-1.8zM1 16.7h0.9v0.9h-0.9zM7.7 14.1h1.1v1.1h-1.1zM33.5 17.9h1.6v1.6h-1.6zM30 23.9h1.1v1.1h-1.1zM31.9 16.2h1.4v1.4h-1.4zM32.9 38a1.5 1.5 0 1 0 3 0a1.5 1.5 0 1 0 -3 0zM32.3 33.8h0.9v0.9h-0.9zM35 30.4h1.2v1.2h-1.2zM32.8 37.6h1.1v1.1h-1.1zM39 38.7a1.5 1.5 0 1 0 3 0a1.5 1.5 0 1 0 -3 0zM27.8 38.6h1.8v1.8h-1.8zM42.1 13.9a1.5 1.5 0 1 0 3 0a1.5 1.5 0 1 0 -3 0zM55.1 10.2h1.4v1.4h-1.4zM48.1 12.4h1.4v1.4h-1.4zM51.7 14.9h0.9v0.9h-0.9zM51.4 22.2h0.9v0.9h-0.9zM51.4 23.4h1.4v1.4h-1.4zM53.6 25.8h1.4v1.4h-1.4zM58.3 36.2a1.5 1.5 0 1 0 3 0a1.5 1.5 0 1 0 -3 0z"/><path fill="#2f6fd0" fill-opacity="0.6" d="M5.1 32h1.2v1.2h-1.2zM12.4 35.1a1.5 1.5 0 1 0 3 0a1.5 1.5 0 1 0 -3 0zM8.5 34.9h0.9v0.9h-0.9zM13.6 38.7h1.1v1.1h-1.1zM11.1 31.9h1.1v1.1h-1.1zM6 23.3a1.5 1.5 0 1 0 3 0a1.5 1.5 0 1 0 -3 0zM26.9 22.3h1.6v1.6h-1.6zM32.3 32.9h2.1v2.1h-2.1z"/><path fill="#3f8fe0" fill-opacity="0.9" d="M13.8 36.1h0.9v0.9h-0.9zM17.4 43.5h1.8v1.8h-1.8zM10.1 32.5h0.9v0.9h-0.9zM4 35.7h1.6v1.6h-1.6zM12.2 42.3h0.9v0.9h-0.9zM5.1 39.2h1.6v1.6h-1.6zM20.8 36.4a1.5 1.5 0 1 0 3 0a1.5 1.5 0 1 0 -3 0zM21 29.4h1.2v1.2h-1.2zM10.9 45.2h1.6v1.6h-1.6zM12.7 34.6h0.9v0.9h-0.9zM6.6 32.8a1.5 1.5 0 1 0 3 0a1.5 1.5 0 1 0 -3 0zM12.3 33.4h1.4v1.4h-1.4zM9.7 28.8h2.1v2.1h-2.1zM10.7 35.8h1.8v1.8h-1.8zM12.8 38.8h1.8v1.8h-1.8zM16.5 36.7h1.1v1.1h-1.1zM12.6 34.2h1.1v1.1h-1.1zM3 17.1h1.4v1.4h-1.4zM3.6 17.2a1.5 1.5 0 1 0 3 0a1.5 1.5 0 1 0 -3 0zM9.4 16.7h1.1v1.1h-1.1zM24.3 16.7h1.2v1.2h-1.2zM25.5 17.8a1.5 1.5 0 1 0 3 0a1.5 1.5 0 1 0 -3 0zM25.6 20.5h0.9v0.9h-0.9zM39.6 14.3h1.8v1.8h-1.8zM40.5 32.5h1.8v1.8h-1.8zM25.2 44.1h1.6v1.6h-1.6zM26.7 35.7h1.1v1.1h-1.1zM41 37.7h2.1v2.1h-2.1zM50.7 15.6a1.5 1.5 0 1 0 3 0a1.5 1.5 0 1 0 -3 0zM44.1 8.5h2.1v2.1h-2.1zM47.4 13.2h1.6v1.6h-1.6zM50.5 29.6h1.1v1.1h-1.1zM48.9 24.2a1.5 1.5 0 1 0 3 0a1.5 1.5 0 1 0 -3 0zM48.6 30h1.2v1.2h-1.2z"/><path fill="#e8a0e0" fill-opacity="0.6" d="M11.1 37.5h1.1v1.1h-1.1zM16.7 39.9a1.5 1.5 0 1 0 3 0a1.5 1.5 0 1 0 -3 0zM14.6 29.3a1.5 1.5 0 1 0 3 0a1.5 1.5 0 1 0 -3 0zM17.3 11.3h1.4v1.4h-1.4zM44.8 11.8h1.8v1.8h-1.8z"/><path fill="#4a9ae8" fill-opacity="1" d="M18.6 39h1.8v1.8h-1.8zM9.9 44.4a1.5 1.5 0 1 0 3 0a1.5 1.5 0 1 0 -3 0zM11.7 40.7h1.8v1.8h-1.8zM13.8 30.2h1.4v1.4h-1.4zM14 33.8h1.4v1.4h-1.4zM14.9 16.3h2.1v2.1h-2.1zM7.5 20h0.9v0.9h-0.9zM9.4 13.3a1.5 1.5 0 1 0 3 0a1.5 1.5 0 1 0 -3 0zM3.7 14.3h1.8v1.8h-1.8zM24.8 15.3h2.1v2.1h-2.1zM39.4 20.3h1.1v1.1h-1.1zM40.7 20.9h1.6v1.6h-1.6zM31.5 23.6h1.4v1.4h-1.4zM22.5 24.9h2.1v2.1h-2.1zM62.4 13.3h1.2v1.2h-1.2zM36.7 10.2h0.9v0.9h-0.9zM47.9 17h1.1v1.1h-1.1zM44.8 21.5h2.1v2.1h-2.1zM59.2 36.7a1.5 1.5 0 1 0 3 0a1.5 1.5 0 1 0 -3 0z"/><path fill="#f080c0" fill-opacity="0.6" d="M8.7 37.9h1.1v1.1h-1.1zM2.3 32.8a1.5 1.5 0 1 0 3 0a1.5 1.5 0 1 0 -3 0zM23.3 32a1.5 1.5 0 1 0 3 0a1.5 1.5 0 1 0 -3 0zM38.2 42h1.6v1.6h-1.6zM24.7 37.5a1.5 1.5 0 1 0 3 0a1.5 1.5 0 1 0 -3 0zM37.7 44.6a1.5 1.5 0 1 0 3 0a1.5 1.5 0 1 0 -3 0zM43.7 13.2h1.2v1.2h-1.2z"/><path fill="#5ab8f0" fill-opacity="1" d="M7 45.1h1.8v1.8h-1.8zM11.9 38.3h0.9v0.9h-0.9zM10.1 32.6h2.1v2.1h-2.1zM-0.7 41.5h2.1v2.1h-2.1zM29.1 16.2h1.4v1.4h-1.4zM32.3 20.7h1.6v1.6h-1.6zM35.2 42.2a1.5 1.5 0 1 0 3 0a1.5 1.5 0 1 0 -3 0zM41.6 14.5h0.9v0.9h-0.9z"/><path fill="#4a9ae8" fill-opacity="0.75" d="M24.5 38.8h1.1v1.1h-1.1zM3.4 25.3h1.4v1.4h-1.4zM3.1 37.8h2.1v2.1h-2.1zM12.5 36.2h1.6v1.6h-1.6zM15.2 27h1.1v1.1h-1.1zM31.9 24.6a1.5 1.5 0 1 0 3 0a1.5 1.5 0 1 0 -3 0zM31.8 35.1h2.1v2.1h-2.1zM47.1 36.8h1.8v1.8h-1.8zM31.9 39.6a1.5 1.5 0 1 0 3 0a1.5 1.5 0 1 0 -3 0zM30.1 38.4h1.1v1.1h-1.1zM46.3 34.4a1.5 1.5 0 1 0 3 0a1.5 1.5 0 1 0 -3 0zM50.2 12h1.8v1.8h-1.8zM62.9 12.3h2.1v2.1h-2.1zM55.1 11.9h2.1v2.1h-2.1z"/><path fill="#e8a0e0" fill-opacity="0.9" d="M3.3 27.4h1.2v1.2h-1.2zM35.1 35.4h1.6v1.6h-1.6zM39.6 36.1a1.5 1.5 0 1 0 3 0a1.5 1.5 0 1 0 -3 0zM51.1 19.8a1.5 1.5 0 1 0 3 0a1.5 1.5 0 1 0 -3 0zM44.5 23.9h2.1v2.1h-2.1z"/><path fill="#3f8fe0" fill-opacity="0.6" d="M13.4 37.4h1.1v1.1h-1.1zM9.4 36.1h0.9v0.9h-0.9zM0.8 38a1.5 1.5 0 1 0 3 0a1.5 1.5 0 1 0 -3 0zM9.4 36.7h1.8v1.8h-1.8zM7.2 32.4h2.1v2.1h-2.1zM13.8 36.4h1.1v1.1h-1.1zM-1.4 28.4h0.9v0.9h-0.9zM15.3 37.2h1.6v1.6h-1.6zM15.6 31.8h2.1v2.1h-2.1zM-0.6 30.8h0.9v0.9h-0.9zM2.2 34.3h2.1v2.1h-2.1zM3 29.3h1.1v1.1h-1.1zM4.9 16.2a1.5 1.5 0 1 0 3 0a1.5 1.5 0 1 0 -3 0zM8.5 6.5h1.1v1.1h-1.1zM10.9 12.7h2.1v2.1h-2.1zM7.5 11.6h0.9v0.9h-0.9zM22.9 28.4h1.2v1.2h-1.2zM35.1 17.5h1.2v1.2h-1.2zM39.1 21.1h0.9v0.9h-0.9zM33.1 19.6h1.2v1.2h-1.2zM17.5 15.8h1.1v1.1h-1.1zM47.1 32.8h1.8v1.8h-1.8zM43 38.6h1.4v1.4h-1.4zM37.8 39h0.9v0.9h-0.9zM37.4 40.9h1.2v1.2h-1.2zM54.6 12.8h0.9v0.9h-0.9zM42.5 11.7h2.1v2.1h-2.1z"/><path fill="#e04434" fill-opacity="1" d="M12.7 36h1.4v1.4h-1.4zM10.1 36.9h1.2v1.2h-1.2zM17.7 45.1h1.6v1.6h-1.6zM5.6 19.6h1.2v1.2h-1.2zM28 15.2h1.4v1.4h-1.4z"/><path fill="#52a8f0" fill-opacity="1" d="M16.1 44.9h2.1v2.1h-2.1zM7.7 28.7h1.4v1.4h-1.4zM7.5 32.1h2.1v2.1h-2.1zM12.7 41.9h1.6v1.6h-1.6zM16 36.9a1.5 1.5 0 1 0 3 0a1.5 1.5 0 1 0 -3 0zM4.7 18.1h1.8v1.8h-1.8zM19.8 18h1.2v1.2h-1.2zM27.7 20.8h1.8v1.8h-1.8zM29.8 27.4h0.9v0.9h-0.9zM26.4 37.9a1.5 1.5 0 1 0 3 0a1.5 1.5 0 1 0 -3 0zM49.1 17.7h0.9v0.9h-0.9zM42.9 18.1h2.1v2.1h-2.1zM48.7 7.8h1.8v1.8h-1.8zM60.7 14.6h1.6v1.6h-1.6zM41.6 26.9h0.9v0.9h-0.9z"/><path fill="#3f8fe0" fill-opacity="0.75" d="M16 32.8h1.8v1.8h-1.8zM19.9 29.5h1.4v1.4h-1.4zM7.1 30.3a1.5 1.5 0 1 0 3 0a1.5 1.5 0 1 0 -3 0zM21.3 35.9h1.4v1.4h-1.4zM5.2 45.2h1.6v1.6h-1.6zM6.6 22h1.4v1.4h-1.4zM27.5 19.8h2.1v2.1h-2.1zM28.7 23.2h1.1v1.1h-1.1zM31.4 25.5h0.9v0.9h-0.9zM36.5 22a1.5 1.5 0 1 0 3 0a1.5 1.5 0 1 0 -3 0zM30 12.9h1.8v1.8h-1.8zM23.8 27.7h1.2v1.2h-1.2zM24 23.9h0.9v0.9h-0.9zM37.6 29.4h1.4v1.4h-1.4zM46.6 44.1h1.8v1.8h-1.8zM35.7 34.1h2.1v2.1h-2.1zM38.6 32.9h1.8v1.8h-1.8zM31 41.1h1.6v1.6h-1.6zM30.6 44.4h1.2v1.2h-1.2zM49.5 16.7h0.9v0.9h-0.9zM34.9 14.9h2.1v2.1h-2.1zM47.7 15.2h1.1v1.1h-1.1zM50.7 26.5h2.1v2.1h-2.1zM45.9 28.2h1.8v1.8h-1.8z"/><path fill="#5ab8f0" fill-opacity="0.6" d="M0.2 33.3h1.4v1.4h-1.4zM18.6 41a1.5 1.5 0 1 0 3 0a1.5 1.5 0 1 0 -3 0zM17.3 39.4a1.5 1.5 0 1 0 3 0a1.5 1.5 0 1 0 -3 0zM14.2 36.3h1.6v1.6h-1.6zM37.2 38.1h0.9v0.9h-0.9zM38 38.7h1.6v1.6h-1.6z"/><path fill="#52a8f0" fill-opacity="0.6" d="M13.9 24.9h2.1v2.1h-2.1zM12.7 34.5h1.1v1.1h-1.1zM21 33.4h1.4v1.4h-1.4zM7.8 14.8h1.1v1.1h-1.1zM10.9 16.1h1.1v1.1h-1.1zM30.8 24h0.9v0.9h-0.9zM29.5 16.6h1.8v1.8h-1.8zM33.8 31.9h1.8v1.8h-1.8zM27.8 37.1h1.2v1.2h-1.2zM54.8 19.4h0.9v0.9h-0.9zM46.2 30.3h1.2v1.2h-1.2zM46.1 23.8h0.9v0.9h-0.9z"/><path fill="#f0c228" fill-opacity="1" d="M6.9 33.5h1.2v1.2h-1.2zM2.9 37h1.4v1.4h-1.4zM18.2 40.2h0.9v0.9h-0.9zM5.5 37.8h0.9v0.9h-0.9zM14.9 8.4h1.1v1.1h-1.1zM8.4 18.3h1.6v1.6h-1.6zM31.8 18.8h1.1v1.1h-1.1zM21.1 27.3h1.8v1.8h-1.8zM31.8 16.2h1.8v1.8h-1.8zM27.3 31.9a1.5 1.5 0 1 0 3 0a1.5 1.5 0 1 0 -3 0zM49.1 14.6h1.2v1.2h-1.2z"/><path fill="#f080c0" fill-opacity="0.75" d="M15.6 38.3h1.2v1.2h-1.2zM15.4 26.1h1.6v1.6h-1.6zM21.1 21.7h1.1v1.1h-1.1zM33.4 44a1.5 1.5 0 1 0 3 0a1.5 1.5 0 1 0 -3 0zM60.7 15.8h1.1v1.1h-1.1z"/><path fill="#f4d040" fill-opacity="0.9" d="M-1.5 37.1h1.1v1.1h-1.1zM5.2 17.3h1.2v1.2h-1.2z"/><path fill="#f4d040" fill-opacity="0.75" d="M14.2 38.1h1.4v1.4h-1.4zM16.5 31.6h2.1v2.1h-2.1zM30.7 17.2h2.1v2.1h-2.1z"/><path fill="#38b060" fill-opacity="1" d="M9 42.4h1.6v1.6h-1.6zM32.8 41h1.6v1.6h-1.6zM46.2 24.2h1.2v1.2h-1.2z"/><path fill="#f080c0" fill-opacity="1" d="M16 35.4a1.5 1.5 0 1 0 3 0a1.5 1.5 0 1 0 -3 0zM15.4 35.5h0.9v0.9h-0.9zM2.5 17.3h0.9v0.9h-0.9zM30.3 18.7h2.1v2.1h-2.1zM30.6 35.2h1.2v1.2h-1.2zM33 33.3h1.8v1.8h-1.8z"/><path fill="#52a8f0" fill-opacity="0.75" d="M10.2 29.5h1.1v1.1h-1.1zM22.6 29.3h1.4v1.4h-1.4zM3.5 30.4h0.9v0.9h-0.9zM22.7 36.8h1.6v1.6h-1.6zM0.6 43h1.2v1.2h-1.2zM17.7 31.1a1.5 1.5 0 1 0 3 0a1.5 1.5 0 1 0 -3 0zM17.2 36.4h1.8v1.8h-1.8zM9 34.7h1.1v1.1h-1.1zM3.5 6.6h0.9v0.9h-0.9zM31.8 36.9h1.4v1.4h-1.4zM41.1 39.3h1.1v1.1h-1.1zM42 9.7h1.4v1.4h-1.4zM48.7 15.1a1.5 1.5 0 1 0 3 0a1.5 1.5 0 1 0 -3 0zM49.9 32.1h1.4v1.4h-1.4z"/><path fill="#f4a020" fill-opacity="0.6" d="M10.4 34.8h1.1v1.1h-1.1z"/><path fill="#f4a020" fill-opacity="0.75" d="M8.9 30h1.6v1.6h-1.6zM11.7 33.5h0.9v0.9h-0.9zM8.2 31.4h2.1v2.1h-2.1zM8.3 16.7a1.5 1.5 0 1 0 3 0a1.5 1.5 0 1 0 -3 0zM10.6 18.1h1.8v1.8h-1.8zM20.7 29.9h0.9v0.9h-0.9zM50.6 28.6h1.8v1.8h-1.8z"/><path fill="#f0c228" fill-opacity="0.6" d="M14.5 44.3h2.1v2.1h-2.1zM4.8 40.9h0.9v0.9h-0.9zM2.8 42.1a1.5 1.5 0 1 0 3 0a1.5 1.5 0 1 0 -3 0zM13.5 37.1h0.9v0.9h-0.9zM6.7 14.1h1.6v1.6h-1.6zM46.7 39.4h1.1v1.1h-1.1zM54.3 20a1.5 1.5 0 1 0 3 0a1.5 1.5 0 1 0 -3 0zM47.1 30.4h1.8v1.8h-1.8z"/><path fill="#52a8f0" fill-opacity="0.9" d="M12.5 36h1.4v1.4h-1.4zM13.9 34.6h1.6v1.6h-1.6zM33.6 14.6h2.1v2.1h-2.1zM47.2 40.7h1.6v1.6h-1.6zM24.4 42h1.1v1.1h-1.1zM52 14.6h2.1v2.1h-2.1zM50.2 32.7h1.2v1.2h-1.2zM52.6 22.3h2.1v2.1h-2.1zM62.3 36.3h1.1v1.1h-1.1z"/><path fill="#e04434" fill-opacity="0.9" d="M8.1 37.3h1.2v1.2h-1.2zM2.4 35.3h2.1v2.1h-2.1zM10.6 34.1a1.5 1.5 0 1 0 3 0a1.5 1.5 0 1 0 -3 0zM14.3 38.4h1.2v1.2h-1.2zM2.2 28.4h1.8v1.8h-1.8zM16.4 34.2h1.8v1.8h-1.8zM12.8 12.8h1.2v1.2h-1.2zM27.9 19.9h1.8v1.8h-1.8zM21.5 18.7h1.2v1.2h-1.2zM23.2 37.3h1.6v1.6h-1.6zM32.3 39.6h0.9v0.9h-0.9zM51.2 13.9h1.4v1.4h-1.4zM44.7 12.8h1.8v1.8h-1.8zM43 11.2h1.1v1.1h-1.1zM44.6 22.2h1.4v1.4h-1.4z"/><path fill="#f0c228" fill-opacity="0.75" d="M2.2 27.3h0.9v0.9h-0.9zM10.5 37.5h1.8v1.8h-1.8zM6.8 36a1.5 1.5 0 1 0 3 0a1.5 1.5 0 1 0 -3 0zM24.5 36.6h1.1v1.1h-1.1zM21.4 40.5h1.6v1.6h-1.6zM25.1 23.6h0.9v0.9h-0.9zM34.6 42.1h1.2v1.2h-1.2zM53.2 12.7h1.6v1.6h-1.6zM52 14.8h1.8v1.8h-1.8z"/><path fill="#5050d8" fill-opacity="0.6" d="M-1.6 39.4h1.2v1.2h-1.2zM5.9 31.8h1.1v1.1h-1.1zM5.8 14.2h1.8v1.8h-1.8zM27.2 26.5h1.6v1.6h-1.6z"/><path fill="#4a9ae8" fill-opacity="0.6" d="M11.2 34.4h1.8v1.8h-1.8zM2.8 30.8h1.8v1.8h-1.8zM12.8 40.9h1.8v1.8h-1.8zM9.3 37.1h1.6v1.6h-1.6zM11.6 20.5h1.6v1.6h-1.6zM6 19.3h1.4v1.4h-1.4zM33 13.1h2.1v2.1h-2.1zM17.3 25.6h1.4v1.4h-1.4zM47.4 30.4h1.2v1.2h-1.2zM38.3 38.2h1.8v1.8h-1.8zM43 14.3h0.9v0.9h-0.9zM44.3 15.4h2.1v2.1h-2.1zM47.3 29.2h2.1v2.1h-2.1zM54.9 35.5h1.1v1.1h-1.1zM52.1 34.8h0.9v0.9h-0.9z"/><path fill="#e04434" fill-opacity="0.6" d="M8.8 37.2h1.1v1.1h-1.1zM7.8 25.4h1.2v1.2h-1.2zM7.9 16.9h1.1v1.1h-1.1zM1.3 20.8a1.5 1.5 0 1 0 3 0a1.5 1.5 0 1 0 -3 0zM23.1 22.7h1.6v1.6h-1.6zM29.1 33.9h1.8v1.8h-1.8zM31.2 41h2.1v2.1h-2.1zM49 16.2h1.8v1.8h-1.8zM48.7 13.9h0.9v0.9h-0.9z"/><path fill="#4a9ae8" fill-opacity="0.9" d="M-1.4 31.5h0.9v0.9h-0.9zM9.3 35.3h2.1v2.1h-2.1zM9 33.5h1.8v1.8h-1.8zM9.4 18.7h0.9v0.9h-0.9zM11.4 13.3h1.2v1.2h-1.2zM13.9 17.6h0.9v0.9h-0.9zM32.9 21.9h1.2v1.2h-1.2zM26.6 28.4h2.1v2.1h-2.1zM26.4 32a1.5 1.5 0 1 0 3 0a1.5 1.5 0 1 0 -3 0zM24.4 27h1.2v1.2h-1.2zM34.6 43.5a1.5 1.5 0 1 0 3 0a1.5 1.5 0 1 0 -3 0zM39.6 34.9h1.8v1.8h-1.8zM42.3 12.3h1.8v1.8h-1.8zM40.3 16.9h1.8v1.8h-1.8z"/><path fill="#2f6fd0" fill-opacity="0.9" d="M12.5 35.7h0.9v0.9h-0.9zM10.7 33.1a1.5 1.5 0 1 0 3 0a1.5 1.5 0 1 0 -3 0zM13.1 31h1.6v1.6h-1.6zM7.1 17.3h1.1v1.1h-1.1zM1.5 18.3a1.5 1.5 0 1 0 3 0a1.5 1.5 0 1 0 -3 0zM30.1 30a1.5 1.5 0 1 0 3 0a1.5 1.5 0 1 0 -3 0zM26.1 19.5h1.8v1.8h-1.8zM25.1 22.5h1.2v1.2h-1.2zM17.1 20.6h1.8v1.8h-1.8zM33.8 35.2h1.6v1.6h-1.6zM34.4 36.6h1.2v1.2h-1.2zM39.1 15.1h1.6v1.6h-1.6zM45 30h1.6v1.6h-1.6z"/><path fill="#e8a0e0" fill-opacity="1" d="M4.6 33.7h1.8v1.8h-1.8zM17.2 28.7h0.9v0.9h-0.9zM33.2 11.8h2.1v2.1h-2.1zM31 27.8h1.1v1.1h-1.1zM24.2 37.1h1.2v1.2h-1.2zM28.8 39.4h2.1v2.1h-2.1zM29.6 37.5h1.8v1.8h-1.8zM38.8 39.3a1.5 1.5 0 1 0 3 0a1.5 1.5 0 1 0 -3 0zM61.6 35.7h1.1v1.1h-1.1z"/><path fill="#5050d8" fill-opacity="1" d="M22.9 43.7a1.5 1.5 0 1 0 3 0a1.5 1.5 0 1 0 -3 0zM9.7 26.3h2.1v2.1h-2.1zM16.3 34.1h1.4v1.4h-1.4zM10.3 45.1h1.8v1.8h-1.8zM26.4 33.1h1.2v1.2h-1.2zM41.9 34.2h1.6v1.6h-1.6z"/><path fill="#e04434" fill-opacity="0.75" d="M18.7 32h1.6v1.6h-1.6zM17.1 34.3h1.2v1.2h-1.2zM16.4 35.1h1.8v1.8h-1.8zM19.9 35.6h1.1v1.1h-1.1zM5.1 32.1h1.8v1.8h-1.8zM14.7 40.3h1.8v1.8h-1.8zM7.5 34.3h1.6v1.6h-1.6zM5.4 16.5h1.4v1.4h-1.4zM24.5 28.8h0.9v0.9h-0.9zM40.3 22.3h1.4v1.4h-1.4zM31.6 38.3h1.8v1.8h-1.8zM53.8 19.5h1.1v1.1h-1.1z"/><path fill="#e8a0e0" fill-opacity="0.75" d="M6.4 34.1h0.9v0.9h-0.9zM17.7 26.4h2.1v2.1h-2.1zM29.4 44.4h1.2v1.2h-1.2zM45.3 35.4h1.1v1.1h-1.1zM53.9 12.4a1.5 1.5 0 1 0 3 0a1.5 1.5 0 1 0 -3 0z"/><path fill="#5ab8f0" fill-opacity="0.9" d="M9.2 38.2a1.5 1.5 0 1 0 3 0a1.5 1.5 0 1 0 -3 0zM27 10.9h2.1v2.1h-2.1zM56.3 16.6h0.9v0.9h-0.9z"/><path fill="#38b060" fill-opacity="0.9" d="M10.3 40.5h0.9v0.9h-0.9zM4.1 10.8h1.8v1.8h-1.8zM17.2 23.9h1.6v1.6h-1.6zM42.8 39.6h0.9v0.9h-0.9zM30 40h2.1v2.1h-2.1zM50.9 16.8h1.2v1.2h-1.2zM59.7 14.9h1.1v1.1h-1.1z"/><path fill="#2f6fd0" fill-opacity="1" d="M13 40h1.4v1.4h-1.4zM5 34.8h1.4v1.4h-1.4zM15.4 34.9h2.1v2.1h-2.1zM5.2 45.3h1.4v1.4h-1.4zM4.6 30h1.4v1.4h-1.4zM14.4 11.6a1.5 1.5 0 1 0 3 0a1.5 1.5 0 1 0 -3 0zM7.2 7.7h1.6v1.6h-1.6zM25.1 17.5h1.4v1.4h-1.4zM47.2 36.7h1.6v1.6h-1.6zM53.5 9.8h1.1v1.1h-1.1z"/><path fill="#f080c0" fill-opacity="0.9" d="M16.4 36.2h0.9v0.9h-0.9zM28.4 17.8h1.8v1.8h-1.8zM24.5 22.1h1.4v1.4h-1.4zM35 22.6h0.9v0.9h-0.9zM46.5 38.2a1.5 1.5 0 1 0 3 0a1.5 1.5 0 1 0 -3 0z"/><path fill="#f4a020" fill-opacity="0.9" d="M20.2 39h1.4v1.4h-1.4zM44.5 40.2h1.4v1.4h-1.4zM24.2 33.3h1.6v1.6h-1.6zM40.1 36.5a1.5 1.5 0 1 0 3 0a1.5 1.5 0 1 0 -3 0zM33.1 42.6h2.1v2.1h-2.1zM40.9 42.8h1.4v1.4h-1.4zM53.2 15.1h2.1v2.1h-2.1zM50.9 13.9h1.8v1.8h-1.8z"/><path fill="#2f6fd0" fill-opacity="0.75" d="M15.5 29.3h1.8v1.8h-1.8zM8.9 14.8h1.4v1.4h-1.4zM32.4 17.4a1.5 1.5 0 1 0 3 0a1.5 1.5 0 1 0 -3 0zM39.3 33.8h1.8v1.8h-1.8zM45.4 15.8h0.9v0.9h-0.9zM55.9 34.2h1.1v1.1h-1.1z"/><path fill="#f4d040" fill-opacity="1" d="M11.2 34.7h1.2v1.2h-1.2zM7.3 7.1h1.1v1.1h-1.1zM20.6 18.9h1.2v1.2h-1.2zM25.5 22.3a1.5 1.5 0 1 0 3 0a1.5 1.5 0 1 0 -3 0zM32.3 36.6h1.8v1.8h-1.8zM42.7 9.6h1.4v1.4h-1.4zM48.1 29.4h1.2v1.2h-1.2z"/><path fill="#5050d8" fill-opacity="0.9" d="M9.2 37.9h1.2v1.2h-1.2zM1.2 15.6h1.2v1.2h-1.2zM37.7 41.1h1.1v1.1h-1.1zM45.1 42.6h2.1v2.1h-2.1zM52.4 15.6h2.1v2.1h-2.1zM35.1 11.2h1.8v1.8h-1.8zM53.3 25.5h1.6v1.6h-1.6z"/><path fill="#5050d8" fill-opacity="0.75" d="M10.5 10.4h0.9v0.9h-0.9zM4.7 16.8h1.2v1.2h-1.2zM9.2 17.9h1.8v1.8h-1.8zM27.7 21.1a1.5 1.5 0 1 0 3 0a1.5 1.5 0 1 0 -3 0zM30.9 36.3h2.1v2.1h-2.1zM30.2 43.5h1.1v1.1h-1.1zM57.5 33.8h1.6v1.6h-1.6z"/><path fill="#f4a020" fill-opacity="1" d="M5.4 14.7h1.6v1.6h-1.6zM37.4 11.4h1.2v1.2h-1.2zM37.5 33.1h1.6v1.6h-1.6zM55.4 16a1.5 1.5 0 1 0 3 0a1.5 1.5 0 1 0 -3 0z"/><path fill="#38b060" fill-opacity="0.75" d="M7.2 17.6h1.4v1.4h-1.4zM7 15.8h1.8v1.8h-1.8zM27 20.2h1.8v1.8h-1.8zM23.7 21.1h2.1v2.1h-2.1zM32.6 35.1h1.6v1.6h-1.6zM58.2 11.7h0.9v0.9h-0.9zM52.1 8.5h1.2v1.2h-1.2z"/><path fill="#a070e0" fill-opacity="0.75" d="M41.1 30.8h1.8v1.8h-1.8z"/><path fill="#5ab8f0" fill-opacity="0.75" d="M21 13.7h1.1v1.1h-1.1zM44.4 38.2h1.8v1.8h-1.8zM43.4 10.3h1.6v1.6h-1.6z"/><path fill="#a070e0" fill-opacity="0.9" d="M25.7 26.1h1.4v1.4h-1.4z"/><path fill="#a070e0" fill-opacity="0.6" d="M39.5 43.8h1.1v1.1h-1.1z"/><path fill="#38b060" fill-opacity="0.6" d="M47 19.7h1.6v1.6h-1.6z"/><path fill="#f4d040" fill-opacity="0.6" d="M56.5 29.8h1.2v1.2h-1.2zM45.4 23.2h2.1v2.1h-2.1z"/><path fill="#f090c8" d="M6.3 17.5a2.2 2.2 0 1 0 4.4 0a2.2 2.2 0 1 0 -4.4 0zM40.8 17.5a2.2 2.2 0 1 0 4.4 0a2.2 2.2 0 1 0 -4.4 0zM25.2 23.5a1.8 1.8 0 1 0 3.6 0a1.8 1.8 0 1 0 -3.6 0z"/><path fill="#d080e0" d="M14.3 9.5a1.7 1.7 0 1 0 3.4 0a1.7 1.7 0 1 0 -3.4 0z"/><path fill="#4a9ae8" d="M61.8 13a2.2 2.2 0 1 0 4.4 0a2.2 2.2 0 1 0 -4.4 0zM34.8 24a2.2 2.2 0 1 0 4.4 0a2.2 2.2 0 1 0 -4.4 0zM48 22a2 2 0 1 0 4 0a2 2 0 1 0 -4 0z"/><path fill="#c080e8" d="M48 9a2 2 0 1 0 4 0a2 2 0 1 0 -4 0z"/><path fill="#4848d0" d="M21.7 37a3.3 3.3 0 1 0 6.6 0a3.3 3.3 0 1 0 -6.6 0z"/><path fill="#3f6fe0" d="M9 36a3 3 0 1 0 6 0a3 3 0 1 0 -6 0z"/><path fill="#f0c228" d="M38.4 9a1.6 1.6 0 1 0 3.2 0a1.6 1.6 0 1 0 -3.2 0z"/></g></g><polygon points="0.8,0.95 67.9,0.95 0.8,38.8" fill="url(#gl34)"/><rect x="0.8" y="0.95" width="67.1" height="0.8" fill="#fff" fill-opacity="0.07"/><rect x="0.8" y="0.95" width="0.7" height="36.8" fill="#fff" fill-opacity="0.05"/></g></g></svg></div><div class="lb" style="left:252.2px"><span style="top:642.1px;letter-spacing:-0.13px">Flower Elements</span><span style="top:660.1px;letter-spacing:0.18px">3.mov</span></div>
<div class="ic" style="left:414px;top:569px"><svg width="68.4" height="53" viewBox="0 0 68.4 53" ><g transform="translate(0.32,0.9)"><defs><linearGradient id="gl35" gradientUnits="userSpaceOnUse" x1="0" y1="0" x2="68" y2="14"><stop offset="0" stop-color="#fff" stop-opacity="0.26"/><stop offset="0.5" stop-color="#fff" stop-opacity="0.17"/><stop offset="1" stop-color="#fff" stop-opacity="0.07"/></linearGradient><clipPath id="cp35"><rect x="-0.35" y="7.14" width="69.3" height="40.03"/></clipPath><filter id="bl35" x="-5%" y="-5%" width="110%" height="110%"><feGaussianBlur stdDeviation="0.35"/></filter></defs><g transform="translate(0,0)"><rect x="-0.4" y="0.3" width="69.2" height="54.0" fill="#000" fill-opacity="0.25"/><rect x="0" y="0" width="68.4" height="52.8" fill="#000"/><g clip-path="url(#cp35)"><g filter="url(#bl35)" transform="translate(-0.35,0.555) scale(1.019,1.0135)"><path fill="#3f8fe0" fill-opacity="1" d="M10.9 13.4h1.1v1.1h-1.1zM24.7 13.6h1.1v1.1h-1.1zM20.2 18.3h1.2v1.2h-1.2zM26.4 13.7h0.9v0.9h-0.9zM29.9 9.6h1.8v1.8h-1.8zM18.6 10.3h1.2v1.2h-1.2zM18.1 15.7h1.6v1.6h-1.6zM17.8 14.9h2.1v2.1h-2.1zM24.8 12.4h1.8v1.8h-1.8zM14.2 12.2h1.6v1.6h-1.6zM30.1 14.5h1.6v1.6h-1.6zM41.2 23h1.6v1.6h-1.6zM52 22.1h1.8v1.8h-1.8zM47.5 18.6h1.8v1.8h-1.8zM53.3 23.6h2.1v2.1h-2.1zM48.3 23.7h1.8v1.8h-1.8zM47.2 19.4h1.2v1.2h-1.2zM43.6 24.4h1.8v1.8h-1.8zM62.2 20.9h1.4v1.4h-1.4zM38 20.9h1.6v1.6h-1.6zM53.2 20.8h1.2v1.2h-1.2zM48.8 26.6a1.5 1.5 0 1 0 3 0a1.5 1.5 0 1 0 -3 0zM17.1 38.3h1.8v1.8h-1.8zM5.7 38.5h2.1v2.1h-2.1zM0.9 37h1.6v1.6h-1.6zM43.5 40.6h1.8v1.8h-1.8zM37.3 39h1.6v1.6h-1.6zM48.6 42.5h1.2v1.2h-1.2zM56.5 40.6h1.8v1.8h-1.8zM49.8 40.7h1.6v1.6h-1.6zM62.3 27.7h1.8v1.8h-1.8zM59.7 24.9h1.4v1.4h-1.4z"/><path fill="#e8a0e0" fill-opacity="0.6" d="M21.8 14.2h1.1v1.1h-1.1zM37.5 22.7a1.5 1.5 0 1 0 3 0a1.5 1.5 0 1 0 -3 0zM2.9 38.8h1.4v1.4h-1.4z"/><path fill="#5ab8f0" fill-opacity="1" d="M34.5 18.1h1.6v1.6h-1.6zM48.7 21.8h1.8v1.8h-1.8zM43.4 41.4h1.1v1.1h-1.1z"/><path fill="#4a9ae8" fill-opacity="0.6" d="M7.4 8.3h1.8v1.8h-1.8zM21 15.1h1.2v1.2h-1.2zM23.5 12h1.2v1.2h-1.2zM28.2 12.2h1.1v1.1h-1.1zM10.8 8.1h1.2v1.2h-1.2zM31.9 14.5h2.1v2.1h-2.1zM19.7 11.9h0.9v0.9h-0.9zM34.9 21.5h1.8v1.8h-1.8zM39.3 22.6a1.5 1.5 0 1 0 3 0a1.5 1.5 0 1 0 -3 0zM47.3 23.8h0.9v0.9h-0.9zM44.7 25.2h1.8v1.8h-1.8zM49.8 25.6h1.4v1.4h-1.4zM49.5 22.7h1.2v1.2h-1.2zM33.3 28.6h1.6v1.6h-1.6zM38.9 25h1.2v1.2h-1.2zM36.7 26.1h0.9v0.9h-0.9zM37.1 28.1h1.6v1.6h-1.6zM2 38.6h0.9v0.9h-0.9zM1.7 38.3a1.5 1.5 0 1 0 3 0a1.5 1.5 0 1 0 -3 0zM9.5 33.6h1.8v1.8h-1.8zM47 39.8h1.8v1.8h-1.8z"/><path fill="#3f8fe0" fill-opacity="0.6" d="M16.8 14.4h1.2v1.2h-1.2zM27.2 17.3h1.1v1.1h-1.1zM26.2 14.5a1.5 1.5 0 1 0 3 0a1.5 1.5 0 1 0 -3 0zM30.8 12.8h1.8v1.8h-1.8zM19.1 13.4h1.6v1.6h-1.6zM33.4 15h2.1v2.1h-2.1zM18.6 15.6h1.1v1.1h-1.1zM36.6 17.7h1.6v1.6h-1.6zM46.2 23.5h2.1v2.1h-2.1zM65.2 25.1h1.4v1.4h-1.4zM42.8 19.1h1.1v1.1h-1.1zM40.1 21.1h1.6v1.6h-1.6zM60.3 22.2h1.6v1.6h-1.6zM46 25.9h1.4v1.4h-1.4zM47.1 20.5h1.4v1.4h-1.4zM29.1 23.5h1.4v1.4h-1.4zM45.5 28.4a1.5 1.5 0 1 0 3 0a1.5 1.5 0 1 0 -3 0zM55.4 27h1.4v1.4h-1.4zM8.8 27.1h0.9v0.9h-0.9zM6.3 22.3h1.6v1.6h-1.6zM34.8 26.3h2.1v2.1h-2.1zM17.2 37.9h0.9v0.9h-0.9zM8.9 36.5h1.2v1.2h-1.2zM11.9 41.3h1.8v1.8h-1.8zM12.8 43.3a1.5 1.5 0 1 0 3 0a1.5 1.5 0 1 0 -3 0zM3 39.2h1.1v1.1h-1.1zM41.7 40.3h1.4v1.4h-1.4zM40 41.4h1.1v1.1h-1.1zM59.7 25.7a1.5 1.5 0 1 0 3 0a1.5 1.5 0 1 0 -3 0zM25.3 42.2h1.4v1.4h-1.4z"/><path fill="#3f8fe0" fill-opacity="0.9" d="M14.6 10.9h1.8v1.8h-1.8zM18.4 16.6h1.4v1.4h-1.4zM13.5 14a1.5 1.5 0 1 0 3 0a1.5 1.5 0 1 0 -3 0zM13.1 14.1a1.5 1.5 0 1 0 3 0a1.5 1.5 0 1 0 -3 0zM20.5 17.9a1.5 1.5 0 1 0 3 0a1.5 1.5 0 1 0 -3 0zM14.1 14h1.6v1.6h-1.6zM29 15.2h1.1v1.1h-1.1zM17 16h2.1v2.1h-2.1zM20.2 13.7h1.1v1.1h-1.1zM28.1 14h2.1v2.1h-2.1zM26.8 10.9h1.4v1.4h-1.4zM25.6 14.7h1.4v1.4h-1.4zM17.7 15.6h0.9v0.9h-0.9zM7.9 12.7h1.1v1.1h-1.1zM38.8 23.3h1.1v1.1h-1.1zM37 20.3h1.2v1.2h-1.2zM44.9 18.7h2.1v2.1h-2.1zM64.9 26.1h1.8v1.8h-1.8zM4.9 21.9h1.6v1.6h-1.6zM1.8 25.1h2.1v2.1h-2.1zM9.8 22.6h1.8v1.8h-1.8zM36.4 28.6h1.6v1.6h-1.6zM11.7 35.3h0.9v0.9h-0.9zM46.2 41.2h1.1v1.1h-1.1zM46.3 39.8h1.8v1.8h-1.8zM66.7 24.6h1.4v1.4h-1.4zM20.4 40.6h2.1v2.1h-2.1z"/><path fill="#f4d040" fill-opacity="0.75" d="M29.9 16.2a1.5 1.5 0 1 0 3 0a1.5 1.5 0 1 0 -3 0zM2.8 6.6h1.6v1.6h-1.6zM45.6 21.8h1.2v1.2h-1.2zM59.2 27.4h1.8v1.8h-1.8zM28.7 21a1.5 1.5 0 1 0 3 0a1.5 1.5 0 1 0 -3 0zM10.5 36.9h2.1v2.1h-2.1zM8.1 37.4h1.4v1.4h-1.4z"/><path fill="#5050d8" fill-opacity="0.6" d="M23.9 15.6h1.4v1.4h-1.4zM49.8 24.3h1.1v1.1h-1.1zM2.3 37.3h1.4v1.4h-1.4zM13.7 39.5h1.2v1.2h-1.2z"/><path fill="#5ab8f0" fill-opacity="0.6" d="M40.3 18.1h2.1v2.1h-2.1zM22 14.9a1.5 1.5 0 1 0 3 0a1.5 1.5 0 1 0 -3 0zM5.5 22.4h1.1v1.1h-1.1zM8.9 35.3h2.1v2.1h-2.1z"/><path fill="#4a9ae8" fill-opacity="1" d="M20.7 9.1h1.8v1.8h-1.8zM7.9 13.8h1.2v1.2h-1.2zM2.2 12.3h2.1v2.1h-2.1zM23.2 15.2h1.8v1.8h-1.8zM11.3 8.3h1.4v1.4h-1.4zM53.3 23.2h0.9v0.9h-0.9zM30.6 21.7h1.1v1.1h-1.1zM52.9 19.7h1.8v1.8h-1.8zM36.5 19.3h0.9v0.9h-0.9zM64 27.8h1.2v1.2h-1.2zM0.5 36.5h2.1v2.1h-2.1zM51.2 42.8h1.1v1.1h-1.1zM64 23.6h2.1v2.1h-2.1z"/><path fill="#52a8f0" fill-opacity="1" d="M12.9 9.4h1.2v1.2h-1.2zM29.5 17.6a1.5 1.5 0 1 0 3 0a1.5 1.5 0 1 0 -3 0zM20.5 8.7h2.1v2.1h-2.1zM11.2 10.1h0.9v0.9h-0.9zM23.1 11.8h1.1v1.1h-1.1zM44.2 22.3h1.1v1.1h-1.1zM32.2 23h1.6v1.6h-1.6zM40.9 23a1.5 1.5 0 1 0 3 0a1.5 1.5 0 1 0 -3 0zM62 22.9h2.1v2.1h-2.1zM1.5 24.5h2.1v2.1h-2.1zM9.8 37.8h2.1v2.1h-2.1zM14.1 39.9a1.5 1.5 0 1 0 3 0a1.5 1.5 0 1 0 -3 0zM7.3 34.7h1.6v1.6h-1.6zM48.6 40.9h1.6v1.6h-1.6zM44.1 41.4h1.6v1.6h-1.6z"/><path fill="#a070e0" fill-opacity="0.6" d="M4.1 11.3h1.8v1.8h-1.8zM18.1 13.7h1.4v1.4h-1.4zM50.1 39.5h1.4v1.4h-1.4zM58 41h1.8v1.8h-1.8z"/><path fill="#e8a0e0" fill-opacity="0.9" d="M21.3 13.9h0.9v0.9h-0.9zM8.8 11.7h1.6v1.6h-1.6zM22.6 13.5h1.6v1.6h-1.6z"/><path fill="#2f6fd0" fill-opacity="0.6" d="M30.6 14.9h1.4v1.4h-1.4zM20.6 12.6h1.4v1.4h-1.4zM23.7 18.7a1.5 1.5 0 1 0 3 0a1.5 1.5 0 1 0 -3 0zM20.8 13.9h1.4v1.4h-1.4zM54.2 28.1a1.5 1.5 0 1 0 3 0a1.5 1.5 0 1 0 -3 0zM28.7 27.8h1.8v1.8h-1.8zM8 35.3h1.8v1.8h-1.8zM0 36.7h1.6v1.6h-1.6zM63.1 22.5h1.1v1.1h-1.1z"/><path fill="#3f8fe0" fill-opacity="0.75" d="M37.2 16.9a1.5 1.5 0 1 0 3 0a1.5 1.5 0 1 0 -3 0zM6.8 10h1.1v1.1h-1.1zM9.9 13.5h1.6v1.6h-1.6zM23.8 14.7h1.1v1.1h-1.1zM31.8 10.3h1.4v1.4h-1.4zM33.2 13.6h1.2v1.2h-1.2zM37.3 13.6h1.2v1.2h-1.2zM13.3 15.1h0.9v0.9h-0.9zM36.7 15.8h0.9v0.9h-0.9zM18.8 10.1h1.2v1.2h-1.2zM56.9 23.3h1.2v1.2h-1.2zM35.9 23.5h0.9v0.9h-0.9zM40.9 22.8h1.4v1.4h-1.4zM62.8 21.2h0.9v0.9h-0.9zM57.5 23.4h1.1v1.1h-1.1zM39.4 25.2h1.2v1.2h-1.2zM32.1 24.6h2.1v2.1h-2.1zM33.4 26.4a1.5 1.5 0 1 0 3 0a1.5 1.5 0 1 0 -3 0zM12.6 34.4h1.8v1.8h-1.8zM13.7 38.1h1.6v1.6h-1.6zM3.7 39.9h1.8v1.8h-1.8zM5.8 38.3h1.1v1.1h-1.1zM11.6 35.3h0.9v0.9h-0.9zM56.6 40.9h2.1v2.1h-2.1zM51 42.2h1.4v1.4h-1.4zM46.2 39.3h1.2v1.2h-1.2zM61.6 24.3h1.2v1.2h-1.2z"/><path fill="#a070e0" fill-opacity="0.9" d="M27.1 17.9h0.9v0.9h-0.9zM7.4 5.9h1.1v1.1h-1.1zM24.4 14.4h1.2v1.2h-1.2zM20.1 14h1.2v1.2h-1.2zM43.5 26.4h1.6v1.6h-1.6zM50.1 25.5h0.9v0.9h-0.9zM31.3 28.5h0.9v0.9h-0.9z"/><path fill="#f0c228" fill-opacity="0.9" d="M1.7 10.7h1.1v1.1h-1.1zM25.9 14h1.6v1.6h-1.6zM56.9 26.5h1.1v1.1h-1.1zM42.7 20.5h1.8v1.8h-1.8zM45.3 20.6h1.8v1.8h-1.8zM52 21.5h2.1v2.1h-2.1zM47.5 24.8h1.4v1.4h-1.4zM5.1 39h1.8v1.8h-1.8zM56.8 43.1a1.5 1.5 0 1 0 3 0a1.5 1.5 0 1 0 -3 0zM45.4 40.3h1.8v1.8h-1.8z"/><path fill="#f4d040" fill-opacity="0.9" d="M10.4 10.5h1.6v1.6h-1.6zM12.5 12.8a1.5 1.5 0 1 0 3 0a1.5 1.5 0 1 0 -3 0zM8.1 11.9h1.4v1.4h-1.4zM58.8 26h0.9v0.9h-0.9zM51.1 26.5a1.5 1.5 0 1 0 3 0a1.5 1.5 0 1 0 -3 0zM43.3 24h1.4v1.4h-1.4z"/><path fill="#38b060" fill-opacity="0.9" d="M35.4 13.2h1.6v1.6h-1.6zM7.3 13.6a1.5 1.5 0 1 0 3 0a1.5 1.5 0 1 0 -3 0zM41 17.3h1.2v1.2h-1.2zM37 19.1h1.6v1.6h-1.6zM56.7 23.6h1.6v1.6h-1.6zM44.6 20.7h1.1v1.1h-1.1zM5.3 37.6h1.4v1.4h-1.4z"/><path fill="#52a8f0" fill-opacity="0.75" d="M30.9 12.9a1.5 1.5 0 1 0 3 0a1.5 1.5 0 1 0 -3 0zM22.9 15.4h1.6v1.6h-1.6zM55.3 26.4a1.5 1.5 0 1 0 3 0a1.5 1.5 0 1 0 -3 0zM48.3 22.6h1.4v1.4h-1.4zM45.1 27.4h1.8v1.8h-1.8zM58.3 24.7h0.9v0.9h-0.9zM44.7 25.4h1.4v1.4h-1.4zM55.6 23.2h1.8v1.8h-1.8zM44.3 25.3h2.1v2.1h-2.1zM53.2 28.4h1.2v1.2h-1.2zM39.2 21.1a1.5 1.5 0 1 0 3 0a1.5 1.5 0 1 0 -3 0zM4.5 24.5h1.8v1.8h-1.8zM6 39.6a1.5 1.5 0 1 0 3 0a1.5 1.5 0 1 0 -3 0zM10.7 35.7a1.5 1.5 0 1 0 3 0a1.5 1.5 0 1 0 -3 0zM4 35.5h2.1v2.1h-2.1zM52 40h1.4v1.4h-1.4zM51.1 40.9a1.5 1.5 0 1 0 3 0a1.5 1.5 0 1 0 -3 0zM64.7 26.8h1.4v1.4h-1.4z"/><path fill="#4a9ae8" fill-opacity="0.9" d="M22.4 17.1h1.1v1.1h-1.1zM21.1 15.4h1.2v1.2h-1.2zM15.9 8.2a1.5 1.5 0 1 0 3 0a1.5 1.5 0 1 0 -3 0zM24.3 10h1.4v1.4h-1.4zM13.1 10h1.2v1.2h-1.2zM39 21.1h1.1v1.1h-1.1zM51.9 23.9h1.6v1.6h-1.6zM35.8 22.9h0.9v0.9h-0.9zM45.6 22h1.4v1.4h-1.4zM52.3 23.9h0.9v0.9h-0.9zM56.1 24.3h1.1v1.1h-1.1zM4.1 24h1.8v1.8h-1.8zM37.1 40.6h2.1v2.1h-2.1zM48 43.3h1.1v1.1h-1.1zM54.5 42.1h1.1v1.1h-1.1zM63 24.5h1.1v1.1h-1.1zM18.5 39.5h1.8v1.8h-1.8z"/><path fill="#2f6fd0" fill-opacity="1" d="M35 13.9h2.1v2.1h-2.1zM21.1 14h1.1v1.1h-1.1zM38.8 17.1h1.8v1.8h-1.8zM26.6 14.4a1.5 1.5 0 1 0 3 0a1.5 1.5 0 1 0 -3 0zM31.2 14.8h2.1v2.1h-2.1zM21.5 8.5h2.1v2.1h-2.1zM44.4 42.9a1.5 1.5 0 1 0 3 0a1.5 1.5 0 1 0 -3 0zM33.4 41.4h1.6v1.6h-1.6z"/><path fill="#38b060" fill-opacity="0.6" d="M22.2 15h1.2v1.2h-1.2zM23 13.9h0.9v0.9h-0.9zM17.4 14.7h1.6v1.6h-1.6zM20.1 9.5h1.6v1.6h-1.6zM17.6 10.3h1.8v1.8h-1.8zM61.8 25.3a1.5 1.5 0 1 0 3 0a1.5 1.5 0 1 0 -3 0z"/><path fill="#a070e0" fill-opacity="0.75" d="M20.4 13.5h1.4v1.4h-1.4zM5.6 8.9h1.4v1.4h-1.4zM52.4 24a1.5 1.5 0 1 0 3 0a1.5 1.5 0 1 0 -3 0zM42.1 24.9h1.8v1.8h-1.8zM47.5 22.8h1.2v1.2h-1.2zM9.1 35.7h1.4v1.4h-1.4zM45.9 41.1h1.1v1.1h-1.1z"/><path fill="#2f6fd0" fill-opacity="0.75" d="M11.9 13.4h1.6v1.6h-1.6zM35.7 16.9a1.5 1.5 0 1 0 3 0a1.5 1.5 0 1 0 -3 0zM49.8 22.6h2.1v2.1h-2.1zM15.2 38.1h1.4v1.4h-1.4zM12.2 39h0.9v0.9h-0.9zM48.3 41.4h2.1v2.1h-2.1zM45.7 42.2h0.9v0.9h-0.9z"/><path fill="#e04434" fill-opacity="0.6" d="M17.1 17.2h1.2v1.2h-1.2zM12.1 8h1.8v1.8h-1.8zM25.1 13.7a1.5 1.5 0 1 0 3 0a1.5 1.5 0 1 0 -3 0zM19.6 9.1h1.8v1.8h-1.8zM43.9 21.2h1.2v1.2h-1.2zM43 22.9h1.2v1.2h-1.2zM57.1 29.1h1.6v1.6h-1.6zM1.2 23.6h1.1v1.1h-1.1zM9 34.1h1.2v1.2h-1.2zM1.2 39.7h1.4v1.4h-1.4zM8.3 39.4h1.2v1.2h-1.2zM39.6 41.1h0.9v0.9h-0.9zM51.5 42h1.4v1.4h-1.4zM42.5 41.7h1.1v1.1h-1.1zM40 40.5h1.8v1.8h-1.8z"/><path fill="#e04434" fill-opacity="0.9" d="M14.8 15.1h1.8v1.8h-1.8zM4.7 13.8h2.1v2.1h-2.1zM53.6 22.9h1.6v1.6h-1.6zM52.9 21.3h1.4v1.4h-1.4zM47.5 22h0.9v0.9h-0.9zM6 39h1.8v1.8h-1.8zM13.1 38.8h1.2v1.2h-1.2zM7 37.4h1.4v1.4h-1.4zM7.3 37h1.4v1.4h-1.4zM11.1 36.9h1.2v1.2h-1.2zM7.2 38.7h0.9v0.9h-0.9zM39.5 41h1.8v1.8h-1.8zM29.2 40.8h1.6v1.6h-1.6z"/><path fill="#52a8f0" fill-opacity="0.6" d="M38.9 17h1.1v1.1h-1.1zM18.5 14.8a1.5 1.5 0 1 0 3 0a1.5 1.5 0 1 0 -3 0zM22.4 14.7h0.9v0.9h-0.9zM27.9 12.5h1.6v1.6h-1.6zM42.3 25.5h1.8v1.8h-1.8zM51.7 26.7h1.8v1.8h-1.8zM54.2 24h0.9v0.9h-0.9zM42.6 21.1h1.1v1.1h-1.1zM33.9 28.3h0.9v0.9h-0.9zM9.5 37.2a1.5 1.5 0 1 0 3 0a1.5 1.5 0 1 0 -3 0zM45.2 41.2h0.9v0.9h-0.9zM44.8 41.6h1.8v1.8h-1.8zM61.3 21h2.1v2.1h-2.1z"/><path fill="#f4a020" fill-opacity="0.75" d="M24.3 15.4h1.1v1.1h-1.1z"/><path fill="#2f6fd0" fill-opacity="0.9" d="M33.7 13h1.6v1.6h-1.6zM20.9 14.7h1.8v1.8h-1.8zM13.7 13.3h0.9v0.9h-0.9zM26.7 15.9h0.9v0.9h-0.9zM16.5 11h1.6v1.6h-1.6zM16.7 11.6h1.4v1.4h-1.4zM21.9 9.2h1.8v1.8h-1.8zM46.5 26.7a1.5 1.5 0 1 0 3 0a1.5 1.5 0 1 0 -3 0zM41.8 18.8a1.5 1.5 0 1 0 3 0a1.5 1.5 0 1 0 -3 0zM65.2 21.4h1.2v1.2h-1.2z"/><path fill="#e04434" fill-opacity="0.75" d="M24.6 9.7h1.2v1.2h-1.2zM33.6 15.3h1.1v1.1h-1.1zM23.4 15.3a1.5 1.5 0 1 0 3 0a1.5 1.5 0 1 0 -3 0zM59.8 25.6h0.9v0.9h-0.9zM46.2 24.2h1.6v1.6h-1.6zM42.4 20h1.8v1.8h-1.8zM44 39.7h1.2v1.2h-1.2z"/><path fill="#f4d040" fill-opacity="1" d="M24.8 11a1.5 1.5 0 1 0 3 0a1.5 1.5 0 1 0 -3 0zM37.1 24.6h1.2v1.2h-1.2zM3.5 39.1h2.1v2.1h-2.1zM4.7 35.6h1.2v1.2h-1.2zM38 41.7h1.1v1.1h-1.1z"/><path fill="#e8a0e0" fill-opacity="0.75" d="M16.4 12.5h1.6v1.6h-1.6zM17.5 13.2a1.5 1.5 0 1 0 3 0a1.5 1.5 0 1 0 -3 0zM29.5 14.2h1.6v1.6h-1.6zM31.9 15.5h1.8v1.8h-1.8zM47.5 24.5h2.1v2.1h-2.1zM47 24.5h1.4v1.4h-1.4zM41.6 21.5h1.6v1.6h-1.6zM9.7 22.8h1.1v1.1h-1.1zM28.3 30.7h1.6v1.6h-1.6zM14.9 40.5h1.4v1.4h-1.4zM15.6 35.4h2.1v2.1h-2.1zM11.3 38h2.1v2.1h-2.1zM49.8 41h1.1v1.1h-1.1z"/><path fill="#5050d8" fill-opacity="0.75" d="M24.5 11.9h1.2v1.2h-1.2zM12.4 9.8h1.6v1.6h-1.6z"/><path fill="#f0c228" fill-opacity="1" d="M17 10.4h1.8v1.8h-1.8zM23.7 12.6h1.1v1.1h-1.1zM31 15.3h2.1v2.1h-2.1zM13.1 13.2h1.1v1.1h-1.1zM28.3 9.7h0.9v0.9h-0.9zM50.7 21.3h1.6v1.6h-1.6zM40.7 19.1a1.5 1.5 0 1 0 3 0a1.5 1.5 0 1 0 -3 0zM7.1 22.3h1.1v1.1h-1.1zM33.1 26.5h2.1v2.1h-2.1zM35.1 27h1.8v1.8h-1.8zM7.1 37.7h1.6v1.6h-1.6zM10.9 43.1h0.9v0.9h-0.9zM43.2 41.9h1.8v1.8h-1.8zM44.4 42.9h1.2v1.2h-1.2zM60.1 40.8h1.1v1.1h-1.1zM41.2 40.1h1.8v1.8h-1.8zM21.2 39.7h1.6v1.6h-1.6z"/><path fill="#4a9ae8" fill-opacity="0.75" d="M33.9 14.7h0.9v0.9h-0.9zM22.1 18.5h1.4v1.4h-1.4zM21.3 10.9a1.5 1.5 0 1 0 3 0a1.5 1.5 0 1 0 -3 0zM24.1 12.9h1.8v1.8h-1.8zM19.2 15.9h1.6v1.6h-1.6zM54.1 25.8h1.4v1.4h-1.4zM62.7 24.1h1.4v1.4h-1.4zM55.4 22.7h1.6v1.6h-1.6zM50.5 24.3h2.1v2.1h-2.1zM54.6 24.7a1.5 1.5 0 1 0 3 0a1.5 1.5 0 1 0 -3 0zM6.3 23.7h1.4v1.4h-1.4zM37.4 25.1h1.1v1.1h-1.1zM9.5 36.4h1.2v1.2h-1.2zM3 35.5h1.4v1.4h-1.4zM8.2 38.9a1.5 1.5 0 1 0 3 0a1.5 1.5 0 1 0 -3 0zM10.6 40.9a1.5 1.5 0 1 0 3 0a1.5 1.5 0 1 0 -3 0zM47.3 40.5h1.2v1.2h-1.2zM63.3 22.6h1.2v1.2h-1.2z"/><path fill="#e04434" fill-opacity="1" d="M32.7 16.2h1.8v1.8h-1.8zM34.1 18.5h1.4v1.4h-1.4zM33.7 19.8h1.6v1.6h-1.6zM24.2 17.2h0.9v0.9h-0.9zM39.8 17.9h2.1v2.1h-2.1zM48.8 21.7h1.2v1.2h-1.2zM42.4 23.5a1.5 1.5 0 1 0 3 0a1.5 1.5 0 1 0 -3 0zM56 29h1.6v1.6h-1.6zM6.9 25.4h0.9v0.9h-0.9zM6.2 37h1.6v1.6h-1.6zM6.6 38h1.1v1.1h-1.1zM52.3 42.2h2.1v2.1h-2.1zM61.1 41.1h1.8v1.8h-1.8z"/><path fill="#f0c228" fill-opacity="0.6" d="M27 9.1h1.8v1.8h-1.8zM11.8 6.7h1.1v1.1h-1.1zM35 13.7h1.4v1.4h-1.4zM52.8 20.4h1.2v1.2h-1.2zM11.9 35.1h2.1v2.1h-2.1zM50.3 40.7h1.8v1.8h-1.8z"/><path fill="#38b060" fill-opacity="1" d="M26.2 15.1a1.5 1.5 0 1 0 3 0a1.5 1.5 0 1 0 -3 0zM35.3 29.3h1.1v1.1h-1.1z"/><path fill="#52a8f0" fill-opacity="0.9" d="M33.4 17.8h1.6v1.6h-1.6zM28.9 13h1.2v1.2h-1.2zM52.6 24.9h0.9v0.9h-0.9zM60.3 21h1.1v1.1h-1.1zM35.7 23.1h1.2v1.2h-1.2zM29.4 18.2h2.1v2.1h-2.1zM41 24a1.5 1.5 0 1 0 3 0a1.5 1.5 0 1 0 -3 0zM48.5 40.4h1.4v1.4h-1.4zM50 43.1h0.9v0.9h-0.9zM67.1 27.2h1.1v1.1h-1.1z"/><path fill="#a070e0" fill-opacity="1" d="M18.2 15.2h1.4v1.4h-1.4zM56.2 22.4a1.5 1.5 0 1 0 3 0a1.5 1.5 0 1 0 -3 0zM54 25.8a1.5 1.5 0 1 0 3 0a1.5 1.5 0 1 0 -3 0zM46.7 21.5h1.8v1.8h-1.8zM7.6 37.8h1.1v1.1h-1.1zM40.8 40.3h1.6v1.6h-1.6z"/><path fill="#f080c0" fill-opacity="0.75" d="M25.2 17.3a1.5 1.5 0 1 0 3 0a1.5 1.5 0 1 0 -3 0zM24.3 16.7h1.1v1.1h-1.1zM52.9 25.5h1.6v1.6h-1.6zM48.5 20.4h0.9v0.9h-0.9zM9.7 22.6h1.1v1.1h-1.1zM12.5 41.8h1.1v1.1h-1.1zM42 41.5h2.1v2.1h-2.1zM50.5 40h1.6v1.6h-1.6zM60.2 25.3h1.1v1.1h-1.1z"/><path fill="#f4d040" fill-opacity="0.6" d="M18 13.9h1.1v1.1h-1.1zM10.9 11.2h1.1v1.1h-1.1z"/><path fill="#5ab8f0" fill-opacity="0.9" d="M28.1 15h1.6v1.6h-1.6zM33.4 17.4h1.1v1.1h-1.1zM8.7 23.3a1.5 1.5 0 1 0 3 0a1.5 1.5 0 1 0 -3 0zM32.1 42.7h1.1v1.1h-1.1z"/><path fill="#38b060" fill-opacity="0.75" d="M24.1 13.6h1.1v1.1h-1.1zM35.9 21.8a1.5 1.5 0 1 0 3 0a1.5 1.5 0 1 0 -3 0zM6.5 39.6h1.6v1.6h-1.6zM11.9 38.7h2.1v2.1h-2.1z"/><path fill="#f4a020" fill-opacity="1" d="M21.9 17.3h1.2v1.2h-1.2zM47.3 41.6h1.2v1.2h-1.2zM19.5 40.9h2.1v2.1h-2.1z"/><path fill="#e8a0e0" fill-opacity="1" d="M7.9 7.4h1.6v1.6h-1.6zM17.1 12.5h1.6v1.6h-1.6zM40.4 25.7h1.6v1.6h-1.6zM4.8 24.1a1.5 1.5 0 1 0 3 0a1.5 1.5 0 1 0 -3 0zM9 36h1.6v1.6h-1.6z"/><path fill="#f0c228" fill-opacity="0.75" d="M22.5 8.8h1.8v1.8h-1.8zM36.8 11.8a1.5 1.5 0 1 0 3 0a1.5 1.5 0 1 0 -3 0zM24.3 13.7h1.8v1.8h-1.8zM61.6 27.9h2.1v2.1h-2.1zM6.7 37.1h1.2v1.2h-1.2z"/><path fill="#f080c0" fill-opacity="0.6" d="M19.1 14h2.1v2.1h-2.1zM45.5 26.6h1.4v1.4h-1.4zM43.8 26.9h0.9v0.9h-0.9zM43.6 19.2h2.1v2.1h-2.1zM52.8 24.8h0.9v0.9h-0.9zM4.9 40.4h0.9v0.9h-0.9z"/><path fill="#5050d8" fill-opacity="0.9" d="M27 13.2h1.1v1.1h-1.1zM45.5 24.7a1.5 1.5 0 1 0 3 0a1.5 1.5 0 1 0 -3 0zM9.3 39.8h1.1v1.1h-1.1z"/><path fill="#f080c0" fill-opacity="0.9" d="M14.9 13.2a1.5 1.5 0 1 0 3 0a1.5 1.5 0 1 0 -3 0zM47.7 21.7h0.9v0.9h-0.9zM39.2 21.3h1.4v1.4h-1.4zM34.4 25.4h2.1v2.1h-2.1zM41.3 18.2h0.9v0.9h-0.9zM58.8 27.4h1.4v1.4h-1.4zM46.8 23.1h1.6v1.6h-1.6zM9.6 39.1h2.1v2.1h-2.1zM9.5 39.8a1.5 1.5 0 1 0 3 0a1.5 1.5 0 1 0 -3 0zM46.8 39.3h1.8v1.8h-1.8zM58.5 40.2h1.4v1.4h-1.4zM63.1 27.2h1.4v1.4h-1.4zM21.9 43h0.9v0.9h-0.9z"/><path fill="#f080c0" fill-opacity="1" d="M31.4 14.2h1.1v1.1h-1.1zM48.5 19.5h1.6v1.6h-1.6zM32.1 23.1h2.1v2.1h-2.1zM13.7 37.4h1.6v1.6h-1.6zM10.9 35.6h1.6v1.6h-1.6zM62.8 29a1.5 1.5 0 1 0 3 0a1.5 1.5 0 1 0 -3 0zM62.7 25.5h0.9v0.9h-0.9z"/><path fill="#5050d8" fill-opacity="1" d="M50.7 26.3h1.6v1.6h-1.6zM53.9 24.4h2.1v2.1h-2.1zM4.3 35.7h1.4v1.4h-1.4zM58.8 42.6h1.2v1.2h-1.2z"/><path fill="#f4a020" fill-opacity="0.9" d="M57.6 25.2h1.1v1.1h-1.1zM36.5 22.2h2.1v2.1h-2.1zM34.5 27.3h1.4v1.4h-1.4zM57.9 42.5h1.6v1.6h-1.6z"/><path fill="#f4a020" fill-opacity="0.6" d="M46 18.4h1.8v1.8h-1.8zM48.3 24.5h2.1v2.1h-2.1zM60.1 25.2h1.1v1.1h-1.1z"/><path fill="#5ab8f0" fill-opacity="0.75" d="M43.2 23.8a1.5 1.5 0 1 0 3 0a1.5 1.5 0 1 0 -3 0zM64.8 25.9h1.2v1.2h-1.2z"/><path fill="#b080e8" d="M-0.3 13a1.8 1.8 0 1 0 3.6 0a1.8 1.8 0 1 0 -3.6 0z"/><path fill="#5050d8" d="M12 37a2 2 0 1 0 4 0a2 2 0 1 0 -4 0z"/></g></g><polygon points="0.8,0.95 67.9,0.95 0.8,38.8" fill="url(#gl35)"/><rect x="0.8" y="0.95" width="67.1" height="0.8" fill="#fff" fill-opacity="0.07"/><rect x="0.8" y="0.95" width="0.7" height="36.8" fill="#fff" fill-opacity="0.05"/></g></g></svg></div><div class="lb" style="left:378.5px"><span style="top:642.1px;letter-spacing:-0.13px">Flower Elements</span><span style="top:660.1px;letter-spacing:0.18px">4.mov</span></div>
<div class="ic" style="left:540px;top:569px"><svg width="68.4" height="53" viewBox="0 0 68.4 53" ><g transform="translate(0.61,0.9)"><defs><linearGradient id="gl36" gradientUnits="userSpaceOnUse" x1="0" y1="0" x2="68" y2="14"><stop offset="0" stop-color="#fff" stop-opacity="0.26"/><stop offset="0.5" stop-color="#fff" stop-opacity="0.17"/><stop offset="1" stop-color="#fff" stop-opacity="0.07"/></linearGradient><clipPath id="cp36"><rect x="-0.35" y="7.14" width="69.3" height="40.03"/></clipPath><filter id="bl36" x="-5%" y="-5%" width="110%" height="110%"><feGaussianBlur stdDeviation="0.35"/></filter></defs><g transform="translate(0,0)"><rect x="-0.4" y="0.3" width="69.2" height="54.0" fill="#000" fill-opacity="0.25"/><rect x="0" y="0" width="68.4" height="52.8" fill="#000"/><g clip-path="url(#cp36)"><g filter="url(#bl36)" transform="translate(-0.35,0.555) scale(1.019,1.0135)"><path fill="#4a9ae8" fill-opacity="0.9" d="M15.2 35.8h1.1v1.1h-1.1zM8.6 17.3h1.6v1.6h-1.6zM33.4 30.8h1.2v1.2h-1.2zM27.8 15.1h1.8v1.8h-1.8zM20.3 19.3h1.8v1.8h-1.8zM24.3 19.8a1.5 1.5 0 1 0 3 0a1.5 1.5 0 1 0 -3 0zM17.5 34h2.1v2.1h-2.1zM13.9 38.9a1.5 1.5 0 1 0 3 0a1.5 1.5 0 1 0 -3 0zM9.5 35.7h0.9v0.9h-0.9zM12.7 13.6h1.8v1.8h-1.8zM18.2 31.2h1.4v1.4h-1.4zM44.5 7.2h1.6v1.6h-1.6zM66.5 29a1.5 1.5 0 1 0 3 0a1.5 1.5 0 1 0 -3 0zM44.8 26.7h2.1v2.1h-2.1zM51.9 29.9a1.5 1.5 0 1 0 3 0a1.5 1.5 0 1 0 -3 0zM48.5 23.2h1.8v1.8h-1.8zM34.3 20.4h1.4v1.4h-1.4zM63.5 17.8h1.4v1.4h-1.4zM47.7 33.7h1.6v1.6h-1.6zM59.9 15.3a1.5 1.5 0 1 0 3 0a1.5 1.5 0 1 0 -3 0zM47.8 23.3h1.2v1.2h-1.2zM51.4 13.7h2.1v2.1h-2.1zM59.6 11.2h1.4v1.4h-1.4z"/><path fill="#4a9ae8" fill-opacity="0.6" d="M26.2 26.9h1.1v1.1h-1.1zM20.8 17.6h1.6v1.6h-1.6zM31.5 26.3h1.4v1.4h-1.4zM33.1 37.6h1.8v1.8h-1.8zM9.6 26h1.4v1.4h-1.4zM17.6 43.1h1.8v1.8h-1.8zM6.8 13.9h2.1v2.1h-2.1zM51.8 16.4h1.2v1.2h-1.2zM38.7 7.4h1.2v1.2h-1.2zM63.6 31.1h1.6v1.6h-1.6zM47.9 20.3h1.2v1.2h-1.2zM46.8 27.4a1.5 1.5 0 1 0 3 0a1.5 1.5 0 1 0 -3 0zM57.4 15.7h1.6v1.6h-1.6zM53.7 34h1.6v1.6h-1.6zM63 30h1.1v1.1h-1.1z"/><path fill="#a070e0" fill-opacity="0.6" d="M32.7 20.8h0.9v0.9h-0.9zM10.4 14.3h2.1v2.1h-2.1zM18.4 22.3h1.8v1.8h-1.8zM19 30.4h1.2v1.2h-1.2zM33.6 32.4h0.9v0.9h-0.9zM44.7 7.4h1.2v1.2h-1.2zM55.3 25.9h1.1v1.1h-1.1z"/><path fill="#52a8f0" fill-opacity="1" d="M26.4 37.4h1.2v1.2h-1.2zM18.7 8a1.5 1.5 0 1 0 3 0a1.5 1.5 0 1 0 -3 0zM3.5 26.6h1.2v1.2h-1.2zM-0.7 14.5h1.4v1.4h-1.4zM22.7 17.7h1.1v1.1h-1.1zM3 25.8h1.8v1.8h-1.8zM20.8 24.5h1.8v1.8h-1.8zM14.5 22.3h1.6v1.6h-1.6zM48.2 21.4h1.2v1.2h-1.2zM53.5 23.8h1.8v1.8h-1.8zM57.2 24.1h1.6v1.6h-1.6zM63.9 25h1.4v1.4h-1.4zM35 34.4h1.6v1.6h-1.6zM40.3 25.7h1.6v1.6h-1.6zM52.6 39.6h1.8v1.8h-1.8zM48 29.8h1.6v1.6h-1.6z"/><path fill="#3f8fe0" fill-opacity="0.75" d="M24.4 29.8h0.9v0.9h-0.9zM15.3 24.2h0.9v0.9h-0.9zM15.4 28.8h1.2v1.2h-1.2zM33.4 43.4h1.2v1.2h-1.2zM14.1 19.7h2.1v2.1h-2.1zM8.7 20.5h0.9v0.9h-0.9zM21.8 31.2h1.1v1.1h-1.1zM22.2 14.9h1.1v1.1h-1.1zM10.5 28.7h1.4v1.4h-1.4zM22.5 36.4h1.1v1.1h-1.1zM22 23.3h1.4v1.4h-1.4zM31 26.3h1.1v1.1h-1.1zM8.9 23.9h1.2v1.2h-1.2zM12.3 25.9h1.4v1.4h-1.4zM18.7 28.5h1.2v1.2h-1.2zM30.7 29.3h0.9v0.9h-0.9zM17 41.6a1.5 1.5 0 1 0 3 0a1.5 1.5 0 1 0 -3 0zM0.3 21.7h1.8v1.8h-1.8zM18.3 12.9h2.1v2.1h-2.1zM12.6 24.7h1.6v1.6h-1.6zM9.5 33.3h0.9v0.9h-0.9zM18.9 17.2h1.2v1.2h-1.2zM33.5 26.8h1.1v1.1h-1.1zM22.6 29.3a1.5 1.5 0 1 0 3 0a1.5 1.5 0 1 0 -3 0zM14.4 22.1h1.6v1.6h-1.6zM26.7 19.4h2.1v2.1h-2.1zM26 16.1h1.1v1.1h-1.1zM23.1 43.4h1.2v1.2h-1.2zM45.9 44a1.5 1.5 0 1 0 3 0a1.5 1.5 0 1 0 -3 0zM45.9 19.7h1.8v1.8h-1.8zM59.9 22.8a1.5 1.5 0 1 0 3 0a1.5 1.5 0 1 0 -3 0zM37.8 31h1.4v1.4h-1.4zM67.3 24.7h1.4v1.4h-1.4zM54.7 38.6h1.6v1.6h-1.6zM47.7 35.5h1.4v1.4h-1.4zM54 28.4h0.9v0.9h-0.9zM62.5 20.1h1.2v1.2h-1.2zM48.8 33.4h0.9v0.9h-0.9zM53.3 14.8h2.1v2.1h-2.1zM47.5 31.7h1.4v1.4h-1.4zM45.3 9.5h1.4v1.4h-1.4zM47 7.3h1.4v1.4h-1.4zM66.9 23.4h2.1v2.1h-2.1zM46.8 37.4h1.2v1.2h-1.2zM60.3 33h2.1v2.1h-2.1zM49.6 30.7h2.1v2.1h-2.1zM53.4 28.6h2.1v2.1h-2.1zM55.8 7.4h1.2v1.2h-1.2zM51.5 28.5h1.2v1.2h-1.2zM58.6 22.3a1.5 1.5 0 1 0 3 0a1.5 1.5 0 1 0 -3 0zM61.6 30.2h1.2v1.2h-1.2zM49.3 33.6h1.4v1.4h-1.4zM56.5 25.1h1.4v1.4h-1.4zM51.1 37.7h1.8v1.8h-1.8z"/><path fill="#3f8fe0" fill-opacity="1" d="M12.7 32.7h1.8v1.8h-1.8zM13.5 33.9h2.1v2.1h-2.1zM16.8 26.3h1.6v1.6h-1.6zM15.6 18.8h1.2v1.2h-1.2zM13.1 18.4h1.1v1.1h-1.1zM22.3 31.5a1.5 1.5 0 1 0 3 0a1.5 1.5 0 1 0 -3 0zM30.1 29.2h1.4v1.4h-1.4zM13.4 17.2h1.6v1.6h-1.6zM7.5 7.6h0.9v0.9h-0.9zM19.7 26.9h1.6v1.6h-1.6zM5.1 30.7h0.9v0.9h-0.9zM17.8 20.1h1.4v1.4h-1.4zM25.6 26.8h1.6v1.6h-1.6zM29.9 39.7h1.6v1.6h-1.6zM54.6 30.1h0.9v0.9h-0.9zM54.9 43.3a1.5 1.5 0 1 0 3 0a1.5 1.5 0 1 0 -3 0zM48.6 26.3h2.1v2.1h-2.1zM45.4 23.8h1.2v1.2h-1.2zM43.3 15.4h1.6v1.6h-1.6zM67.6 28.4h0.9v0.9h-0.9zM46.3 16.6h0.9v0.9h-0.9zM49.9 36.7h2.1v2.1h-2.1zM50.7 42.7h2.1v2.1h-2.1zM50.8 36.5h1.1v1.1h-1.1zM56.9 32.7h1.2v1.2h-1.2zM36 30.9h1.8v1.8h-1.8zM62.6 34.4h1.4v1.4h-1.4zM54.9 24.6h1.1v1.1h-1.1zM41 40.4h1.4v1.4h-1.4zM53.7 24.9h1.1v1.1h-1.1zM43 20.9h1.6v1.6h-1.6zM42.6 27.3h1.1v1.1h-1.1zM44.6 33.4h1.1v1.1h-1.1zM38.4 27.8h2.1v2.1h-2.1z"/><path fill="#f4a020" fill-opacity="1" d="M28.1 33.1h1.8v1.8h-1.8zM30.4 37.5h1.2v1.2h-1.2zM22.1 12.7h1.2v1.2h-1.2zM26.8 24.5a1.5 1.5 0 1 0 3 0a1.5 1.5 0 1 0 -3 0zM52.3 21.6h1.1v1.1h-1.1zM54 12.9h1.4v1.4h-1.4zM51 20.9a1.5 1.5 0 1 0 3 0a1.5 1.5 0 1 0 -3 0z"/><path fill="#e8a0e0" fill-opacity="0.6" d="M10 7.2h1.6v1.6h-1.6zM21.2 8.7h2.1v2.1h-2.1zM3.9 41.8h0.9v0.9h-0.9zM-0.5 29.6h1.1v1.1h-1.1zM8.5 17.1h1.2v1.2h-1.2z"/><path fill="#4a9ae8" fill-opacity="0.75" d="M8.1 25.7h1.4v1.4h-1.4zM11.3 29h2.1v2.1h-2.1zM13.6 42.9h2.1v2.1h-2.1zM24.1 18.7h2.1v2.1h-2.1zM24.3 42.9h2.1v2.1h-2.1zM19.2 33.8h1.4v1.4h-1.4zM21 34.5h0.9v0.9h-0.9zM24.5 21.6h1.8v1.8h-1.8zM18.7 35.9a1.5 1.5 0 1 0 3 0a1.5 1.5 0 1 0 -3 0zM33.2 23.2h1.6v1.6h-1.6zM6.9 24.5a1.5 1.5 0 1 0 3 0a1.5 1.5 0 1 0 -3 0zM22.5 36.9h0.9v0.9h-0.9zM20.1 7.1h1.8v1.8h-1.8zM15.1 43.1h1.4v1.4h-1.4zM11.8 22.5h2.1v2.1h-2.1zM16.7 29.2h2.1v2.1h-2.1zM57.5 30.7h0.9v0.9h-0.9zM61.9 12h1.4v1.4h-1.4zM41.9 21.1h1.8v1.8h-1.8zM44.3 31.4h1.2v1.2h-1.2zM43.1 32.8h1.4v1.4h-1.4zM37.7 19.6h2.1v2.1h-2.1z"/><path fill="#5ab8f0" fill-opacity="1" d="M14.4 24.8a1.5 1.5 0 1 0 3 0a1.5 1.5 0 1 0 -3 0zM64.7 23h1.1v1.1h-1.1zM55.3 17.9h1.2v1.2h-1.2zM60 19.1a1.5 1.5 0 1 0 3 0a1.5 1.5 0 1 0 -3 0zM64.1 30h0.9v0.9h-0.9zM59.9 36.5h1.4v1.4h-1.4zM39.3 26.3h1.1v1.1h-1.1z"/><path fill="#f0c228" fill-opacity="0.6" d="M6.3 21.7h0.9v0.9h-0.9zM17.9 24.7h1.4v1.4h-1.4zM33.1 27h1.8v1.8h-1.8zM19.4 37.6h0.9v0.9h-0.9zM21.7 24.3h1.4v1.4h-1.4zM24.8 15.3h1.6v1.6h-1.6zM46.9 24.2a1.5 1.5 0 1 0 3 0a1.5 1.5 0 1 0 -3 0zM55.5 33.4h0.9v0.9h-0.9zM33.2 15.1h1.6v1.6h-1.6zM64.7 24.3h1.4v1.4h-1.4z"/><path fill="#a070e0" fill-opacity="0.9" d="M19.8 23.7h1.8v1.8h-1.8zM11.8 25.8h0.9v0.9h-0.9zM13.4 43.2h1.2v1.2h-1.2zM47.7 28.4h1.1v1.1h-1.1zM48.8 31.5a1.5 1.5 0 1 0 3 0a1.5 1.5 0 1 0 -3 0z"/><path fill="#52a8f0" fill-opacity="0.75" d="M10.7 26.9h1.6v1.6h-1.6zM5.1 43.2h1.6v1.6h-1.6zM18.9 43.4h1.2v1.2h-1.2zM7.9 13.4a1.5 1.5 0 1 0 3 0a1.5 1.5 0 1 0 -3 0zM16.7 39.9h1.6v1.6h-1.6zM11.3 22.8h1.6v1.6h-1.6zM7.1 24h1.4v1.4h-1.4zM10.1 14.6h1.6v1.6h-1.6zM11.2 34.6h1.8v1.8h-1.8zM11.1 16.4h1.2v1.2h-1.2zM11.1 43.1h1.8v1.8h-1.8zM20 40.4h1.6v1.6h-1.6zM20.6 26.5h2.1v2.1h-2.1zM52.9 27.4a1.5 1.5 0 1 0 3 0a1.5 1.5 0 1 0 -3 0zM53.3 34h1.8v1.8h-1.8zM46 22a1.5 1.5 0 1 0 3 0a1.5 1.5 0 1 0 -3 0zM54.6 21.3h1.4v1.4h-1.4zM48.8 16.7h1.6v1.6h-1.6zM48.9 30.4h2.1v2.1h-2.1zM52.9 37.3h1.6v1.6h-1.6zM45.3 34.3h1.2v1.2h-1.2zM56.5 7.1h1.8v1.8h-1.8zM36.5 29.4h1.2v1.2h-1.2zM54.7 31.4a1.5 1.5 0 1 0 3 0a1.5 1.5 0 1 0 -3 0zM44.9 34.9h1.2v1.2h-1.2zM51.4 32.8h1.1v1.1h-1.1zM50.5 30a1.5 1.5 0 1 0 3 0a1.5 1.5 0 1 0 -3 0zM47.1 28.4h1.1v1.1h-1.1zM60.9 30.2h1.6v1.6h-1.6zM63 26.2h1.8v1.8h-1.8z"/><path fill="#f4a020" fill-opacity="0.6" d="M18.4 22h1.4v1.4h-1.4zM16.2 20.7h1.4v1.4h-1.4zM27.1 24.4h1.8v1.8h-1.8zM61.2 29.2h0.9v0.9h-0.9zM47.8 23.8a1.5 1.5 0 1 0 3 0a1.5 1.5 0 1 0 -3 0z"/><path fill="#2f6fd0" fill-opacity="0.75" d="M18.8 23.4h1.2v1.2h-1.2zM4.3 34.4h1.6v1.6h-1.6zM20.3 21.6a1.5 1.5 0 1 0 3 0a1.5 1.5 0 1 0 -3 0zM14.6 31.4h1.6v1.6h-1.6zM20.9 34.1h1.6v1.6h-1.6zM6.5 32.2h1.8v1.8h-1.8zM14.7 21.1h1.2v1.2h-1.2zM16 26.7h1.4v1.4h-1.4zM18.7 28.3h0.9v0.9h-0.9zM22.2 20.8h1.4v1.4h-1.4zM50.1 27.5h1.6v1.6h-1.6zM58.5 22.9a1.5 1.5 0 1 0 3 0a1.5 1.5 0 1 0 -3 0zM57.1 29.9h1.1v1.1h-1.1zM58.5 33.5a1.5 1.5 0 1 0 3 0a1.5 1.5 0 1 0 -3 0zM41.9 7.2h1.6v1.6h-1.6zM52.5 29.6h1.8v1.8h-1.8zM67.1 14h1.8v1.8h-1.8zM46.9 16.7h1.1v1.1h-1.1z"/><path fill="#2f6fd0" fill-opacity="0.9" d="M26.9 32.9a1.5 1.5 0 1 0 3 0a1.5 1.5 0 1 0 -3 0zM8 19.5a1.5 1.5 0 1 0 3 0a1.5 1.5 0 1 0 -3 0zM7.5 25.1h1.4v1.4h-1.4zM26.6 29.1a1.5 1.5 0 1 0 3 0a1.5 1.5 0 1 0 -3 0zM44 19.7h1.1v1.1h-1.1zM55.4 19.7h0.9v0.9h-0.9zM56.4 26.8h1.8v1.8h-1.8zM52.4 28.1a1.5 1.5 0 1 0 3 0a1.5 1.5 0 1 0 -3 0zM57.4 35.2h0.9v0.9h-0.9zM51.3 19.1h1.8v1.8h-1.8zM53.2 30.7h1.8v1.8h-1.8zM54.3 31.9h2.1v2.1h-2.1z"/><path fill="#3f8fe0" fill-opacity="0.6" d="M9.5 31.1h2.1v2.1h-2.1zM17.5 37h1.4v1.4h-1.4zM8.2 21.3h2.1v2.1h-2.1zM10.4 17.6a1.5 1.5 0 1 0 3 0a1.5 1.5 0 1 0 -3 0zM12 20.1h0.9v0.9h-0.9zM9.3 23.4h1.6v1.6h-1.6zM19.2 24.3h1.6v1.6h-1.6zM12.6 34.5h2.1v2.1h-2.1zM17.8 18.4h1.1v1.1h-1.1zM24.5 41.4a1.5 1.5 0 1 0 3 0a1.5 1.5 0 1 0 -3 0zM7.7 20.8h1.2v1.2h-1.2zM59.4 7.8h1.6v1.6h-1.6zM58.4 20.1a1.5 1.5 0 1 0 3 0a1.5 1.5 0 1 0 -3 0zM39.2 21.9a1.5 1.5 0 1 0 3 0a1.5 1.5 0 1 0 -3 0zM47 27h1.4v1.4h-1.4zM39.2 19.7h1.1v1.1h-1.1zM48.8 11.5h1.4v1.4h-1.4zM44.8 29.1h1.2v1.2h-1.2zM61.1 28h1.2v1.2h-1.2zM67.4 21.6h1.2v1.2h-1.2zM50 15.8h0.9v0.9h-0.9zM47.4 27.2h1.6v1.6h-1.6zM52.6 18.7h1.4v1.4h-1.4zM48.9 25.1h1.6v1.6h-1.6zM41.3 24.7h1.6v1.6h-1.6zM44.7 36.8h1.2v1.2h-1.2zM51.7 20.7h0.9v0.9h-0.9zM52 32.4h2.1v2.1h-2.1zM60.4 44a1.5 1.5 0 1 0 3 0a1.5 1.5 0 1 0 -3 0zM44.8 22.5h1.8v1.8h-1.8zM42.3 30.5h1.6v1.6h-1.6zM44.2 16h1.6v1.6h-1.6zM37.8 20.8a1.5 1.5 0 1 0 3 0a1.5 1.5 0 1 0 -3 0zM59.7 24.7h1.8v1.8h-1.8zM49.6 27.4h1.8v1.8h-1.8z"/><path fill="#52a8f0" fill-opacity="0.9" d="M26.1 30.2h2.1v2.1h-2.1zM28.9 19.2h1.6v1.6h-1.6zM7.3 20.9h1.2v1.2h-1.2zM17.2 19.1h1.1v1.1h-1.1zM1.7 23.1h1.6v1.6h-1.6zM12.8 13.7h2.1v2.1h-2.1zM33.3 30.3h1.4v1.4h-1.4zM19.6 33.8h1.2v1.2h-1.2zM-0.5 35.4h1.1v1.1h-1.1zM32.5 34.5h1.6v1.6h-1.6zM-0.7 24.5h1.4v1.4h-1.4zM14.1 30.3a1.5 1.5 0 1 0 3 0a1.5 1.5 0 1 0 -3 0zM20.6 30.1h0.9v0.9h-0.9zM14.3 8a1.5 1.5 0 1 0 3 0a1.5 1.5 0 1 0 -3 0zM11.3 10.9h0.9v0.9h-0.9zM27.7 28.7h1.8v1.8h-1.8zM23.8 27.6h0.9v0.9h-0.9zM61 25.8h0.9v0.9h-0.9zM43.6 29.1h1.2v1.2h-1.2zM40.5 14.1h1.8v1.8h-1.8zM49.9 28h1.6v1.6h-1.6zM56.3 24.1a1.5 1.5 0 1 0 3 0a1.5 1.5 0 1 0 -3 0zM46.1 11.2h1.8v1.8h-1.8zM59.3 34.5h0.9v0.9h-0.9zM46.4 27.4h1.2v1.2h-1.2zM51 41.9h1.1v1.1h-1.1zM40 21.7h0.9v0.9h-0.9z"/><path fill="#2f6fd0" fill-opacity="0.6" d="M4.6 39.4h1.4v1.4h-1.4zM23.6 22.5h1.2v1.2h-1.2zM25.5 44a1.5 1.5 0 1 0 3 0a1.5 1.5 0 1 0 -3 0zM17 33.2h1.2v1.2h-1.2zM12.9 35.4h1.8v1.8h-1.8zM11.5 21.9h0.9v0.9h-0.9zM5.1 25.1a1.5 1.5 0 1 0 3 0a1.5 1.5 0 1 0 -3 0zM-0.4 24.2h0.9v0.9h-0.9zM21.3 27.5h1.8v1.8h-1.8zM44.8 26.5h1.4v1.4h-1.4zM48.9 19h1.2v1.2h-1.2zM40.6 20.8h2.1v2.1h-2.1zM33.2 27.5h1.6v1.6h-1.6zM44.9 24.1h1.1v1.1h-1.1zM48.2 13.6a1.5 1.5 0 1 0 3 0a1.5 1.5 0 1 0 -3 0zM53.1 28h1.2v1.2h-1.2zM50.3 22h1.2v1.2h-1.2zM48.6 31.8a1.5 1.5 0 1 0 3 0a1.5 1.5 0 1 0 -3 0zM46.3 27.4h1.8v1.8h-1.8zM59.8 34.6h1.6v1.6h-1.6zM49.2 17.2h1.1v1.1h-1.1zM58.8 29.8a1.5 1.5 0 1 0 3 0a1.5 1.5 0 1 0 -3 0zM37.5 28.3h1.4v1.4h-1.4z"/><path fill="#e04434" fill-opacity="0.6" d="M10.7 15.1a1.5 1.5 0 1 0 3 0a1.5 1.5 0 1 0 -3 0zM24.7 26.3a1.5 1.5 0 1 0 3 0a1.5 1.5 0 1 0 -3 0zM9.4 21.3h1.6v1.6h-1.6zM4.5 27.8h1.6v1.6h-1.6zM17.3 23.5h2.1v2.1h-2.1zM22.6 23.8h1.4v1.4h-1.4zM14 29.2h0.9v0.9h-0.9zM57.3 30.4h2.1v2.1h-2.1zM65.9 34.9h1.2v1.2h-1.2zM48.3 38.2h1.1v1.1h-1.1z"/><path fill="#4a9ae8" fill-opacity="1" d="M29.1 33.3h1.6v1.6h-1.6zM11.7 21.9h1.6v1.6h-1.6zM26.4 20.9h0.9v0.9h-0.9zM18.8 15.6h1.6v1.6h-1.6zM4 23.5h1.4v1.4h-1.4zM52.9 36.2h1.6v1.6h-1.6zM40.1 17.6h1.2v1.2h-1.2zM52.2 44a1.5 1.5 0 1 0 3 0a1.5 1.5 0 1 0 -3 0zM50.5 24.9a1.5 1.5 0 1 0 3 0a1.5 1.5 0 1 0 -3 0zM49.1 28.6a1.5 1.5 0 1 0 3 0a1.5 1.5 0 1 0 -3 0zM33.7 29h1.6v1.6h-1.6zM45.6 27.7a1.5 1.5 0 1 0 3 0a1.5 1.5 0 1 0 -3 0zM41.9 29.4h2.1v2.1h-2.1zM51.6 28h0.9v0.9h-0.9zM57.9 21.3h1.8v1.8h-1.8zM41.1 30.2h1.2v1.2h-1.2zM40.1 21.4h0.9v0.9h-0.9zM41.1 30.2a1.5 1.5 0 1 0 3 0a1.5 1.5 0 1 0 -3 0zM53.4 34.2h1.1v1.1h-1.1z"/><path fill="#38b060" fill-opacity="1" d="M13.7 17a1.5 1.5 0 1 0 3 0a1.5 1.5 0 1 0 -3 0zM16.1 37.5h1.8v1.8h-1.8zM8.3 18.7h1.4v1.4h-1.4zM16.8 19.1h1.4v1.4h-1.4zM40.7 20.6h1.6v1.6h-1.6zM66.3 22h1.8v1.8h-1.8zM41.1 28.3h2.1v2.1h-2.1z"/><path fill="#f080c0" fill-opacity="0.75" d="M8 36h1.1v1.1h-1.1zM18.9 28.1h1.6v1.6h-1.6zM52.6 34.6a1.5 1.5 0 1 0 3 0a1.5 1.5 0 1 0 -3 0zM45.5 13.8h0.9v0.9h-0.9z"/><path fill="#e04434" fill-opacity="0.75" d="M22.3 16.2h1.2v1.2h-1.2zM16.2 8.4a1.5 1.5 0 1 0 3 0a1.5 1.5 0 1 0 -3 0zM27 24.6h1.1v1.1h-1.1zM15.9 32.7h0.9v0.9h-0.9zM27.4 11.7h0.9v0.9h-0.9zM26.2 25.1h2.1v2.1h-2.1zM25.6 28.7h1.8v1.8h-1.8zM20.2 25.7h0.9v0.9h-0.9zM16.7 35.9h1.6v1.6h-1.6zM13.2 28.8h1.6v1.6h-1.6zM15.5 36.9h1.8v1.8h-1.8zM5.1 28.7h1.4v1.4h-1.4zM44.6 20.7a1.5 1.5 0 1 0 3 0a1.5 1.5 0 1 0 -3 0zM48.3 26.3h1.4v1.4h-1.4zM53.3 30.1h1.1v1.1h-1.1zM58.1 24.3h1.2v1.2h-1.2z"/><path fill="#e04434" fill-opacity="0.9" d="M30 24h1.2v1.2h-1.2zM13.3 17h2.1v2.1h-2.1zM2.8 24.3h1.1v1.1h-1.1zM-0.6 31h2.1v2.1h-2.1zM9.9 18.1a1.5 1.5 0 1 0 3 0a1.5 1.5 0 1 0 -3 0zM26.3 12.2h1.8v1.8h-1.8zM51.7 31h0.9v0.9h-0.9zM64.4 27.9h1.4v1.4h-1.4zM53.6 34h1.2v1.2h-1.2z"/><path fill="#f4d040" fill-opacity="0.6" d="M20.9 26.2h0.9v0.9h-0.9zM33.5 16.7h0.9v0.9h-0.9zM23.5 34.6a1.5 1.5 0 1 0 3 0a1.5 1.5 0 1 0 -3 0zM8.5 25.3h1.1v1.1h-1.1zM15.6 8h0.9v0.9h-0.9zM42.1 16.7a1.5 1.5 0 1 0 3 0a1.5 1.5 0 1 0 -3 0z"/><path fill="#f0c228" fill-opacity="0.9" d="M8 17.6h1.8v1.8h-1.8zM24.7 13.1h1.8v1.8h-1.8zM10.9 36.9h1.2v1.2h-1.2zM16.2 20.7h1.8v1.8h-1.8zM16.1 33.7a1.5 1.5 0 1 0 3 0a1.5 1.5 0 1 0 -3 0zM59.4 29.4h1.2v1.2h-1.2zM48 19.8h2.1v2.1h-2.1zM49.1 15.2h1.8v1.8h-1.8zM50.4 22.1h1.4v1.4h-1.4zM62.1 22.6h2.1v2.1h-2.1z"/><path fill="#f4a020" fill-opacity="0.75" d="M9.6 26.2h1.1v1.1h-1.1zM17.9 20.5h1.2v1.2h-1.2zM20.1 18h1.2v1.2h-1.2zM14.9 23.3h1.2v1.2h-1.2zM67.5 22.4h1.1v1.1h-1.1zM55.4 43.6h0.9v0.9h-0.9zM50.4 30.3h1.4v1.4h-1.4zM51.4 16.5h1.2v1.2h-1.2z"/><path fill="#3f8fe0" fill-opacity="0.9" d="M12.9 16.2h2.1v2.1h-2.1zM14.4 42.5h1.4v1.4h-1.4zM26.6 20.9h1.4v1.4h-1.4zM27.6 23.6h0.9v0.9h-0.9zM11.5 21.5h1.6v1.6h-1.6zM17.2 13.1h1.4v1.4h-1.4zM16 13.3h1.2v1.2h-1.2zM13.6 25.5h1.6v1.6h-1.6zM16.3 7.6h0.9v0.9h-0.9zM20.4 28.2h1.2v1.2h-1.2zM8.7 31.4h0.9v0.9h-0.9zM4.2 14.1h1.2v1.2h-1.2zM5.4 28.2h0.9v0.9h-0.9zM16.6 28.7h1.1v1.1h-1.1zM67.2 19.4h1.6v1.6h-1.6zM55.1 23.8h1.1v1.1h-1.1zM35.4 8.9h1.2v1.2h-1.2zM42.6 24.2h1.6v1.6h-1.6zM67.1 23.4h1.8v1.8h-1.8zM51.2 27.5h1.4v1.4h-1.4zM46.2 40.1h1.8v1.8h-1.8zM59.4 20.2h1.8v1.8h-1.8zM57.3 17.4h1.8v1.8h-1.8zM50.5 20.8h0.9v0.9h-0.9zM61 22.2h1.4v1.4h-1.4zM54.9 32.7h0.9v0.9h-0.9zM53.1 26.7h1.4v1.4h-1.4zM46.9 25.6h1.4v1.4h-1.4zM54.7 7.3h1.8v1.8h-1.8zM50.5 25.3h1.6v1.6h-1.6z"/><path fill="#f0c228" fill-opacity="1" d="M3.8 17.7a1.5 1.5 0 1 0 3 0a1.5 1.5 0 1 0 -3 0zM9.7 29.6h2.1v2.1h-2.1zM33.6 23.5h0.9v0.9h-0.9zM20.4 28.5h1.1v1.1h-1.1zM0.4 23.5a1.5 1.5 0 1 0 3 0a1.5 1.5 0 1 0 -3 0zM2.5 19a1.5 1.5 0 1 0 3 0a1.5 1.5 0 1 0 -3 0zM15.4 16.6h0.9v0.9h-0.9zM44 20.9h1.2v1.2h-1.2zM43.8 14.4h2.1v2.1h-2.1zM55.4 22.1h1.2v1.2h-1.2zM38.5 32.2h1.2v1.2h-1.2zM63.2 19.5h0.9v0.9h-0.9z"/><path fill="#38b060" fill-opacity="0.9" d="M11.4 32.1h1.8v1.8h-1.8zM13.8 42.5h1.2v1.2h-1.2zM2.5 22.1h1.4v1.4h-1.4zM16.2 28a1.5 1.5 0 1 0 3 0a1.5 1.5 0 1 0 -3 0zM54.1 30.5h1.8v1.8h-1.8zM46.2 35.7h1.8v1.8h-1.8zM53.2 21.6h2.1v2.1h-2.1z"/><path fill="#f080c0" fill-opacity="0.9" d="M11.5 22.8h1.2v1.2h-1.2zM24.2 31.9h1.4v1.4h-1.4zM19.3 23.8h0.9v0.9h-0.9zM25.1 24.2h0.9v0.9h-0.9zM9.9 43.5h1.1v1.1h-1.1zM59.9 14h1.1v1.1h-1.1zM51.9 27.6h2.1v2.1h-2.1zM55.4 29.4h1.2v1.2h-1.2zM49.5 24.9h1.4v1.4h-1.4zM43.2 24.3h1.2v1.2h-1.2z"/><path fill="#5050d8" fill-opacity="0.6" d="M11.8 28h1.2v1.2h-1.2zM8.3 36.4h2.1v2.1h-2.1zM8.7 9.5h2.1v2.1h-2.1zM67.4 34h1.2v1.2h-1.2zM57.1 14.1h1.1v1.1h-1.1zM54.4 28h1.8v1.8h-1.8zM55.4 30.9h1.8v1.8h-1.8zM46.5 33.1h1.1v1.1h-1.1z"/><path fill="#2f6fd0" fill-opacity="1" d="M24.1 22.3a1.5 1.5 0 1 0 3 0a1.5 1.5 0 1 0 -3 0zM14.5 22.9h1.4v1.4h-1.4zM29.7 43.2h1.6v1.6h-1.6zM32.5 38.4a1.5 1.5 0 1 0 3 0a1.5 1.5 0 1 0 -3 0zM55.2 39.3h1.6v1.6h-1.6zM48.5 11.6h1.4v1.4h-1.4zM46.7 27.7h1.2v1.2h-1.2zM56.5 17.5h1.2v1.2h-1.2zM46.7 20.7h1.2v1.2h-1.2zM55.7 22.7h1.1v1.1h-1.1zM38.7 28.7h1.6v1.6h-1.6z"/><path fill="#52a8f0" fill-opacity="0.6" d="M18.9 28.7h1.1v1.1h-1.1zM15.7 15.5h1.8v1.8h-1.8zM10.3 20.9h2.1v2.1h-2.1zM9.5 38h2.1v2.1h-2.1zM9.7 30h0.9v0.9h-0.9zM7.4 43.2h1.6v1.6h-1.6zM28 11.9h1.6v1.6h-1.6zM9.9 18.7h1.8v1.8h-1.8zM53.5 32.3h2.1v2.1h-2.1zM51.1 34.9h1.1v1.1h-1.1zM60.9 31.1h0.9v0.9h-0.9zM39.6 36.3a1.5 1.5 0 1 0 3 0a1.5 1.5 0 1 0 -3 0zM57.2 32.6h1.6v1.6h-1.6zM50.4 33.1h1.8v1.8h-1.8zM51.6 16.5h1.2v1.2h-1.2zM44 25.4h1.1v1.1h-1.1zM55.8 9.8h1.2v1.2h-1.2zM67.6 19.1h0.9v0.9h-0.9zM48.3 23.6h1.1v1.1h-1.1zM49.5 32.2h1.8v1.8h-1.8zM49.8 20h1.6v1.6h-1.6zM48.8 25.8h1.2v1.2h-1.2z"/><path fill="#5050d8" fill-opacity="1" d="M16.2 24.9h1.4v1.4h-1.4zM0.7 22.4a1.5 1.5 0 1 0 3 0a1.5 1.5 0 1 0 -3 0zM9.4 24.5h0.9v0.9h-0.9zM11.8 18h1.4v1.4h-1.4zM11.5 19.5h0.9v0.9h-0.9zM18.1 11.1h0.9v0.9h-0.9zM53.8 37.2h2.1v2.1h-2.1zM48.8 6.9h2.1v2.1h-2.1zM41.2 15.1h1.4v1.4h-1.4zM33.2 21.7h1.6v1.6h-1.6zM42.6 42h2.1v2.1h-2.1zM42.9 24.8a1.5 1.5 0 1 0 3 0a1.5 1.5 0 1 0 -3 0zM43.5 41h1.4v1.4h-1.4z"/><path fill="#f4d040" fill-opacity="0.9" d="M2.4 30.4h1.6v1.6h-1.6zM16.6 19.3h1.8v1.8h-1.8zM44.7 24a1.5 1.5 0 1 0 3 0a1.5 1.5 0 1 0 -3 0zM42.1 25.1h2.1v2.1h-2.1zM46.5 9.8a1.5 1.5 0 1 0 3 0a1.5 1.5 0 1 0 -3 0zM47.8 33.5a1.5 1.5 0 1 0 3 0a1.5 1.5 0 1 0 -3 0z"/><path fill="#f4a020" fill-opacity="0.9" d="M19 22.1h1.4v1.4h-1.4zM13 20.1h1.2v1.2h-1.2zM12.6 22.3h1.6v1.6h-1.6zM54.1 31.5h1.1v1.1h-1.1zM47.5 26.4h1.1v1.1h-1.1zM62 22h2.1v2.1h-2.1zM57.7 25.5h2.1v2.1h-2.1z"/><path fill="#f0c228" fill-opacity="0.75" d="M10.4 27.6h2.1v2.1h-2.1zM11.6 37.4a1.5 1.5 0 1 0 3 0a1.5 1.5 0 1 0 -3 0zM14.9 35.7h1.6v1.6h-1.6zM5.1 22.1h1.4v1.4h-1.4zM50.1 26.1h1.8v1.8h-1.8zM42.8 22a1.5 1.5 0 1 0 3 0a1.5 1.5 0 1 0 -3 0zM39.6 30.9h1.2v1.2h-1.2zM64.7 23.1h1.8v1.8h-1.8zM39.2 33.4h1.8v1.8h-1.8zM37.7 28.3h1.6v1.6h-1.6zM46.8 13.1h1.6v1.6h-1.6zM51.5 7.9h2.1v2.1h-2.1zM49.5 10.9h0.9v0.9h-0.9zM45.4 12.7h1.1v1.1h-1.1zM40.7 42.6h0.9v0.9h-0.9zM54.3 20.4h1.2v1.2h-1.2z"/><path fill="#5ab8f0" fill-opacity="0.75" d="M9.1 30.2h0.9v0.9h-0.9zM22.6 18h1.4v1.4h-1.4zM18.2 43.5h1.1v1.1h-1.1zM17.7 12.1h1.4v1.4h-1.4zM43.8 23.8h2.1v2.1h-2.1zM39.7 34.9h1.2v1.2h-1.2zM44.3 15.6h1.6v1.6h-1.6z"/><path fill="#f080c0" fill-opacity="1" d="M16.5 7.9h1.6v1.6h-1.6zM20 20.7h0.9v0.9h-0.9zM17.4 24.9h1.1v1.1h-1.1zM53.8 19.4h1.4v1.4h-1.4zM60.4 24.3h1.8v1.8h-1.8zM59 13h1.8v1.8h-1.8zM39.4 28.6h1.6v1.6h-1.6z"/><path fill="#f4d040" fill-opacity="1" d="M5.2 10.6h1.8v1.8h-1.8zM16.8 28.9h1.4v1.4h-1.4zM15.1 28.4a1.5 1.5 0 1 0 3 0a1.5 1.5 0 1 0 -3 0zM16.5 14.2h0.9v0.9h-0.9zM50.6 24.8h2.1v2.1h-2.1zM57.6 11.1h0.9v0.9h-0.9zM58.1 33.2h1.2v1.2h-1.2z"/><path fill="#f4d040" fill-opacity="0.75" d="M24.7 17.8h0.9v0.9h-0.9zM21.4 19.9h1.2v1.2h-1.2zM42.1 36.4h1.1v1.1h-1.1zM40.6 19.8h1.8v1.8h-1.8z"/><path fill="#e04434" fill-opacity="1" d="M22 24h0.9v0.9h-0.9zM22.2 12.4h1.2v1.2h-1.2zM13.2 25.2a1.5 1.5 0 1 0 3 0a1.5 1.5 0 1 0 -3 0zM9.6 26.5h1.6v1.6h-1.6zM9.1 11.8h1.1v1.1h-1.1zM19.3 15.8h1.6v1.6h-1.6zM9.5 29.7h1.8v1.8h-1.8zM58.8 29.2h2.1v2.1h-2.1zM51.5 25.5a1.5 1.5 0 1 0 3 0a1.5 1.5 0 1 0 -3 0zM36.3 36h1.6v1.6h-1.6zM43.8 28.3h1.4v1.4h-1.4zM49.9 13.9a1.5 1.5 0 1 0 3 0a1.5 1.5 0 1 0 -3 0zM50.4 16.2h1.4v1.4h-1.4zM55.7 13.2a1.5 1.5 0 1 0 3 0a1.5 1.5 0 1 0 -3 0zM66.9 31.3h2.1v2.1h-2.1z"/><path fill="#38b060" fill-opacity="0.6" d="M18.2 23.4h1.8v1.8h-1.8zM54 34.2h2.1v2.1h-2.1zM47.1 36.6h0.9v0.9h-0.9zM52.4 27.3h1.1v1.1h-1.1z"/><path fill="#a070e0" fill-opacity="0.75" d="M27.3 16.3h0.9v0.9h-0.9zM45.1 18.7h1.2v1.2h-1.2zM41.1 39.1h1.4v1.4h-1.4z"/><path fill="#5050d8" fill-opacity="0.75" d="M10.2 35.8h1.1v1.1h-1.1zM43.1 43.4h1.2v1.2h-1.2zM59.1 20.9a1.5 1.5 0 1 0 3 0a1.5 1.5 0 1 0 -3 0z"/><path fill="#e8a0e0" fill-opacity="0.75" d="M17.8 22.2h0.9v0.9h-0.9zM25.8 23.1h2.1v2.1h-2.1zM16.9 33.3h1.2v1.2h-1.2zM18.5 31.7h1.8v1.8h-1.8zM60.8 24h1.6v1.6h-1.6z"/><path fill="#38b060" fill-opacity="0.75" d="M19.4 32.5h1.1v1.1h-1.1zM23.8 21.5a1.5 1.5 0 1 0 3 0a1.5 1.5 0 1 0 -3 0zM14.5 23.6h1.4v1.4h-1.4zM21.8 24.7h1.2v1.2h-1.2zM25.5 37.9h1.1v1.1h-1.1zM58.4 37.6h0.9v0.9h-0.9zM44.7 30.4a1.5 1.5 0 1 0 3 0a1.5 1.5 0 1 0 -3 0zM50.4 35.6h1.1v1.1h-1.1zM38 24.8h1.1v1.1h-1.1zM46.6 10.4h1.6v1.6h-1.6z"/><path fill="#5050d8" fill-opacity="0.9" d="M3.7 20.6h2.1v2.1h-2.1zM20.1 37.4h1.6v1.6h-1.6zM53.1 22.2h1.2v1.2h-1.2zM42.5 25.5h1.4v1.4h-1.4z"/><path fill="#5ab8f0" fill-opacity="0.9" d="M15.3 23.4h1.1v1.1h-1.1zM13.2 29.9h2.1v2.1h-2.1zM56.3 12.2h1.8v1.8h-1.8zM42.5 39h2.1v2.1h-2.1z"/><path fill="#e8a0e0" fill-opacity="1" d="M22.8 10.1a1.5 1.5 0 1 0 3 0a1.5 1.5 0 1 0 -3 0zM1.6 28.9h1.2v1.2h-1.2zM48 14.5h1.8v1.8h-1.8zM48.3 18.7h1.6v1.6h-1.6zM42.9 30.2a1.5 1.5 0 1 0 3 0a1.5 1.5 0 1 0 -3 0z"/><path fill="#a070e0" fill-opacity="1" d="M13.7 34h2.1v2.1h-2.1zM22.2 29.8h1.2v1.2h-1.2zM33.4 27.6h1.2v1.2h-1.2z"/><path fill="#5ab8f0" fill-opacity="0.6" d="M4.6 25.9h0.9v0.9h-0.9zM10.9 35.5h1.4v1.4h-1.4zM52.7 36.9h0.9v0.9h-0.9zM59.4 32.5h1.4v1.4h-1.4z"/><path fill="#f080c0" fill-opacity="0.6" d="M52.4 37.9h1.1v1.1h-1.1zM37.2 34.5h0.9v0.9h-0.9zM57.1 33.6h1.4v1.4h-1.4z"/><path fill="#e8a0e0" fill-opacity="0.9" d="M65.8 15.6h1.1v1.1h-1.1zM47.3 21.1h0.9v0.9h-0.9zM52.8 34.1a1.5 1.5 0 1 0 3 0a1.5 1.5 0 1 0 -3 0zM42 22.9h1.8v1.8h-1.8zM33.9 24.4h0.9v0.9h-0.9z"/><rect x="31" y="7" width="3.2" height="38" fill="#000" fill-opacity="0.75"/><path fill="#000" fill-opacity="0.6" d="M0 36h6v6h-6z"/><path fill="#f090c8" d="M63.2 16.5a2.3 2.3 0 1 0 4.6 0a2.3 2.3 0 1 0 -4.6 0zM54.8 20.5a2.2 2.2 0 1 0 4.4 0a2.2 2.2 0 1 0 -4.4 0zM11 11a2 2 0 1 0 4 0a2 2 0 1 0 -4 0z"/><path fill="#a060e0" d="M43.4 22a2.6 2.6 0 1 0 5.2 0a2.6 2.6 0 1 0 -5.2 0z"/><path fill="#c090e8" d="M16 27a2 2 0 1 0 4 0a2 2 0 1 0 -4 0z"/></g></g><polygon points="0.8,0.95 67.9,0.95 0.8,38.8" fill="url(#gl36)"/><rect x="0.8" y="0.95" width="67.1" height="0.8" fill="#fff" fill-opacity="0.07"/><rect x="0.8" y="0.95" width="0.7" height="36.8" fill="#fff" fill-opacity="0.05"/></g></g></svg></div><div class="lb" style="left:504.8px"><span style="top:642.1px;letter-spacing:-0.06px">Flower Elements</span><span style="top:660.1px;letter-spacing:0.18px">5.mov</span></div>
<div class="ic" style="left:666px;top:569px"><svg width="68.4" height="53" viewBox="0 0 68.4 53" ><g transform="translate(0.9,0.9)"><defs><linearGradient id="gl37" gradientUnits="userSpaceOnUse" x1="0" y1="0" x2="68" y2="14"><stop offset="0" stop-color="#fff" stop-opacity="0.26"/><stop offset="0.5" stop-color="#fff" stop-opacity="0.17"/><stop offset="1" stop-color="#fff" stop-opacity="0.07"/></linearGradient><clipPath id="cp37"><rect x="-0.35" y="7.14" width="69.3" height="40.03"/></clipPath><filter id="bl37" x="-5%" y="-5%" width="110%" height="110%"><feGaussianBlur stdDeviation="0.4"/></filter></defs><g transform="translate(0,0)"><rect x="-0.4" y="0.3" width="69.2" height="54.0" fill="#000" fill-opacity="0.25"/><rect x="0" y="0" width="68.4" height="52.8" fill="#000"/><g clip-path="url(#cp37)"><g filter="url(#bl37)" transform="translate(-0.35,0.555) scale(1.019,1.0135)"><path fill="#e0c868" fill-opacity="0.8" d="M10.7 8.8h2.5v2.5h-2.5zM4.7 15.3h0.9v0.9h-0.9zM-2.6 10h1.2v1.2h-1.2zM61.3 8.2h1.9v1.9h-1.9zM64.1 17.8h2.5v2.5h-2.5zM63.7 21.4h0.9v0.9h-0.9zM65.2 19.8h1.2v1.2h-1.2z"/><path fill="#c880c8" fill-opacity="0.4" d="M1 11.2h0.9v0.9h-0.9zM9.1 7.4h0.9v0.9h-0.9zM-2.4 8.4h0.9v0.9h-0.9zM5.9 8.4h1.9v1.9h-1.9zM5.4 12.9h1.6v1.6h-1.6zM0.9 5h1.9v1.9h-1.9zM7 8.3h1.9v1.9h-1.9zM56.9 12.8h2.5v2.5h-2.5zM58.7 17.4h1.2v1.2h-1.2zM61.9 10.4h2.5v2.5h-2.5zM62.1 11.9h2.5v2.5h-2.5z"/><path fill="#b868b8" fill-opacity="0.6" d="M3.2 10.4h1.6v1.6h-1.6zM9.5 7.9h2.5v2.5h-2.5zM8.3 8.8h0.9v0.9h-0.9zM56.8 14.2h1.9v1.9h-1.9zM61.5 11.1h0.9v0.9h-0.9zM62.9 24.7h1.2v1.2h-1.2z"/><path fill="#80a8c0" fill-opacity="0.6" d="M13 10.9h1.2v1.2h-1.2zM3.5 13.2h2.5v2.5h-2.5zM3.5 19.3h1.2v1.2h-1.2zM-0.2 17h1.2v1.2h-1.2zM68.6 13.9h0.9v0.9h-0.9zM63.1 8.8h2.5v2.5h-2.5zM59.5 16.4h0.9v0.9h-0.9zM62.3 21.4h1.9v1.9h-1.9z"/><path fill="#d898d0" fill-opacity="0.4" d="M8.1 14.7h1.6v1.6h-1.6zM3.8 10.7h1.9v1.9h-1.9zM1.6 23.9h0.9v0.9h-0.9zM2.1 26.4h1.9v1.9h-1.9zM61.8 6h1.9v1.9h-1.9zM58 12.3h0.9v0.9h-0.9zM62.8 14.1h1.6v1.6h-1.6zM62.5 26.3h1.6v1.6h-1.6zM61 24.2h2.5v2.5h-2.5z"/><path fill="#a058a8" fill-opacity="0.6" d="M-1.7 7.4h2.5v2.5h-2.5zM7.4 6.7h1.6v1.6h-1.6zM4.1 14.5h1.9v1.9h-1.9zM8.2 16.5h0.9v0.9h-0.9zM4.8 22.1h2.5v2.5h-2.5zM60.7 9.9h2.5v2.5h-2.5zM66.2 8.3h1.9v1.9h-1.9zM50.6 16.3h2.5v2.5h-2.5z"/><path fill="#a058a8" fill-opacity="0.4" d="M9.4 9.8h1.6v1.6h-1.6zM10 7.3h2.5v2.5h-2.5zM5.8 11.3h0.9v0.9h-0.9zM-0.4 7.1h2.5v2.5h-2.5zM4.1 8.8h1.6v1.6h-1.6zM7.2 12.8h1.2v1.2h-1.2zM5.6 22.4h0.9v0.9h-0.9zM62.7 14.6h1.9v1.9h-1.9zM65.6 7.8h2.5v2.5h-2.5zM58.9 10.4h0.9v0.9h-0.9zM54.5 14.3h1.2v1.2h-1.2zM62.5 30.8h2.5v2.5h-2.5z"/><path fill="#d898d0" fill-opacity="0.6" d="M7.6 5.7h1.6v1.6h-1.6zM4.7 9.8h0.9v0.9h-0.9zM57.8 7.7h1.9v1.9h-1.9zM58.7 10.2h1.9v1.9h-1.9zM61.6 17.5h2.5v2.5h-2.5zM55.7 12.2h1.9v1.9h-1.9z"/><path fill="#d898d0" fill-opacity="0.8" d="M-0.4 10h2.5v2.5h-2.5zM3 16.9h0.9v0.9h-0.9zM13.5 10.1h1.6v1.6h-1.6zM62.2 18h1.9v1.9h-1.9zM66.5 15.9h1.9v1.9h-1.9zM52.6 12.8h1.9v1.9h-1.9zM58.8 11.6h1.9v1.9h-1.9zM56 10.3h1.6v1.6h-1.6zM60.6 13.4h0.9v0.9h-0.9zM60.5 14.3h1.6v1.6h-1.6zM63.1 24.8h1.2v1.2h-1.2z"/><path fill="#d8b850" fill-opacity="0.6" d="M0.7 9.4h1.2v1.2h-1.2zM3.7 12.3h1.9v1.9h-1.9zM5.4 12.5h1.9v1.9h-1.9zM4 18.5h2.5v2.5h-2.5zM54.9 9.6h2.5v2.5h-2.5zM62.5 13.6h0.9v0.9h-0.9zM65.4 23.8h1.2v1.2h-1.2zM60.4 25.9h1.9v1.9h-1.9z"/><path fill="#d8b850" fill-opacity="0.8" d="M4.1 11.7h1.9v1.9h-1.9zM8 12.6h1.6v1.6h-1.6zM57 9.1h1.2v1.2h-1.2z"/><path fill="#d0a090" fill-opacity="0.8" d="M4.8 8.9h1.2v1.2h-1.2zM7.8 14.8h1.2v1.2h-1.2zM4 29.4h1.2v1.2h-1.2zM56.3 14.4h1.6v1.6h-1.6zM55.7 9.5h1.9v1.9h-1.9zM61.7 9.6h1.9v1.9h-1.9zM60.9 15.5h1.9v1.9h-1.9z"/><path fill="#b868b8" fill-opacity="0.4" d="M6.6 13.1h0.9v0.9h-0.9zM8.7 13h1.6v1.6h-1.6zM2.1 15h1.6v1.6h-1.6zM55.4 10.7h0.9v0.9h-0.9zM58.6 11.1h1.2v1.2h-1.2zM61.5 10.8h2.5v2.5h-2.5zM63.1 25.1h1.2v1.2h-1.2z"/><path fill="#a058a8" fill-opacity="0.8" d="M3.3 10h2.5v2.5h-2.5zM7.6 14.5h2.5v2.5h-2.5zM8.1 16.3h1.6v1.6h-1.6zM1.5 13.2h0.9v0.9h-0.9zM5.9 12.8h1.6v1.6h-1.6zM4.1 27.1h1.6v1.6h-1.6zM3.7 14.7h0.9v0.9h-0.9zM59.3 18h0.9v0.9h-0.9zM65.3 22.7h1.2v1.2h-1.2zM63.6 21.8h1.9v1.9h-1.9zM60.2 21.3h1.6v1.6h-1.6z"/><path fill="#80a8c0" fill-opacity="0.4" d="M0.4 14h2.5v2.5h-2.5zM1.7 20h1.6v1.6h-1.6zM3.2 14h1.9v1.9h-1.9zM6.1 23.5h1.9v1.9h-1.9zM62.9 14.2h1.6v1.6h-1.6zM60 11.9h1.9v1.9h-1.9zM55.8 14.1h1.2v1.2h-1.2z"/><path fill="#e0c868" fill-opacity="0.4" d="M12.4 15.1h2.5v2.5h-2.5zM4.5 8.8h1.2v1.2h-1.2zM4 10.6h1.2v1.2h-1.2zM8.4 12.5h1.2v1.2h-1.2zM3.8 26.2h1.2v1.2h-1.2zM4.1 22.7h2.5v2.5h-2.5zM63.1 14.2h1.2v1.2h-1.2zM60.8 11.1h0.9v0.9h-0.9zM63.8 22.5h0.9v0.9h-0.9z"/><path fill="#c880c8" fill-opacity="0.8" d="M4.7 13.4h0.9v0.9h-0.9zM65.3 11.2h1.6v1.6h-1.6zM65.2 21.2h1.6v1.6h-1.6z"/><path fill="#b868b8" fill-opacity="0.8" d="M0.3 9.6h1.9v1.9h-1.9zM1.4 19h1.9v1.9h-1.9zM58.4 13h1.9v1.9h-1.9zM63.4 10.4h1.6v1.6h-1.6zM59.6 15.8h0.9v0.9h-0.9z"/><path fill="#80a8c0" fill-opacity="0.8" d="M7.5 7.5h0.9v0.9h-0.9zM5.5 28.8h2.5v2.5h-2.5zM49.8 12.7h2.5v2.5h-2.5zM55.4 10h1.9v1.9h-1.9zM62.3 19.7h1.6v1.6h-1.6z"/><path fill="#d0a090" fill-opacity="0.6" d="M3.5 11.8h1.2v1.2h-1.2zM8.5 14h1.6v1.6h-1.6zM9.8 9.8h1.6v1.6h-1.6zM-3 10.5h1.9v1.9h-1.9zM1.2 26.3h2.5v2.5h-2.5zM67.7 11h0.9v0.9h-0.9z"/><path fill="#d0a090" fill-opacity="0.4" d="M8.1 7.7h2.5v2.5h-2.5zM12.5 16h0.9v0.9h-0.9zM1.5 9.7h2.5v2.5h-2.5zM6.5 19.9h1.9v1.9h-1.9zM6.7 16.6h0.9v0.9h-0.9zM60.6 14h2.5v2.5h-2.5zM64.5 14.5h1.2v1.2h-1.2zM63.9 29.3h1.2v1.2h-1.2z"/><path fill="#e0c868" fill-opacity="0.6" d="M11.9 8.7h0.9v0.9h-0.9zM12.5 8.5h0.9v0.9h-0.9zM6.1 7.9h2.5v2.5h-2.5zM1.8 19.6h1.9v1.9h-1.9zM56.1 13h1.2v1.2h-1.2zM62.6 15h1.6v1.6h-1.6zM58.6 10.6h0.9v0.9h-0.9zM59.7 20.9h1.2v1.2h-1.2z"/><path fill="#d8b850" fill-opacity="0.4" d="M1.7 17.1h1.2v1.2h-1.2zM56.3 16.3h1.2v1.2h-1.2zM60.1 17.2h1.9v1.9h-1.9zM60.5 15.3h1.2v1.2h-1.2zM55.2 10.2h1.9v1.9h-1.9zM57.4 8.6h1.2v1.2h-1.2zM53.9 13h1.9v1.9h-1.9z"/><path fill="#c880c8" fill-opacity="0.6" d="M-2.8 12.1h1.6v1.6h-1.6zM8.7 13.1h2.5v2.5h-2.5zM58.8 6.9h1.9v1.9h-1.9zM66.4 11.2h1.9v1.9h-1.9zM61 23h1.9v1.9h-1.9zM62.8 28h2.5v2.5h-2.5z"/><path fill="#c880c8" fill-opacity="0.6400000000000001" d="M23.8 12.3h1.6v1.6h-1.6zM18.8 12.8h0.9v0.9h-0.9zM13.9 8.2h1.6v1.6h-1.6z"/><path fill="#d8b850" fill-opacity="0.32000000000000006" d="M21.7 9.2h2.5v2.5h-2.5z"/><path fill="#b868b8" fill-opacity="0.32000000000000006" d="M26.3 12.1h1.6v1.6h-1.6zM22.2 13h1.2v1.2h-1.2zM18.9 13.7h0.9v0.9h-0.9zM26 12h1.2v1.2h-1.2zM19.8 11h1.6v1.6h-1.6z"/><path fill="#80a8c0" fill-opacity="0.6400000000000001" d="M17.1 13.3h2.5v2.5h-2.5zM15 9.7h1.2v1.2h-1.2z"/><path fill="#b868b8" fill-opacity="0.6400000000000001" d="M14.6 13.3h1.2v1.2h-1.2zM22.7 10.4h1.2v1.2h-1.2z"/><path fill="#80a8c0" fill-opacity="0.32000000000000006" d="M10.8 11.6h2.5v2.5h-2.5z"/><path fill="#e0c868" fill-opacity="0.32000000000000006" d="M18.4 13.9h1.6v1.6h-1.6zM22.7 18.2h1.6v1.6h-1.6z"/><path fill="#d0a090" fill-opacity="0.6400000000000001" d="M19.1 14.1h1.2v1.2h-1.2z"/><path fill="#e0c868" fill-opacity="0.48" d="M19.2 10.8h1.6v1.6h-1.6z"/><path fill="#a058a8" fill-opacity="0.6400000000000001" d="M12.1 17.3h1.9v1.9h-1.9zM25.9 13.8h1.9v1.9h-1.9z"/><path fill="#d898d0" fill-opacity="0.32000000000000006" d="M16.2 11.7h1.2v1.2h-1.2zM16.7 10.5h2.5v2.5h-2.5z"/><path fill="#b868b8" fill-opacity="0.48" d="M11 15.6h2.5v2.5h-2.5z"/><path fill="#c880c8" fill-opacity="0.48" d="M20.2 14.8h1.9v1.9h-1.9z"/><path fill="#d8b850" fill-opacity="0.48" d="M17.6 10.1h2.5v2.5h-2.5z"/><path fill="#80a8c0" fill-opacity="0.48" d="M14.7 9.3h1.6v1.6h-1.6z"/><path fill="#c880c8" fill-opacity="0.42" d="M42.1 12.4h2.5v2.5h-2.5zM43.9 11h1.2v1.2h-1.2z"/><path fill="#c880c8" fill-opacity="0.27999999999999997" d="M45.5 12.5h1.9v1.9h-1.9zM46.7 12.8h1.6v1.6h-1.6z"/><path fill="#d8b850" fill-opacity="0.27999999999999997" d="M46.1 13.3h1.6v1.6h-1.6zM46.1 14h1.2v1.2h-1.2zM45.2 11.8h1.9v1.9h-1.9z"/><path fill="#a058a8" fill-opacity="0.5599999999999999" d="M45.9 13h1.2v1.2h-1.2z"/><path fill="#c880c8" fill-opacity="0.5599999999999999" d="M48.5 14.8h2.5v2.5h-2.5z"/><path fill="#80a8c0" fill-opacity="0.5599999999999999" d="M48 15.3h0.9v0.9h-0.9zM50.4 11.1h2.5v2.5h-2.5z"/><path fill="#d8b850" fill-opacity="0.5599999999999999" d="M44.9 12.5h0.9v0.9h-0.9z"/><path fill="#d898d0" fill-opacity="0.27999999999999997" d="M46.9 7.2h1.6v1.6h-1.6zM43.9 9.8h1.2v1.2h-1.2z"/><path fill="#d898d0" fill-opacity="0.5599999999999999" d="M40 13.4h1.9v1.9h-1.9z"/><path fill="#e0c868" fill-opacity="0.5599999999999999" d="M38.9 12h1.2v1.2h-1.2z"/><path fill="#a058a8" fill-opacity="0.27999999999999997" d="M49.7 13.3h1.2v1.2h-1.2zM40.5 12.9h1.2v1.2h-1.2zM39.8 11.1h0.9v0.9h-0.9z"/><path fill="#e0c868" fill-opacity="0.42" d="M40.2 10.2h1.9v1.9h-1.9z"/><path fill="#d0a090" fill-opacity="0.27999999999999997" d="M44.6 12.3h1.6v1.6h-1.6z"/><path fill="#d0a090" fill-opacity="0.42" d="M42.2 12.3h0.9v0.9h-0.9z"/><path fill="#80a8c0" fill-opacity="0.36000000000000004" d="M32.5 8.4h1.2v1.2h-1.2z"/><path fill="#d0a090" fill-opacity="0.27" d="M43.4 12h1.2v1.2h-1.2zM27.8 9h2.5v2.5h-2.5z"/><path fill="#d0a090" fill-opacity="0.36000000000000004" d="M28.7 9.8h0.9v0.9h-0.9z"/><path fill="#d0a090" fill-opacity="0.18000000000000002" d="M38.1 9.3h1.6v1.6h-1.6zM38.8 8.9h1.6v1.6h-1.6z"/><path fill="#a058a8" fill-opacity="0.36000000000000004" d="M35.8 11.9h0.9v0.9h-0.9zM37.1 11.6h1.6v1.6h-1.6z"/><path fill="#d898d0" fill-opacity="0.36000000000000004" d="M43.4 9.5h1.2v1.2h-1.2z"/><path fill="#b868b8" fill-opacity="0.18000000000000002" d="M40.2 7.6h0.9v0.9h-0.9zM25.1 12.6h2.5v2.5h-2.5z"/><path fill="#e0c868" fill-opacity="0.27" d="M38 11.4h2.5v2.5h-2.5z"/><path fill="#80a8c0" fill-opacity="0.18000000000000002" d="M35.8 9.5h2.5v2.5h-2.5z"/><path fill="#b868b8" fill-opacity="0.27" d="M26.7 9h1.6v1.6h-1.6z"/><path fill="#c880c8" fill-opacity="0.36000000000000004" d="M28.9 9.8h2.5v2.5h-2.5z"/><path fill="#a058a8" fill-opacity="0.18000000000000002" d="M31.5 12.7h1.2v1.2h-1.2z"/><path fill="#c880c8" fill-opacity="0.27" d="M27.5 10.2h0.9v0.9h-0.9z"/><path fill="#d898d0" fill-opacity="0.27" d="M28.7 7.6h1.2v1.2h-1.2z"/><path fill="#c880c8" fill-opacity="0.3" d="M49.5 27h1.6v1.6h-1.6z"/><path fill="#d0a090" fill-opacity="0.2" d="M52.5 25h1.2v1.2h-1.2zM53.3 24.3h1.9v1.9h-1.9z"/><path fill="#d898d0" fill-opacity="0.3" d="M46.4 27.1h1.2v1.2h-1.2z"/><path fill="#80a8c0" fill-opacity="0.3" d="M47.1 28.8h1.2v1.2h-1.2z"/><path fill="#a058a8" fill-opacity="0.3" d="M48.9 23.4h1.2v1.2h-1.2z"/><path fill="#b868b8" fill-opacity="0.2" d="M53.2 27.7h0.9v0.9h-0.9z"/><path fill="#c880c8" fill-opacity="0.9" d="M1.5 18a1.5 1.5 0 1 0 3 0a1.5 1.5 0 1 0 -3 0zM62.3 28.8h2.3v2.3h-2.3zM62.8 20.8h2.5v2.5h-2.5z"/></g></g><polygon points="0.8,0.95 67.9,0.95 0.8,38.8" fill="url(#gl37)"/><rect x="0.8" y="0.95" width="67.1" height="0.8" fill="#fff" fill-opacity="0.07"/><rect x="0.8" y="0.95" width="0.7" height="36.8" fill="#fff" fill-opacity="0.05"/></g></g></svg></div><div class="lb" style="left:631.1px"><span style="top:642.1px;letter-spacing:0.19px">flower-frame-</span><span style="top:660.1px;letter-spacing:0.04px">alpha-lo...utc.mov</span></div>
<div class="ic" style="left:793px;top:568px"><svg width="69" height="58" viewBox="0 0 69 58" ><g transform="translate(0.89,0.68)"><defs><linearGradient id="fb38" x1="0" y1="0" x2="0" y2="1"><stop offset="0" stop-color="#60b1e4"/><stop offset="0.45" stop-color="#3f8ed0"/><stop offset="1" stop-color="#3f8ed0"/></linearGradient><linearGradient id="ff38" x1="0" y1="0" x2="0" y2="1"><stop offset="0" stop-color="#7ccdfb"/><stop offset="0.6" stop-color="#76c8f8"/><stop offset="0.85" stop-color="#6cbef2"/><stop offset="1" stop-color="#5aaee6"/></linearGradient></defs><g><path d="M0.3 54 Q0.3 57.3 3.4 57.3 L64.3 57.3 Q67.4 57.3 67.4 54 Z" fill="#000" fill-opacity="0.35"/><path d="M0 3.2 Q0 0 3.2 0 L19.5 0 C22.6 0 24 1.2 26 2.8 C28 4.4 29.2 5.1 32.2 5.1 L64.5 5.1 Q67.7 5.1 67.7 8.3 L67.7 20 L0 20 Z" fill="url(#fb38)"/><path d="M0 12.2 Q0 9.35 2.9 9.35 L64.8 9.35 Q67.7 9.35 67.7 12.2 L67.7 53.4 Q67.7 56.6 64.5 56.6 L3.2 56.6 Q0 56.6 0 53.4 Z" fill="url(#ff38)"/><rect x="1.5" y="9.35" width="64.7" height="0.7" fill="#92d8fd" fill-opacity="0.8"/></g></g></svg></div><div class="lb" style="left:757.4px"><span style="top:642.1px;letter-spacing:0.47px">glitch</span></div>
<div class="ic" style="left:919px;top:569px"><svg width="68.4" height="53" viewBox="0 0 68.4 53" ><g transform="translate(0.48,0.9)"><defs><linearGradient id="gl39" gradientUnits="userSpaceOnUse" x1="0" y1="0" x2="68" y2="14"><stop offset="0" stop-color="#fff" stop-opacity="0.26"/><stop offset="0.5" stop-color="#fff" stop-opacity="0.17"/><stop offset="1" stop-color="#fff" stop-opacity="0.07"/></linearGradient><clipPath id="cp39"><rect x="-0.35" y="0.00" width="69.3" height="52.80"/></clipPath></defs><g transform="translate(0,0)"><rect x="-0.4" y="0.3" width="69.2" height="54.0" fill="#000" fill-opacity="0.25"/><rect x="0" y="0" width="68.4" height="52.8" fill="#000"/><g clip-path="url(#cp39)"><g transform="translate(-0.35,0.555) scale(1.019,1.0135)"></g></g><polygon points="0.8,0.95 67.9,0.95 0.8,38.8" fill="url(#gl39)"/><rect x="0.8" y="0.95" width="67.1" height="0.8" fill="#fff" fill-opacity="0.07"/><rect x="0.8" y="0.95" width="0.7" height="36.8" fill="#fff" fill-opacity="0.05"/></g></g></svg></div><div class="lb" style="left:883.7px"><span style="top:642.1px;letter-spacing:0.62px">glow-fire-</span><span style="top:660.1px;letter-spacing:0.04px">particle...-utc.mov</span></div>
</body></html>
